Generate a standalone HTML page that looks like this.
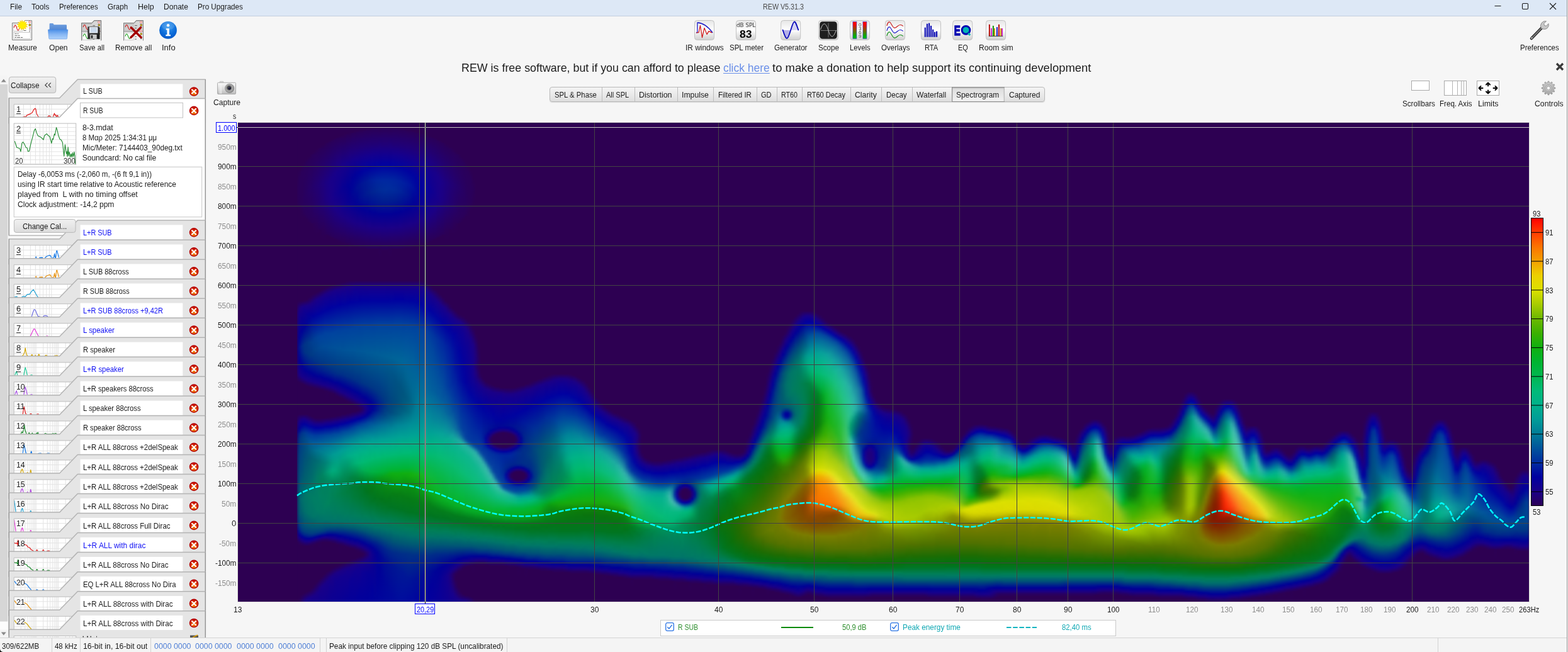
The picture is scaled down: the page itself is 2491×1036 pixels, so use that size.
<!DOCTYPE html>
<html lang="en"><head><meta charset="utf-8"><title>REW V5.31.3</title>
<style>
html,body{margin:0;padding:0;}
body{width:2491px;height:1036px;overflow:hidden;background:#f6f6f6;font-family:"Liberation Sans",sans-serif;position:relative;}
.t{position:absolute;white-space:pre;margin:0;padding:0;}
.b{position:absolute;box-sizing:border-box;display:block;}
.spi{position:absolute;left:0;top:0;width:2051px;height:761px;filter:url(#hb);}
.spi i{position:absolute;top:0;height:761px;display:block;}
</style></head><body>
<div class="b" style="left:2489.00px;top:0.00px;width:2.00px;height:1036.00px;background:#f0f0f0;border-left:1px solid #9a9a9a;"></div>
<div class="b" style="left:378.00px;top:195.00px;width:2051.00px;height:761.00px;background:#2d0052;"></div>
<svg class="b" width="0" height="0" style="left:0;top:0"><defs><filter id="hb" x="0" y="0" width="1" height="1" color-interpolation-filters="sRGB"><feGaussianBlur stdDeviation="1.800 0" edgeMode="duplicate"/></filter></defs></svg>
<div class="b" style="left:378px;top:195px;width:94px;height:761px;background:#2d0052;z-index:1;"></div>
<div class="b sp" style="left:378px;top:195px;width:2051px;height:761px;overflow:hidden;"><div class="spi"><i style="left:92px;width:4px;background:linear-gradient(#2d0052 1px,#2d0052 87px,#2c0056 103px,#2c0055 121px,#2d0052 135px,#2d0052 285px,#24006c 303px,#170074 363px,#24006b 397px,#2d0052 411px,#2d0052 465px,#23006d 479px,#170074 491px,#16116f 503px,#161d6a 527px,#162467 565px,#162c63 607px,#161f69 633px,#160e70 643px,#180073 649px,#24006b 657px,#2d0052 667px,#2d0052 761px)"></i><i style="left:96px;width:4px;background:linear-gradient(#2d0052 1px,#2d0052 75px,#2a005b 89px,#2a005a 127px,#2d0052 139px,#2d0052 283px,#28005f 287px,#1c0083 295px,#13008c 305px,#010395 341px,#001690 357px,#030094 379px,#1a0086 401px,#2d0052 413px,#2d0052 463px,#200078 471px,#17008a 475px,#030295 485px,#000d94 489px,#002a8b 495px,#003785 503px,#00477c 543px,#004e78 565px,#00616e 597px,#005973 621px,#003d81 641px,#00208d 649px,#050193 655px,#16008a 659px,#29005e 667px,#2d0052 671px,#2d0052 753px,#2b0059 761px)"></i><i style="left:100px;width:4px;background:linear-gradient(#2d0052 1px,#2d0052 67px,#2a005b 79px,#2a005b 129px,#2c0055 141px,#2d0052 157px,#2d0052 283px,#1a0087 293px,#0a0091 311px,#000295 331px,#002a8a 355px,#00248c 365px,#010195 385px,#16008a 403px,#1a0086 405px,#2d0052 415px,#2d0052 463px,#1a0086 471px,#040098 479px,#000999 483px,#00348d 493px,#004185 501px,#005078 551px,#00646c 585px,#006e6b 599px,#00656c 617px,#00487c 643px,#003883 649px,#001690 655px,#000794 657px,#050093 659px,#180088 663px,#280060 669px,#2d0052 673px,#2d0052 749px,#24006d 759px,#23006f 761px)"></i><i style="left:104px;width:4px;background:linear-gradient(#2d0052 1px,#2d0052 61px,#2a005b 73px,#28005f 121px,#2a005a 143px,#2d0052 151px,#2d0052 281px,#2c0056 283px,#1b0084 291px,#11008f 297px,#000395 325px,#003486 353px,#003187 365px,#020095 393px,#1a0087 407px,#2d0052 417px,#2d0052 463px,#1a0088 471px,#01009d 479px,#003a93 493px,#004989 503px,#005178 531px,#00646c 577px,#007568 595px,#006f6b 617px,#005675 639px,#00417f 649px,#00268b 655px,#000894 659px,#050093 661px,#190088 665px,#250069 669px,#2d0052 673px,#2d0052 747px,#1d0080 759px,#1c0083 761px)"></i><i style="left:108px;width:4px;background:linear-gradient(#2d0052 1px,#2d0052 57px,#2a005a 63px,#270063 111px,#2a005a 149px,#2d0052 155px,#2d0052 281px,#1a0088 291px,#070096 305px,#000596 319px,#001c90 335px,#003688 349px,#003785 365px,#00218d 379px,#010195 395px,#1a0087 409px,#2d0052 419px,#2d0052 463px,#220070 469px,#18008a 473px,#00039f 481px,#00399a 493px,#004b94 501px,#005581 517px,#005874 537px,#00676c 573px,#007866 591px,#007369 619px,#005774 641px,#003f80 651px,#001f8d 657px,#010095 661px,#16008a 665px,#2d0052 673px,#2d0052 745px,#1a0087 757px,#180089 761px)"></i><i style="left:112px;width:4px;background:linear-gradient(#2d0052 1px,#2d0052 53px,#2a005b 59px,#260067 107px,#2a005a 153px,#2d0052 159px,#2d0052 277px,#260067 283px,#1b0085 289px,#070097 303px,#000599 313px,#002491 335px,#003b8b 349px,#003885 369px,#00218d 383px,#000195 397px,#1b0086 411px,#280062 417px,#2d0052 421px,#2d0052 465px,#220071 471px,#18018b 475px,#0104a0 483px,#003c9d 495px,#005397 505px,#005e88 517px,#005c73 533px,#006a6c 569px,#007b65 591px,#007668 621px,#005a72 641px,#003b82 653px,#00238c 657px,#020095 661px,#190088 665px,#260066 669px,#2d0052 673px,#2d0052 743px,#1a0088 755px,#16008b 761px)"></i><i style="left:116px;width:4px;background:linear-gradient(#2d0052 1px,#2d0052 49px,#2a0059 51px,#24006a 103px,#29005d 149px,#2a0059 159px,#2d0052 161px,#2d0052 273px,#270064 279px,#1a0087 287px,#01009d 307px,#003093 337px,#003f90 349px,#003b86 369px,#00268c 383px,#000195 399px,#17008a 411px,#210074 415px,#2d0052 421px,#2d0052 467px,#220072 473px,#18018b 477px,#03019e 483px,#0110a0 487px,#01409e 497px,#005c98 509px,#006687 521px,#006273 533px,#006a6c 559px,#007d64 595px,#007568 625px,#005873 643px,#003c82 653px,#00208d 657px,#000c93 659px,#060093 661px,#13008c 663px,#24006c 667px,#2c0056 671px,#2d0052 683px,#2d0052 739px,#23006d 747px,#1a0087 753px,#15008b 761px)"></i><i style="left:120px;width:4px;background:linear-gradient(#2d0052 1px,#2d0052 45px,#2a005b 51px,#23006e 101px,#270064 141px,#2c0056 163px,#2d0052 173px,#2d0052 271px,#280060 275px,#1b0085 283px,#00029f 307px,#003f96 343px,#00428c 361px,#003287 379px,#000a93 397px,#010095 401px,#1a0088 413px,#270063 419px,#2d0052 423px,#2d0052 469px,#210074 475px,#15008d 479px,#0001a0 485px,#003d9e 497px,#005d9a 509px,#006e8d 521px,#006672 535px,#007469 563px,#007f63 599px,#007767 625px,#005d70 641px,#00417f 651px,#002a8a 655px,#010295 659px,#1a0086 663px,#270063 667px,#2d0052 671px,#2d0052 733px,#28005f 739px,#1a0087 751px,#14008c 761px)"></i><i style="left:124px;width:4px;background:linear-gradient(#2d0052 1px,#2d0052 41px,#2a005c 49px,#220072 99px,#25006a 135px,#2c0056 167px,#2d0052 179px,#2d0052 269px,#280061 273px,#1a0088 281px,#0002a0 305px,#00419a 341px,#004590 359px,#003586 379px,#00198f 393px,#010095 403px,#17008a 413px,#210075 417px,#2d0052 423px,#2d0052 469px,#270062 473px,#16008c 479px,#0000a0 485px,#003d9e 497px,#005f9b 509px,#007491 521px,#006c72 537px,#007b64 563px,#007e64 583px,#007e64 615px,#006e6c 633px,#005973 643px,#003e81 651px,#00218d 655px,#000b93 657px,#080092 659px,#16008a 661px,#250068 665px,#2d0052 669px,#2d0052 729px,#1a0086 747px,#13008d 761px)"></i><i style="left:128px;width:4px;background:linear-gradient(#2d0052 1px,#2d0052 39px,#2a0059 41px,#200076 97px,#220070 129px,#2a0059 169px,#2d0052 171px,#2d0052 267px,#190088 279px,#0002a0 303px,#00419d 339px,#004894 357px,#003686 381px,#00188f 395px,#000295 403px,#190088 415px,#270063 421px,#2d0052 425px,#2d0052 469px,#280061 473px,#16008c 479px,#0001a0 485px,#00409e 497px,#00679a 511px,#007a93 521px,#007274 537px,#007e61 561px,#007e5d 569px,#008162 593px,#007c64 619px,#00706b 633px,#005873 643px,#00447e 649px,#002b8a 653px,#020095 657px,#1c0081 661px,#23006d 663px,#2c0056 667px,#2d0052 679px,#2d0052 725px,#1c0082 739px,#16008a 747px,#12008d 761px)"></i><i style="left:132px;width:4px;background:linear-gradient(#2d0052 1px,#2d0052 35px,#29005c 43px,#1f007b 97px,#210075 127px,#2c0056 173px,#2d0052 185px,#2d0052 265px,#180089 277px,#0003a0 301px,#00439d 339px,#004a95 357px,#003886 381px,#001d8e 395px,#000095 405px,#16008a 415px,#1c0083 417px,#2d0052 425px,#2d0052 469px,#220071 475px,#15008d 479px,#0003a0 485px,#00439e 497px,#007498 515px,#007f92 523px,#007975 539px,#008362 559px,#00815b 567px,#00815f 595px,#007d63 619px,#00716b 633px,#005774 643px,#004080 649px,#00238c 653px,#000c93 655px,#080092 657px,#17008a 659px,#260066 663px,#2d0052 667px,#2d0052 721px,#190088 737px,#11008e 761px)"></i><i style="left:136px;width:4px;background:linear-gradient(#2d0052 1px,#2d0052 33px,#29005c 41px,#1d007f 95px,#1e007c 123px,#2c0056 175px,#2d0052 185px,#2d0052 263px,#1c0084 273px,#110091 281px,#0003a0 299px,#00419e 335px,#004b98 355px,#003885 383px,#00218d 395px,#010095 407px,#190088 417px,#270063 423px,#2d0052 427px,#2d0052 469px,#200077 475px,#1a0087 477px,#03009d 483px,#0012a0 487px,#00469d 497px,#007d97 517px,#00858d 527px,#007f75 541px,#008c69 557px,#00845d 567px,#00805e 587px,#008160 611px,#007569 631px,#005575 643px,#003b82 649px,#001c8e 653px,#000694 655px,#190088 659px,#270063 663px,#2d0052 667px,#2d0052 717px,#190088 733px,#10008f 761px)"></i><i style="left:140px;width:4px;background:linear-gradient(#2d0052 1px,#2d0052 31px,#2a0059 33px,#1b0084 95px,#1c0082 121px,#2a0059 177px,#2d0052 179px,#2d0052 261px,#1c0084 271px,#110091 279px,#0002a0 297px,#00429e 335px,#004c97 357px,#003885 385px,#00218d 397px,#000295 407px,#16008a 417px,#1c0084 419px,#28005f 425px,#2c0055 427px,#2d0052 443px,#2d0052 467px,#2c0055 469px,#1e007c 475px,#17008a 477px,#01009f 483px,#00499d 497px,#008098 517px,#008c90 527px,#008878 541px,#009871 555px,#008c61 565px,#00805d 577px,#00835d 605px,#007568 631px,#005b72 641px,#004080 647px,#001391 653px,#000095 655px,#190088 659px,#260065 663px,#2d0052 667px,#2d0052 713px,#190088 729px,#0e0090 761px)"></i><i style="left:144px;width:4px;background:linear-gradient(#2d0052 1px,#2d0052 29px,#2a0059 31px,#190088 93px,#1b0085 125px,#2a0059 179px,#2d0052 181px,#2d0052 259px,#1c0083 269px,#110090 277px,#0001a0 295px,#00439e 335px,#004e97 357px,#003885 387px,#00208d 399px,#000195 409px,#180089 419px,#2d0052 429px,#2d0052 467px,#270062 471px,#16008c 477px,#0001a0 483px,#004b9d 497px,#008398 517px,#00938f 529px,#00927c 541px,#00a276 555px,#009566 563px,#00835d 573px,#00835a 601px,#007668 631px,#00676c 637px,#005376 643px,#002f88 649px,#010095 655px,#17008a 659px,#29005e 665px,#2d0052 667px,#2d0052 711px,#1b0084 723px,#13008d 735px,#0d0091 761px)"></i><i style="left:148px;width:4px;background:linear-gradient(#2d0052 1px,#2d0052 27px,#2a005a 29px,#180089 87px,#180089 121px,#1e007c 141px,#2a005a 181px,#2d0052 183px,#2d0052 257px,#180089 269px,#0001a0 293px,#00449e 335px,#004f98 357px,#003a85 387px,#002a8a 397px,#010095 411px,#1a0087 421px,#270062 427px,#2d0052 431px,#2d0052 467px,#210073 473px,#1c0084 475px,#04009c 481px,#0004a0 483px,#00469d 495px,#007e98 513px,#009894 527px,#009b7f 541px,#00a97c 553px,#00a370 559px,#00855c 571px,#008156 591px,#007e5e 615px,#007469 633px,#005c71 641px,#003c81 647px,#000195 655px,#14008c 659px,#1d0081 661px,#270062 665px,#2d0052 669px,#2d0052 707px,#260066 713px,#190088 721px,#0d0091 751px,#0c0092 761px)"></i><i style="left:152px;width:4px;background:linear-gradient(#2d0052 1px,#2d0052 25px,#2a005a 27px,#180089 81px,#13008c 115px,#1b0085 137px,#2a005a 183px,#2d0052 185px,#2d0052 257px,#190089 267px,#0003a0 293px,#00439e 333px,#005099 357px,#003a85 389px,#002a8a 399px,#020095 413px,#1b0085 423px,#2b0057 431px,#2d0052 435px,#2d0052 465px,#2c0055 467px,#1f007b 473px,#180089 475px,#02009e 481px,#004a9d 495px,#008198 513px,#009c93 527px,#00a081 541px,#00a97a 553px,#009c6a 561px,#00855a 571px,#008253 593px,#007965 629px,#00706b 635px,#005c71 641px,#003d81 647px,#000395 655px,#1a0087 661px,#250067 665px,#2d0052 669px,#2d0052 705px,#28005f 709px,#1b0085 717px,#12008e 727px,#0b0093 761px)"></i><i style="left:156px;width:4px;background:linear-gradient(#2d0052 1px,#2d0052 23px,#2a0059 25px,#1e007e 63px,#16008b 79px,#10008e 113px,#1b0085 141px,#2a005b 183px,#2a0059 185px,#2d0052 187px,#2d0052 255px,#23006e 261px,#1b0085 265px,#0e0093 275px,#0002a0 291px,#00429e 331px,#005198 359px,#003c85 389px,#002e88 399px,#000195 413px,#1b0085 425px,#2d0052 435px,#2d0052 465px,#220070 471px,#15008c 475px,#0001a0 481px,#004c9d 495px,#008198 511px,#009d94 525px,#00a47d 545px,#00a372 555px,#008557 571px,#00814f 591px,#007e5c 615px,#007469 633px,#005c71 641px,#003087 649px,#000794 655px,#040094 657px,#15008b 661px,#2a005c 669px,#2d0052 671px,#2d0052 703px,#29005f 707px,#1b0086 715px,#100090 729px,#0a0094 761px)"></i><i style="left:160px;width:4px;background:linear-gradient(#2d0052 1px,#2d0052 21px,#2a005b 25px,#1d007f 61px,#16008b 75px,#0c0090 109px,#1b0085 145px,#2a005c 183px,#2a0059 187px,#2d0052 189px,#2d0052 255px,#1a0088 265px,#0000a0 289px,#00429e 331px,#005298 359px,#003d85 389px,#003087 399px,#000195 415px,#1a0087 427px,#2d0052 437px,#2d0052 465px,#200078 471px,#1a0087 473px,#03009e 479px,#001ea0 485px,#00509c 495px,#008498 511px,#009e95 523px,#00a17f 539px,#009c6b 555px,#008250 573px,#00804c 591px,#007e5b 615px,#007568 633px,#005d70 641px,#003286 649px,#000195 657px,#180089 663px,#280060 669px,#2c0055 671px,#2d0052 687px,#2d0052 701px,#29005e 705px,#1b0085 713px,#12008f 723px,#090094 761px)"></i><i style="left:164px;width:4px;background:linear-gradient(#2d0052 1px,#2d0052 19px,#29005d 27px,#17008a 69px,#090092 103px,#13008c 135px,#1c0083 149px,#29005d 183px,#2d0052 193px,#2d0052 253px,#23006d 259px,#1c0084 263px,#110091 271px,#0002a0 289px,#00439e 331px,#005297 361px,#003c85 391px,#002d89 401px,#000195 417px,#1a0086 429px,#270063 435px,#2d0052 439px,#2d0052 463px,#230070 469px,#16008c 473px,#0002a0 479px,#00469d 491px,#008398 509px,#009f95 521px,#00a484 533px,#009461 557px,#00814b 573px,#007f47 589px,#007e5a 615px,#007667 633px,#005e6f 641px,#003386 649px,#000495 657px,#15008b 663px,#1d0081 665px,#270064 669px,#2d0052 673px,#2d0052 699px,#29005e 703px,#1b0085 711px,#12008f 721px,#080095 761px)"></i><i style="left:168px;width:4px;background:linear-gradient(#2d0052 1px,#2d0052 17px,#29005e 27px,#16008b 67px,#060093 101px,#0f008e 133px,#1b0084 151px,#29005e 183px,#2d0052 195px,#2d0052 253px,#1a0088 263px,#0003a0 289px,#00429e 329px,#005398 361px,#003f86 389px,#003187 401px,#000195 419px,#1b0085 431px,#2d0052 441px,#2d0052 463px,#200077 469px,#1a0087 471px,#03009d 477px,#0013a0 481px,#004b9d 491px,#008398 507px,#00a095 519px,#00a786 531px,#008d58 559px,#007f45 575px,#007e45 591px,#007c60 625px,#007469 635px,#005774 643px,#001e8e 653px,#020095 659px,#190088 665px,#280061 671px,#2c0056 673px,#2d0052 679px,#2d0052 699px,#1b0085 709px,#120090 719px,#070096 761px)"></i><i style="left:172px;width:4px;background:linear-gradient(#2d0052 1px,#2d0052 17px,#2a0059 19px,#1f0079 49px,#15008c 65px,#030095 99px,#0a0091 129px,#1b0085 153px,#29005e 185px,#2a0059 191px,#2d0052 193px,#2d0052 251px,#2c0056 253px,#1c0083 261px,#13008f 267px,#0001a0 287px,#00429e 329px,#005498 361px,#004086 389px,#003187 403px,#010095 421px,#1a0087 433px,#2d0052 443px,#2d0052 461px,#270062 465px,#16008b 471px,#0002a0 477px,#004f9c 491px,#008798 507px,#00a393 519px,#00ab88 529px,#00905a 555px,#007f43 571px,#007d3f 587px,#007d5c 621px,#007469 635px,#005973 643px,#00188f 655px,#000395 659px,#1b0085 667px,#29005e 673px,#2d0052 675px,#2d0052 697px,#1c0083 707px,#14008e 713px,#060097 759px,#060097 761px)"></i><i style="left:176px;width:4px;background:linear-gradient(#2d0052 1px,#2d0052 15px,#29005d 23px,#1c0082 53px,#0d0092 73px,#000196 103px,#090092 131px,#1b0085 155px,#28005f 185px,#2c0056 193px,#2d0052 205px,#2d0052 251px,#1b0086 261px,#0000a0 285px,#00439e 329px,#005598 361px,#004086 391px,#003087 405px,#010095 423px,#1a0087 435px,#2d0052 445px,#2d0052 461px,#210074 467px,#1b0085 469px,#02009e 475px,#004c9d 489px,#008698 505px,#00a394 517px,#00ae88 529px,#009d67 547px,#008245 565px,#007b3a 581px,#007e47 601px,#007a64 631px,#00706b 637px,#005b71 643px,#001c8e 655px,#010095 661px,#16008a 667px,#270063 673px,#2d0052 677px,#2d0052 695px,#2b0056 697px,#190089 707px,#0b0095 729px,#050098 761px)"></i><i style="left:180px;width:4px;background:linear-gradient(#2d0052 1px,#2d0052 15px,#2a005a 17px,#1f0079 45px,#16008b 59px,#010098 89px,#000595 111px,#080092 133px,#1b0085 157px,#280060 185px,#2a005a 193px,#2d0052 195px,#2d0052 251px,#190089 261px,#0001a0 285px,#00429e 327px,#005598 361px,#004186 391px,#002f88 407px,#010195 425px,#190087 437px,#2d0052 447px,#2d0052 459px,#23006f 465px,#16008c 469px,#05009b 473px,#0005a0 475px,#00419e 485px,#008498 503px,#00a394 515px,#00b087 529px,#00a86f 543px,#008443 563px,#007a35 579px,#007c3f 597px,#007c5e 625px,#007568 635px,#005d70 643px,#001690 657px,#000395 661px,#1a0086 669px,#29005e 675px,#2d0052 677px,#2d0052 693px,#29005f 697px,#1a0088 705px,#0c0094 723px,#040099 761px)"></i><i style="left:184px;width:4px;background:linear-gradient(#2d0052 1px,#2d0052 13px,#2a005a 17px,#200078 43px,#16008b 57px,#010099 83px,#000a94 107px,#040094 131px,#1b0085 159px,#28005f 187px,#2b0059 195px,#2d0052 197px,#2d0052 251px,#1c0083 259px,#12008f 265px,#0002a0 285px,#00419e 325px,#005699 361px,#004387 391px,#003386 407px,#000195 427px,#190088 439px,#29005e 447px,#2d0052 451px,#2d0052 459px,#200078 465px,#190088 467px,#0002a0 473px,#00409e 483px,#007c98 499px,#00a294 513px,#00b288 527px,#00b074 541px,#00853f 563px,#007a32 577px,#007b39 595px,#007d5b 623px,#007767 635px,#005f6f 643px,#001b8f 657px,#010095 663px,#16008a 669px,#270063 675px,#2d0052 679px,#2d0052 693px,#1b0086 703px,#0f0092 715px,#040099 761px)"></i><i style="left:188px;width:4px;background:linear-gradient(#2d0052 1px,#2d0052 13px,#2a005a 15px,#200077 41px,#15008d 57px,#00019b 81px,#000f93 103px,#000695 123px,#040094 135px,#1b0084 161px,#280060 187px,#2a005a 195px,#2d0052 197px,#2d0052 251px,#1b0084 259px,#12008f 265px,#0003a0 285px,#00429e 325px,#005797 363px,#004387 393px,#002f88 411px,#000195 429px,#180089 441px,#2b0057 451px,#2d0052 455px,#2d0052 457px,#220071 463px,#14008d 467px,#02009e 471px,#00499d 483px,#008798 501px,#00a493 513px,#00b386 527px,#00b574 541px,#00994e 555px,#008036 567px,#00782e 581px,#007b3a 599px,#007d5b 625px,#007468 637px,#005b71 645px,#001690 659px,#000395 663px,#1a0087 671px,#280061 677px,#2c0056 679px,#2d0052 685px,#2d0052 691px,#1b0084 701px,#110090 709px,#03009a 755px,#03009a 761px)"></i><i style="left:192px;width:4px;background:linear-gradient(#2d0052 1px,#2d0052 11px,#2a005a 15px,#1f0079 41px,#15008c 55px,#00019d 79px,#001293 99px,#000e93 119px,#020095 135px,#1b0086 161px,#280061 187px,#2b0059 197px,#2d0052 199px,#2d0052 251px,#1b0084 259px,#12008f 265px,#0000a0 283px,#00409e 323px,#005798 363px,#004487 393px,#003087 413px,#000295 431px,#16008a 443px,#1f0079 447px,#29005d 453px,#2b0057 455px,#270062 459px,#18008a 465px,#06009a 469px,#00059f 471px,#003b9e 479px,#005e9b 487px,#009798 505px,#00ae8d 519px,#00b772 541px,#00a452 553px,#008232 567px,#00782a 579px,#007934 597px,#007d5a 625px,#007668 637px,#005674 647px,#001391 661px,#010195 665px,#1b0085 673px,#28005f 679px,#2d0052 683px,#2d0052 689px,#24006c 695px,#1c0083 699px,#13008f 705px,#04009a 745px,#02009b 761px)"></i><i style="left:196px;width:4px;background:linear-gradient(#2d0052 1px,#2d0052 11px,#2a005b 15px,#1f007a 41px,#14008e 55px,#00029e 77px,#001694 97px,#001392 117px,#020095 137px,#1b0085 163px,#280060 189px,#2a0059 197px,#2d0052 199px,#2d0052 251px,#1b0084 259px,#12008f 265px,#0001a0 283px,#00419e 323px,#005898 363px,#004688 393px,#003586 413px,#020095 435px,#1a0087 447px,#24006a 453px,#250069 457px,#1e007d 461px,#100090 465px,#01029e 469px,#00429e 479px,#079 493px,#00a294 509px,#00b287 523px,#00b974 539px,#00ae57 551px,#008430 567px,#007826 577px,#00782c 593px,#007d46 613px,#007b62 633px,#006e6c 641px,#005a72 647px,#001a8f 661px,#010095 667px,#15008b 673px,#1c0083 675px,#28005f 681px,#2d0052 685px,#2b0057 689px,#190089 699px,#0b0095 715px,#01009b 761px)"></i><i style="left:200px;width:4px;background:linear-gradient(#2d0052 1px,#2d0052 11px,#2a005a 13px,#210076 37px,#15008d 53px,#00039f 75px,#001895 95px,#001892 115px,#020095 139px,#1c0083 165px,#280061 189px,#2a005a 197px,#2d0052 199px,#2d0052 251px,#1b0084 259px,#100091 267px,#0001a0 283px,#00429e 323px,#005998 363px,#004989 391px,#003586 415px,#010095 437px,#1b0085 451px,#1e007c 455px,#15008b 461px,#01029b 467px,#00499d 479px,#008698 497px,#00a394 509px,#00b386 523px,#00b970 539px,#00ae4f 553px,#007f27 571px,#007520 583px,#007a38 607px,#007e57 625px,#007568 639px,#005674 649px,#000f92 665px,#020095 669px,#1b0084 677px,#270063 683px,#280060 687px,#200078 693px,#180089 697px,#0a0095 715px,#01009c 761px)"></i><i style="left:204px;width:4px;background:linear-gradient(#2d0052 1px,#2d0052 9px,#2a005a 13px,#200077 37px,#16008c 51px,#0002a0 73px,#001b97 93px,#001c91 113px,#000595 135px,#050094 143px,#1b0085 165px,#280062 189px,#2b0059 199px,#2d0052 201px,#2d0052 251px,#1b0084 259px,#100091 267px,#0001a0 283px,#00429e 323px,#005a97 365px,#004888 395px,#003586 417px,#000195 439px,#13008c 455px,#030096 463px,#000499 465px,#00489c 477px,#008998 497px,#00a593 509px,#00b484 523px,#00b971 537px,#00b14d 553px,#009130 565px,#017a1e 575px,#00751e 587px,#007a38 609px,#007e58 627px,#007667 639px,#005476 651px,#001690 665px,#020095 671px,#190087 679px,#210075 683px,#220072 687px,#17008a 695px,#070096 717px,#00009c 761px)"></i><i style="left:208px;width:4px;background:linear-gradient(#2d0052 1px,#2d0052 9px,#2a005b 13px,#200078 37px,#15008d 51px,#0001a0 71px,#001d9a 91px,#002091 111px,#000b93 133px,#010095 141px,#1b0087 165px,#270062 189px,#2a0059 199px,#2d0052 201px,#2d0052 251px,#1b0084 259px,#100092 267px,#0002a0 283px,#00429e 323px,#005a98 365px,#004b89 393px,#003685 419px,#010195 443px,#080092 455px,#000396 461px,#002797 469px,#004e9b 477px,#009098 499px,#00ad8e 513px,#00b972 535px,#00af45 555px,#027e1d 573px,#03761a 585px,#00772b 603px,#007d59 629px,#007469 641px,#005973 651px,#001590 667px,#020095 673px,#180089 683px,#16008a 691px,#060097 717px,#00019c 761px)"></i><i style="left:212px;width:4px;background:linear-gradient(#2d0052 1px,#2d0052 9px,#2a005a 11px,#200076 35px,#16008c 49px,#0003a0 71px,#00209c 91px,#002392 111px,#000d93 133px,#020095 143px,#1b0084 167px,#280061 191px,#2a005a 199px,#2d0052 201px,#2d0052 251px,#1b0084 259px,#100092 267px,#0002a0 283px,#00409e 321px,#005b98 365px,#004e8a 391px,#003685 421px,#000295 447px,#000595 457px,#002893 467px,#00599a 479px,#009c98 503px,#00b189 517px,#00ba74 533px,#00b143 555px,#03841d 571px,#057817 581px,#007625 601px,#007d4a 621px,#007965 639px,#00676c 647px,#00477c 657px,#001590 669px,#010195 675px,#0f008e 687px,#00009c 743px,#00029c 761px)"></i><i style="left:216px;width:4px;background:linear-gradient(#2d0052 1px,#2d0052 9px,#2a005a 11px,#200076 35px,#15008c 49px,#0001a0 69px,#00239e 91px,#002693 109px,#001192 131px,#010095 143px,#1b0085 167px,#280061 191px,#2a005a 199px,#2d0052 201px,#2d0052 251px,#1b0084 259px,#100092 267px,#0002a0 283px,#00419e 321px,#005c97 367px,#004f8b 391px,#003785 423px,#000a93 449px,#001192 457px,#003b92 469px,#006a9a 483px,#00a095 505px,#00b386 519px,#00b971 533px,#00b140 555px,#029725 565px,#058018 575px,#01751e 597px,#007b3e 617px,#007e56 629px,#007568 643px,#005a72 653px,#001c8e 669px,#010195 679px,#080092 693px,#00039c 761px)"></i><i style="left:220px;width:4px;background:linear-gradient(#2d0052 1px,#2d0052 9px,#2a005a 11px,#200077 35px,#15008d 49px,#0003a0 69px,#00259f 91px,#002996 107px,#001691 129px,#030094 145px,#1b0086 167px,#280061 191px,#2a005a 199px,#2d0052 201px,#2d0052 251px,#1b0084 259px,#100092 267px,#0002a0 283px,#00429e 321px,#005d98 367px,#00508b 391px,#003685 427px,#001690 449px,#001d8f 457px,#004290 469px,#006899 481px,#00a195 505px,#00b386 519px,#00ba75 531px,#00b13d 555px,#039e25 563px,#068818 571px,#047819 591px,#007628 607px,#007e57 631px,#007667 643px,#005674 655px,#001d8e 671px,#000295 683px,#00009a 725px,#00049c 761px)"></i><i style="left:224px;width:4px;background:linear-gradient(#2d0052 1px,#2c0055 9px,#1d007f 39px,#0c0095 57px,#0000a0 67px,#0026a0 91px,#002b97 107px,#001990 127px,#020095 145px,#1b0086 167px,#280062 191px,#2c0055 201px,#2d0052 217px,#2d0052 251px,#1b0084 259px,#100092 267px,#0002a0 283px,#00429e 321px,#005d97 369px,#00518b 393px,#003685 431px,#00218d 449px,#002c8b 459px,#00478e 469px,#006c99 481px,#00a096 503px,#00b288 517px,#00b973 531px,#00b239 555px,#07981c 565px,#078816 573px,#02751c 599px,#007937 617px,#007e58 633px,#076 643px,#005475 657px,#001f8d 673px,#000794 687px,#000197 709px,#00059c 761px)"></i><i style="left:228px;width:4px;background:linear-gradient(#2d0052 1px,#2d0052 7px,#2a005a 11px,#200078 35px,#14008d 49px,#0001a0 67px,#0027a0 91px,#002c99 107px,#001d90 125px,#020095 145px,#1a0087 167px,#270062 191px,#2b0059 201px,#2d0052 203px,#2d0052 251px,#1b0084 259px,#100092 267px,#0002a0 283px,#00429e 321px,#005e98 369px,#00528b 393px,#003884 435px,#002b89 449px,#003587 459px,#004c8c 469px,#007098 481px,#00a095 503px,#00b386 517px,#00b970 531px,#00b235 555px,#089e1b 563px,#088c16 571px,#02751b 599px,#00772c 613px,#007e57 633px,#007668 645px,#005376 659px,#00228d 675px,#000b93 691px,#000498 721px,#00069c 761px)"></i><i style="left:232px;width:4px;background:linear-gradient(#2d0052 1px,#2d0052 7px,#2a005a 11px,#200078 35px,#14008d 49px,#0001a0 67px,#0027a0 91px,#002d9a 107px,#001f8f 123px,#020095 145px,#1c0083 169px,#280060 193px,#2b0059 201px,#2d0052 203px,#2d0052 251px,#1b0084 259px,#100092 267px,#0002a0 283px,#00429e 321px,#005f97 371px,#00528a 395px,#003b82 437px,#003585 451px,#004786 465px,#007398 481px,#00a195 503px,#00b386 517px,#00ba73 529px,#00b338 553px,#09a51b 561px,#098f15 571px,#067f16 587px,#01751d 603px,#007935 619px,#007e56 633px,#076 645px,#005277 661px,#00258c 677px,#000e93 695px,#000799 731px,#00079c 761px)"></i><i style="left:236px;width:4px;background:linear-gradient(#2d0052 1px,#2d0052 7px,#2a005a 11px,#200078 35px,#14008d 49px,#0001a0 67px,#0027a0 91px,#002d9c 105px,#001f90 123px,#020095 145px,#1a0087 167px,#270062 191px,#2b0059 201px,#2d0052 203px,#2d0052 251px,#1b0084 259px,#0f0092 267px,#0002a0 283px,#00429e 321px,#006098 371px,#005389 395px,#003e81 441px,#004182 457px,#00568a 469px,#007897 481px,#00a295 503px,#00b385 517px,#00b972 529px,#00b333 553px,#0aaa19 559px,#099115 571px,#078215 585px,#02761b 601px,#007628 613px,#007e57 635px,#007668 647px,#005177 663px,#00288b 679px,#001192 697px,#000899 733px,#00089c 761px)"></i><i style="left:240px;width:4px;background:linear-gradient(#2d0052 1px,#2c0055 9px,#1d007f 39px,#0c0095 57px,#0000a0 67px,#0026a0 91px,#002c9c 105px,#001e90 123px,#020095 145px,#1b0086 167px,#280062 191px,#2c0055 201px,#2d0052 217px,#2d0052 251px,#1b0084 259px,#0f0092 267px,#0003a0 283px,#00429e 321px,#006197 373px,#005488 397px,#004280 447px,#004a81 461px,#00658f 473px,#008798 487px,#00a394 503px,#00b582 519px,#00b971 529px,#00b437 551px,#0bae19 557px,#0da713 561px,#0a9414 571px,#047818 595px,#007523 611px,#007d4a 629px,#007964 645px,#004b7a 667px,#00298a 681px,#001293 703px,#00099b 747px,#00099c 761px)"></i><i style="left:244px;width:4px;background:linear-gradient(#2d0052 1px,#2d0052 9px,#2a005a 11px,#200077 35px,#15008d 49px,#0003a0 69px,#0025a0 91px,#002b9b 107px,#001d90 123px,#030094 145px,#1b0086 167px,#280061 191px,#2a005a 199px,#2d0052 201px,#2d0052 251px,#1b0084 259px,#0f0092 267px,#0003a0 283px,#00429e 321px,#006298 373px,#005387 401px,#00467e 447px,#004f81 461px,#006a8f 473px,#008a98 487px,#00a195 501px,#00b387 515px,#00ba75 527px,#00b435 551px,#0daf16 557px,#0ea912 561px,#067e15 589px,#007522 611px,#007c42 627px,#007e58 637px,#007568 649px,#005575 665px,#002a8a 683px,#001493 705px,#000a9b 751px,#000a9c 761px)"></i><i style="left:248px;width:4px;background:linear-gradient(#2d0052 1px,#2d0052 9px,#2a005a 11px,#200076 35px,#16008c 49px,#0002a0 69px,#0023a0 91px,#00299b 107px,#001c90 123px,#010095 143px,#1b0085 167px,#280061 191px,#2a005a 199px,#2d0052 201px,#2d0052 251px,#1b0084 259px,#0f0092 267px,#0000a0 281px,#00419e 319px,#006398 375px,#005284 407px,#004a7d 447px,#005782 463px,#008297 481px,#00a294 501px,#00b483 517px,#00ba73 527px,#00b434 551px,#0daf15 557px,#0faa11 561px,#067c16 591px,#007523 613px,#007c45 629px,#007d5c 641px,#00706b 653px,#005873 665px,#002c89 683px,#001594 707px,#000b9c 755px,#000b9c 761px)"></i><i style="left:252px;width:4px;background:linear-gradient(#2d0052 1px,#2d0052 9px,#2a005a 11px,#200076 35px,#16008c 49px,#0004a0 71px,#0023a0 93px,#002699 109px,#001791 125px,#020095 143px,#1b0084 167px,#280061 191px,#2a005a 199px,#2d0052 201px,#2d0052 251px,#1b0084 259px,#0f0092 267px,#0000a0 281px,#00419e 319px,#006498 377px,#005282 415px,#004e7d 447px,#005c83 463px,#008597 481px,#00a195 499px,#00b582 517px,#00b972 527px,#00b433 551px,#0daf15 557px,#0fab11 561px,#067d15 591px,#007521 613px,#007c42 629px,#007e58 639px,#007568 651px,#005177 669px,#002e88 683px,#001794 709px,#000c9d 759px,#000c9d 761px)"></i><i style="left:256px;width:4px;background:linear-gradient(#2d0052 1px,#2d0052 9px,#2a005b 13px,#200078 37px,#15008d 51px,#0002a0 71px,#0020a0 93px,#00239a 109px,#001592 125px,#010095 141px,#1b0087 165px,#270062 189px,#2a0059 199px,#2d0052 201px,#2d0052 251px,#1b0084 259px,#0f0092 267px,#0000a0 281px,#00419e 319px,#006598 379px,#005381 419px,#00537d 449px,#006184 463px,#008797 481px,#00a295 499px,#00b484 515px,#00b970 527px,#00b438 549px,#05b326 553px,#0eaf13 557px,#0ea812 563px,#077f14 589px,#007523 615px,#007c45 631px,#007d5c 643px,#00706b 655px,#005873 667px,#002d89 685px,#001795 713px,#000c9e 761px)"></i><i style="left:260px;width:4px;background:linear-gradient(#2d0052 1px,#2d0052 9px,#2a005a 13px,#200077 37px,#16008c 51px,#0003a0 73px,#001ea0 95px,#001f98 111px,#000e93 129px,#030095 141px,#1b0085 165px,#280062 189px,#2b0059 199px,#2d0052 201px,#2d0052 251px,#1b0084 259px,#0f0092 267px,#0000a0 281px,#00409e 319px,#00659a 379px,#00547f 429px,#00597f 453px,#006d8a 467px,#008997 481px,#00a294 499px,#00b483 515px,#00ba74 525px,#00b436 549px,#0faf11 557px,#0c9c13 569px,#067c16 593px,#007521 615px,#007c42 631px,#007e58 641px,#007469 653px,#005575 669px,#002f88 685px,#001796 715px,#000c9e 761px)"></i><i style="left:264px;width:4px;background:linear-gradient(#2d0052 1px,#2d0052 11px,#2a005a 13px,#210076 37px,#15008d 53px,#0003a0 75px,#001ca0 97px,#001996 115px,#020095 139px,#1c0083 165px,#280061 189px,#2a005a 197px,#2d0052 199px,#2d0052 251px,#1b0084 259px,#0f0092 267px,#0003a0 283px,#00429e 321px,#01649b 379px,#006290 403px,#00577f 435px,#006282 457px,#008b98 481px,#00a294 499px,#00b483 515px,#00ba74 525px,#00b435 549px,#10af11 557px,#0c9b12 569px,#067c16 595px,#007522 617px,#007c44 633px,#007d5d 645px,#006e6c 657px,#005774 669px,#002f88 685px,#001796 719px,#000b9e 761px)"></i><i style="left:268px;width:4px;background:linear-gradient(#2d0052 1px,#2d0052 11px,#2a005b 15px,#1f007b 41px,#14008e 55px,#0003a0 77px,#0018a0 97px,#001596 115px,#020095 137px,#1b0085 163px,#280060 189px,#2a0059 197px,#2d0052 199px,#2d0052 251px,#1b0084 259px,#0f0092 267px,#0003a0 283px,#00429e 321px,#01629b 377px,#006594 405px,#005c82 439px,#006985 459px,#008b97 479px,#00a394 499px,#00b680 517px,#00ba73 525px,#00b436 549px,#10af11 557px,#0fa810 563px,#0b9212 575px,#057b16 597px,#007523 619px,#007d48 635px,#007d5c 645px,#00706b 657px,#005873 669px,#003187 685px,#001597 725px,#00099e 761px)"></i><i style="left:272px;width:4px;background:linear-gradient(#2d0052 1px,#2d0052 11px,#2a005a 15px,#1f0079 41px,#16008c 55px,#0002a0 79px,#0014a0 99px,#000e96 119px,#020095 135px,#1b0086 161px,#280061 187px,#2b0059 197px,#2d0052 199px,#2d0052 251px,#1b0084 259px,#100092 267px,#0002a0 283px,#00439e 323px,#01609b 377px,#006794 413px,#006386 443px,#00728a 461px,#009098 481px,#00a792 501px,#00ba78 523px,#02b537 549px,#11b012 557px,#13ac0f 561px,#0b9212 575px,#057b17 599px,#007521 619px,#007c46 635px,#007d5a 645px,#00726a 657px,#005575 671px,#003286 685px,#001497 725px,#00089e 761px)"></i><i style="left:276px;width:4px;background:linear-gradient(#2d0052 1px,#2d0052 13px,#2a005a 15px,#200077 41px,#15008d 57px,#0003a0 83px,#00109f 103px,#000496 125px,#0b0090 143px,#1b0084 161px,#280060 187px,#2a005a 195px,#2d0052 197px,#2d0052 251px,#1b0084 259px,#100092 267px,#0002a0 283px,#00429e 323px,#015e9c 375px,#006a95 421px,#006d8b 449px,#008b97 475px,#00a394 497px,#00b582 515px,#00b972 525px,#05b531 551px,#12b116 557px,#15ae11 561px,#0b9412 575px,#057b17 601px,#007521 619px,#007c44 635px,#007d59 645px,#007369 657px,#005774 671px,#003087 687px,#001197 727px,#00079e 761px)"></i><i style="left:280px;width:4px;background:linear-gradient(#2d0052 1px,#2d0052 13px,#2a005a 17px,#200078 43px,#17008b 57px,#0003a0 87px,#000b9d 107px,#040095 131px,#1b0085 159px,#28005f 187px,#2b0059 195px,#2d0052 197px,#2d0052 251px,#1c0084 259px,#120090 265px,#0004a0 285px,#00439e 325px,#015e9c 381px,#007193 439px,#008496 467px,#00a195 495px,#00b582 515px,#00b972 525px,#04b644 545px,#06b636 551px,#15b115 559px,#0b9513 577px,#057c17 601px,#007623 621px,#007e4c 639px,#076 655px,#005376 673px,#003088 687px,#001097 725px,#00059e 761px)"></i><i style="left:284px;width:4px;background:linear-gradient(#2d0052 1px,#2d0052 15px,#2a005a 17px,#200079 45px,#15008d 61px,#0003a0 93px,#00049b 113px,#0b0091 137px,#1b0085 157px,#280060 185px,#2a005a 193px,#2d0052 195px,#2d0052 251px,#1c0083 259px,#13008f 265px,#0001a0 285px,#01449e 327px,#01629b 399px,#008497 463px,#00a195 495px,#00b581 515px,#01b96d 527px,#05b747 545px,#09b633 553px,#16b219 559px,#0b9915 579px,#057d17 601px,#007522 621px,#007c44 637px,#007d5a 647px,#00726a 659px,#005475 673px,#002f88 687px,#000f97 723px,#00039f 761px)"></i><i style="left:288px;width:4px;background:linear-gradient(#2d0052 1px,#2d0052 15px,#29005d 23px,#1c0082 53px,#06009b 85px,#00019e 107px,#0d008f 137px,#1b0085 155px,#28005f 185px,#2c0056 193px,#2d0052 205px,#2d0052 251px,#1a0088 261px,#0004a0 289px,#01449e 329px,#017399 437px,#009a98 485px,#00b189 509px,#01ba73 525px,#05b749 545px,#09b739 553px,#17b41f 559px,#11ad19 567px,#099116 589px,#057d18 603px,#007623 623px,#007d47 639px,#007d5b 649px,#007369 659px,#005475 673px,#002f88 687px,#000f96 721px,#00029f 761px)"></i><i style="left:292px;width:4px;background:linear-gradient(#2d0052 1px,#2d0052 17px,#2a0059 19px,#1f0079 49px,#16008c 65px,#03009d 101px,#0b0091 131px,#1b0085 153px,#29005e 185px,#2a0059 191px,#2d0052 193px,#2d0052 251px,#2b0056 253px,#190189 263px,#0003a0 291px,#01429e 329px,#026f9a 433px,#00a195 493px,#00b582 515px,#02ba70 527px,#07b748 547px,#0db737 555px,#19b422 561px,#0ba71a 579px,#088e16 593px,#047c19 607px,#007521 623px,#007c45 639px,#007d5a 649px,#007369 659px,#005475 673px,#002f88 687px,#000e96 719px,#00009f 761px)"></i><i style="left:296px;width:4px;background:linear-gradient(#2d0052 1px,#2d0052 17px,#29005e 27px,#17008c 67px,#07009a 101px,#0e008f 131px,#1b0084 151px,#29005e 183px,#2d0052 195px,#2d0052 253px,#1b0187 265px,#0102a0 293px,#01409e 331px,#026b9b 431px,#00a195 493px,#00b484 513px,#02ba70 527px,#07b74a 547px,#10b839 557px,#17b62a 563px,#0bab1c 581px,#088f17 595px,#047c1a 609px,#007624 625px,#007d4a 641px,#007a64 655px,#004f78 675px,#002e88 687px,#000c96 717px,#01009d 753px,#01009e 761px)"></i><i style="left:300px;width:4px;background:linear-gradient(#2d0052 1px,#2d0052 19px,#29005d 27px,#16008c 71px,#090097 105px,#14008b 137px,#1d0081 151px,#2a005c 185px,#2d0052 193px,#2d0052 255px,#1b0187 269px,#0103a0 297px,#013b9f 331px,#01489e 353px,#02659b 425px,#029599 481px,#00b18a 507px,#02ba71 527px,#07b84d 547px,#11b838 561px,#11b426 571px,#0aa81c 587px,#058219 605px,#007520 623px,#007b3d 637px,#007e56 647px,#007469 659px,#005475 673px,#002e88 687px,#000b95 715px,#01009c 745px,#03009d 761px)"></i><i style="left:304px;width:4px;background:linear-gradient(#2d0052 1px,#2d0052 21px,#2a005b 25px,#1d0080 61px,#14008e 79px,#0d0093 109px,#1b0085 145px,#2a005c 183px,#2a0059 187px,#2d0052 189px,#2d0052 257px,#2b0058 261px,#1a0189 273px,#0102a0 299px,#01379f 333px,#01459e 351px,#02619c 425px,#039099 477px,#00a493 495px,#00b483 513px,#02ba72 527px,#08b84d 549px,#0eb83b 563px,#0fb425 575px,#0aaa1d 589px,#058219 607px,#00751f 623px,#007a3a 637px,#007e55 647px,#076 657px,#004d79 675px,#002d89 687px,#000a95 713px,#01009b 735px,#04009c 761px)"></i><i style="left:308px;width:4px;background:linear-gradient(#2d0052 1px,#2d0052 23px,#2a0059 25px,#1e007e 63px,#16008c 81px,#100090 111px,#1b0085 141px,#2a005b 183px,#2a0059 185px,#2d0052 187px,#2d0052 263px,#1c0184 275px,#0d0195 289px,#0103a0 303px,#01359f 337px,#01469e 361px,#025e9c 425px,#048799 471px,#01a295 493px,#01b485 511px,#03ba73 527px,#08b84d 551px,#0eb737 567px,#0db324 581px,#09a81d 593px,#047f1a 611px,#007520 625px,#007b3f 639px,#007e55 647px,#076 657px,#005177 673px,#002b89 687px,#000696 713px,#02009a 731px,#05009b 761px)"></i><i style="left:312px;width:4px;background:linear-gradient(#2d0052 1px,#2d0052 25px,#2a005a 27px,#18008a 81px,#14008d 115px,#1c0083 139px,#2a005a 183px,#2d0052 185px,#2d0052 265px,#210174 275px,#19018a 281px,#0104a0 307px,#01359f 343px,#01469e 375px,#025d9c 429px,#04879a 473px,#03a296 493px,#02b486 511px,#04ba72 529px,#08b84a 555px,#0eb735 571px,#0cb223 587px,#09a51d 597px,#047e1b 613px,#007521 627px,#007c44 641px,#007e58 649px,#007369 659px,#005774 671px,#002d88 685px,#000297 713px,#07009a 761px)"></i><i style="left:316px;width:4px;background:linear-gradient(#2d0052 1px,#2d0052 27px,#2a005a 29px,#19008a 87px,#180089 123px,#23006e 155px,#2a005a 181px,#2d0052 183px,#2d0052 269px,#210174 279px,#19018a 285px,#0104a0 311px,#0130a0 345px,#01459e 383px,#035a9d 431px,#05839a 471px,#04a297 493px,#03b488 511px,#05bb75 529px,#08b84b 557px,#0db428 585px,#09aa20 597px,#037d1b 615px,#007521 627px,#007c43 641px,#007d5b 651px,#006f6c 661px,#005c71 669px,#002c89 685px,#000296 709px,#080098 749px,#080098 761px)"></i><i style="left:320px;width:4px;background:linear-gradient(#2d0052 1px,#2d0052 29px,#2a0059 31px,#1a0089 93px,#1b0085 125px,#2a0059 179px,#2d0052 181px,#2d0052 273px,#220174 283px,#1a0188 289px,#0103a0 315px,#012ba0 347px,#01429e 391px,#035c9d 439px,#06889a 477px,#06a497 495px,#04b587 513px,#06bb74 531px,#09b84b 559px,#0bb327 591px,#08a720 601px,#037c1b 617px,#007523 629px,#007b41 641px,#007d5b 651px,#007369 659px,#005674 671px,#00268b 687px,#000096 707px,#0a0096 733px,#0a0097 761px)"></i><i style="left:324px;width:4px;background:linear-gradient(#2d0052 1px,#2d0052 31px,#2a0059 33px,#1c0084 95px,#1c0082 121px,#2a0059 177px,#2d0052 179px,#2d0052 277px,#230070 287px,#1a0189 293px,#0102a0 319px,#0129a0 351px,#03549d 435px,#06799b 469px,#07a398 495px,#04b38a 511px,#06bb74 533px,#09b84c 561px,#09b125 597px,#07a21f 605px,#037e1b 617px,#00751f 627px,#007a3a 639px,#007e57 649px,#007469 659px,#005774 671px,#00258c 687px,#010095 705px,#0d0092 723px,#0c0095 761px)"></i><i style="left:328px;width:4px;background:linear-gradient(#2d0052 1px,#2d0052 33px,#29005c 41px,#1d007f 95px,#1e007c 123px,#2c0056 175px,#2d0052 185px,#2d0052 283px,#1c0185 295px,#090199 313px,#0104a0 325px,#0126a0 357px,#02439f 419px,#05669c 459px,#09999c 491px,#06af90 505px,#07bb74 535px,#09b84e 563px,#09b125 599px,#07a11f 607px,#037d1c 619px,#007521 629px,#007b3f 641px,#007e57 649px,#007469 659px,#005774 671px,#00248c 687px,#010095 703px,#11008f 721px,#0e0094 761px)"></i><i style="left:332px;width:4px;background:linear-gradient(#2d0052 1px,#2d0052 35px,#29005c 43px,#1f007b 97px,#210075 127px,#2c0056 173px,#2d0052 185px,#2d0052 285px,#18018b 303px,#0103a0 329px,#011ea0 355px,#013b9f 419px,#05649d 463px,#0b959c 491px,#08ad93 503px,#07bb74 537px,#0ab84b 569px,#09b126 601px,#06a01f 609px,#03801c 619px,#007520 629px,#007b3d 641px,#007e56 649px,#007568 659px,#005276 673px,#001d8e 689px,#010095 701px,#17008a 719px,#100092 761px)"></i><i style="left:336px;width:4px;background:linear-gradient(#2d0052 1px,#2d0052 39px,#2a0059 41px,#200076 97px,#220070 129px,#2a0059 169px,#2d0052 171px,#2d0052 289px,#2b0058 293px,#1b0187 305px,#02019f 329px,#0119a0 359px,#0133a0 419px,#055d9d 463px,#0c869d 487px,#0ea69b 499px,#06b38d 513px,#07bb74 539px,#0ab849 575px,#08b127 603px,#069f1f 611px,#037e1c 621px,#007522 631px,#007b41 643px,#007e58 651px,#00726a 661px,#005973 671px,#00208d 687px,#010095 699px,#190088 713px,#1f007a 719px,#15018d 747px,#120090 761px)"></i><i style="left:340px;width:4px;background:linear-gradient(#2d0052 1px,#2d0052 41px,#2a005c 49px,#220072 99px,#25006a 135px,#2c0056 167px,#2d0052 179px,#2d0052 295px,#210177 305px,#18018b 311px,#0102a0 337px,#0115a0 365px,#0128a0 413px,#034d9e 457px,#0b749e 483px,#129e9f 497px,#0fae96 505px,#06b687 521px,#08bb72 543px,#08b229 603px,#06a421 611px,#027c1c 623px,#007623 633px,#007c45 645px,#007d5b 653px,#007369 661px,#005376 673px,#001890 689px,#010095 697px,#180089 709px,#250068 717px,#270064 723px,#220174 735px,#18018b 749px,#14008e 761px)"></i><i style="left:344px;width:4px;background:linear-gradient(#2d0052 1px,#2d0052 45px,#2a005b 51px,#23006e 101px,#270064 141px,#2c0056 163px,#2d0052 173px,#2d0052 299px,#24006e 307px,#1a0188 313px,#04019d 335px,#0114a0 391px,#0131a0 435px,#05519e 469px,#0c709f 487px,#16aa9e 503px,#08b48d 517px,#09bb72 547px,#08b532 597px,#07ad24 609px,#027a1c 625px,#007626 635px,#007d4b 647px,#076 659px,#005376 673px,#001490 689px,#010195 695px,#1b0085 707px,#29005f 715px,#2b0057 717px,#2d0052 725px,#260065 739px,#19018a 755px,#15008d 761px)"></i><i style="left:348px;width:4px;background:linear-gradient(#2d0052 1px,#2d0052 49px,#2a0059 51px,#24006a 103px,#29005d 149px,#2a0059 159px,#2d0052 161px,#2d0052 303px,#250068 309px,#1b0187 315px,#0c0196 329px,#0104a0 359px,#0115a0 409px,#054e9f 477px,#095e9f 487px,#178fa1 499px,#1caba0 505px,#0db492 515px,#08b982 533px,#0abb6c 555px,#07b635 597px,#07af26 609px,#05971f 617px,#027c1c 625px,#007521 633px,#007c43 645px,#007e56 651px,#007866 659px,#005376 673px,#001191 689px,#000195 693px,#180089 703px,#2b0057 713px,#2d0052 717px,#2d0052 737px,#25006a 749px,#1b0187 757px,#17018b 761px)"></i><i style="left:352px;width:4px;background:linear-gradient(#2d0052 1px,#2d0052 53px,#2a005b 59px,#260067 107px,#2a005a 153px,#2d0052 159px,#2d0052 305px,#29005e 309px,#1c0185 317px,#0f0193 329px,#0102a0 371px,#010ba0 407px,#013a9f 467px,#04479f 485px,#0c63a0 495px,#1786a2 501px,#20aca3 507px,#17b498 513px,#0ab58c 523px,#0abc74 553px,#07b638 597px,#07ae25 611px,#05931e 619px,#027a1d 627px,#007625 635px,#007d49 647px,#007866 659px,#005476 673px,#000e92 689px,#030094 693px,#1a0086 701px,#29005e 709px,#2d0052 713px,#2d0052 745px,#25006b 753px,#1b0187 759px,#190089 761px)"></i><i style="left:356px;width:4px;background:linear-gradient(#2d0052 1px,#2d0052 57px,#2a005a 63px,#270063 111px,#2a005a 149px,#2d0052 155px,#2d0052 307px,#270064 313px,#1b0186 321px,#100193 335px,#04019d 381px,#0106a0 411px,#0132a0 465px,#03409f 489px,#0850a0 497px,#0d62a1 501px,#1885a2 505px,#22a8a5 509px,#20b49e 513px,#0bb58d 525px,#0abc74 557px,#07b634 601px,#07ac25 613px,#027c1d 627px,#007623 635px,#007b3f 645px,#007e58 653px,#007668 661px,#005575 673px,#000b93 689px,#000195 691px,#1a0087 699px,#2b0057 707px,#2d0052 711px,#2d0052 749px,#1c0082 759px,#1b0088 761px)"></i><i style="left:360px;width:4px;background:linear-gradient(#2d0052 1px,#2d0052 61px,#2a005b 73px,#28005f 121px,#2a005a 143px,#2d0052 151px,#2d0052 311px,#1a0189 327px,#0b0197 361px,#02019f 413px,#012ea0 467px,#0441a0 499px,#084da0 503px,#0c5ca1 505px,#209fa5 511px,#23ada5 513px,#1ab699 519px,#0cb68d 529px,#0abc77 559px,#07b129 611px,#06a422 617px,#027e1d 627px,#007622 635px,#007c45 647px,#007d5b 655px,#00726a 663px,#005575 673px,#001d8e 685px,#010095 691px,#17008a 697px,#270063 703px,#2d0052 707px,#2d0052 751px,#1e007f 759px,#1c0085 761px)"></i><i style="left:364px;width:4px;background:linear-gradient(#2d0052 1px,#2d0052 67px,#2a005b 79px,#2a005b 129px,#2c0055 141px,#2d0052 157px,#2d0052 315px,#1d0184 331px,#120190 349px,#07019a 411px,#0105a0 427px,#0128a0 467px,#033da0 503px,#084ea0 507px,#0d61a1 509px,#1d95a4 513px,#23a8a5 515px,#22b49f 519px,#0db68e 531px,#0abc76 563px,#07b22b 611px,#06a724 617px,#027b1d 629px,#007625 637px,#007d49 649px,#007b63 659px,#005575 673px,#00268b 683px,#000694 689px,#0a0090 693px,#1a0087 697px,#29005e 703px,#2d0052 705px,#2d0052 751px,#1e007e 761px)"></i><i style="left:368px;width:4px;background:linear-gradient(#2d0052 1px,#2d0052 75px,#2a005b 89px,#2a005a 127px,#2d0052 139px,#2d0052 319px,#28005f 325px,#1b0187 343px,#130190 369px,#0d0195 409px,#0103a0 431px,#0026a0 471px,#023aa0 505px,#0647a0 509px,#0a58a0 511px,#209fa5 517px,#25ada5 519px,#22b69e 523px,#0fb68f 535px,#0bbc76 567px,#07b22a 613px,#05a423 619px,#027d1d 629px,#007623 637px,#007b40 647px,#007d59 655px,#007369 663px,#005575 673px,#00268b 683px,#000495 689px,#15008b 695px,#270064 701px,#2d0052 705px,#2d0052 753px,#24006d 759px,#220072 761px)"></i><i style="left:372px;width:4px;background:linear-gradient(#2d0052 1px,#2d0052 87px,#2a0059 107px,#2d0052 133px,#2d0052 325px,#1c0185 353px,#18018a 379px,#17018d 399px,#0104a0 437px,#0023a0 475px,#0238a0 507px,#0442a0 511px,#084ea0 513px,#0d61a1 515px,#1e96a4 519px,#26a9a6 521px,#28b6a2 525px,#0fb78e 541px,#0bbd79 569px,#06b22b 613px,#05a724 619px,#027f1d 629px,#007622 637px,#007b3f 647px,#007d59 655px,#007469 663px,#005774 673px,#003286 681px,#000395 689px,#170089 695px,#280060 701px,#2c0055 703px,#2d0052 719px,#2d0052 755px,#280061 761px)"></i><i style="left:376px;width:4px;background:linear-gradient(#2d0052 1px,#2d0052 335px,#220072 357px,#200178 369px,#1f007c 375px,#220073 387px,#1e017e 399px,#110191 417px,#0104a0 443px,#0024a0 483px,#023aa0 511px,#0648a0 515px,#0b58a1 517px,#249ea7 523px,#2aaba8 525px,#2cb6a4 529px,#11b790 545px,#0cbd78 573px,#06b12a 615px,#05a322 621px,#027c1d 631px,#007626 639px,#007e58 655px,#007568 663px,#005973 673px,#003585 681px,#000295 689px,#1b0086 695px,#260066 699px,#2d0052 703px,#2d0052 761px)"></i><i style="left:380px;width:4px;background:linear-gradient(#2d0052 1px,#2d0052 345px,#28005f 367px,#270064 377px,#29005d 389px,#24006e 403px,#18018b 415px,#0002a0 445px,#0021a0 485px,#033ca0 515px,#084ca0 519px,#1b82a4 525px,#29a4a9 529px,#2fb5a7 533px,#14b891 549px,#0cbd7b 575px,#06b22b 615px,#05a523 621px,#027d1d 631px,#007625 639px,#007d4b 651px,#007a63 661px,#005476 675px,#002d88 683px,#000295 689px,#12008c 693px,#1c0082 695px,#270062 699px,#2d0052 703px,#2d0052 761px)"></i><i style="left:384px;width:4px;background:linear-gradient(#2d0052 1px,#2d0052 397px,#2b0058 403px,#210177 413px,#18018b 419px,#0002a0 449px,#012da0 505px,#0541a0 521px,#0b52a1 525px,#1775a3 529px,#279da8 533px,#30b2a9 537px,#26ba9e 545px,#12b98e 559px,#0cbd7a 579px,#05b32b 615px,#05a724 621px,#027f1d 631px,#007620 637px,#007a39 647px,#007e55 655px,#076 663px,#004d79 677px,#002e88 683px,#000295 689px,#13008c 693px,#1c0082 695px,#280062 699px,#2d0052 703px,#2d0052 761px)"></i><i style="left:388px;width:4px;background:linear-gradient(#2d0052 1px,#2d0052 407px,#210177 417px,#18018b 423px,#0002a0 453px,#001b9b 487px,#011c9c 501px,#0225a0 509px,#0239a0 521px,#0643a0 527px,#0d58a1 531px,#299ea8 539px,#32b3aa 543px,#27bb9f 551px,#11ba8b 567px,#0cbc78 583px,#06b32c 615px,#05a925 621px,#027b1d 633px,#007626 641px,#007d59 657px,#007866 663px,#004e79 677px,#002e88 683px,#000395 689px,#12008c 693px,#1c0082 695px,#270062 699px,#2d0052 703px,#2d0052 761px)"></i><i style="left:392px;width:4px;background:linear-gradient(#2d0052 1px,#2d0052 411px,#250068 417px,#1b0186 423px,#090098 441px,#0004a0 459px,#00159b 483px,#001796 491px,#030499 501px,#030a9f 509px,#0231a0 519px,#0645a0 533px,#0d59a2 537px,#2a9fa9 545px,#33b4aa 549px,#2ebba3 555px,#13ba8c 571px,#0bbc75 587px,#06b42d 615px,#05ab25 621px,#027d1d 633px,#007626 641px,#007e59 657px,#007866 663px,#004e79 677px,#002e88 683px,#000495 689px,#1a0087 695px,#260067 699px,#2d0052 703px,#2d0052 761px)"></i><i style="left:396px;width:4px;background:linear-gradient(#2d0052 1px,#2d0052 413px,#29005f 417px,#1b0187 425px,#06009b 449px,#0006a0 465px,#001299 483px,#001095 489px,#060094 495px,#180087 501px,#1b0284 505px,#0f0395 511px,#07039d 513px,#020ba1 515px,#0225a1 519px,#0132a0 523px,#0440a0 537px,#094ea1 541px,#1369a3 545px,#2a9da9 551px,#34b5aa 557px,#28bc9d 565px,#10bb87 579px,#0cbc71 591px,#06b42f 615px,#05a724 623px,#027e1d 633px,#007621 639px,#007b3d 649px,#007e58 657px,#007469 665px,#005774 675px,#003087 683px,#000993 689px,#030094 691px,#16008a 695px,#2d0052 703px,#2d0052 761px)"></i><i style="left:400px;width:4px;background:linear-gradient(#2d0052 1px,#2d0052 415px,#280060 419px,#1a0088 427px,#03009e 457px,#000c9d 477px,#000f95 485px,#000496 489px,#0e008f 493px,#1f0079 497px,#270063 501px,#29005c 503px,#29005c 505px,#25016c 509px,#1a0289 513px,#05049e 517px,#0221a1 521px,#0130a0 525px,#0540a0 543px,#0d58a2 549px,#1d81a5 555px,#2da4aa 559px,#35b6aa 563px,#28bd9d 571px,#10bd83 585px,#0cbb6d 595px,#06b32d 617px,#05a925 623px,#02801d 633px,#007620 639px,#007a3b 649px,#007e57 657px,#007568 665px,#005973 675px,#003585 683px,#000095 691px,#13008c 695px,#1d0081 697px,#280061 701px,#2d0052 705px,#2d0052 761px)"></i><i style="left:404px;width:4px;background:linear-gradient(#2d0052 1px,#2d0052 417px,#24006c 423px,#190089 429px,#0100a0 463px,#000b99 479px,#000a95 485px,#000296 487px,#12008c 491px,#1d0080 493px,#2a005a 497px,#2d0052 499px,#2d0052 509px,#2a005a 511px,#1e0182 515px,#04029e 519px,#0121a0 523px,#012fa0 527px,#0643a0 551px,#0b51a1 555px,#2a9da9 565px,#35b4ab 569px,#2dbe9f 575px,#13bd85 587px,#0dbc74 595px,#05b42e 617px,#05aa25 623px,#027c1d 635px,#007626 643px,#007e55 657px,#007767 665px,#005476 677px,#002d89 685px,#000295 691px,#13008c 695px,#1c0081 697px,#280061 701px,#2d0052 705px,#2d0052 761px)"></i><i style="left:408px;width:4px;background:linear-gradient(#2d0052 1px,#2d0052 419px,#1b0086 429px,#0d0094 443px,#00039f 471px,#000995 483px,#050093 487px,#10008d 489px,#1c0081 491px,#2b0057 495px,#2d0052 499px,#2d0052 511px,#2b0058 513px,#1d0183 517px,#0203a0 521px,#0124a0 525px,#012ea0 529px,#043fa0 555px,#0a4fa1 561px,#1366a3 565px,#2da2aa 571px,#36b8aa 575px,#2abf9a 581px,#12be84 591px,#0bbb6d 599px,#04b42e 617px,#05ab25 623px,#027d1d 635px,#007626 643px,#007d59 659px,#007369 667px,#005575 677px,#003a82 683px,#000395 691px,#13008c 695px,#1c0082 697px,#280061 701px,#2d0052 705px,#2d0052 761px)"></i><i style="left:412px;width:4px;background:linear-gradient(#2d0052 1px,#2d0052 419px,#24006c 425px,#1c0083 429px,#14008e 435px,#00029f 471px,#000896 481px,#020095 485px,#180089 489px,#29005e 493px,#2d0052 495px,#2d0052 513px,#29005e 515px,#17018c 519px,#08019a 521px,#010ca0 523px,#011da0 525px,#002ba0 529px,#0541a0 563px,#0a4ea1 567px,#166ca3 571px,#2ea5aa 577px,#33baa7 581px,#21bf91 587px,#0fbe81 595px,#03b534 615px,#05ac25 623px,#027e1d 635px,#007621 641px,#007b3e 651px,#007e58 659px,#007469 667px,#005774 677px,#003087 685px,#000495 691px,#12008c 695px,#1c0082 697px,#280062 701px,#2d0052 705px,#2d0052 761px)"></i><i style="left:416px;width:4px;background:linear-gradient(#2d0052 1px,#2d0052 421px,#1c0082 429px,#16008c 433px,#00029e 471px,#000796 481px,#040094 485px,#1c0082 489px,#2c0055 493px,#2d0052 507px,#2c0056 515px,#25006a 517px,#1c0085 519px,#0005a0 523px,#0018a0 525px,#0028a0 529px,#01359c 557px,#0642a0 569px,#0b50a1 573px,#156da3 577px,#2cada8 583px,#2db9a3 585px,#1abe8c 591px,#0cbc77 599px,#03b534 615px,#05ad25 623px,#048e1e 631px,#027a1d 637px,#007729 645px,#007e57 659px,#007568 667px,#005973 677px,#003485 685px,#000894 691px,#060093 693px,#1c0083 697px,#270062 701px,#2d0052 705px,#2d0052 761px)"></i><i style="left:420px;width:4px;background:linear-gradient(#2d0052 1px,#2d0052 421px,#1b0087 431px,#02009e 465px,#000896 481px,#050094 485px,#10008d 487px,#1d007f 489px,#2d0052 493px,#2d0052 515px,#1c0081 519px,#0002a0 523px,#0015a0 525px,#0026a0 529px,#002d95 551px,#022c9d 561px,#0848a1 577px,#0b54a1 579px,#1169a2 581px,#23a4a6 585px,#27b5a2 587px,#1dbd91 591px,#0dbd7c 599px,#04b63d 613px,#05b129 621px,#05a222 627px,#03801d 635px,#00761f 641px,#007a39 651px,#007e55 659px,#076 667px,#005475 679px,#003883 685px,#000a93 691px,#050093 693px,#1b0086 697px,#270064 701px,#2d0052 705px,#2d0052 761px)"></i><i style="left:424px;width:4px;background:linear-gradient(#2d0052 1px,#2d0052 421px,#23006e 427px,#1c0084 431px,#14008e 437px,#00029f 469px,#000a95 481px,#030094 485px,#1c0083 489px,#2c0056 493px,#2d0052 505px,#2c0056 515px,#25006a 517px,#1b0084 519px,#0003a0 523px,#0016a0 525px,#0025a0 529px,#002991 547px,#001e93 553px,#010a9a 559px,#0312a0 565px,#0336a0 573px,#0544a0 579px,#0850a0 581px,#0e67a0 583px,#1ea4a4 587px,#21b49f 589px,#19bc8f 593px,#0bbc79 601px,#03b63f 613px,#04b129 621px,#05a322 627px,#027b1d 637px,#007626 645px,#007d59 661px,#007469 669px,#005774 679px,#003a83 685px,#020094 693px,#170089 697px,#29005e 703px,#2d0052 705px,#2d0052 761px)"></i><i style="left:428px;width:4px;background:linear-gradient(#2d0052 1px,#2d0052 421px,#24006c 427px,#1c0083 431px,#14008e 437px,#00029f 467px,#000c94 481px,#010096 485px,#180089 489px,#29005e 493px,#2d0052 495px,#2d0052 513px,#29005e 515px,#17008b 519px,#080099 521px,#000aa0 523px,#00199f 525px,#00269f 529px,#002690 545px,#001c90 549px,#020595 553px,#13008d 557px,#1a0183 561px,#15038f 565px,#05099f 569px,#0228a1 573px,#0239a0 577px,#0545a0 581px,#08539f 583px,#0d6c9f 585px,#1aa5a2 589px,#1cb49c 591px,#15ba8e 595px,#0bbd7d 601px,#02b53f 613px,#02b32b 619px,#05a924 625px,#027b1c 637px,#007626 645px,#007e57 661px,#007667 669px,#005873 679px,#003b82 685px,#000195 693px,#14008b 697px,#1d0080 699px,#280061 703px,#2c0055 705px,#2d0052 721px,#2d0052 761px)"></i><i style="left:432px;width:4px;background:linear-gradient(#2d0052 1px,#2d0052 421px,#24006c 427px,#1c0083 431px,#14008e 437px,#00039f 467px,#000f94 481px,#000695 485px,#040094 487px,#1c0081 491px,#2b0057 495px,#2d0052 499px,#2d0052 511px,#2b0058 513px,#1c0083 517px,#01029d 521px,#001f9e 525px,#00289c 529px,#00258f 543px,#001990 547px,#000b94 549px,#060093 551px,#15008b 553px,#250068 557px,#2a005c 559px,#2a005c 563px,#20017b 567px,#07029c 571px,#0227a1 575px,#023aa0 579px,#04499f 583px,#07599f 585px,#16a79f 591px,#17b399 593px,#0bbc7f 601px,#01b53c 613px,#03b22a 619px,#05a923 625px,#027c1c 637px,#007625 645px,#007d4b 657px,#007b63 667px,#005873 679px,#003087 687px,#000495 693px,#12008c 697px,#1c0082 699px,#280062 703px,#2d0052 707px,#2d0052 761px)"></i><i style="left:436px;width:4px;background:linear-gradient(#2d0052 1px,#2d0052 421px,#1b0085 431px,#0d0094 445px,#0003a0 465px,#001193 483px,#000595 487px,#060093 489px,#11008d 491px,#1d0080 493px,#2a005a 497px,#2d0052 499px,#2d0052 509px,#2a005a 511px,#1c0081 515px,#030099 519px,#001d9a 523px,#002899 527px,#00248e 543px,#001d8f 545px,#040094 549px,#14008b 551px,#28005f 555px,#2d0052 557px,#2d0052 565px,#28005f 567px,#15018e 571px,#04029e 573px,#012ca0 577px,#044e9e 585px,#06619e 587px,#0f979e 591px,#12aa9b 593px,#11b494 595px,#07bc78 603px,#00b53b 613px,#04b228 619px,#06a922 625px,#037c1c 637px,#007624 645px,#007d48 657px,#007b62 667px,#005972 679px,#003485 687px,#000894 693px,#060093 695px,#1b0084 699px,#270063 703px,#2d0052 707px,#2d0052 761px)"></i><i style="left:440px;width:4px;background:linear-gradient(#2d0052 1px,#2d0052 419px,#2c0056 421px,#190089 431px,#0002a0 463px,#001592 483px,#001092 487px,#040094 491px,#180087 495px,#24006c 499px,#29005c 503px,#29005c 505px,#24006c 509px,#180087 513px,#030296 517px,#001d95 521px,#002994 525px,#00278d 541px,#001a8f 545px,#000794 547px,#0b0090 549px,#1c0082 551px,#260066 553px,#2d0052 555px,#2d0052 567px,#260067 569px,#1c0183 571px,#0b0197 573px,#010da0 575px,#0025a0 577px,#00339f 579px,#02499e 585px,#03589d 587px,#0a9f9c 593px,#0ab48e 597px,#05bb7a 603px,#00b53b 613px,#04b228 619px,#06a921 625px,#037c1c 637px,#007522 645px,#007b3f 655px,#007d59 663px,#007866 669px,#004d79 683px,#002b89 689px,#000b93 693px,#040094 695px,#190088 699px,#260067 703px,#2d0052 707px,#2d0052 761px)"></i><i style="left:444px;width:4px;background:linear-gradient(#2d0052 1px,#2d0052 419px,#1b0085 429px,#0d0094 443px,#0002a0 461px,#001398 477px,#001890 487px,#000e92 491px,#050093 495px,#170086 501px,#190083 505px,#0c0090 511px,#040194 513px,#000895 515px,#002090 519px,#002b8f 525px,#00298b 541px,#00248c 543px,#00198f 545px,#000594 547px,#0d008f 549px,#1e007d 551px,#270063 553px,#2d0052 555px,#2d0052 567px,#270063 569px,#1e007e 571px,#0d0094 573px,#000aa0 575px,#0023a0 577px,#00329f 579px,#004a9d 585px,#016b9a 589px,#039699 593px,#03b08e 597px,#01ba79 603px,#00b53b 613px,#04b227 619px,#06a921 625px,#037c1b 637px,#007521 645px,#007b3f 655px,#007e58 663px,#007469 671px,#005774 681px,#003a82 687px,#010095 695px,#15008b 699px,#280060 705px,#2c0055 707px,#2d0052 723px,#2d0052 761px)"></i><i style="left:448px;width:4px;background:linear-gradient(#2d0052 1px,#2d0052 417px,#24006c 423px,#190089 429px,#0002a0 459px,#001699 477px,#001d8f 489px,#001391 495px,#030493 501px,#010893 509px,#00258c 517px,#002d8b 525px,#002b8a 541px,#001d8e 545px,#000a93 547px,#0a0091 549px,#1b0084 551px,#250068 553px,#2d0052 555px,#2d0052 567px,#250068 569px,#1b0085 571px,#090096 573px,#000e9f 575px,#00269f 577px,#00339f 579px,#004c9d 585px,#006e99 589px,#009698 593px,#00b08c 597px,#00ba78 603px,#00b53b 613px,#04b227 619px,#06a820 625px,#037c1b 637px,#007521 645px,#007c45 657px,#007d5c 665px,#00716a 673px,#005873 681px,#003b82 687px,#000295 695px,#1c0083 701px,#270064 705px,#2d0052 709px,#2d0052 761px)"></i><i style="left:452px;width:4px;background:linear-gradient(#2d0052 1px,#2d0052 417px,#1a0087 427px,#0001a0 457px,#00199a 477px,#00228d 495px,#001d8e 505px,#002f88 519px,#002d89 541px,#00248c 545px,#020194 549px,#12008c 551px,#270062 555px,#2d0052 557px,#2d0052 565px,#270062 567px,#12008e 571px,#02029c 573px,#002c9d 577px,#004f9c 585px,#008798 591px,#009b98 593px,#00b189 597px,#00ba74 603px,#00b53a 613px,#05b126 619px,#07a720 625px,#037c1b 637px,#007521 645px,#007c43 657px,#007e56 663px,#007767 671px,#005873 681px,#003087 689px,#000794 695px,#050093 697px,#180089 701px,#29005e 707px,#2d0052 709px,#2d0052 761px)"></i><i style="left:456px;width:4px;background:linear-gradient(#2d0052 1px,#2d0052 415px,#1b0085 425px,#0e0093 437px,#0001a0 455px,#001e99 479px,#002a8a 501px,#003387 527px,#002e88 543px,#00228d 547px,#030294 551px,#11008d 553px,#23006d 557px,#29005d 561px,#23006d 565px,#11008e 569px,#030297 571px,#002797 575px,#003998 579px,#004899 583px,#006698 587px,#009e96 593px,#00b288 597px,#00b96f 603px,#00b435 613px,#05b125 619px,#07a51f 625px,#037b1a 637px,#007520 645px,#007b41 657px,#007d59 665px,#076 671px,#005277 683px,#00298a 691px,#010095 697px,#14008b 701px,#280061 707px,#2c0055 709px,#2d0052 725px,#2d0052 761px)"></i><i style="left:460px;width:4px;background:linear-gradient(#2d0052 1px,#2d0052 413px,#2c0056 415px,#190089 425px,#0002a0 453px,#002398 481px,#003287 507px,#003884 527px,#002b89 547px,#00188f 551px,#000993 553px,#060192 555px,#14008a 559px,#14008a 563px,#060193 567px,#000995 569px,#002790 573px,#004f92 583px,#00a192 593px,#00b286 597px,#00ba78 601px,#00b53b 611px,#05b226 617px,#07a31d 625px,#047b1a 637px,#007522 647px,#007b3f 657px,#007d59 665px,#076 671px,#004c7a 685px,#002d89 691px,#000295 697px,#13008c 701px,#1c0081 703px,#280061 707px,#2d0052 711px,#2d0052 761px)"></i><i style="left:464px;width:4px;background:linear-gradient(#2d0052 1px,#2d0052 411px,#29005e 415px,#1b0087 423px,#01009f 449px,#002897 483px,#003b83 513px,#003d81 529px,#002b89 551px,#001092 559px,#001092 563px,#004f86 581px,#00978d 591px,#00ad87 595px,#00b973 601px,#00b438 611px,#06b124 617px,#08a11c 625px,#057e18 635px,#02751c 643px,#00772b 651px,#007d59 665px,#076 671px,#004d79 685px,#002e88 691px,#000295 697px,#13008c 701px,#1c0082 703px,#270062 707px,#2d0052 711px,#2d0052 761px)"></i><i style="left:468px;width:4px;background:linear-gradient(#2d0052 1px,#2d0052 409px,#29005e 413px,#1b0086 421px,#04009c 443px,#0007a0 453px,#002d96 485px,#00457d 519px,#003f80 537px,#002e88 563px,#004380 575px,#006579 583px,#00a381 593px,#00b776 599px,#00b433 611px,#07b022 617px,#089f1b 625px,#057d18 635px,#02741c 643px,#00772b 651px,#007d59 665px,#007369 673px,#005575 683px,#003a82 689px,#000395 697px,#1b0084 703px,#270064 707px,#2d0052 711px,#2d0052 761px)"></i><i style="left:472px;width:4px;background:linear-gradient(#2d0052 1px,#2d0052 409px,#1b0085 419px,#0d0094 431px,#0002a0 447px,#003095 485px,#004b7b 519px,#00457d 539px,#003d81 559px,#00487c 571px,#006570 581px,#00a875 595px,#00b46c 599px,#01b32e 611px,#08ad1f 617px,#089b19 625px,#057c18 635px,#01741e 645px,#007937 655px,#007e54 663px,#007866 671px,#004e79 685px,#00218d 693px,#000594 697px,#0f008e 701px,#190089 703px,#250069 707px,#2d0052 711px,#2d0052 761px)"></i><i style="left:476px;width:4px;background:linear-gradient(#2d0052 1px,#2d0052 407px,#1c0084 417px,#110090 425px,#0002a0 445px,#002e96 481px,#005277 521px,#004c7a 557px,#005a72 571px,#008369 587px,#00a56b 595px,#00b258 601px,#04b028 611px,#09a61b 619px,#057b17 635px,#01741e 645px,#007937 655px,#007e54 663px,#007866 671px,#004f78 685px,#00248c 693px,#020095 699px,#15008b 703px,#2d0052 711px,#2d0052 761px)"></i><i style="left:480px;width:4px;background:linear-gradient(#2d0052 1px,#2d0052 405px,#2b0056 407px,#190089 417px,#0002a0 443px,#002e96 477px,#005675 519px,#005a72 557px,#006a6c 571px,#008961 589px,#00a060 595px,#00af4d 601px,#03ae28 609px,#09a51b 615px,#078716 629px,#037519 639px,#007625 649px,#007e58 665px,#007568 673px,#005973 683px,#003585 691px,#000196 699px,#13008c 703px,#1c0081 705px,#280061 709px,#2d0052 713px,#2d0052 761px)"></i><i style="left:484px;width:4px;background:linear-gradient(#2d0052 1px,#2d0052 403px,#29005f 407px,#1a0088 415px,#0002a0 441px,#002d97 473px,#005976 515px,#005f6f 545px,#006b6c 563px,#00855b 587px,#009e56 595px,#00ad45 601px,#03aa27 607px,#099f19 613px,#078315 629px,#037519 639px,#007625 649px,#007e57 665px,#007767 673px,#005476 685px,#002d89 693px,#000295 699px,#13008c 703px,#1c0082 705px,#270062 709px,#2d0052 713px,#2d0052 761px)"></i><i style="left:488px;width:4px;background:linear-gradient(#2d0052 1px,#2d0052 403px,#1b0085 413px,#080098 429px,#0002a0 439px,#002d9a 469px,#005d77 513px,#00626d 535px,#007568 563px,#008558 585px,#00a548 597px,#00ab30 603px,#07a31d 607px,#099315 615px,#067d15 631px,#02741b 643px,#007830 653px,#007e56 665px,#076 673px,#005575 685px,#003a83 691px,#000395 699px,#1b0084 705px,#270064 709px,#2d0052 713px,#2d0052 761px)"></i><i style="left:492px;width:4px;background:linear-gradient(#2d0052 1px,#2d0052 401px,#24006c 407px,#190089 413px,#0002a0 437px,#00309a 469px,#006277 513px,#00666c 531px,#007a64 563px,#008656 583px,#009d4a 593px,#00ab3b 599px,#09a41b 605px,#0b9913 609px,#098b13 617px,#037419 639px,#007625 649px,#007d4b 661px,#076 673px,#005575 685px,#003a82 691px,#000594 699px,#0f008e 703px,#190089 705px,#250069 709px,#2d0052 713px,#2d0052 761px)"></i><i style="left:496px;width:4px;background:linear-gradient(#2d0052 1px,#2d0052 399px,#29005f 403px,#1a0088 411px,#0001a0 435px,#00349b 469px,#00677a 511px,#006c6d 529px,#00805a 573px,#008f4f 585px,#00ac3c 597px,#08a91d 603px,#0d9d10 607px,#0a8a12 615px,#037419 639px,#007625 649px,#007d4b 661px,#076 673px,#005575 685px,#002f88 693px,#000894 699px,#030094 701px,#15008b 705px,#2d0052 713px,#2d0052 761px)"></i><i style="left:500px;width:4px;background:linear-gradient(#2d0052 1px,#2d0052 399px,#1b0085 409px,#080098 425px,#0003a0 435px,#003b9b 471px,#006d7c 511px,#007b64 549px,#008656 575px,#00964d 585px,#00ae3c 595px,#01b02c 599px,#0ea510 605px,#0a8a11 615px,#047517 637px,#007625 649px,#007d4a 661px,#076 673px,#004e79 687px,#00238c 695px,#020095 701px,#14008b 705px,#280061 711px,#2d0052 715px,#2d0052 761px)"></i><i style="left:504px;width:4px;background:linear-gradient(#2d0052 1px,#2d0052 399px,#190089 409px,#0002a0 433px,#00439c 473px,#006c84 503px,#007974 525px,#008358 567px,#009050 579px,#00b03e 593px,#05b126 599px,#0eab13 603px,#109a0d 609px,#0a8310 619px,#047417 637px,#007624 649px,#007d49 661px,#007b62 671px,#005575 685px,#003087 693px,#020095 701px,#14008b 705px,#1d0080 707px,#280061 711px,#2d0052 715px,#2d0052 761px)"></i><i style="left:508px;width:4px;background:linear-gradient(#2d0052 1px,#2d0052 399px,#1c0084 407px,#12008f 413px,#0000a0 431px,#00509b 477px,#007489 503px,#00827a 523px,#00825d 555px,#008e50 575px,#00b13f 591px,#03b22a 597px,#0fab11 603px,#14a20d 607px,#0a810f 619px,#047417 637px,#007523 649px,#007b40 659px,#007d59 667px,#007369 675px,#005575 685px,#003087 693px,#020095 701px,#14008b 705px,#1d0080 707px,#280061 711px,#2d0052 715px,#2d0052 761px)"></i><i style="left:512px;width:4px;background:linear-gradient(#2d0052 1px,#2d0052 399px,#1b0084 407px,#100092 415px,#0001a0 431px,#004c9d 473px,#007990 499px,#008c83 521px,#008865 545px,#008a54 567px,#00974c 577px,#00b13f 589px,#05b227 597px,#10ac0f 603px,#15a30d 607px,#0a800f 619px,#057516 635px,#007521 649px,#007b3f 659px,#007d59 667px,#007369 675px,#005575 685px,#003087 693px,#010095 701px,#14008b 705px,#1d0080 707px,#270062 711px,#2d0052 715px,#2d0052 761px)"></i><i style="left:516px;width:4px;background:linear-gradient(#2d0052 1px,#2d0052 399px,#1c0084 407px,#12008f 413px,#0001a0 431px,#00479d 469px,#008095 499px,#00958b 519px,#009775 537px,#008d5a 559px,#00964d 573px,#00b23b 589px,#03b329 595px,#12ac0f 603px,#15a30c 607px,#0a7f0e 619px,#057515 635px,#007521 649px,#007b3f 659px,#007d59 667px,#007369 675px,#005674 685px,#003286 693px,#000195 701px,#1c0083 707px,#270064 711px,#2d0052 715px,#2d0052 761px)"></i><i style="left:520px;width:4px;background:linear-gradient(#2d0052 1px,#2d0052 399px,#1d0081 407px,#16008c 411px,#0000a0 431px,#003e9e 465px,#008397 497px,#009d91 517px,#00a47e 535px,#009455 563px,#00a14a 575px,#00b23b 587px,#06b224 595px,#14ac0e 603px,#16a20c 607px,#0b810d 617px,#077612 629px,#007521 649px,#007b3f 659px,#007d59 667px,#007369 675px,#005077 687px,#002c89 695px,#000495 701px,#190089 707px,#250069 711px,#2d0052 715px,#2d0052 761px)"></i><i style="left:524px;width:4px;background:linear-gradient(#2d0052 1px,#2d0052 399px,#1b0086 409px,#01009f 431px,#00399f 463px,#008298 495px,#00a094 515px,#00ac85 533px,#00a063 555px,#009f51 567px,#00b337 587px,#10ae10 601px,#18a70c 605px,#0b800d 617px,#077512 629px,#007521 649px,#007b3f 659px,#007d59 667px,#007369 675px,#005276 687px,#002e88 695px,#000894 701px,#030094 703px,#15008b 707px,#2d0052 715px,#2d0052 761px)"></i><i style="left:528px;width:4px;background:linear-gradient(#2d0052 1px,#2d0052 399px,#2c0056 401px,#190089 411px,#0003a0 435px,#00389f 463px,#007e98 493px,#00a394 515px,#00b186 533px,#00ae6d 551px,#00a754 565px,#00b438 585px,#0eaf14 599px,#18a70c 605px,#0b7e0c 617px,#077512 629px,#007521 649px,#007b3f 659px,#007d59 667px,#007469 675px,#005476 687px,#002f87 695px,#020095 703px,#14008b 707px,#280061 713px,#2d0052 717px,#2d0052 761px)"></i><i style="left:532px;width:4px;background:linear-gradient(#2d0052 1px,#2d0052 401px,#1c0184 411px,#110191 419px,#0003a0 437px,#00369f 463px,#027e99 493px,#00a195 513px,#00b287 531px,#00b672 549px,#00b04e 569px,#00b430 587px,#13ae0f 601px,#18a10b 607px,#0b7d0c 617px,#077512 629px,#007521 649px,#007d46 661px,#007d5c 669px,#00716b 677px,#005575 687px,#003087 695px,#020095 703px,#14008b 707px,#1d0080 709px,#280061 713px,#2d0052 717px,#2d0052 761px)"></i><i style="left:536px;width:4px;background:linear-gradient(#2d0052 1px,#2d0052 403px,#1c0184 413px,#110191 421px,#0102a0 439px,#01389f 465px,#038599 497px,#00a295 513px,#00b386 531px,#00b871 549px,#02b42d 587px,#14ae0e 601px,#18a00b 607px,#0b7c0b 617px,#077412 629px,#007521 649px,#007c45 661px,#007d5b 669px,#00726a 677px,#005575 687px,#003087 695px,#020095 703px,#14008b 707px,#1d0080 709px,#280061 713px,#2d0052 717px,#2d0052 761px)"></i><i style="left:540px;width:4px;background:linear-gradient(#2d0052 1px,#2d0052 405px,#1a0189 417px,#0101a0 441px,#0133a0 465px,#04839a 497px,#01a395 513px,#00b385 531px,#00b96f 549px,#00b53e 577px,#05b325 589px,#14ad0e 601px,#18a00b 607px,#0b7b0b 617px,#077412 629px,#007522 649px,#007c45 661px,#007d5a 669px,#00736a 677px,#005575 687px,#003087 695px,#020095 703px,#14008b 707px,#1d0080 709px,#280061 713px,#2d0052 717px,#2d0052 761px)"></i><i style="left:544px;width:4px;background:linear-gradient(#2d0052 1px,#2d0052 407px,#19018a 421px,#0102a0 445px,#0132a0 467px,#05899a 501px,#03a396 513px,#00b385 531px,#00b972 547px,#00b53b 577px,#06b223 589px,#15ad0e 601px,#199f0b 607px,#0b7b0b 617px,#077412 629px,#007520 647px,#007b3f 659px,#007e57 667px,#076 675px,#005575 687px,#003087 695px,#020095 703px,#14008b 707px,#1d0080 709px,#280061 713px,#2d0052 717px,#2d0052 761px)"></i><i style="left:548px;width:4px;background:linear-gradient(#2d0052 1px,#2d0052 409px,#220174 419px,#1a0188 425px,#0102a0 449px,#02419f 475px,#05a298 513px,#02b388 529px,#00b972 547px,#00b53d 575px,#05b326 587px,#16ad0e 601px,#199f0b 607px,#0d7f0b 615px,#09740e 623px,#007520 647px,#007d47 661px,#007c5f 671px,#006d6c 679px,#005575 687px,#003087 695px,#020095 703px,#14008b 707px,#1d0080 709px,#280061 713px,#2d0052 717px,#2d0052 761px)"></i><i style="left:552px;width:4px;background:linear-gradient(#2d0052 1px,#2d0052 413px,#210177 425px,#19018a 431px,#0103a0 453px,#03459f 479px,#07a597 515px,#03b487 531px,#02ba74 547px,#00b540 573px,#04b329 585px,#16ad0d 601px,#199e0b 607px,#0e7f0b 615px,#09740e 623px,#007520 647px,#007d46 661px,#007d5b 669px,#007369 677px,#005674 687px,#003087 695px,#020095 703px,#14008b 707px,#1d0081 709px,#270062 713px,#2d0052 717px,#2d0052 761px)"></i><i style="left:556px;width:4px;background:linear-gradient(#2d0052 1px,#2d0052 419px,#19018b 437px,#0103a0 457px,#055d9e 491px,#08a399 515px,#05b38b 529px,#03ba76 547px,#02b32b 583px,#16ad0d 601px,#199e0a 607px,#0e7e0b 615px,#09740e 623px,#007520 647px,#007b3e 659px,#007e56 667px,#007568 677px,#005873 687px,#003087 695px,#010095 703px,#1b0085 709px,#260066 713px,#2d0052 717px,#2d0052 761px)"></i><i style="left:560px;width:4px;background:linear-gradient(#2d0052 1px,#2d0052 423px,#2b0058 427px,#19018a 443px,#0103a0 461px,#044e9e 489px,#0aa19b 515px,#06b38d 529px,#04ba74 549px,#01b42e 581px,#13af0f 599px,#1aa50b 605px,#0e7e0b 615px,#09740e 623px,#007522 649px,#007c42 661px,#007e58 669px,#007667 677px,#005873 687px,#003187 695px,#000195 703px,#180089 709px,#2d0052 717px,#2d0052 761px)"></i><i style="left:564px;width:4px;background:linear-gradient(#2d0052 1px,#2d0052 429px,#270063 437px,#17018d 449px,#02019f 463px,#03449f 489px,#0ba39b 517px,#07b38c 531px,#05bb77 549px,#03b32a 583px,#13af0f 599px,#1ba50b 605px,#0e7e0b 615px,#09740e 623px,#007521 649px,#007b41 661px,#007d5b 671px,#00726a 679px,#005873 687px,#00268b 697px,#000395 703px,#16008a 709px,#2c0055 717px,#2d0052 731px,#2d0052 761px)"></i><i style="left:568px;width:4px;background:linear-gradient(#2d0052 1px,#2d0052 437px,#18018b 453px,#0103a0 467px,#03459f 493px,#0c9f9d 517px,#09b291 529px,#06bb76 551px,#04b42b 583px,#13af0f 599px,#1ba50b 605px,#0e7f0b 615px,#09750e 623px,#007521 649px,#007d47 663px,#007a63 675px,#006c6c 681px,#005077 689px,#001092 701px,#000495 703px,#15008b 709px,#270062 715px,#2d0052 719px,#2d0052 761px)"></i><i style="left:572px;width:4px;background:linear-gradient(#2d0052 1px,#2d0052 441px,#25006a 449px,#1b0187 455px,#02019f 469px,#02409f 495px,#0c939d 515px,#0ea999 523px,#08b688 539px,#07bb75 553px,#05b42c 583px,#14af10 599px,#1ba60b 605px,#0c7b0b 617px,#077411 629px,#007521 649px,#007d47 663px,#007c5f 673px,#006d6c 681px,#005177 689px,#001191 701px,#030094 705px,#1b0084 711px,#260066 715px,#2d0052 719px,#2d0052 761px)"></i><i style="left:576px;width:4px;background:linear-gradient(#2d0052 1px,#2d0052 445px,#24006d 453px,#19018a 459px,#0202a0 473px,#023e9f 497px,#0d8c9d 515px,#10a59c 523px,#0cb490 535px,#09bc79 553px,#07b52e 583px,#18ae0f 601px,#1aa10b 607px,#0c7c0b 617px,#087410 627px,#007520 649px,#007d46 663px,#007d5a 671px,#007469 679px,#005376 689px,#001590 701px,#010095 705px,#180089 711px,#2d0052 719px,#2d0052 761px)"></i><i style="left:580px;width:4px;background:linear-gradient(#2d0052 1px,#2d0052 449px,#260067 455px,#1b0187 461px,#03019f 475px,#0131a0 495px,#05589e 505px,#0f929e 519px,#12a99b 527px,#0cb78c 541px,#0abc7a 555px,#0ab52e 585px,#18af10 601px,#1aa30b 607px,#0d7d0b 617px,#087410 627px,#007520 649px,#007c44 663px,#007d59 671px,#007667 679px,#005674 689px,#000e92 703px,#000395 705px,#16008a 711px,#2c0055 719px,#2d0052 733px,#2d0052 761px)"></i><i style="left:584px;width:4px;background:linear-gradient(#2d0052 1px,#2d0052 453px,#18018b 465px,#0101a0 479px,#023d9f 501px,#10919f 521px,#14a99d 529px,#0fb78e 543px,#0bbd7b 557px,#0cb52e 587px,#1aae10 603px,#199e0b 609px,#0d7f0b 617px,#09750e 625px,#007522 651px,#007c42 663px,#007d5b 673px,#00726a 681px,#005873 689px,#00268b 699px,#000495 705px,#15008b 711px,#270062 717px,#2d0052 721px,#2d0052 761px)"></i><i style="left:588px;width:4px;background:linear-gradient(#2d0052 1px,#2d0052 455px,#280061 459px,#1a0189 467px,#0101a0 481px,#03419f 505px,#128f9f 523px,#17ac9d 533px,#10b88d 547px,#0dbd7c 559px,#0eb62e 589px,#1bac0f 605px,#13910b 613px,#0c7c0b 619px,#087410 629px,#007521 651px,#007d47 665px,#007c5f 675px,#006e6c 683px,#005a72 689px,#00278b 699px,#000594 705px,#0b0090 709px,#1c0084 713px,#260066 717px,#2d0052 721px,#2d0052 761px)"></i><i style="left:592px;width:4px;background:linear-gradient(#2d0052 1px,#2d0052 457px,#29005e 461px,#1b0188 469px,#0101a0 483px,#023e9f 507px,#1492a0 527px,#1aad9e 537px,#10bb87 555px,#0fbc6f 567px,#11b62f 591px,#1aae11 605px,#189d0c 611px,#0c7f0b 619px,#09750f 627px,#007520 651px,#007d46 665px,#007d5a 673px,#007668 681px,#005d70 689px,#001c8e 701px,#020095 707px,#190089 713px,#2d0052 721px,#2d0052 761px)"></i><i style="left:596px;width:4px;background:linear-gradient(#2d0052 1px,#2d0052 461px,#1a0189 471px,#0101a0 485px,#03409f 511px,#1793a1 531px,#1caba1 539px,#14b98f 553px,#12be78 567px,#14b528 597px,#1bac11 607px,#0b7c0c 621px,#077412 633px,#007520 651px,#007e4b 667px,#007866 681px,#005e6f 689px,#001e8e 701px,#010095 707px,#17008a 713px,#280061 719px,#2d0052 723px,#2d0052 761px)"></i><i style="left:600px;width:4px;background:linear-gradient(#2d0052 1px,#2d0052 461px,#29005f 465px,#19018a 473px,#0101a0 487px,#03409f 515px,#1994a2 535px,#21b1a1 545px,#18bb90 557px,#14bf7c 569px,#15b529 599px,#1bae13 607px,#179d0c 613px,#0b7f0c 621px,#087511 631px,#007520 651px,#007d49 667px,#007965 681px,#00676c 687px,#004c7a 693px,#001490 703px,#000096 707px,#15008a 713px,#270064 719px,#2d0052 723px,#2d0052 761px)"></i><i style="left:604px;width:4px;background:linear-gradient(#2d0052 1px,#2d0052 463px,#280060 467px,#19018a 475px,#0104a0 491px,#0238a0 517px,#24a9a6 545px,#24b99e 553px,#18c082 571px,#13b93d 595px,#1bb017 607px,#18a10e 613px,#0b820d 621px,#087710 629px,#007520 651px,#007d48 667px,#007964 681px,#00686c 687px,#004d79 693px,#001590 703px,#000195 707px,#1b0086 715px,#29005e 721px,#2d0052 723px,#2d0052 761px)"></i><i style="left:608px;width:4px;background:linear-gradient(#2d0052 1px,#2d0052 465px,#280060 469px,#19018a 477px,#0102a0 493px,#0235a0 521px,#0b5aa1 531px,#2cafa8 551px,#28bb9e 559px,#1ac184 575px,#17b939 599px,#1eb019 609px,#1ba612 613px,#0d8e0e 619px,#097b10 627px,#007520 651px,#007d48 667px,#007d5d 677px,#00726a 685px,#005972 691px,#00208d 701px,#000495 707px,#180089 715px,#2d0052 723px,#2d0052 761px)"></i><i style="left:612px;width:4px;background:linear-gradient(#2d0052 1px,#2d0052 467px,#280060 471px,#19018a 479px,#0104a0 497px,#022aa1 523px,#0541a0 531px,#1c82a4 547px,#2fb1a9 557px,#28bd9d 565px,#1bc180 581px,#19ba3e 601px,#21b01d 611px,#0d9511 619px,#088012 627px,#02741b 647px,#007936 661px,#007e55 673px,#007866 683px,#006d6c 687px,#005c71 691px,#00218d 701px,#020095 709px,#17008a 715px,#270062 721px,#2d0052 725px,#2d0052 761px)"></i><i style="left:616px;width:4px;background:linear-gradient(#2d0052 1px,#2d0052 469px,#24006c 475px,#1c0184 479px,#110191 485px,#0203a0 503px,#021ea1 525px,#094aa1 543px,#1162a2 549px,#2aa3a9 559px,#2eb7a6 565px,#1cc185 583px,#1ebb3e 605px,#22b223 613px,#0d9816 621px,#068217 631px,#01751c 647px,#007a3b 663px,#007e55 673px,#007668 685px,#005e70 691px,#00238c 701px,#010095 709px,#15008b 715px,#1c0082 717px,#260066 721px,#2d0052 725px,#2d0052 761px)"></i><i style="left:620px;width:4px;background:linear-gradient(#2d0052 1px,#2d0052 471px,#1a0189 483px,#07019b 501px,#0207a1 521px,#0437a1 547px,#0c53a1 553px,#259ba7 563px,#2cb3a6 569px,#1cc189 585px,#1dbe58 601px,#23b835 613px,#17ab26 619px,#0a991e 625px,#037a1c 641px,#007627 653px,#007e57 675px,#076 685px,#00616e 691px,#00278b 701px,#000295 709px,#190088 717px,#2d0052 725px,#2d0052 761px)"></i><i style="left:624px;width:4px;background:linear-gradient(#2d0052 1px,#2d0052 473px,#250069 479px,#1a0189 487px,#0d0195 501px,#05029e 525px,#0211a1 537px,#022ea1 551px,#053fa0 555px,#1d8ba4 565px,#25a9a6 571px,#22b99c 579px,#1ac07a 593px,#1ebe5b 605px,#1eb83f 617px,#09a32a 627px,#007b21 643px,#007830 657px,#007e57 675px,#007865 685px,#006d6c 689px,#005a72 693px,#00208d 703px,#000495 709px,#10008e 715px,#170089 717px,#2c0055 725px,#2d0052 741px,#2d0052 761px)"></i><i style="left:628px;width:4px;background:linear-gradient(#2d0052 1px,#2d0052 475px,#23006f 485px,#19018b 493px,#16018d 505px,#120292 523px,#0205a0 539px,#0226a1 553px,#0541a0 559px,#1988a2 569px,#21ada3 577px,#1cbb94 585px,#18c07d 595px,#1bbe63 605px,#1abb4b 619px,#09aa37 629px,#008328 641px,#007929 649px,#007b3f 663px,#007e57 675px,#007865 685px,#006e6c 689px,#005c71 693px,#00218d 703px,#020094 711px,#17008a 717px,#280061 723px,#2d0052 727px,#2d0052 761px)"></i><i style="left:632px;width:4px;background:linear-gradient(#2d0052 1px,#2d0052 481px,#1f017c 495px,#1e017f 501px,#210175 513px,#20017c 521px,#100294 535px,#0204a0 545px,#0230a0 559px,#0852a0 565px,#158aa1 573px,#1ba8a2 579px,#18b994 587px,#16bf79 599px,#19bd5a 615px,#10b649 627px,#049f37 635px,#00832e 643px,#007932 653px,#007d5a 677px,#007865 685px,#006e6c 689px,#005c71 693px,#00218d 703px,#020095 711px,#17008a 717px,#280061 723px,#2d0052 727px,#2d0052 761px)"></i><i style="left:636px;width:4px;background:linear-gradient(#2d0052 1px,#2d0052 485px,#260065 497px,#29005d 515px,#24016c 527px,#17028d 537px,#0104a0 549px,#0235a0 563px,#0b699f 571px,#1390a0 577px,#17ab9e 583px,#14b98f 591px,#14be76 603px,#15bc5c 617px,#0eb64d 629px,#039d3c 637px,#008233 645px,#007a38 655px,#007d5b 677px,#007469 687px,#005c71 693px,#00218d 703px,#020095 711px,#17008a 717px,#280061 723px,#2d0052 727px,#2d0052 761px)"></i><i style="left:640px;width:4px;background:linear-gradient(#2d0052 1px,#2d0052 523px,#29005e 529px,#220172 535px,#16018d 541px,#0202a0 551px,#0134a0 565px,#09689e 573px,#119a9f 581px,#12b098 587px,#10be81 601px,#12bb60 619px,#0cb450 631px,#008a3a 643px,#007d39 651px,#007c60 681px,#006f6c 689px,#005d70 693px,#00218d 703px,#020095 711px,#17008a 717px,#280061 723px,#2d0052 727px,#2d0052 761px)"></i><i style="left:644px;width:4px;background:linear-gradient(#2d0052 1px,#2d0052 531px,#25006b 537px,#18018b 543px,#0101a0 553px,#01379f 567px,#0d919d 581px,#0fab99 587px,#0db78b 595px,#0ebd75 609px,#0bb655 631px,#029d45 639px,#00833d 647px,#007d46 659px,#007b63 683px,#00716b 689px,#005475 695px,#00238c 703px,#010095 711px,#17008a 717px,#280061 723px,#2d0052 727px,#2d0052 761px)"></i><i style="left:648px;width:4px;background:linear-gradient(#2d0052 1px,#2d0052 533px,#28005f 537px,#17018b 545px,#0104a0 555px,#013c9f 569px,#0a8a9c 581px,#0ba699 587px,#0ab58c 595px,#0cbc76 611px,#0ab65b 631px,#04a74e 637px,#008542 647px,#007e49 659px,#007a64 685px,#006b6c 691px,#005773 695px,#00268b 703px,#010095 711px,#16008a 717px,#280061 723px,#2d0052 727px,#2d0052 761px)"></i><i style="left:652px;width:4px;background:linear-gradient(#2d0052 1px,#2d0052 535px,#24006d 541px,#1a0189 545px,#0101a0 555px,#02409f 571px,#08999b 585px,#08ae92 591px,#0abc79 611px,#09b75f 631px,#04aa54 637px,#008746 647px,#007f4a 657px,#076 687px,#006d6c 691px,#005a72 695px,#001e8e 705px,#000096 711px,#16008a 717px,#280061 723px,#2d0052 727px,#2d0052 761px)"></i><i style="left:656px;width:4px;background:linear-gradient(#2d0052 1px,#2d0052 537px,#16008c 547px,#0004a0 557px,#01399f 571px,#056e9b 579px,#06a099 587px,#05b38d 595px,#09bc74 617px,#07b561 633px,#008e4b 645px,#00814a 653px,#076 687px,#006e6c 691px,#005c71 695px,#001e8e 705px,#000096 711px,#15008a 717px,#270064 723px,#2d0052 727px,#2d0052 761px)"></i><i style="left:660px;width:4px;background:linear-gradient(#2d0052 1px,#2d0052 537px,#23006f 543px,#18008a 547px,#0001a0 557px,#013e9f 573px,#04939a 585px,#04a695 589px,#04b38a 597px,#08bc75 619px,#06b665 633px,#019e54 641px,#00874c 649px,#007e59 671px,#076 687px,#006e6c 691px,#005c71 695px,#001f8e 705px,#000195 711px,#1b0086 719px,#29005e 725px,#2d0052 727px,#2d0052 761px)"></i><i style="left:664px;width:4px;background:linear-gradient(#2d0052 1px,#2d0052 537px,#23006d 543px,#190089 547px,#0100a0 557px,#00399f 573px,#02649b 579px,#029299 585px,#03a594 589px,#04b28b 597px,#07bb74 623px,#05b365 635px,#008c51 647px,#008252 657px,#076 687px,#006e6c 691px,#005c71 695px,#00208d 705px,#000495 711px,#180089 719px,#2d0052 727px,#2d0052 761px)"></i><i style="left:668px;width:4px;background:linear-gradient(#2d0052 1px,#2d0052 537px,#23006f 543px,#190089 547px,#01009f 557px,#00389f 573px,#01629b 579px,#019198 585px,#02a594 589px,#04b28c 597px,#07bb75 625px,#04b468 635px,#008d54 647px,#008354 657px,#007767 687px,#006e6c 691px,#005c71 695px,#00218d 705px,#000594 711px,#090091 715px,#17008a 719px,#280061 725px,#2d0052 729px,#2d0052 761px)"></i><i style="left:672px;width:4px;background:linear-gradient(#2d0052 1px,#2d0052 537px,#17008b 547px,#01009f 557px,#00379f 573px,#00629b 579px,#019199 585px,#03a595 589px,#06b28e 597px,#06bb75 627px,#04b46b 635px,#008f57 647px,#008256 659px,#007767 687px,#006d6c 691px,#005c71 695px,#00218d 705px,#020095 713px,#17008a 719px,#280061 725px,#2d0052 729px,#2d0052 761px)"></i><i style="left:676px;width:4px;background:linear-gradient(#2d0052 1px,#2d0052 535px,#2c0055 537px,#1a0087 545px,#0000a0 557px,#00389f 573px,#00649b 579px,#05949a 585px,#0ba898 589px,#0eb592 597px,#05bb7b 623px,#04b56e 635px,#009059 647px,#008258 659px,#007767 687px,#006e6c 691px,#005c71 695px,#00228d 705px,#020095 713px,#17008a 719px,#280061 725px,#2d0052 729px,#2d0052 761px)"></i><i style="left:680px;width:4px;background:linear-gradient(#2d0052 1px,#2d0052 535px,#23006f 541px,#190089 545px,#0002a0 557px,#003a9f 573px,#01569c 577px,#0b8d9c 583px,#16a79f 587px,#20b69d 593px,#16b991 603px,#05b980 617px,#04b873 633px,#01a464 641px,#008c5a 649px,#00815a 663px,#076 687px,#006f6c 691px,#005476 697px,#00258c 705px,#010095 713px,#16008a 719px,#270062 725px,#2d0052 729px,#2d0052 761px)"></i><i style="left:684px;width:4px;background:linear-gradient(#2d0052 1px,#2d0052 535px,#17008b 545px,#01009f 555px,#00349f 571px,#024c9d 575px,#0f819d 581px,#28a8a7 587px,#38b6ac 593px,#35bda6 599px,#0cb986 613px,#03ba7b 625px,#02b572 635px,#008d5c 649px,#00815b 663px,#007668 689px,#00616e 695px,#001e8e 707px,#000096 713px,#15008b 719px,#1c0083 721px,#260066 725px,#2d0052 729px,#2d0052 761px)"></i><i style="left:688px;width:4px;background:linear-gradient(#2d0052 1px,#2d0052 533px,#23006e 539px,#1a0088 543px,#0000a0 555px,#00379e 571px,#0d6c9b 579px,#197e9e 583px,#278ea8 593px,#3cb4ae 601px,#3bbaab 603px,#19bc8f 611px,#06b980 619px,#01b675 633px,#009761 645px,#00855a 655px,#007667 689px,#006d6c 693px,#005b71 697px,#001f8d 707px,#000295 713px,#190088 721px,#2d0052 729px,#2d0052 761px)"></i><i style="left:692px;width:4px;background:linear-gradient(#2d0052 1px,#2d0052 533px,#17008a 543px,#0001a0 555px,#01379c 571px,#054f95 577px,#054b95 581px,#05359b 587px,#07339f 591px,#0b46a1 595px,#186da4 599px,#2e9caa 603px,#35adad 605px,#34b7a9 607px,#18bb8f 613px,#06b981 619px,#00b575 631px,#008d5c 649px,#00805c 667px,#007767 689px,#006d6c 693px,#005c71 697px,#00208d 707px,#000595 713px,#090091 717px,#170089 721px,#2c0055 729px,#2d0052 745px,#2d0052 761px)"></i><i style="left:696px;width:4px;background:linear-gradient(#2d0052 1px,#2d0052 531px,#2c0055 533px,#1b0086 541px,#0003a0 555px,#002e9b 569px,#013894 573px,#003291 577px,#030a96 583px,#0e0092 587px,#140391 591px,#0c0799 595px,#070f9e 597px,#0420a1 599px,#083da2 601px,#2082a6 605px,#289da8 607px,#2aafa7 609px,#1bba94 613px,#06b980 619px,#00b677 627px,#00955d 643px,#008459 657px,#007767 689px,#006d6c 693px,#005c71 697px,#00218d 707px,#020094 715px,#17008a 721px,#280061 727px,#2d0052 731px,#2d0052 761px)"></i><i style="left:700px;width:4px;background:linear-gradient(#2d0052 1px,#2d0052 531px,#23006f 537px,#190088 541px,#01009f 553px,#00289b 567px,#002e94 571px,#002c92 573px,#002492 575px,#040394 579px,#11008d 581px,#23006f 585px,#29005e 589px,#29005e 591px,#240170 595px,#140492 599px,#070a9e 601px,#0426a1 603px,#1575a2 607px,#1b95a3 609px,#1caba1 611px,#17b598 613px,#05b97f 619px,#00b070 629px,#009359 641px,#00815a 665px,#007767 689px,#006d6c 693px,#005c71 697px,#00218d 707px,#020095 715px,#17008a 721px,#280061 727px,#2d0052 731px,#2d0052 761px)"></i><i style="left:704px;width:4px;background:linear-gradient(#2d0052 1px,#2d0052 531px,#17008a 541px,#0000a0 553px,#00229b 565px,#002a95 569px,#002992 571px,#002291 573px,#040094 577px,#15008b 579px,#28005f 583px,#2d0052 585px,#2d0052 595px,#29005f 597px,#16028e 601px,#04059f 603px,#0229a0 605px,#0c7b9e 609px,#0e9a9e 611px,#0dac97 613px,#09b48c 615px,#01b87c 619px,#00b06f 627px,#009055 639px,#007d5f 677px,#007369 691px,#005c71 697px,#00228d 707px,#020095 715px,#17008a 721px,#270062 727px,#2d0052 731px,#2d0052 761px)"></i><i style="left:708px;width:4px;background:linear-gradient(#2d0052 1px,#2d0052 529px,#23006e 535px,#1a0087 539px,#0002a0 553px,#002399 565px,#002a92 569px,#002790 571px,#001d91 573px,#000994 575px,#0b0090 577px,#1c0082 579px,#260066 581px,#2d0052 583px,#2d0052 597px,#260066 599px,#1c0083 601px,#090098 603px,#001a9f 605px,#026b9a 609px,#028e98 611px,#01a593 613px,#00b189 615px,#00b77a 619px,#00b16f 625px,#008e52 637px,#008653 651px,#076 689px,#00706b 693px,#005476 699px,#00258c 707px,#010095 715px,#15008b 721px,#1c0082 723px,#260066 727px,#2d0052 731px,#2d0052 761px)"></i><i style="left:712px;width:4px;background:linear-gradient(#2d0052 1px,#2d0052 529px,#18008a 539px,#01009f 551px,#00209b 563px,#002b90 569px,#002a8e 571px,#00228f 573px,#000f92 575px,#070092 577px,#190087 579px,#24006c 581px,#2b0057 583px,#2d0052 587px,#2d0052 595px,#2b0057 597px,#24006c 599px,#180088 601px,#05009a 603px,#00209d 605px,#006e96 609px,#008f95 611px,#00a590 613px,#00b086 615px,#00b677 619px,#00a764 627px,#008a4d 637px,#008450 651px,#007865 689px,#006b6c 695px,#004c79 701px,#001e8e 709px,#000295 715px,#190088 723px,#2d0052 731px,#2d0052 761px)"></i><i style="left:716px;width:4px;background:linear-gradient(#2d0052 1px,#2d0052 527px,#2c0056 529px,#1b0087 537px,#0001a0 551px,#00239a 563px,#00318b 571px,#002d8b 573px,#00218e 575px,#000c93 577px,#090091 579px,#180085 581px,#270062 585px,#2b0059 587px,#2b0059 593px,#270062 595px,#180086 599px,#080095 601px,#001399 603px,#00798e 609px,#00958e 611px,#00a687 613px,#00b176 617px,#00ab66 623px,#00894b 635px,#008249 645px,#007964 689px,#006d6c 695px,#005b71 699px,#00208d 709px,#000595 715px,#090091 719px,#170089 723px,#2c0055 731px,#2d0052 747px,#2d0052 761px)"></i><i style="left:720px;width:4px;background:linear-gradient(#2d0052 1px,#2d0052 527px,#190089 537px,#01009f 549px,#00259b 563px,#003b86 573px,#003785 575px,#002c89 577px,#030992 581px,#0a0091 583px,#190081 587px,#1c007d 591px,#13008a 595px,#0a0091 597px,#020a94 599px,#00398c 603px,#006d81 607px,#00957d 611px,#00a56f 615px,#00a460 621px,#008546 635px,#008146 647px,#007b62 687px,#006e6c 695px,#005c71 699px,#00228d 709px,#020095 717px,#17008a 723px,#280061 729px,#2d0052 733px,#2d0052 761px)"></i><i style="left:724px;width:4px;background:linear-gradient(#2d0052 1px,#2d0052 525px,#24006c 531px,#1b0085 535px,#0000a0 549px,#00289c 563px,#004c7e 575px,#00437f 579px,#001690 587px,#001191 591px,#001f8d 595px,#006c74 605px,#00876e 609px,#00975e 615px,#009452 623px,#008040 637px,#00804c 659px,#007865 691px,#00706b 695px,#005476 701px,#00258c 709px,#010095 717px,#16008a 723px,#280061 729px,#2d0052 733px,#2d0052 761px)"></i><i style="left:728px;width:4px;background:linear-gradient(#2d0052 1px,#2d0052 525px,#18008a 535px,#0003a0 549px,#00309b 565px,#005782 573px,#006175 577px,#005874 583px,#004c7a 589px,#005476 595px,#008060 607px,#008a4e 617px,#007d3b 639px,#007d5b 681px,#007767 693px,#00616d 699px,#001d8e 711px,#000096 717px,#16008a 723px,#270062 729px,#2d0052 733px,#2d0052 761px)"></i><i style="left:732px;width:4px;background:linear-gradient(#2d0052 1px,#2d0052 523px,#2c0055 525px,#1b0086 533px,#0001a0 547px,#00349c 565px,#00568e 571px,#006d7d 575px,#007673 579px,#006f6a 591px,#007c5f 601px,#008148 613px,#007e3b 631px,#007b39 645px,#007d5b 683px,#007866 693px,#006e6c 697px,#005b71 701px,#001f8e 711px,#000196 717px,#14008b 723px,#1c0083 725px,#260066 729px,#2d0052 733px,#2d0052 761px)"></i><i style="left:736px;width:4px;background:linear-gradient(#2d0052 1px,#2d0052 523px,#23006f 529px,#190088 533px,#01009f 545px,#003a9d 565px,#006292 571px,#007b84 575px,#008477 579px,#007f64 587px,#007e3f 617px,#007a34 641px,#007e4a 669px,#007865 693px,#006f6c 697px,#005c71 701px,#00208d 711px,#000395 717px,#190089 725px,#2d0052 733px,#2d0052 761px)"></i><i style="left:740px;width:4px;background:linear-gradient(#2d0052 1px,#2d0052 523px,#17008b 533px,#0000a0 545px,#00379f 563px,#004e9c 567px,#007f91 573px,#009186 577px,#008e6f 583px,#008158 593px,#007c3a 617px,#007930 641px,#007d44 667px,#007b62 691px,#00706b 697px,#005476 703px,#00248c 711px,#010095 719px,#17008a 725px,#2c0055 733px,#2d0052 749px,#2d0052 761px)"></i><i style="left:744px;width:4px;background:linear-gradient(#2d0052 1px,#2d0052 521px,#23006e 527px,#1a0088 531px,#0003a0 545px,#003d9e 563px,#00589b 567px,#008b95 573px,#009793 575px,#009f84 579px,#009067 587px,#00804b 599px,#007a34 619px,#00782d 643px,#007c41 669px,#007c60 691px,#007369 697px,#005973 703px,#001d8e 713px,#000096 719px,#16008a 725px,#280061 731px,#2d0052 735px,#2d0052 761px)"></i><i style="left:748px;width:4px;background:linear-gradient(#2d0052 1px,#2d0052 519px,#29005f 523px,#17008b 531px,#0001a0 543px,#00399f 561px,#00539c 565px,#009697 573px,#00a58d 577px,#00a781 581px,#008550 595px,#007b35 611px,#007628 639px,#007a3c 669px,#007d5b 689px,#007568 697px,#005b71 703px,#001e8e 713px,#000096 719px,#16008a 725px,#280061 731px,#2d0052 735px,#2d0052 761px)"></i><i style="left:752px;width:4px;background:linear-gradient(#2d0052 1px,#2d0052 519px,#1e007d 527px,#190089 529px,#01009f 541px,#00369f 559px,#004e9d 563px,#009498 571px,#00a790 575px,#00ad86 579px,#009d69 587px,#008245 597px,#00792e 613px,#007522 639px,#007a38 671px,#007d5c 691px,#007668 697px,#005c71 703px,#001f8d 713px,#000195 719px,#15008b 725px,#270064 731px,#2d0052 735px,#2d0052 761px)"></i><i style="left:756px;width:4px;background:linear-gradient(#2d0052 1px,#2d0052 519px,#1b0084 527px,#06009a 537px,#0002a0 541px,#003d9e 559px,#00599b 563px,#008f98 569px,#009d97 571px,#00ae87 577px,#00a873 583px,#008748 593px,#007b34 603px,#047218 635px,#007935 673px,#007d5a 691px,#007767 697px,#005476 705px,#00238c 713px,#000495 719px,#12008c 725px,#1a0087 727px,#29005e 733px,#2d0052 735px,#2d0052 761px)"></i><i style="left:760px;width:4px;background:linear-gradient(#2d0052 1px,#2d0052 519px,#1a0088 527px,#01009f 539px,#00399f 557px,#00539c 561px,#009a98 569px,#00aa8e 573px,#00ae81 577px,#00a46b 583px,#008745 591px,#007b32 599px,#057214 627px,#08700e 635px,#007625 665px,#007a39 679px,#007d5b 693px,#007469 699px,#005973 705px,#001c8e 715px,#010095 721px,#170089 727px,#2d0052 735px,#2d0052 761px)"></i><i style="left:764px;width:4px;background:linear-gradient(#2d0052 1px,#2d0052 519px,#1a0087 527px,#0000a0 539px,#00359f 555px,#004e9d 559px,#009598 567px,#00a98f 571px,#00ae82 575px,#00a46a 581px,#008742 589px,#007a2d 597px,#077312 625px,#0c6f0a 635px,#02731b 659px,#00772b 675px,#007c42 685px,#007c5d 695px,#006f6c 701px,#005b71 705px,#001e8e 715px,#000096 721px,#16008a 727px,#280061 733px,#2d0052 737px,#2d0052 761px)"></i><i style="left:768px;width:4px;background:linear-gradient(#2d0052 1px,#2d0052 519px,#17008b 529px,#01009f 539px,#00319f 553px,#00499d 557px,#009098 565px,#00a790 569px,#00ae82 573px,#00a469 579px,#008740 587px,#007826 597px,#0c730a 629px,#0e7009 635px,#057215 657px,#007523 675px,#007a3a 685px,#007e56 693px,#007767 699px,#005177 707px,#001f8d 715px,#000195 721px,#16008a 727px,#280061 733px,#2d0052 737px,#2d0052 761px)"></i><i style="left:772px;width:4px;background:linear-gradient(#2d0052 1px,#2d0052 519px,#24006d 525px,#1b0087 529px,#02009f 539px,#002ba0 551px,#00429e 555px,#009c97 565px,#00ad8b 569px,#00ad73 575px,#00873c 585px,#007823 595px,#067514 615px,#117208 633px,#077010 653px,#01741c 675px,#007934 685px,#007d59 695px,#00726a 701px,#005475 707px,#00228d 715px,#000395 721px,#16008a 727px,#280061 733px,#2d0052 737px,#2d0052 761px)"></i><i style="left:776px;width:4px;background:linear-gradient(#2d0052 1px,#2d0052 521px,#230070 527px,#190089 531px,#0004a0 541px,#002fa0 551px,#004a9d 555px,#009998 563px,#00ad8d 567px,#00b174 573px,#009242 581px,#007d28 589px,#047517 601px,#107409 629px,#0f7008 639px,#057114 671px,#007522 681px,#007a3c 689px,#007d5c 697px,#007668 701px,#005973 707px,#001a8f 717px,#000495 721px,#15008b 727px,#280061 733px,#2d0052 737px,#2d0052 761px)"></i><i style="left:780px;width:4px;background:linear-gradient(#2d0052 1px,#2d0052 523px,#220073 529px,#17008b 533px,#0003a0 541px,#00369f 551px,#00579c 555px,#009398 561px,#00ab8e 565px,#00b376 571px,#00a04e 577px,#00892f 583px,#027b1e 591px,#0b730a 619px,#146f07 637px,#08700e 667px,#01741d 681px,#007934 689px,#007e58 697px,#00706b 703px,#005c71 707px,#001b8f 717px,#000595 721px,#0c008f 725px,#15008b 727px,#280061 733px,#2d0052 737px,#2d0052 761px)"></i><i style="left:784px;width:4px;background:linear-gradient(#2d0052 1px,#2d0052 523px,#2c0055 525px,#200078 531px,#1a0087 533px,#0003a0 541px,#00319f 549px,#00679a 555px,#009d95 561px,#00ae87 565px,#00af6b 571px,#009539 579px,#018423 585px,#08760f 603px,#186e05 639px,#0c6f09 665px,#01741c 683px,#007936 691px,#007d5d 699px,#00716a 703px,#005177 709px,#001c8e 717px,#000594 721px,#0c0090 725px,#15008b 727px,#270062 733px,#2d0052 737px,#2d0052 761px)"></i><i style="left:788px;width:4px;background:linear-gradient(#2d0052 1px,#2d0052 525px,#220071 531px,#14008d 535px,#04009c 539px,#0012a0 543px,#003c9d 549px,#008a94 557px,#00a28b 561px,#00aa7a 565px,#00a459 571px,#009538 577px,#02841f 585px,#107308 611px,#1d6d03 639px,#136e07 663px,#057215 681px,#007627 689px,#007c45 695px,#007d5a 699px,#007469 703px,#005476 709px,#00208d 717px,#020095 723px,#1b0085 729px,#260066 733px,#2d0052 737px,#2d0052 761px)"></i><i style="left:792px;width:4px;background:linear-gradient(#2d0052 1px,#2d0052 525px,#270062 529px,#14008d 535px,#02009d 539px,#00279e 545px,#005e95 551px,#00848e 555px,#00938b 557px,#009f7b 561px,#009e5d 567px,#00923b 573px,#028721 581px,#0f7709 605px,#236c01 637px,#1a6d04 661px,#067112 681px,#007522 689px,#007b3e 695px,#007c5f 701px,#006f6c 705px,#005973 709px,#00188f 719px,#000195 723px,#180089 729px,#2d0052 737px,#2d0052 761px)"></i><i style="left:796px;width:4px;background:linear-gradient(#2d0052 1px,#2d0052 525px,#260065 529px,#1b0085 533px,#00049d 539px,#004493 547px,#007a84 553px,#008881 555px,#009370 559px,#009153 565px,#00872d 573px,#04831b 581px,#127908 603px,#286c00 637px,#206c02 659px,#077010 681px,#007524 691px,#007c42 697px,#007d5b 701px,#00716a 705px,#004f78 711px,#001b8f 719px,#000495 723px,#16008a 729px,#2c0055 737px,#2d0052 753px,#2d0052 761px)"></i><i style="left:800px;width:4px;background:linear-gradient(#2d0052 1px,#2d0052 523px,#23006f 529px,#14008c 533px,#010399 537px,#00438b 545px,#007479 551px,#00866e 555px,#008954 561px,#008135 567px,#027f1f 575px,#127a09 599px,#2b6d00 631px,#2c6c00 651px,#106e08 675px,#037319 689px,#00772e 695px,#007e57 701px,#007369 705px,#005277 711px,#001d8e 719px,#000694 723px,#040094 725px,#15008b 729px,#280061 735px,#2d0052 739px,#2d0052 761px)"></i><i style="left:804px;width:4px;background:linear-gradient(#2d0052 1px,#2d0052 513px,#29005e 521px,#24006b 525px,#11008d 531px,#060094 533px,#000796 535px,#00577a 545px,#007b6b 551px,#008253 557px,#007b2e 565px,#047b19 575px,#147a08 597px,#2f6f00 627px,#336c00 647px,#206c02 667px,#07700f 685px,#007420 693px,#007833 697px,#007f53 701px,#007767 705px,#005674 711px,#001590 721px,#020094 725px,#14008b 729px,#1d0080 731px,#280062 735px,#2d0052 739px,#2d0052 761px)"></i><i style="left:808px;width:4px;background:linear-gradient(#2d0052 1px,#2d0052 499px,#25006a 515px,#170088 525px,#060093 529px,#010893 531px,#005378 541px,#00746a 547px,#007f54 553px,#00792d 561px,#02771b 569px,#127a09 591px,#327100 623px,#396d00 645px,#2a6c00 663px,#096f0d 685px,#02731c 693px,#00772d 697px,#007d59 703px,#00716a 707px,#005b72 711px,#001790 721px,#020095 725px,#13008c 729px,#1c0082 731px,#270064 735px,#2d0052 739px,#2d0052 761px)"></i><i style="left:812px;width:4px;background:linear-gradient(#2d0052 1px,#2d0052 489px,#2b0058 495px,#13008c 517px,#050392 523px,#001490 527px,#005575 537px,#007964 545px,#007e4c 551px,#007728 559px,#047518 567px,#117809 587px,#337300 619px,#3f6d00 643px,#356c00 659px,#156d06 679px,#077011 689px,#00741f 695px,#007934 699px,#007e56 703px,#007369 707px,#005077 713px,#00198f 721px,#000195 725px,#190088 731px,#29005e 737px,#2d0052 739px,#2d0052 761px)"></i><i style="left:816px;width:4px;background:linear-gradient(#2d0052 1px,#2d0052 479px,#220071 495px,#170088 503px,#040393 513px,#000b93 517px,#004d79 529px,#007667 539px,#007e54 545px,#00782f 553px,#047418 563px,#117608 583px,#327300 613px,#466f00 641px,#3f6d00 655px,#1c6c03 677px,#08700f 689px,#01741c 695px,#007830 699px,#007f53 703px,#007568 707px,#005476 713px,#001e8e 721px,#000594 725px,#0d008f 729px,#16008a 731px,#2c0055 739px,#2d0052 755px,#2d0052 761px)"></i><i style="left:820px;width:4px;background:linear-gradient(#2d0052 1px,#2d0052 467px,#280060 477px,#14008b 495px,#020593 505px,#001b8f 511px,#005575 523px,#007269 531px,#007e57 539px,#007627 551px,#057316 561px,#137407 581px,#347300 611px,#4e7100 643px,#476f00 655px,#1b6c04 679px,#096f0d 689px,#007522 697px,#007a3b 701px,#007d5a 705px,#00706b 709px,#005973 713px,#001690 723px,#020095 727px,#14008b 731px,#1d0081 733px,#270062 737px,#2d0052 741px,#2d0052 761px)"></i><i style="left:824px;width:4px;background:linear-gradient(#2d0052 1px,#2d0052 455px,#2b0058 461px,#1f0079 477px,#13008c 485px,#030394 495px,#001391 501px,#00427f 511px,#00696c 521px,#007a62 527px,#007d49 537px,#00772a 545px,#057214 557px,#127207 575px,#357200 607px,#557300 643px,#4e7100 655px,#1e6c02 679px,#08700f 691px,#00741f 697px,#007934 701px,#007e56 705px,#00736a 709px,#004f78 715px,#00188f 723px,#010095 727px,#1b0085 733px,#260066 737px,#2d0052 741px,#2d0052 761px)"></i><i style="left:828px;width:4px;background:linear-gradient(#2d0052 1px,#2d0052 445px,#220070 461px,#1a0084 469px,#030194 485px,#001590 493px,#003d81 503px,#006b6b 513px,#007963 519px,#007e4c 529px,#007521 543px,#0a710b 563px,#2f7100 597px,#597500 641px,#537300 655px,#216c01 679px,#096f0d 691px,#02731c 697px,#007830 701px,#007e54 705px,#007469 709px,#005277 715px,#001b8f 723px,#000395 727px,#17008a 733px,#2d0052 741px,#2d0052 761px)"></i><i style="left:832px;width:4px;background:linear-gradient(#2d0052 1px,#2d0052 431px,#29005d 441px,#16008a 461px,#030294 475px,#001092 483px,#00437e 497px,#007568 509px,#007e56 517px,#01741e 539px,#0f7008 563px,#327000 595px,#5e7700 639px,#5a7500 653px,#3f6d00 667px,#1c6c03 683px,#07700f 693px,#007523 699px,#007b3f 703px,#007f52 705px,#007767 709px,#005674 715px,#00218d 723px,#000894 727px,#030094 729px,#14008b 733px,#270062 739px,#2d0052 743px,#2d0052 761px)"></i><i style="left:836px;width:4px;background:linear-gradient(#2d0052 1px,#2d0052 413px,#2b0059 423px,#200076 441px,#12008d 451px,#020394 465px,#002f88 485px,#006e6b 501px,#007c60 507px,#007c40 517px,#007625 529px,#08710e 549px,#2d6f00 585px,#617800 637px,#5f7800 651px,#4a7000 665px,#1e6c03 683px,#08700f 693px,#007522 699px,#007a3b 703px,#007d59 707px,#00716a 711px,#005b71 715px,#001890 725px,#010095 729px,#1b0085 735px,#260066 739px,#2d0052 743px,#2d0052 761px)"></i><i style="left:840px;width:4px;background:linear-gradient(#2d0052 1px,#2d0052 395px,#220071 421px,#14008b 437px,#030393 449px,#001b8f 467px,#005675 489px,#007968 499px,#008255 507px,#007c2f 517px,#02751b 529px,#107008 553px,#336f00 585px,#507200 611px,#5b7500 621px,#667a00 647px,#4e7100 665px,#1b6d04 685px,#086f0e 693px,#00741f 699px,#007936 703px,#007e56 707px,#007469 711px,#005277 717px,#001b8f 725px,#000395 729px,#17008a 735px,#2c0056 743px,#2d0052 751px,#2d0052 761px)"></i><i style="left:844px;width:4px;background:linear-gradient(#2d0052 1px,#2d0052 383px,#270063 395px,#170087 415px,#030493 433px,#001790 447px,#00268b 457px,#003487 469px,#00706e 491px,#00875e 501px,#008a4b 507px,#008425 517px,#067614 531px,#117008 549px,#326e00 579px,#577400 611px,#607600 619px,#697b00 647px,#527200 665px,#1d6c03 685px,#077010 695px,#007625 701px,#007b41 705px,#007f53 707px,#007767 711px,#005674 717px,#00218d 725px,#020095 731px,#1b0084 737px,#260066 741px,#2d0052 745px,#2d0052 761px)"></i><i style="left:848px;width:4px;background:linear-gradient(#2d0052 1px,#2d0052 373px,#210075 391px,#11008d 403px,#020593 417px,#001590 427px,#002e88 443px,#004783 469px,#006f72 485px,#008f67 497px,#009859 503px,#019627 515px,#098212 529px,#137107 545px,#346e00 575px,#657700 619px,#6b7c00 647px,#507100 667px,#1b6c04 687px,#08700e 695px,#007522 701px,#007a3c 705px,#007d5a 709px,#00716b 713px,#005b72 717px,#00188f 727px,#000195 731px,#180089 737px,#2d0052 745px,#2d0052 761px)"></i><i style="left:852px;width:4px;background:linear-gradient(#2d0052 1px,#2d0052 363px,#23006f 377px,#14008b 389px,#040293 399px,#001490 409px,#003684 429px,#00427f 445px,#004c83 461px,#006383 473px,#009c6f 495px,#00a763 501px,#01a72a 515px,#0c9210 529px,#187606 543px,#2d6e00 563px,#687700 615px,#6e7b00 641px,#627700 657px,#4a6f00 671px,#1d6c03 687px,#096f0d 695px,#007521 701px,#007a3a 705px,#007d59 709px,#00726a 713px,#005078 719px,#001b8f 727px,#000495 731px,#15008b 737px,#270062 743px,#2d0052 747px,#2d0052 761px)"></i><i style="left:856px;width:4px;background:linear-gradient(#2d0052 1px,#2d0052 353px,#270062 363px,#16008a 377px,#020494 389px,#003d81 415px,#004d79 437px,#00507f 457px,#01638d 467px,#009387 483px,#00b073 497px,#03b02a 517px,#129d0d 531px,#237602 547px,#336f00 563px,#687700 607px,#757b00 627px,#687900 653px,#537200 669px,#1e6c02 687px,#096f0d 695px,#007521 701px,#007a3a 705px,#007e58 709px,#00726a 713px,#005177 719px,#001c8e 727px,#000694 731px,#0b0090 735px,#1b0084 739px,#260066 743px,#2d0052 747px,#2d0052 761px)"></i><i style="left:860px;width:4px;background:linear-gradient(#2d0052 1px,#2d0052 345px,#2b0059 351px,#180087 367px,#020394 379px,#001790 387px,#003a83 399px,#005376 417px,#005774 439px,#00527c 455px,#034d91 463px,#055a97 467px,#047f96 473px,#009c91 481px,#00b080 491px,#00b76e 499px,#05b228 519px,#15a80d 531px,#278402 543px,#2d7400 551px,#477000 575px,#777b00 613px,#7c7800 629px,#6e7a00 649px,#557200 669px,#1f6c02 687px,#067111 697px,#00772b 703px,#007e57 709px,#007469 713px,#005475 719px,#00208d 727px,#010095 733px,#17008a 739px,#270062 745px,#2d0052 749px,#2d0052 761px)"></i><i style="left:864px;width:4px;background:linear-gradient(#2d0052 1px,#2d0052 337px,#220070 351px,#15008b 359px,#030194 369px,#003784 389px,#005177 399px,#00606e 417px,#005d70 443px,#005378 453px,#004085 457px,#002793 461px,#012198 463px,#01239a 465px,#022d9b 467px,#03409c 469px,#057299 473px,#048698 475px,#009c96 479px,#00b285 489px,#00b96e 499px,#03b32a 519px,#12ae0f 529px,#269e06 537px,#307d00 547px,#3b7100 559px,#7b7a00 607px,#7e6e00 627px,#787c00 641px,#5a7400 667px,#206c02 687px,#077011 697px,#007629 703px,#007f54 709px,#007866 713px,#005973 719px,#001a8f 729px,#000595 733px,#0b0090 737px,#1a0086 741px,#29005e 747px,#2d0052 749px,#2d0052 761px)"></i><i style="left:868px;width:4px;background:linear-gradient(#2d0052 1px,#2d0052 331px,#2b0058 335px,#1c0082 347px,#050093 359px,#000e92 367px,#003983 381px,#005e70 397px,#006e6b 417px,#006a6c 433px,#005b72 451px,#005278 453px,#002f8b 457px,#000997 461px,#010299 463px,#01039b 465px,#000a9c 467px,#001d9c 469px,#017b95 475px,#008e96 477px,#009c96 479px,#00b189 487px,#00b974 497px,#00b43f 513px,#03b32b 519px,#15ac0e 529px,#2a9c04 537px,#357d00 547px,#417100 559px,#7b7a00 601px,#7f6800 615px,#7f6700 629px,#777c00 645px,#547200 671px,#1c6c03 689px,#08700f 697px,#007625 703px,#007d5a 711px,#00726a 715px,#005077 721px,#001e8e 729px,#010095 735px,#17008a 741px,#280062 747px,#2d0052 751px,#2d0052 761px)"></i><i style="left:872px;width:4px;background:linear-gradient(#2d0052 1px,#2d0052 323px,#24006c 335px,#16008a 343px,#010494 355px,#003e80 375px,#006b6c 397px,#007667 415px,#00726a 433px,#005f70 451px,#005675 453px,#003188 457px,#000a95 461px,#010397 463px,#010398 465px,#000a99 467px,#001d98 469px,#00788f 475px,#008c91 477px,#00a090 481px,#00b087 487px,#00b770 497px,#00b141 511px,#04af28 519px,#12a90e 527px,#2e9302 537px,#397a00 547px,#477200 559px,#7b7b00 595px,#7f6200 611px,#7f6100 629px,#797c00 647px,#517100 673px,#1f6c02 689px,#096f0d 697px,#007522 703px,#007a3a 707px,#007e57 711px,#007469 715px,#005475 721px,#00228d 729px,#000395 735px,#14008b 741px,#1c0083 743px,#260066 747px,#2d0052 751px,#2d0052 761px)"></i><i style="left:876px;width:4px;background:linear-gradient(#2d0052 1px,#2d0052 317px,#29005f 323px,#190085 335px,#010294 347px,#00447e 371px,#00616e 385px,#007667 399px,#007964 429px,#00646c 451px,#005674 455px,#002b8a 461px,#00238e 463px,#00248f 465px,#002c8e 467px,#005287 471px,#007b85 475px,#009388 479px,#00ab81 487px,#00b16e 495px,#00a844 507px,#03a626 517px,#10a00e 525px,#2d8c01 535px,#3d7500 547px,#5c7500 567px,#7b7a00 591px,#7f5f00 607px,#7f5c00 627px,#7f6c00 641px,#797c00 649px,#547200 673px,#216c02 689px,#077011 699px,#00772b 705px,#007e55 711px,#076 715px,#005973 721px,#001b8e 731px,#020095 737px,#180089 743px,#280061 749px,#2c0056 751px,#2d0052 759px,#2d0052 761px)"></i><i style="left:880px;width:4px;background:linear-gradient(#2d0052 1px,#2d0052 311px,#220072 323px,#17008a 329px,#020194 341px,#00457d 365px,#00686c 383px,#007866 395px,#007c5f 425px,#006f6c 447px,#00606f 457px,#005278 463px,#005877 467px,#007276 473px,#00997b 483px,#00a56d 491px,#00993c 505px,#049521 515px,#10910c 523px,#317f00 535px,#427200 547px,#657800 569px,#7b7b00 585px,#7f5e00 603px,#7f5500 623px,#7f6700 641px,#787c00 651px,#557200 673px,#216c01 689px,#077011 699px,#00772a 705px,#007f53 711px,#007965 715px,#004f78 723px,#001e8e 731px,#000095 737px,#15008b 743px,#1c0083 745px,#29005d 751px,#2d0052 753px,#2d0052 761px)"></i><i style="left:884px;width:4px;background:linear-gradient(#2d0052 1px,#2d0052 307px,#1b0084 321px,#010295 335px,#003a83 355px,#006d6d 379px,#007b64 395px,#007d5b 423px,#007667 443px,#006a6c 465px,#00836e 479px,#009562 489px,#00882f 505px,#098312 517px,#2c7a00 531px,#4b7300 547px,#697900 567px,#7a7b00 579px,#7f5900 601px,#7f5000 621px,#7f6300 641px,#7b7a00 651px,#567200 673px,#216c01 689px,#077011 699px,#007629 705px,#007f52 711px,#007964 715px,#005078 723px,#001f8d 731px,#000295 737px,#180089 745px,#2a005b 753px,#2d0052 755px,#2d0052 761px)"></i><i style="left:888px;width:4px;background:linear-gradient(#2d0052 1px,#2d0052 303px,#23006f 311px,#17008a 317px,#000395 331px,#004f7a 359px,#00796c 381px,#007e5b 405px,#007e58 427px,#00726a 459px,#007a66 475px,#008756 487px,#007c23 505px,#0d770a 517px,#337400 531px,#567500 547px,#7c7a00 575px,#7f5c00 593px,#804b00 615px,#805500 633px,#7f6800 645px,#7a7c00 653px,#507100 675px,#1c6c03 691px,#077010 699px,#007629 705px,#007f52 711px,#007964 715px,#005077 723px,#00208d 731px,#000595 737px,#080092 741px,#1c0084 747px,#2d0052 755px,#2d0052 761px)"></i><i style="left:892px;width:4px;background:linear-gradient(#2d0052 1px,#2d0052 299px,#260065 305px,#17008a 313px,#010296 325px,#00477f 351px,#007476 371px,#00836f 381px,#007f53 415px,#007d59 437px,#007865 461px,#007e5b 477px,#007b35 493px,#057415 507px,#117208 515px,#367100 529px,#5d7900 545px,#7d7b00 571px,#805d00 587px,#814700 611px,#805000 631px,#7f6400 645px,#7b7a00 653px,#527100 675px,#1d6c03 691px,#077010 699px,#007628 705px,#007f50 711px,#007a63 715px,#005276 723px,#00218d 731px,#000495 737px,#17008a 745px,#2a005c 753px,#2d0052 755px,#2d0052 761px)"></i><i style="left:896px;width:4px;background:linear-gradient(#2d0052 1px,#2d0052 299px,#190089 309px,#01029a 321px,#004983 347px,#007a7f 367px,#008c7d 375px,#009170 387px,#007f4e 415px,#007f52 433px,#007d5c 461px,#007e4e 477px,#00772a 493px,#09720d 507px,#2f7000 523px,#607d00 541px,#787f00 563px,#807900 569px,#825e00 581px,#854300 607px,#814d00 631px,#7f6100 645px,#797c00 655px,#4e7000 677px,#1e6c02 691px,#08700f 699px,#007524 705px,#007e57 713px,#007668 717px,#005674 723px,#00228d 731px,#000195 737px,#15008b 743px,#1c0083 745px,#2d0052 753px,#2d0052 761px)"></i><i style="left:900px;width:4px;background:linear-gradient(#2d0052 1px,#2d0052 299px,#1a0088 307px,#02009c 317px,#003693 335px,#006886 355px,#009589 371px,#00a180 381px,#009465 397px,#007f48 415px,#007d4a 433px,#007e51 457px,#007c45 471px,#047318 497px,#107208 507px,#367400 521px,#608100 535px,#768b00 547px,#7f8500 561px,#857500 569px,#866000 577px,#924700 603px,#864800 627px,#7f5700 641px,#7f6c00 649px,#7a7c00 655px,#617500 669px,#507100 677px,#206c02 691px,#096f0d 699px,#007521 705px,#007c46 711px,#007d5d 715px,#00706b 719px,#005b72 723px,#001590 733px,#000794 735px,#040094 737px,#1c0083 743px,#29005f 749px,#2d0052 753px,#2d0052 761px)"></i><i style="left:904px;width:4px;background:linear-gradient(#2d0052 1px,#2d0052 299px,#190089 307px,#00009f 317px,#004d95 339px,#007b8f 357px,#009c91 369px,#00ab86 381px,#00a46f 395px,#008144 415px,#007b40 431px,#007b40 455px,#007626 481px,#0b720b 501px,#397c00 517px,#668a00 531px,#879d00 545px,#919300 559px,#8f6800 573px,#975700 587px,#a85300 599px,#9d4b00 611px,#814900 633px,#7f6200 647px,#7b7a00 655px,#507100 677px,#1b6d04 693px,#077011 701px,#00772a 707px,#007f53 713px,#007964 717px,#004f78 725px,#001391 733px,#000594 735px,#0e008e 739px,#170089 741px,#270062 747px,#2d0052 751px,#2d0052 761px)"></i><i style="left:908px;width:4px;background:linear-gradient(#2d0052 1px,#2d0052 299px,#1b0086 307px,#01009f 317px,#059 339px,#009096 361px,#00ab8d 375px,#00b17a 391px,#00a765 401px,#008742 415px,#007b37 427px,#007831 455px,#057214 487px,#0f7509 499px,#328500 511px,#709900 527px,#a2b500 547px,#adb100 555px,#a57900 569px,#a46300 579px,#b25f00 589px,#c36000 597px,#c05900 603px,#894800 627px,#804c00 637px,#7f6500 649px,#797c00 657px,#507100 677px,#1b6c04 693px,#077011 701px,#007629 707px,#007f52 713px,#007964 717px,#005078 725px,#001590 733px,#000794 735px,#040094 737px,#14008b 741px,#1c0082 743px,#260066 747px,#2d0052 751px,#2d0052 761px)"></i><i style="left:912px;width:4px;background:linear-gradient(#2d0052 1px,#2d0052 299px,#23006f 305px,#1a0188 309px,#0101a0 319px,#00529c 337px,#009097 359px,#00ab8f 373px,#00b776 395px,#00a757 407px,#00893b 419px,#007a2f 431px,#01741d 467px,#0d750a 493px,#238404 503px,#5da100 517px,#81ae00 525px,#bbca00 549px,#c7cc00 553px,#ccb500 559px,#c69500 565px,#c07100 577px,#ca6a00 587px,#dd6c00 597px,#d86300 603px,#9c4d00 619px,#844700 631px,#7f5200 641px,#7f6400 649px,#797c00 657px,#507100 677px,#1b6c04 693px,#077011 701px,#007629 707px,#007f52 713px,#007964 717px,#005078 725px,#00188f 733px,#000195 737px,#17008a 743px,#270062 749px,#2d0052 753px,#2d0052 761px)"></i><i style="left:916px;width:4px;background:linear-gradient(#2d0052 1px,#2d0052 301px,#20017a 309px,#16018d 313px,#0102a0 321px,#014b9d 335px,#008898 355px,#00a394 367px,#00b287 381px,#00b872 397px,#00aa4f 411px,#00832e 427px,#007724 441px,#0a760d 485px,#1e8506 497px,#3f9e00 507px,#8bbc00 523px,#cad600 549px,#d9d700 553px,#e1c900 557px,#e1a800 563px,#dd8100 575px,#df7600 583px,#ef7300 597px,#e86a00 603px,#c25a00 611px,#9d4d00 619px,#844700 631px,#7f5100 641px,#7f6300 649px,#797c00 657px,#507100 677px,#1b6c04 693px,#077011 701px,#007629 707px,#007f52 713px,#007964 717px,#005078 725px,#001b8e 733px,#000594 737px,#0a0090 741px,#1a0086 745px,#29005e 751px,#2d0052 753px,#2d0052 761px)"></i><i style="left:920px;width:4px;background:linear-gradient(#2d0052 1px,#2d0052 303px,#280061 307px,#19018a 315px,#0104a0 323px,#024a9e 335px,#038799 355px,#04a396 367px,#03b389 381px,#02ba74 397px,#00af4d 413px,#008826 431px,#027b1d 445px,#0b7c0c 481px,#1e8b07 493px,#42a600 505px,#7abb00 517px,#93c400 523px,#d0db00 549px,#dbdf00 551px,#eacb00 557px,#edb400 561px,#ef8c00 573px,#f07e00 583px,#f77400 599px,#ea6a00 605px,#a64f00 617px,#8e4800 625px,#804a00 637px,#7f6300 649px,#7c7800 655px,#737a00 659px,#567200 675px,#216c01 691px,#077011 701px,#007629 707px,#007f52 713px,#007964 717px,#005177 725px,#001f8d 733px,#010095 739px,#17008a 745px,#2c0055 753px,#2d0052 761px)"></i><i style="left:924px;width:4px;background:linear-gradient(#2d0052 1px,#2d0052 305px,#270064 311px,#15018e 319px,#0205a0 325px,#03449f 335px,#04689c 345px,#069f9a 365px,#06b38b 381px,#05bb73 399px,#00af42 419px,#029523 433px,#05871b 447px,#0f890b 479px,#269b05 493px,#52b100 507px,#74ba00 515px,#90c400 521px,#c2d601 543px,#d2dc01 549px,#dce001 551px,#edcb01 557px,#f1ad01 563px,#f68900 575px,#f87401 601px,#e56700 607px,#a64f00 617px,#914800 623px,#814800 635px,#7f5e00 647px,#797c00 657px,#627600 669px,#4a6f00 679px,#1c6c03 693px,#077010 701px,#007629 707px,#007f52 713px,#007964 717px,#00477c 727px,#000e92 737px,#000395 739px,#15008b 745px,#270062 751px,#2d0052 755px,#2d0052 761px)"></i><i style="left:928px;width:4px;background:linear-gradient(#2d0052 1px,#2d0052 309px,#260066 315px,#120291 323px,#03039f 327px,#03459f 337px,#056a9c 347px,#09a19a 367px,#09b48e 381px,#08bc79 399px,#02af35 425px,#04a323 435px,#089819 453px,#12990c 475px,#2fa804 493px,#5db501 509px,#98c704 523px,#d1dc05 549px,#dbe006 551px,#ecd107 557px,#f2b207 563px,#f88d04 575px,#f97601 601px,#e96900 607px,#9d4c00 619px,#884600 627px,#7f4b00 637px,#7f6400 649px,#797c00 657px,#627600 669px,#4b7000 679px,#1d6c03 693px,#077010 701px,#007629 707px,#007f52 713px,#007a64 717px,#004b7a 727px,#001092 737px,#000594 739px,#0b0090 743px,#1c0084 747px,#260066 751px,#2d0052 755px,#2d0052 761px)"></i><i style="left:932px;width:4px;background:linear-gradient(#2d0052 1px,#2d0052 313px,#260068 319px,#17028d 325px,#05029e 329px,#04469f 339px,#066b9c 349px,#0ba39b 369px,#0cb590 383px,#0abc7a 401px,#09b231 431px,#0da717 459px,#17a70d 475px,#3daf02 497px,#6eba07 513px,#96c708 523px,#cedb09 549px,#dfe00b 553px,#eecd0e 559px,#f4aa0c 567px,#f88e08 577px,#fa7802 601px,#ec6c01 607px,#c55a00 613px,#9d4c00 619px,#8a4600 625px,#7f4c00 637px,#7f6400 649px,#797c00 657px,#637600 669px,#4e7000 679px,#1e6c03 693px,#077010 701px,#007629 707px,#007f52 713px,#007a64 717px,#004d79 727px,#001c8e 735px,#020095 741px,#190089 747px,#2d0052 755px,#2d0052 761px)"></i><i style="left:936px;width:4px;background:linear-gradient(#2d0052 1px,#2d0052 317px,#270062 321px,#18028c 327px,#06029d 331px,#020ca1 333px,#04459f 341px,#06659d 349px,#0ea09d 369px,#0fb592 385px,#0dbd7c 403px,#0fb83d 431px,#14b017 469px,#2fb10d 489px,#53b60a 505px,#81c00e 519px,#9fca0b 529px,#c4d80a 547px,#e1e011 555px,#ecd513 559px,#f3b213 567px,#f88e0a 581px,#f87803 603px,#ee6f02 607px,#c75b00 613px,#9c4c00 619px,#884600 625px,#7f4e00 637px,#7f6500 649px,#797c00 657px,#647600 669px,#4f7100 679px,#1e6c02 693px,#0a6f0a 699px,#00741f 705px,#007c43 711px,#007f51 713px,#007568 719px,#005a72 725px,#001e8e 735px,#010095 741px,#17008a 747px,#2c0055 755px,#2d0052 761px)"></i><i style="left:940px;width:4px;background:linear-gradient(#2d0052 1px,#2d0052 319px,#280061 323px,#1a028a 329px,#07029c 333px,#0209a1 335px,#04439f 343px,#07659e 351px,#0e959d 367px,#13ae99 381px,#11be7c 407px,#16bb51 427px,#14b62d 455px,#1bb319 477px,#45b40f 501px,#85c212 523px,#a6cc0c 535px,#c5d80d 549px,#e1e015 557px,#eed11a 563px,#f3b117 571px,#f8900c 585px,#f97b05 603px,#f07203 607px,#da6401 611px,#9c4c00 619px,#874600 625px,#7f5200 639px,#7f6600 649px,#7a7c00 657px,#647600 669px,#507100 679px,#1e6c02 693px,#0a6f0a 699px,#007629 707px,#007e58 715px,#006f6c 721px,#005c71 725px,#001e8e 735px,#000096 741px,#16008a 747px,#280061 753px,#2d0052 757px,#2d0052 761px)"></i><i style="left:944px;width:4px;background:linear-gradient(#2d0052 1px,#2d0052 321px,#29005f 325px,#210176 329px,#140290 333px,#0306a0 337px,#054c9f 347px,#09729d 357px,#13a39f 377px,#13b890 395px,#15bf7d 411px,#1abd59 431px,#17b833 459px,#21b51d 483px,#48b614 505px,#7ec016 525px,#a1cb10 535px,#bfd60e 549px,#dee119 559px,#efd11e 567px,#f4ac18 577px,#f98c0c 593px,#f67b06 605px,#e96f04 609px,#bb5700 615px,#9c4c00 619px,#8a4700 623px,#804b00 631px,#7f6600 649px,#7a7c00 657px,#507100 679px,#1e6c02 693px,#0a6f0a 699px,#007628 707px,#007e56 715px,#007865 719px,#005078 727px,#001e8e 735px,#000096 741px,#16008a 747px,#280061 753px,#2d0052 757px,#2d0052 761px)"></i><i style="left:948px;width:4px;background:linear-gradient(#2d0052 1px,#2d0052 325px,#230171 331px,#18028c 335px,#05029e 339px,#021fa1 343px,#064b9f 349px,#09699e 357px,#129b9f 377px,#17b796 395px,#1ac07e 417px,#1bbc4e 447px,#1eb729 479px,#2ab620 493px,#60bb1b 519px,#82c119 529px,#9fcb13 537px,#bdd510 551px,#d7e01b 561px,#e4e01f 565px,#efd120 571px,#f4b41c 579px,#f98e0e 597px,#f6810a 605px,#eb7507 609px,#d06202 613px,#9e4e00 619px,#8b4a00 623px,#804e00 631px,#7f6800 649px,#797c00 657px,#567200 677px,#256b00 691px,#0a6f0a 699px,#007628 707px,#007e55 715px,#007865 719px,#005078 727px,#001e8e 735px,#000096 741px,#16008a 747px,#280061 753px,#2d0052 757px,#2d0052 761px)"></i><i style="left:952px;width:4px;background:linear-gradient(#2d0052 1px,#2d0052 327px,#280060 331px,#210178 335px,#120292 339px,#07029c 341px,#020ba1 343px,#0339a0 349px,#08579f 355px,#108e9f 375px,#1aae9d 391px,#1bbe8c 413px,#1fbf5f 445px,#1fba39 475px,#2bb827 497px,#55ba1f 519px,#84c31d 533px,#a6cd15 543px,#c1d714 557px,#dfe21f 567px,#efd222 575px,#f5a918 589px,#f6890d 605px,#ed7d0a 609px,#d46a04 613px,#a25400 619px,#8d4f00 623px,#815200 631px,#7f6600 647px,#7b7a00 655px,#567200 677px,#256b00 691px,#0a6f0a 699px,#007627 707px,#007e55 715px,#007865 719px,#005078 727px,#001e8e 735px,#000096 741px,#16008a 747px,#280061 753px,#2d0052 757px,#2d0052 761px)"></i><i style="left:956px;width:4px;background:linear-gradient(#2d0052 1px,#2d0052 331px,#210175 337px,#1c0286 339px,#09029a 343px,#0307a0 345px,#0546a0 355px,#0b6a9f 365px,#19a8a1 391px,#1ebb95 411px,#21c27f 433px,#25bd44 479px,#35bb32 505px,#57bc29 523px,#85c423 537px,#a3cd1c 545px,#bdd515 559px,#d7e01e 569px,#e7de23 575px,#efd123 581px,#f4b21a 591px,#f69411 605px,#ee880e 609px,#d97706 613px,#aa5f00 619px,#935700 623px,#855500 629px,#7f6400 645px,#7a7c00 655px,#557200 677px,#256b00 691px,#0a6f0a 699px,#007627 707px,#007e55 715px,#007865 719px,#005078 727px,#001e8e 735px,#000096 741px,#16008a 747px,#280061 753px,#2d0052 757px,#2d0052 761px)"></i><i style="left:960px;width:4px;background:linear-gradient(#2d0052 1px,#2d0052 333px,#220174 339px,#15028f 343px,#05039e 347px,#033ca0 357px,#0a5e9f 365px,#19a1a2 393px,#21ba9b 413px,#23c384 441px,#2cc057 481px,#4dc141 519px,#6bc132 533px,#a1cd22 549px,#bcd516 563px,#e0e221 577px,#eed422 585px,#f4ab16 599px,#f39b12 607px,#ea900d 611px,#c57702 617px,#9d6200 623px,#895a00 629px,#7f6300 643px,#7a7c00 655px,#557200 677px,#256b00 691px,#0a6f0a 699px,#007627 707px,#007e55 715px,#007965 719px,#005078 727px,#001e8e 735px,#000096 741px,#16008a 747px,#280061 753px,#2d0052 757px,#2d0052 761px)"></i><i style="left:964px;width:4px;background:linear-gradient(#2d0052 1px,#2d0052 335px,#230171 341px,#18028c 345px,#04059f 351px,#0646a0 363px,#0c67a0 373px,#1794a1 393px,#24b4a1 413px,#26c38c 445px,#32c06a 483px,#49c75f 511px,#54c550 525px,#81c63c 543px,#abd021 557px,#bcd517 567px,#d7e01e 579px,#e5df21 585px,#efd01f 591px,#f2bb1b 597px,#f1a312 609px,#df9108 615px,#a16a00 625px,#8b6000 631px,#806300 641px,#797c00 655px,#557200 677px,#256b00 691px,#0a6e0a 699px,#007626 707px,#007e54 715px,#007965 719px,#005078 727px,#001e8e 735px,#000096 741px,#16008a 747px,#280061 753px,#2d0052 757px,#2d0052 761px)"></i><i style="left:968px;width:4px;background:linear-gradient(#2d0052 1px,#2d0052 337px,#280061 341px,#16028e 349px,#0406a0 355px,#0541a0 367px,#0d63a0 377px,#168ba1 395px,#26b1a3 419px,#28c195 445px,#2cc388 467px,#1eb372 485px,#2aba75 495px,#3cc57f 503px,#45c978 515px,#4ec656 531px,#6dc647 543px,#93ca3c 553px,#b2d21f 565px,#c2d718 575px,#dae11e 585px,#e5df20 589px,#f0c81e 597px,#f0ab11 611px,#e09b08 617px,#9a6c00 629px,#866300 635px,#7f6a00 645px,#7a7b00 653px,#557200 677px,#1f6c02 693px,#08700e 701px,#00772d 709px,#007f53 715px,#007964 719px,#005077 727px,#001f8e 735px,#000096 741px,#16008a 747px,#280061 753px,#2d0052 757px,#2d0052 761px)"></i><i style="left:972px;width:4px;background:linear-gradient(#2d0052 1px,#2d0052 339px,#270065 345px,#16028f 353px,#05059f 359px,#053fa0 373px,#0f67a1 385px,#23a9a6 421px,#2bbf9d 449px,#29be94 463px,#19b083 471px,#079d72 479px,#049770 487px,#0a9f7c 495px,#20af92 501px,#3bbfa3 507px,#44c6a6 515px,#45c99a 523px,#49c761 539px,#5cc54c 547px,#97cc40 559px,#acd12e 565px,#b9d41a 575px,#cddc1a 585px,#e2e21e 591px,#efd21f 599px,#f2bd19 607px,#edaf0f 615px,#da9c06 621px,#9a7000 631px,#856600 637px,#7f6d00 645px,#797c00 653px,#557200 677px,#206c02 693px,#096f0d 701px,#007520 707px,#007c44 713px,#007d5b 717px,#00716a 721px,#005177 727px,#00208d 735px,#000295 741px,#16008a 747px,#280061 753px,#2d0052 757px,#2d0052 761px)"></i><i style="left:976px;width:4px;background:linear-gradient(#2d0052 1px,#2d0052 343px,#24016e 351px,#150390 359px,#06059e 365px,#032aa1 375px,#0b51a1 385px,#1a8aa3 413px,#28ada7 437px,#2db9a2 455px,#1eaf95 463px,#049278 473px,#007f71 483px,#007778 493px,#09828d 501px,#289aa6 509px,#3ab0ae 523px,#45c5a8 533px,#45ca95 539px,#47c86c 547px,#57c651 553px,#79c745 559px,#9fcf41 565px,#b0d226 573px,#bcd518 581px,#dfe21e 595px,#efcf1e 605px,#edb60f 617px,#dba206 623px,#967200 633px,#836900 639px,#7c7700 649px,#737a00 655px,#557200 677px,#216c01 693px,#077011 703px,#007729 709px,#007f52 715px,#007964 719px,#00477c 729px,#000e92 739px,#000395 741px,#15008a 747px,#280061 753px,#2d0052 757px,#2d0052 761px)"></i><i style="left:980px;width:4px;background:linear-gradient(#2d0052 1px,#2d0052 347px,#2b0058 351px,#17038e 365px,#07069e 373px,#031aa1 379px,#0c54a1 397px,#1d8ea4 425px,#29aba7 451px,#22a8a1 457px,#048782 467px,#007072 477px,#005c76 489px,#005783 497px,#096196 505px,#1a74a3 515px,#41bcae 541px,#45c6a7 545px,#45c978 553px,#49c762 557px,#5bc64e 561px,#89c945 567px,#9fce3d 571px,#b5d31d 581px,#c3d817 589px,#e3e11f 601px,#efcd1a 611px,#edbb0f 619px,#e2ae08 623px,#ca9903 627px,#9b7700 633px,#886c00 637px,#7f6f00 643px,#787c00 651px,#557200 677px,#216c01 693px,#077011 703px,#007629 709px,#007f52 715px,#007a64 719px,#004b7a 729px,#001092 739px,#000495 741px,#15008b 747px,#280061 753px,#2d0052 757px,#2d0052 761px)"></i><i style="left:984px;width:4px;background:linear-gradient(#2d0052 1px,#2d0052 353px,#270064 361px,#150391 375px,#06099f 383px,#0741a1 403px,#1877a3 423px,#2194a5 447px,#1c96a1 455px,#047b87 463px,#006576 471px,#005576 481px,#003d88 495px,#074a9a 513px,#1364a0 523px,#34a6ad 543px,#42beae 549px,#45c8a5 553px,#45cb90 557px,#48c864 563px,#5cc54d 567px,#8bca42 573px,#a8d02c 579px,#b7d318 587px,#cfdd1a 599px,#e4e01d 607px,#eec814 617px,#e6b70b 623px,#d0a104 627px,#9f7b00 633px,#896f00 637px,#7f7200 643px,#7a7c00 649px,#547200 677px,#216c01 693px,#077011 703px,#007629 709px,#007f52 715px,#007a64 719px,#004c7a 729px,#001092 739px,#000495 741px,#15008b 747px,#280061 753px,#2d0052 757px,#2d0052 761px)"></i><i style="left:988px;width:4px;background:linear-gradient(#2d0052 1px,#2d0052 361px,#24016c 373px,#150391 385px,#06089f 393px,#0639a1 413px,#1260a3 425px,#1a80a3 449px,#16819f 455px,#026886 463px,#00537b 471px,#00328a 491px,#003493 511px,#063b9c 525px,#0b4ba1 533px,#1b72a5 541px,#3fb7b0 553px,#45c9a3 559px,#49c75f 569px,#65c549 573px,#86c73c 577px,#a6cf27 583px,#b6d316 591px,#d1dd19 605px,#e3e01a 611px,#edcd13 619px,#e7bd0d 623px,#d4a606 627px,#a17d00 633px,#8a7000 637px,#7c7800 645px,#717a00 653px,#547200 677px,#216c01 693px,#077011 703px,#007629 709px,#007f52 715px,#007a64 719px,#004c7a 729px,#001092 739px,#000495 741px,#15008b 747px,#280061 753px,#2d0052 757px,#2d0052 761px)"></i><i style="left:992px;width:4px;background:linear-gradient(#2d0052 1px,#2d0052 369px,#2b0059 375px,#21027a 387px,#140392 395px,#07089f 407px,#0417a1 415px,#0634a1 425px,#0843a2 433px,#0e56a2 441px,#1269a1 453px,#096397 459px,#005188 465px,#003b85 475px,#002b91 493px,#002a90 511px,#001a94 517px,#000c98 521px,#08099b 529px,#0513a0 537px,#0429a1 541px,#0c4ea2 545px,#278ea8 551px,#3eb7af 557px,#44c6a9 561px,#45cc98 565px,#45c96d 571px,#53c54f 575px,#73c439 579px,#9ccb27 585px,#b1d116 593px,#c6d914 605px,#dee117 613px,#eace11 621px,#e0b80b 625px,#c59b04 629px,#a27e00 633px,#8a7400 637px,#7c7900 643px,#657700 665px,#4f7100 679px,#1b6c04 695px,#077011 703px,#007629 709px,#007f52 715px,#007a64 719px,#004c7a 729px,#001b8f 737px,#000495 741px,#15008b 747px,#280061 753px,#2d0052 757px,#2d0052 761px)"></i><i style="left:996px;width:4px;background:linear-gradient(#2d0052 1px,#2d0052 379px,#2b0059 385px,#1e0282 401px,#0f0497 417px,#050ea0 431px,#0744a1 451px,#094e9e 457px,#014091 465px,#002d8f 477px,#002595 499px,#00228f 509px,#001292 513px,#050094 517px,#16008b 523px,#1b0388 533px,#150391 539px,#08079d 543px,#0313a1 545px,#0844a1 549px,#197ba3 553px,#27a1a8 557px,#34b8a8 561px,#39c897 567px,#3cc55f 575px,#41c24d 577px,#62c034 581px,#90c724 587px,#a7ce18 593px,#bed610 605px,#d2dd13 613px,#e0e013 617px,#e6cc0f 623px,#d5af0a 627px,#b38d01 631px,#937a00 635px,#7e7a00 641px,#6a7900 659px,#547200 677px,#216c01 693px,#077011 703px,#007629 709px,#007f52 715px,#007a64 719px,#004c7a 729px,#001a8f 737px,#000295 741px,#16008a 747px,#2d0052 755px,#2d0052 761px)"></i><i style="left:1000px;width:4px;background:linear-gradient(#2d0052 1px,#2d0052 389px,#25016a 409px,#20037f 423px,#19038b 431px,#08079e 441px,#031ba1 449px,#032fa0 457px,#01319b 463px,#002496 479px,#002197 499px,#001e91 507px,#000f93 511px,#010195 513px,#1a0087 519px,#1e007c 525px,#1e017e 537px,#15028f 543px,#0b0298 545px,#0209a0 547px,#0441a0 551px,#0f789f 555px,#1a9ca2 559px,#26ba9e 565px,#29c490 569px,#2dc156 577px,#3fbd36 581px,#65be26 585px,#90c61c 591px,#a6cd13 597px,#c0d60d 609px,#dfdf11 619px,#e3d010 623px,#dfc40f 625px,#c5a107 629px,#b29101 631px,#928200 635px,#807d00 639px,#717b00 649px,#577300 675px,#346c00 687px,#0f6e08 699px,#00741f 707px,#007c43 713px,#007f52 715px,#007a64 719px,#004c7a 729px,#000c93 739px,#000095 741px,#1a0088 747px,#29005e 753px,#2d0052 755px,#2d0052 761px)"></i><i style="left:1004px;width:4px;background:linear-gradient(#2d0052 1px,#2d0052 405px,#280061 427px,#230174 435px,#120393 445px,#06069f 451px,#021ca0 461px,#001c9a 499px,#001b92 507px,#000c93 511px,#010095 513px,#1a0087 519px,#1e007c 525px,#1e007e 537px,#14008d 543px,#0a0096 545px,#00079f 547px,#066b9c 555px,#0d8d9d 559px,#17af9b 565px,#1ac186 571px,#20bd49 579px,#35ba2b 583px,#5aba1e 587px,#93c715 595px,#accf0d 603px,#d0dc0e 617px,#dae00f 619px,#e0d311 623px,#dec811 625px,#d4b90f 627px,#b19a01 631px,#908800 635px,#797e00 641px,#587300 673px,#466e00 681px,#1b6d04 695px,#077011 703px,#007629 709px,#007f52 715px,#007a64 719px,#004c7a 729px,#000a93 739px,#020095 741px,#13008c 745px,#1c0082 747px,#270064 751px,#2d0052 755px,#2d0052 761px)"></i><i style="left:1008px;width:4px;background:linear-gradient(#2d0052 1px,#2d0052 429px,#2b0059 435px,#21027a 445px,#140391 451px,#0305a0 459px,#01139f 473px,#00189c 499px,#001793 509px,#020294 515px,#170089 523px,#1a0086 533px,#13008d 539px,#050098 543px,#00089c 545px,#01659a 555px,#089c9b 563px,#0bb78a 569px,#0dbc74 573px,#12ba45 579px,#22b727 583px,#56b816 589px,#8fc511 597px,#abce0b 605px,#d3dd0f 619px,#dcdf11 621px,#dbcd12 625px,#d3c110 627px,#b1a401 631px,#918f00 635px,#7d8200 639px,#707c00 649px,#577300 673px,#316c00 687px,#0e6e09 699px,#007420 707px,#007c43 713px,#007f52 715px,#007a64 719px,#004c7a 729px,#000a93 739px,#020095 741px,#14008b 745px,#1d0080 747px,#280062 751px,#2d0052 755px,#2d0052 761px)"></i><i style="left:1012px;width:4px;background:linear-gradient(#2d0052 1px,#2d0052 439px,#2b0059 443px,#1f017e 451px,#100293 457px,#0204a0 467px,#00149f 495px,#001893 511px,#040293 523px,#050293 535px,#000f96 541px,#004599 551px,#009898 563px,#01b486 569px,#02b96e 573px,#07b63e 579px,#16b422 583px,#46b511 589px,#8ec40e 599px,#abce09 607px,#d3dc10 621px,#d8dc12 623px,#d7d512 625px,#c2bf08 629px,#a1a300 633px,#878d00 637px,#778000 643px,#577300 673px,#366c00 685px,#196d04 695px,#067112 703px,#00772a 709px,#007f52 715px,#007a64 719px,#004c7a 729px,#000a93 739px,#020095 741px,#14008b 745px,#1d0080 747px,#280061 751px,#2d0052 755px,#2d0052 761px)"></i><i style="left:1016px;width:4px;background:linear-gradient(#2d0052 1px,#2d0052 445px,#230171 453px,#1a0188 457px,#06019c 467px,#010aa0 483px,#00189b 505px,#001990 519px,#001690 531px,#002990 543px,#003b94 549px,#006096 555px,#009a97 563px,#00af8c 567px,#00b97a 571px,#00b538 579px,#0eb21d 583px,#19b214 585px,#58b70c 593px,#8ec40b 601px,#acce08 609px,#cdd90f 623px,#c7d00d 627px,#a3ac01 633px,#858e00 639px,#748100 647px,#537200 675px,#1e6c02 693px,#096f0d 701px,#007420 707px,#007c43 713px,#007f52 715px,#007a64 719px,#004c7a 729px,#000a93 739px,#020095 741px,#14008b 745px,#1d0080 747px,#280061 751px,#2d0052 755px,#2d0052 761px)"></i><i style="left:1020px;width:4px;background:linear-gradient(#2d0052 1px,#2d0052 449px,#280062 453px,#1c0186 459px,#0a0198 467px,#0003a0 481px,#00199c 505px,#00218d 525px,#00318d 545px,#00478f 551px,#009e92 563px,#00b67f 569px,#00b974 571px,#00b434 579px,#12b010 585px,#4db407 593px,#99c807 605px,#bcd409 617px,#c5d50b 625px,#b3c105 631px,#8c9900 639px,#768500 647px,#4c7000 677px,#1e6c03 693px,#096f0d 701px,#007420 707px,#007c43 713px,#007f52 715px,#007a64 719px,#004c7a 729px,#000a93 739px,#020095 741px,#14008b 745px,#1d0080 747px,#280061 751px,#2d0052 755px,#2d0052 761px)"></i><i style="left:1024px;width:4px;background:linear-gradient(#2d0052 1px,#2d0052 451px,#24006d 457px,#1b0187 461px,#090199 471px,#0003a0 485px,#001d9b 509px,#00288b 529px,#003787 545px,#005084 551px,#008689 559px,#00a08a 563px,#00b280 567px,#00b878 569px,#01b42e 579px,#13b00f 585px,#46b203 593px,#8ac205 603px,#a4cb05 609px,#bed508 621px,#bfd207 627px,#afc003 633px,#849300 643px,#6e8000 653px,#507100 675px,#1d6c03 693px,#096f0d 701px,#007420 707px,#007c43 713px,#007f52 715px,#007a64 719px,#004c7a 729px,#000a93 739px,#020095 741px,#14008b 745px,#1d0080 747px,#280061 751px,#2d0052 755px,#2d0052 761px)"></i><i style="left:1028px;width:4px;background:linear-gradient(#2d0052 1px,#2d0052 453px,#19018a 463px,#07009a 475px,#0004a0 487px,#00219b 511px,#003585 535px,#004b7c 547px,#007078 555px,#00a27e 563px,#00b276 567px,#00b434 577px,#0eb115 583px,#38b002 591px,#7abd02 601px,#9bc803 607px,#b6d206 619px,#bcd306 627px,#b3c603 633px,#809100 645px,#6c8000 655px,#4f7100 675px,#1c6c03 693px,#086f0e 701px,#007520 707px,#007c43 713px,#007f52 715px,#007a64 719px,#004c7a 729px,#000a93 739px,#020095 741px,#14008b 745px,#1d0080 747px,#280061 751px,#2d0052 755px,#2d0052 761px)"></i><i style="left:1032px;width:4px;background:linear-gradient(#2d0052 1px,#2d0052 453px,#24006d 459px,#1b0088 463px,#090098 475px,#0004a0 487px,#00279c 513px,#004181 533px,#00686f 551px,#00aa6f 565px,#00b44e 571px,#03b32b 577px,#10b011 583px,#46b200 593px,#7abd00 601px,#9ac702 607px,#b3d005 619px,#b9d104 629px,#adc202 635px,#829500 645px,#6f8300 653px,#4e7100 675px,#1b6c03 693px,#08700e 701px,#007520 707px,#007c43 713px,#007f52 715px,#007a64 719px,#004c7a 729px,#000a93 739px,#020095 741px,#14008b 745px,#1d0080 747px,#280061 751px,#2d0052 755px,#2d0052 761px)"></i><i style="left:1036px;width:4px;background:linear-gradient(#2d0052 1px,#2d0052 455px,#1b0085 463px,#0e0093 471px,#0003a0 487px,#00259f 511px,#004490 523px,#006470 541px,#008269 555px,#00a369 563px,#00b14f 569px,#01b32e 575px,#15b00e 583px,#49b200 593px,#87c100 603px,#9dc902 609px,#b3d104 623px,#b5ce03 631px,#a6bc01 637px,#7c9100 647px,#657d00 659px,#4d7000 675px,#1b6c04 693px,#08700e 701px,#007520 707px,#007c43 713px,#007f52 715px,#007a64 719px,#004c7a 729px,#000a93 739px,#020095 741px,#14008b 745px,#1d0080 747px,#280061 751px,#2d0052 755px,#2d0052 761px)"></i><i style="left:1040px;width:4px;background:linear-gradient(#2d0052 1px,#2d0052 455px,#190089 465px,#0003a0 489px,#001fa0 509px,#00399d 517px,#00658c 527px,#007779 537px,#008767 553px,#00a166 561px,#00b051 567px,#00b332 573px,#10b010 581px,#41b100 591px,#87c100 603px,#9cc801 609px,#b1cf04 623px,#b3ce03 631px,#a6be01 637px,#7d9200 647px,#657e00 659px,#4b7000 675px,#1a6d04 693px,#08700e 701px,#007520 707px,#007c43 713px,#007f52 715px,#007a64 719px,#004c7a 729px,#000a93 739px,#020095 741px,#14008b 745px,#1d0080 747px,#280061 751px,#2d0052 755px,#2d0052 761px)"></i><i style="left:1044px;width:4px;background:linear-gradient(#2d0052 1px,#2d0052 455px,#24006d 461px,#1c0185 465px,#0e0194 475px,#0103a0 493px,#0119a0 509px,#01359f 517px,#027d91 529px,#009086 535px,#00926b 551px,#00a963 561px,#00b343 569px,#06b224 575px,#14b00f 581px,#45b100 591px,#8fc400 605px,#a8cc03 617px,#b1cd02 631px,#a5be01 637px,#7d9400 647px,#657f00 659px,#4a7000 675px,#196d04 693px,#08700f 701px,#007520 707px,#007c43 713px,#007f52 715px,#007a64 719px,#004c7a 729px,#000a93 739px,#020095 741px,#14008b 745px,#1d0080 747px,#280061 751px,#2d0052 755px,#2d0052 761px)"></i><i style="left:1048px;width:4px;background:linear-gradient(#2d0052 1px,#2d0052 457px,#1b0186 467px,#0c0196 481px,#0105a0 501px,#0219a1 513px,#022fa0 519px,#08599e 525px,#0f909b 531px,#0e9d98 533px,#03a486 539px,#00a472 551px,#00af65 559px,#00b440 569px,#07b223 575px,#17b00e 581px,#49b200 591px,#89c200 603px,#9cc801 611px,#aece02 627px,#a9c502 635px,#7d9500 647px,#627d00 661px,#497000 675px,#1d6c03 691px,#08700f 701px,#007521 707px,#007c43 713px,#007f52 715px,#007369 721px,#005873 727px,#001790 737px,#020095 741px,#14008b 745px,#1d0080 747px,#280061 751px,#2d0052 755px,#2d0052 761px)"></i><i style="left:1052px;width:4px;background:linear-gradient(#2d0052 1px,#2d0052 457px,#29005e 461px,#1a018a 471px,#05019d 501px,#0208a1 513px,#0320a1 521px,#0439a1 525px,#1065a1 529px,#1e97a3 533px,#20a6a2 535px,#19b197 539px,#03b07f 547px,#00b468 557px,#00b434 571px,#10b011 579px,#42b100 589px,#8cc300 603px,#a4cb01 617px,#adcc02 631px,#a2be01 637px,#7d9600 647px,#5e7a00 663px,#496f00 675px,#1c6c03 691px,#096f0c 699px,#007522 707px,#007c44 713px,#007f52 715px,#007468 721px,#005972 727px,#001790 737px,#020095 741px,#14008b 745px,#1d0080 747px,#280061 751px,#2d0052 755px,#2d0052 761px)"></i><i style="left:1056px;width:4px;background:linear-gradient(#2d0052 1px,#2d0052 461px,#1d0182 473px,#14018f 483px,#0c0297 507px,#06049e 519px,#030da1 523px,#0423a1 527px,#0534a1 529px,#0b4ca2 531px,#1f88a5 535px,#269fa7 537px,#28aea6 539px,#1eb799 543px,#05ba7b 553px,#00b539 569px,#0db116 577px,#1db00b 581px,#47b200 589px,#87c100 601px,#99c700 609px,#accc01 629px,#a5c301 635px,#7c9600 647px,#5b7800 665px,#486f00 675px,#1b6c03 691px,#086f0d 699px,#007625 707px,#007d59 717px,#006f6c 723px,#005b71 727px,#001790 737px,#020095 741px,#14008b 745px,#1d0080 747px,#280061 751px,#2d0052 755px,#2d0052 761px)"></i><i style="left:1060px;width:4px;background:linear-gradient(#2d0052 1px,#2d0052 463px,#1b0186 483px,#15018e 497px,#1a0288 515px,#09049d 527px,#050ba0 529px,#0418a1 531px,#042fa1 533px,#2193a5 539px,#26a8a7 541px,#26b3a2 543px,#15ba8e 549px,#06bb71 557px,#00b436 569px,#0fb013 577px,#42b100 587px,#84c000 599px,#97c600 607px,#aacc01 629px,#a4c201 635px,#7b9600 647px,#547400 669px,#256b00 687px,#08700e 699px,#007627 707px,#007e58 717px,#00706b 723px,#005c71 727px,#001790 737px,#020095 741px,#14008b 745px,#1d0080 747px,#280061 751px,#2d0052 755px,#2d0052 761px)"></i><i style="left:1064px;width:4px;background:linear-gradient(#2d0052 1px,#2d0052 469px,#1f017d 491px,#1e017d 497px,#25006a 513px,#230170 519px,#1b0287 527px,#05079f 533px,#031da1 535px,#063fa1 537px,#1a8ba3 541px,#1fa3a5 543px,#21b0a1 545px,#13ba8d 551px,#09bc78 557px,#00b436 569px,#10b010 577px,#47b200 587px,#8ac200 599px,#9cc800 611px,#a9cb01 629px,#a2c101 635px,#7b9600 647px,#537300 669px,#296c00 685px,#08700e 699px,#007627 707px,#007e58 717px,#00706b 723px,#005c71 727px,#001790 737px,#020095 741px,#14008b 745px,#1d0080 747px,#280061 751px,#2d0052 755px,#2d0052 761px)"></i><i style="left:1068px;width:4px;background:linear-gradient(#2d0052 1px,#2d0052 477px,#260065 495px,#2b0057 511px,#2b0057 517px,#24006b 525px,#17018c 531px,#0205a1 535px,#0545a0 539px,#138aa0 543px,#18a0a2 545px,#17b498 549px,#0abd7c 557px,#00b436 569px,#11b010 577px,#3db000 585px,#84c000 597px,#94c500 603px,#a8cb00 627px,#a4c400 633px,#799500 647px,#537300 669px,#296c00 685px,#08700f 699px,#007627 707px,#007e58 717px,#00706b 723px,#005c71 727px,#001790 737px,#020095 741px,#14008b 745px,#1d0080 747px,#280061 751px,#2d0052 755px,#2d0052 761px)"></i><i style="left:1072px;width:4px;background:linear-gradient(#2d0052 1px,#2d0052 515px,#250069 523px,#100091 531px,#0106a0 535px,#01389f 539px,#0a769d 543px,#12a39f 547px,#10b593 551px,#06bb73 559px,#02b32b 571px,#12b00f 577px,#41b100 585px,#86c100 597px,#96c600 605px,#a7cb00 627px,#a2c300 633px,#789500 647px,#4f7100 671px,#1e6c02 689px,#08700f 699px,#007627 707px,#007e58 717px,#00706b 723px,#005c71 727px,#001790 737px,#020095 741px,#14008b 745px,#1d0080 747px,#280061 751px,#2d0052 755px,#2d0052 761px)"></i><i style="left:1076px;width:4px;background:linear-gradient(#2d0052 1px,#2d0052 509px,#2b0058 513px,#190087 525px,#00029f 533px,#0020a0 537px,#024c9e 541px,#08829b 545px,#0b989c 547px,#0cb093 551px,#04bb74 559px,#02b32b 571px,#13b00f 577px,#43b100 585px,#81bf00 595px,#92c500 601px,#a6ca00 625px,#a0c000 633px,#779400 647px,#4e7100 671px,#1e6c02 689px,#08700f 699px,#007627 707px,#007e58 717px,#00706b 723px,#005c71 727px,#001790 737px,#020095 741px,#14008b 745px,#1d0080 747px,#280061 751px,#2d0052 755px,#2d0052 761px)"></i><i style="left:1080px;width:4px;background:linear-gradient(#2d0052 1px,#2d0052 505px,#17008a 521px,#00029f 531px,#0022a0 537px,#00459e 541px,#058e9a 547px,#06a099 549px,#05b38d 553px,#02ba74 559px,#02b32b 571px,#14b00e 577px,#45b100 585px,#83c000 595px,#93c500 601px,#a4c900 623px,#9dbc00 633px,#769200 647px,#4d7100 671px,#1e6c03 689px,#08700f 699px,#007627 707px,#007e58 717px,#00706b 723px,#005c71 727px,#001790 737px,#020095 741px,#14008b 745px,#1d0080 747px,#280061 751px,#2d0052 755px,#2d0052 761px)"></i><i style="left:1084px;width:4px;background:linear-gradient(#2d0052 1px,#2d0052 501px,#260065 507px,#190088 515px,#00039e 529px,#0029a0 537px,#00479d 541px,#019d99 549px,#01b18b 553px,#00b972 559px,#03b32a 571px,#16b00e 577px,#3bb000 583px,#86c100 595px,#94c500 601px,#a4c800 621px,#99b700 633px,#759100 647px,#4b7000 671px,#1d6c03 689px,#08700f 699px,#007627 707px,#007e58 717px,#00706b 723px,#005c71 727px,#001790 737px,#020095 741px,#14008b 745px,#1d0080 747px,#280061 751px,#2d0052 755px,#2d0052 761px)"></i><i style="left:1088px;width:4px;background:linear-gradient(#2d0052 1px,#2d0052 501px,#190088 511px,#01019d 525px,#001ca0 533px,#003d9e 539px,#009d98 549px,#00b18a 553px,#00b96f 559px,#00b432 569px,#0fb013 575px,#3eb000 583px,#80bf00 593px,#93c500 599px,#a3c900 617px,#99b600 631px,#6e8a00 651px,#4a7000 671px,#1c6c03 689px,#08700f 699px,#007627 707px,#007e58 717px,#00706b 723px,#005c71 727px,#001790 737px,#020095 741px,#14008b 745px,#1d0081 747px,#270062 751px,#2d0052 755px,#2d0052 761px)"></i><i style="left:1092px;width:4px;background:linear-gradient(#2d0052 1px,#2d0052 501px,#1b0085 509px,#070099 519px,#01009f 523px,#0029a0 535px,#00429e 539px,#009e97 549px,#00b18a 553px,#00b96e 559px,#01b42e 569px,#11b010 575px,#41b100 583px,#83c000 593px,#95c600 599px,#a5c800 617px,#93ae00 633px,#6a8600 653px,#4a7000 671px,#1c6c03 689px,#077010 699px,#007627 707px,#007e58 717px,#00706b 723px,#005c71 727px,#00188f 737px,#010095 741px,#1b0085 747px,#260066 751px,#2d0052 755px,#2d0052 761px)"></i><i style="left:1096px;width:4px;background:linear-gradient(#2d0052 1px,#2d0052 501px,#18008a 511px,#01009f 523px,#002aa0 535px,#00429e 539px,#009e97 549px,#00b18a 553px,#00b96e 559px,#02b42c 569px,#13b00f 575px,#43b100 583px,#84c000 593px,#96c600 599px,#a6ca00 615px,#9bb700 627px,#6a8400 653px,#4a7000 671px,#1c6c03 689px,#077010 699px,#007627 707px,#007e58 717px,#00706b 723px,#005c71 727px,#00198f 737px,#000195 741px,#180089 747px,#2d0052 755px,#2d0052 761px)"></i><i style="left:1100px;width:4px;background:linear-gradient(#2d0052 1px,#2d0052 501px,#280060 505px,#18018b 513px,#0102a0 525px,#0028a0 535px,#00429e 539px,#008e98 547px,#00a990 551px,#00b582 555px,#00b96e 559px,#02b42c 569px,#13b00f 575px,#43b100 583px,#84c000 593px,#96c600 599px,#a8ca00 615px,#9eba00 625px,#6c8600 651px,#4a7000 671px,#1c6c03 689px,#077010 699px,#007627 707px,#007e58 717px,#00706b 723px,#005c71 727px,#001b8f 737px,#000395 741px,#16008a 747px,#2c0055 755px,#2d0052 761px)"></i><i style="left:1104px;width:4px;background:linear-gradient(#2d0052 1px,#2d0052 503px,#280060 507px,#1a0188 515px,#0103a0 527px,#0028a0 535px,#00559c 541px,#008f98 547px,#00a990 551px,#00b97a 557px,#02b42c 569px,#13b00f 575px,#44b201 583px,#84c001 593px,#97c600 599px,#a9cb00 615px,#a2be00 623px,#728a00 647px,#4e7100 669px,#1c6c03 689px,#077010 699px,#007627 707px,#007e58 717px,#00706b 723px,#005c71 727px,#001b8f 737px,#000495 741px,#15008b 747px,#280061 753px,#2d0052 757px,#2d0052 761px)"></i><i style="left:1108px;width:4px;background:linear-gradient(#2d0052 1px,#2d0052 505px,#270064 511px,#19018a 519px,#03019e 527px,#0011a0 531px,#00389f 537px,#009398 547px,#00ab8f 551px,#00b979 557px,#02b42c 569px,#13b00f 575px,#43b202 583px,#8bc202 595px,#a0c900 605px,#a9c900 617px,#8da300 633px,#637d00 655px,#476f00 671px,#1b6c04 689px,#077010 699px,#007627 707px,#007e58 717px,#00706b 723px,#005c71 727px,#001b8e 737px,#000495 741px,#15008b 747px,#280061 753px,#2d0052 757px,#2d0052 761px)"></i><i style="left:1112px;width:4px;background:linear-gradient(#2d0052 1px,#2d0052 509px,#24006e 517px,#17018c 523px,#02019f 529px,#0029a0 535px,#008a98 545px,#009a98 547px,#00af8d 551px,#00ba76 557px,#02b32b 569px,#12b00f 575px,#41b102 583px,#88c203 595px,#9ac701 601px,#ac0 613px,#a5c000 621px,#889c00 635px,#637c00 655px,#4b7000 669px,#1a6d04 689px,#077010 699px,#007627 707px,#007e58 717px,#00706b 723px,#005c71 727px,#001b8e 737px,#000495 741px,#15008b 747px,#280061 753px,#2d0052 757px,#2d0052 761px)"></i><i style="left:1116px;width:4px;background:linear-gradient(#2d0052 1px,#2d0052 513px,#260066 519px,#18018b 525px,#07009a 529px,#0005a0 531px,#003b9f 537px,#007c98 543px,#009e97 547px,#00b18b 551px,#00b971 557px,#00b433 567px,#12b00f 575px,#3fb102 583px,#90c403 597px,#a8cc00 609px,#aac700 617px,#899c00 633px,#627a00 655px,#4b7000 669px,#1a6d04 689px,#077010 699px,#007627 707px,#007e58 717px,#00706b 723px,#005c71 727px,#001b8e 737px,#000495 741px,#15008b 747px,#280061 753px,#2d0052 757px,#2d0052 761px)"></i><i style="left:1120px;width:4px;background:linear-gradient(#2d0052 1px,#2d0052 517px,#270062 521px,#16008c 527px,#0001a0 531px,#007f98 543px,#009f96 547px,#00b189 551px,#00b96e 557px,#00b42f 567px,#14b00e 575px,#4bb303 585px,#8dc304 597px,#a6cb00 607px,#abc900 615px,#96ab00 625px,#849500 635px,#5f7800 657px,#4b7000 669px,#1a6d04 689px,#077010 699px,#007627 707px,#007e58 717px,#00706b 723px,#005c71 727px,#001b8e 737px,#000495 741px,#15008b 747px,#280061 753px,#2d0052 757px,#2d0052 761px)"></i><i style="left:1124px;width:4px;background:linear-gradient(#2d0052 1px,#2d0052 519px,#260065 523px,#180089 527px,#0005a0 531px,#00609b 539px,#009798 545px,#00ac8e 549px,#00b979 555px,#01b42e 567px,#0fb114 573px,#3fb104 583px,#92c504 599px,#ac0 609px,#acc700 615px,#899900 629px,#607700 657px,#4b7000 669px,#196d04 689px,#096f0d 697px,#007420 705px,#007c45 713px,#007c5f 719px,#00706b 723px,#005c71 727px,#001b8e 737px,#000495 741px,#15008b 747px,#280061 753px,#2d0052 757px,#2d0052 761px)"></i><i style="left:1128px;width:4px;background:linear-gradient(#2d0052 1px,#2d0052 519px,#270064 523px,#16008b 527px,#060099 529px,#00139f 531px,#00469c 535px,#008098 541px,#009e97 545px,#00b08c 549px,#00ba77 555px,#01b42e 567px,#17b112 575px,#49b307 585px,#8fc406 599px,#a8cc00 607px,#aeca00 613px,#a2b700 619px,#889700 627px,#637800 655px,#4b7000 669px,#196d04 689px,#096f0d 697px,#007420 705px,#007c45 713px,#007c5f 719px,#00706b 723px,#005c71 727px,#001b8e 737px,#000495 741px,#15008b 747px,#280061 753px,#2d0052 757px,#2d0052 761px)"></i><i style="left:1132px;width:4px;background:linear-gradient(#2d0052 1px,#2d0052 517px,#29005f 521px,#24006c 523px,#1c0083 525px,#0c0093 527px,#000c9c 529px,#002b9b 531px,#005898 535px,#008997 541px,#00a294 545px,#00b583 551px,#00ba74 555px,#01b539 565px,#13b21a 573px,#3eb30c 583px,#81c00a 597px,#9dc906 603px,#afcc00 611px,#a9be00 617px,#8a9700 625px,#7f8b00 631px,#718000 645px,#507100 667px,#1e6c02 687px,#096f0d 697px,#007420 705px,#007c45 713px,#007c5f 719px,#00706b 723px,#005c71 727px,#001b8e 737px,#000495 741px,#15008b 747px,#280061 753px,#2d0052 757px,#2d0052 761px)"></i><i style="left:1136px;width:4px;background:linear-gradient(#2d0052 1px,#2d0052 513px,#2b0059 517px,#210075 521px,#070094 525px,#001297 527px,#004690 531px,#007892 537px,#009e95 543px,#00b287 549px,#00b972 555px,#02b645 563px,#0db52c 569px,#22b419 577px,#55b710 589px,#86c20e 599px,#a3cb08 605px,#b3cb00 613px,#adbf00 617px,#8b9500 625px,#7f8800 631px,#6e7d00 647px,#507100 667px,#1e6c02 687px,#096f0d 697px,#007420 705px,#007c45 713px,#007c5f 719px,#00706b 723px,#005c71 727px,#001b8e 737px,#000495 741px,#15008b 747px,#280061 753px,#2d0052 757px,#2d0052 761px)"></i><i style="left:1140px;width:4px;background:linear-gradient(#2d0052 1px,#2d0052 509px,#250069 515px,#170086 519px,#090091 521px,#010c94 523px,#003a89 527px,#006786 533px,#009a93 541px,#00b18a 547px,#00ba79 553px,#06b748 563px,#14b62e 571px,#27b61f 579px,#60ba15 593px,#9dc90c 605px,#b3ce01 611px,#b8ca00 615px,#afba00 619px,#8a9000 627px,#7d8500 635px,#507100 667px,#1e6c02 687px,#096f0d 697px,#007420 705px,#007c45 713px,#007c5f 719px,#00706b 723px,#005c71 727px,#001b8e 737px,#000495 741px,#15008b 747px,#280061 753px,#2d0052 757px,#2d0052 761px)"></i><i style="left:1144px;width:4px;background:linear-gradient(#2d0052 1px,#2d0052 503px,#2b0059 507px,#23006e 511px,#12008c 515px,#070392 517px,#000f92 519px,#003785 523px,#005a7d 529px,#00968f 539px,#00af8b 545px,#00ba77 553px,#06b854 561px,#1db831 575px,#30b723 583px,#78be15 601px,#b3cf03 611px,#c1d000 615px,#bcc300 619px,#939600 627px,#808600 635px,#507100 667px,#1e6c02 687px,#096f0d 697px,#007420 705px,#007c45 713px,#007c5f 719px,#00706b 723px,#005c71 727px,#001b8e 737px,#000495 741px,#15008b 747px,#280061 753px,#2d0052 757px,#2d0052 761px)"></i><i style="left:1148px;width:4px;background:linear-gradient(#2d0052 1px,#2d0052 497px,#24006d 505px,#190083 509px,#0f008e 511px,#050592 513px,#00298a 517px,#00437f 521px,#006479 529px,#008587 535px,#00a58c 541px,#00b383 547px,#00b96d 555px,#0db950 565px,#25b930 581px,#3ab925 589px,#70bc12 603px,#8ec40a 607px,#b3d003 611px,#cad500 615px,#ccd300 617px,#bfc100 621px,#959600 629px,#7a8100 639px,#507100 667px,#1e6c02 687px,#096f0d 697px,#007420 705px,#007c45 713px,#007c5f 719px,#00706b 723px,#005c71 727px,#001b8e 737px,#000495 741px,#15008b 747px,#280061 753px,#2d0052 757px,#2d0052 761px)"></i><i style="left:1152px;width:4px;background:linear-gradient(#2d0052 1px,#2d0052 491px,#2b0059 495px,#170086 503px,#060491 507px,#010c92 509px,#003983 515px,#005777 523px,#006c79 529px,#009789 537px,#00ad87 543px,#00b874 553px,#0ab854 565px,#26b92f 587px,#3cb71f 595px,#5eb80d 603px,#6ab90a 605px,#7ebe06 607px,#b3d001 611px,#c7d700 613px,#d2da00 615px,#d5d800 617px,#bebe00 623px,#959600 631px,#777f00 641px,#517100 667px,#1e6c02 687px,#096f0d 697px,#007420 705px,#007c45 713px,#007c5f 719px,#00706b 723px,#005c71 727px,#001b8e 737px,#000495 741px,#15008b 747px,#280061 753px,#2d0052 757px,#2d0052 761px)"></i><i style="left:1156px;width:4px;background:linear-gradient(#2d0052 1px,#2d0052 487px,#250068 493px,#14008c 499px,#080092 501px,#010a93 503px,#002a8a 507px,#00457e 513px,#006475 525px,#008882 533px,#00a682 541px,#00b36b 555px,#08b54e 569px,#18b635 587px,#26b41c 595px,#50b405 603px,#5fb602 605px,#77bc01 607px,#b7d200 611px,#cdda00 613px,#d8dd00 615px,#d5d600 619px,#bcbc00 625px,#919200 633px,#787f00 641px,#517100 667px,#1e6c02 687px,#096f0d 697px,#007420 705px,#007c45 713px,#007c5f 719px,#00706b 723px,#005c71 727px,#001b8e 737px,#000495 741px,#15008b 747px,#280061 753px,#2d0052 757px,#2d0052 761px)"></i><i style="left:1160px;width:4px;background:linear-gradient(#2d0052 1px,#2d0052 483px,#260067 489px,#12008d 495px,#060094 497px,#000a95 499px,#002e8c 503px,#00497f 509px,#006675 523px,#00917d 535px,#009d76 541px,#00a957 561px,#03a93d 577px,#08ae2e 589px,#12af15 595px,#3bb000 601px,#64b700 605px,#a6cb00 609px,#c1d600 611px,#d3dc00 613px,#dbdf00 615px,#d3d300 621px,#b7b600 627px,#8b8d00 635px,#757d00 643px,#517100 667px,#1e6c02 687px,#096f0d 697px,#007420 705px,#007c45 713px,#007c5f 719px,#00706b 723px,#005c71 727px,#001b8e 737px,#000495 741px,#15008b 747px,#280061 753px,#2d0052 757px,#2d0052 761px)"></i><i style="left:1164px;width:4px;background:linear-gradient(#2d0052 1px,#2d0052 481px,#23006e 487px,#17008a 491px,#020399 495px,#00388f 501px,#005084 507px,#006b77 521px,#008d78 533px,#00946e 539px,#009552 555px,#009b2e 585px,#05a423 591px,#0ea911 595px,#41af00 601px,#73ba00 605px,#b7d200 609px,#cdda00 611px,#d9df00 613px,#d9d900 619px,#c5c400 625px,#8c8d00 635px,#767d00 643px,#517100 667px,#1e6c02 687px,#096f0d 697px,#00741f 705px,#007c45 713px,#007c5f 719px,#00706b 723px,#005c71 727px,#001b8e 737px,#000495 741px,#15008b 747px,#280061 753px,#2d0052 757px,#2d0052 761px)"></i><i style="left:1168px;width:4px;background:linear-gradient(#2d0052 1px,#2d0052 479px,#23006f 485px,#15008d 489px,#01039d 493px,#003997 499px,#00578e 505px,#007083 515px,#009376 533px,#008f5b 543px,#008647 551px,#018622 583px,#0c9a11 593px,#24a507 597px,#4aaf00 601px,#63b500 603px,#abcd00 607px,#c6d700 609px,#d6de00 611px,#ddde00 615px,#d6d500 621px,#bbba00 627px,#8d8d00 635px,#767d00 643px,#517100 667px,#1e6c02 687px,#096f0c 697px,#00741f 705px,#007c45 713px,#007c5f 719px,#00706b 723px,#005c71 727px,#001b8e 737px,#000595 741px,#0c0090 745px,#1c0081 749px,#270064 753px,#2d0052 757px,#2d0052 761px)"></i><i style="left:1172px;width:4px;background:linear-gradient(#2d0052 1px,#2d0052 479px,#1f007a 485px,#17008b 487px,#01019e 491px,#00449b 499px,#006994 507px,#00828b 517px,#009d7b 531px,#009a65 539px,#008643 547px,#007d37 555px,#02771c 575px,#0a780e 585px,#11850a 591px,#229506 595px,#41a600 599px,#56ae00 601px,#73b800 603px,#b9d200 607px,#cfdb00 609px,#dadf00 611px,#dad900 619px,#c6c500 625px,#969500 633px,#7f8300 639px,#687800 653px,#517100 667px,#1f6c02 687px,#096f0c 697px,#00741f 705px,#007c45 713px,#007c5f 719px,#00706b 723px,#005c71 727px,#001c8e 737px,#000694 741px,#0a0090 745px,#1a0087 749px,#29005e 755px,#2d0052 757px,#2d0052 761px)"></i><i style="left:1176px;width:4px;background:linear-gradient(#2d0052 1px,#2d0052 477px,#2c0055 479px,#23006f 483px,#13008f 487px,#070099 489px,#0007a0 491px,#003d9e 497px,#00609a 503px,#008595 513px,#009d8c 523px,#00aa79 533px,#00a463 539px,#008c3c 547px,#007f31 553px,#072 565px,#0f6f09 575px,#1b6e04 581px,#1c7605 589px,#248503 593px,#3b9a00 597px,#64af00 601px,#abcc00 605px,#c5d700 607px,#d6dd00 609px,#ddde00 613px,#d6d400 621px,#b9b800 627px,#949400 633px,#797f00 641px,#527100 667px,#1b6c04 689px,#077010 699px,#007626 707px,#007e57 717px,#007865 721px,#005078 729px,#001d8e 737px,#010095 743px,#170089 749px,#2d0052 757px,#2d0052 761px)"></i><i style="left:1180px;width:4px;background:linear-gradient(#2d0052 1px,#2d0052 477px,#2c0055 479px,#23006f 483px,#13008f 487px,#070099 489px,#0007a0 491px,#003d9e 497px,#00619b 503px,#008b97 513px,#00a391 521px,#00b27f 531px,#00b26c 537px,#00973a 547px,#00862c 553px,#007a22 561px,#0d720a 569px,#2f6d00 577px,#326d00 581px,#277401 589px,#2e8300 593px,#469a00 597px,#58a500 599px,#71b200 601px,#b5d000 605px,#cdda00 607px,#dadf00 609px,#dcdb00 617px,#cdcc00 623px,#939300 633px,#797e00 641px,#4f7100 669px,#1c6c03 689px,#08700f 699px,#007523 707px,#007b40 713px,#007c5e 719px,#00716b 723px,#005c71 727px,#001d8e 737px,#010095 743px,#16008a 749px,#280061 755px,#2d0052 759px,#2d0052 761px)"></i><i style="left:1184px;width:4px;background:linear-gradient(#2d0052 1px,#2d0052 479px,#1f007a 485px,#17008b 487px,#02019f 491px,#01479e 499px,#007599 507px,#009e97 517px,#00b286 527px,#00b872 535px,#00a943 545px,#00992d 551px,#028620 559px,#0d7d0c 565px,#337400 573px,#427100 577px,#3f6f00 581px,#307000 587px,#317b00 591px,#429000 595px,#64a800 599px,#c0d400 605px,#d3dc00 607px,#dcdf00 609px,#dcdb00 617px,#ccca00 623px,#919100 633px,#787e00 641px,#507100 669px,#1d6c03 689px,#08700e 699px,#007521 707px,#007b3e 713px,#007c5d 719px,#00716b 723px,#005c71 727px,#001b8e 737px,#020095 743px,#17008a 749px,#280061 755px,#2d0052 759px,#2d0052 761px)"></i><i style="left:1188px;width:4px;background:linear-gradient(#2d0052 1px,#2d0052 479px,#270063 483px,#13018f 489px,#08019a 491px,#0108a0 493px,#01439e 499px,#016c9a 505px,#00a195 517px,#00b288 525px,#00ba77 533px,#00aa34 549px,#0b9312 561px,#308800 569px,#4b7e00 575px,#4f7b00 577px,#477300 581px,#367200 587px,#397d00 591px,#4b9300 595px,#5b9f00 597px,#73ae00 599px,#b3cd00 603px,#cad800 605px,#d8de00 607px,#dd0 613px,#d8d600 619px,#c0be00 625px,#909000 633px,#777e00 641px,#507100 669px,#1e6c03 689px,#096f0d 699px,#007520 707px,#007b3e 713px,#007c5d 719px,#00716b 723px,#005c71 727px,#001790 737px,#000195 741px,#180089 749px,#280061 755px,#2d0052 759px,#2d0052 761px)"></i><i style="left:1192px;width:4px;background:linear-gradient(#2d0052 1px,#2d0052 481px,#260068 485px,#19018a 489px,#0102a0 493px,#01419e 499px,#036c9b 505px,#019c98 515px,#01b18b 523px,#03bb78 533px,#01af2c 551px,#0da512 559px,#379d00 567px,#569400 573px,#5d8a00 577px,#447500 583px,#3b7500 587px,#418000 591px,#559600 595px,#68a400 597px,#bcd100 603px,#d0da00 605px,#dbdf00 607px,#dcda00 617px,#cac800 623px,#908f00 633px,#777d00 641px,#507100 669px,#1e6c02 689px,#096f0d 699px,#007520 707px,#007b3e 713px,#007c5d 719px,#00716b 723px,#005c71 727px,#001491 737px,#000694 739px,#040094 741px,#1a0087 749px,#2c0055 757px,#2d0052 761px)"></i><i style="left:1196px;width:4px;background:linear-gradient(#2d0052 1px,#2d0052 481px,#270063 485px,#1b0187 489px,#03019e 493px,#034d9e 501px,#05829a 509px,#07a697 517px,#0ab58c 525px,#08bc79 535px,#02b22b 551px,#15ad0e 559px,#43ab00 567px,#65a500 573px,#6ca100 575px,#6a9900 577px,#4b7c00 583px,#427900 587px,#4a8500 591px,#659d00 595px,#95bb00 599px,#c5d500 603px,#d5dc00 605px,#ddde00 609px,#d8d600 619px,#bfbd00 625px,#8f8e00 633px,#777d00 641px,#507100 669px,#1e6c02 689px,#096f0d 699px,#007520 707px,#007b3e 713px,#007c5e 719px,#00706b 723px,#005b72 727px,#001291 737px,#000395 739px,#1a0087 747px,#28005f 755px,#2d0052 757px,#2d0052 761px)"></i><i style="left:1200px;width:4px;background:linear-gradient(#2d0052 1px,#2d0052 481px,#270062 485px,#1c0084 489px,#06019c 493px,#010ca0 495px,#06659d 505px,#0b969d 513px,#10ac99 519px,#0fb989 531px,#0bbc78 537px,#05b42e 551px,#17b00e 559px,#47b000 567px,#6eaf00 573px,#75ac00 575px,#74a500 577px,#538600 583px,#4b8100 587px,#598e00 591px,#7ba800 595px,#bdd000 601px,#d8de00 605px,#dedd00 613px,#d8d600 619px,#bfbc00 625px,#8e8c00 633px,#777d00 641px,#507100 669px,#1e6c02 689px,#096f0d 699px,#007520 707px,#007b3e 713px,#007c5e 719px,#00706b 723px,#005873 727px,#001e8e 735px,#000195 739px,#1a0088 745px,#2b0057 755px,#2d0052 759px,#2d0052 761px)"></i><i style="left:1204px;width:4px;background:linear-gradient(#2d0052 1px,#2d0052 483px,#15018d 491px,#0103a0 495px,#065c9e 505px,#0f909e 513px,#15a79e 519px,#13b694 529px,#0cbd7e 537px,#07b63d 549px,#15b216 559px,#39b002 565px,#74b600 573px,#7cb400 575px,#7cae00 577px,#5d9300 583px,#588e00 585px,#598f00 587px,#6d9c00 591px,#c9d600 601px,#dbdf00 605px,#dcd900 617px,#c9c600 623px,#8d8b00 633px,#767d00 641px,#557200 667px,#236c01 687px,#096f0d 699px,#007520 707px,#007b3e 713px,#007c5e 719px,#006f6c 723px,#005674 727px,#001b8f 735px,#000096 739px,#1c0083 745px,#260066 749px,#2d0052 755px,#2d0052 761px)"></i><i style="left:1208px;width:4px;background:linear-gradient(#2d0052 1px,#2d0052 483px,#260067 487px,#1a0188 491px,#05019c 495px,#010ba0 497px,#096c9e 509px,#108d9f 515px,#15a89e 525px,#10b78e 533px,#0abc77 539px,#08b749 547px,#0cb630 555px,#14b31d 559px,#2bb10c 563px,#4ab201 567px,#7bba00 573px,#83bb00 575px,#83b700 577px,#6aa200 583px,#69a000 585px,#78a700 589px,#d1da00 601px,#dcdf00 605px,#dbd900 617px,#c7c400 623px,#959200 631px,#7e8100 637px,#6c7900 649px,#507100 669px,#1f6c02 689px,#096f0c 699px,#007520 707px,#007b3e 713px,#007c5e 719px,#006f6c 723px,#005774 727px,#001c8e 735px,#000096 739px,#13008c 743px,#1c0081 745px,#270062 749px,#2d0052 753px,#2d0052 761px)"></i><i style="left:1212px;width:4px;background:linear-gradient(#2d0052 1px,#2d0052 483px,#270062 487px,#14018f 493px,#0103a0 497px,#075e9e 509px,#0d809e 515px,#12a69d 527px,#0db88a 535px,#0bbd7b 539px,#09b84b 547px,#0eb52e 557px,#18b216 561px,#49b201 567px,#7ebd00 573px,#87be00 575px,#81b800 579px,#78b100 583px,#84b400 587px,#ccd900 599px,#dbe000 603px,#dbd800 617px,#c6c200 623px,#939000 631px,#787e00 639px,#517100 669px,#1b6c04 691px,#077010 701px,#007628 709px,#007e55 717px,#007865 721px,#005972 727px,#001191 737px,#000295 739px,#13008c 743px,#1c0081 745px,#280061 749px,#2d0052 753px,#2d0052 761px)"></i><i style="left:1216px;width:4px;background:linear-gradient(#2d0052 1px,#2d0052 485px,#17018c 493px,#05019d 497px,#0109a0 499px,#06539f 509px,#0c7d9d 517px,#11a89b 529px,#0fb88d 535px,#0dbd7f 539px,#0bb94f 547px,#0bb83e 553px,#0cb633 557px,#15b218 561px,#37b106 565px,#6fb900 571px,#7fbe00 573px,#88c000 575px,#80bb00 581px,#8abe00 585px,#d0db00 599px,#dce000 603px,#dddb00 615px,#ceca00 621px,#918e00 631px,#777d00 639px,#527200 669px,#1b6c03 691px,#077010 701px,#007628 709px,#007e55 717px,#007865 721px,#004f78 729px,#001291 737px,#000395 739px,#13008c 743px,#1c0081 745px,#280061 749px,#2d0052 753px,#2d0052 761px)"></i><i style="left:1220px;width:4px;background:linear-gradient(#2d0052 1px,#2d0052 485px,#220072 491px,#15018e 495px,#03029f 499px,#0440a0 507px,#0a659f 513px,#12a59e 529px,#11ba8a 537px,#10be7a 541px,#0fba55 547px,#0eb944 553px,#0cb737 557px,#15b31a 561px,#38b105 565px,#75bb00 571px,#84c000 573px,#8cc200 575px,#88c100 581px,#94c400 585px,#d8df00 601px,#dedd00 611px,#dad700 617px,#c1bd00 623px,#8e8c00 631px,#777d00 639px,#547200 669px,#206c02 689px,#077010 701px,#007628 709px,#007e55 717px,#007865 721px,#004f78 729px,#001291 737px,#000395 739px,#13008c 743px,#1c0081 745px,#280061 749px,#2d0052 753px,#2d0052 761px)"></i><i style="left:1224px;width:4px;background:linear-gradient(#2d0052 1px,#2d0052 487px,#230070 493px,#17028d 497px,#04059f 501px,#0647a0 509px,#0e70a0 517px,#15a79e 531px,#14b990 537px,#14bf82 541px,#12bb57 549px,#0cb83e 557px,#13b31f 561px,#20b211 563px,#4db301 567px,#7abd00 571px,#8ac200 573px,#93c500 577px,#97c600 583px,#d9df00 601px,#dedc00 613px,#d3d000 619px,#b1ad00 625px,#8c8b00 631px,#767d00 639px,#547200 669px,#206c02 689px,#077010 701px,#007628 709px,#007e55 717px,#007865 721px,#004f78 729px,#001291 737px,#000395 739px,#13008c 743px,#1c0081 745px,#280061 749px,#2d0052 753px,#2d0052 761px)"></i><i style="left:1228px;width:4px;background:linear-gradient(#2d0052 1px,#2d0052 489px,#260068 495px,#150290 501px,#0b0399 503px,#0316a1 507px,#0b54a1 515px,#1386a0 525px,#18aa9f 533px,#17bb8f 539px,#15bf77 545px,#0ab843 557px,#09b634 559px,#1bb111 563px,#4cb301 567px,#7bbd00 571px,#8cc300 573px,#99c700 577px,#a5cb00 585px,#d9df00 601px,#dedc00 613px,#d2cf00 619px,#959200 629px,#797f00 637px,#547200 669px,#206c02 689px,#077010 701px,#007628 709px,#007e55 717px,#007865 721px,#004f78 729px,#001291 737px,#000395 739px,#13008c 743px,#1c0081 745px,#280061 749px,#2d0052 753px,#2d0052 761px)"></i><i style="left:1232px;width:4px;background:linear-gradient(#2d0052 1px,#2d0052 493px,#260067 499px,#140392 507px,#0b039a 509px,#060b9f 511px,#063fa1 517px,#1277a1 525px,#19ab9f 535px,#16bb8e 541px,#11be79 547px,#06b743 557px,#04b533 559px,#17b00f 563px,#4bb200 567px,#7bbd00 571px,#8dc300 573px,#9ec900 577px,#bbd300 591px,#dce000 603px,#dcd900 615px,#c7c400 621px,#949100 629px,#787e00 637px,#547200 669px,#206c02 689px,#077010 701px,#007628 709px,#007e55 717px,#007865 721px,#004f78 729px,#001291 737px,#000395 739px,#13008c 743px,#1c0081 745px,#280061 749px,#2d0052 753px,#2d0052 761px)"></i><i style="left:1236px;width:4px;background:linear-gradient(#2d0052 1px,#2d0052 497px,#2b0058 501px,#24016f 507px,#110394 513px,#08069c 515px,#0310a1 517px,#084ba1 523px,#117d9f 529px,#14aa9d 537px,#0fb88c 543px,#0bbd7e 547px,#00b42f 559px,#17b00d 563px,#4bb300 567px,#7cbd00 571px,#8ec300 573px,#a0c900 577px,#dce000 603px,#dbd900 615px,#c6c300 621px,#939100 629px,#787e00 637px,#547200 669px,#216c02 689px,#077010 701px,#007628 709px,#007e55 717px,#007865 721px,#004f78 729px,#001291 737px,#000395 739px,#13008c 743px,#1c0081 745px,#280061 749px,#2d0052 753px,#2d0052 761px)"></i><i style="left:1240px;width:4px;background:linear-gradient(#2d0052 1px,#2d0052 503px,#2b0058 507px,#220176 513px,#140291 517px,#08029c 519px,#0210a1 521px,#09669e 529px,#0b929c 535px,#0aa798 539px,#04b783 545px,#01b96f 549px,#03b32a 559px,#0bb119 561px,#1cb00c 563px,#4db300 567px,#7cbd00 571px,#8ec300 573px,#a7cc00 579px,#dbe000 601px,#dbd900 615px,#c6c300 621px,#939000 629px,#787e00 637px,#547200 669px,#216c01 689px,#07700f 701px,#007628 709px,#007e55 717px,#007865 721px,#004f78 729px,#001291 737px,#000395 739px,#13008c 743px,#1c0081 745px,#280061 749px,#2d0052 753px,#2d0052 761px)"></i><i style="left:1244px;width:4px;background:linear-gradient(#2d0052 1px,#2d0052 509px,#23006f 515px,#14018f 519px,#07019b 521px,#010fa0 523px,#02689b 531px,#019798 537px,#00b288 543px,#00ba79 547px,#00b434 557px,#0eb013 561px,#39b001 565px,#7ebe00 571px,#9ac700 575px,#c6d800 591px,#dce000 601px,#dbd900 615px,#c6c200 621px,#929000 629px,#787e00 637px,#547200 669px,#216c01 689px,#08700f 701px,#007628 709px,#007e55 717px,#007865 721px,#004f78 729px,#001291 737px,#000395 739px,#13008c 743px,#1c0081 745px,#280061 749px,#2d0052 753px,#2d0052 761px)"></i><i style="left:1248px;width:4px;background:linear-gradient(#2d0052 1px,#2d0052 509px,#220071 515px,#120090 519px,#05009b 521px,#0010a0 523px,#006d9a 531px,#009c97 537px,#00b385 543px,#00ba75 547px,#01b42d 557px,#13b00f 561px,#3eb000 565px,#7fbe00 571px,#9ac700 575px,#d1dc00 595px,#dce000 601px,#dbd900 615px,#c6c200 621px,#939000 629px,#787e00 637px,#557200 669px,#226c01 689px,#08700f 701px,#007628 709px,#007e55 717px,#007865 721px,#004f78 729px,#001291 737px,#000395 739px,#13008c 743px,#1c0081 745px,#280061 749px,#2d0052 753px,#2d0052 761px)"></i><i style="left:1252px;width:4px;background:linear-gradient(#2d0052 1px,#2d0052 505px,#250068 511px,#110090 517px,#06009a 519px,#000b9f 521px,#007d98 531px,#009b97 535px,#00b288 541px,#00b97a 545px,#00b437 555px,#0cb118 559px,#1ab00c 561px,#42b100 565px,#80bf00 571px,#9ac700 575px,#d6de00 597px,#dede00 605px,#dbd900 615px,#c6c300 621px,#939100 629px,#797f00 637px,#527200 671px,#1e6c03 691px,#08700f 701px,#007628 709px,#007e55 717px,#007865 721px,#004f78 729px,#001291 737px,#000395 739px,#13008c 743px,#1c0081 745px,#280061 749px,#2d0052 753px,#2d0052 761px)"></i><i style="left:1256px;width:4px;background:linear-gradient(#2d0052 1px,#2d0052 501px,#260065 507px,#16008b 513px,#02039b 517px,#00269d 521px,#008d98 531px,#00a692 535px,#00b681 541px,#00b971 545px,#00b431 555px,#0eb014 559px,#45b200 565px,#81bf00 571px,#9ac700 575px,#d6de00 597px,#dede00 605px,#dbd900 615px,#c7c300 621px,#949200 629px,#797f00 637px,#547200 671px,#1e6c02 691px,#08700f 701px,#007628 709px,#007e55 717px,#007865 721px,#004f78 729px,#001291 737px,#000395 739px,#13008c 743px,#1c0081 745px,#280061 749px,#2d0052 753px,#2d0052 761px)"></i><i style="left:1260px;width:4px;background:linear-gradient(#2d0052 1px,#2d0052 499px,#280061 503px,#190086 509px,#070097 513px,#00079c 515px,#008c97 529px,#00a692 533px,#00b681 539px,#00b866 545px,#03b32a 555px,#11b010 559px,#47b200 565px,#80bf00 571px,#99c701 575px,#dadf00 599px,#dedb00 613px,#d1ce00 619px,#959300 629px,#7f8200 635px,#6c7a00 651px,#4f7100 673px,#1e6c02 691px,#08700f 701px,#007628 709px,#007e55 717px,#007865 721px,#004f78 729px,#001291 737px,#000395 739px,#13008c 743px,#1c0081 745px,#280061 749px,#2d0052 753px,#2d0052 761px)"></i><i style="left:1264px;width:4px;background:linear-gradient(#2d0052 1px,#2d0052 497px,#2b0056 499px,#24006d 503px,#16008b 507px,#03019b 511px,#00219c 515px,#007d96 525px,#009b97 529px,#00b288 535px,#00ba74 541px,#01b42f 553px,#0db116 557px,#28b007 561px,#49b200 565px,#8bc301 573px,#a5cb02 579px,#dadf00 599px,#dcd900 615px,#c9c600 621px,#979400 629px,#808300 635px,#707b00 647px,#547200 671px,#1e6c02 691px,#08700f 701px,#007628 709px,#007e55 717px,#007865 721px,#004f78 729px,#001291 737px,#000395 739px,#13008c 743px,#1c0081 745px,#280061 749px,#2d0052 753px,#2d0052 761px)"></i><i style="left:1268px;width:4px;background:linear-gradient(#2d0052 1px,#2d0052 495px,#2c0056 497px,#24006d 501px,#16008c 505px,#02029e 509px,#007e96 523px,#00a393 529px,#00b484 535px,#00ba78 539px,#03b32a 553px,#0fb013 557px,#38b001 563px,#78bc01 571px,#94c502 575px,#b5d101 585px,#dadf00 599px,#dcda00 615px,#cbc700 621px,#989500 629px,#818300 635px,#717c00 645px,#547200 671px,#1e6c02 691px,#08700f 701px,#007628 709px,#007e55 717px,#007865 721px,#004f78 729px,#001291 737px,#000395 739px,#13008c 743px,#1c0081 745px,#280061 749px,#2d0052 753px,#2d0052 761px)"></i><i style="left:1272px;width:4px;background:linear-gradient(#2d0052 1px,#2d0052 495px,#1f0079 501px,#18008a 503px,#02009e 507px,#00379e 513px,#007e97 521px,#00a294 527px,#00b385 533px,#00b972 539px,#00b432 551px,#10b011 557px,#47b200 565px,#93c501 575px,#b0cf01 583px,#dadf01 599px,#ddda00 615px,#ccc800 621px,#8f8d00 631px,#787e00 639px,#547200 671px,#1e6c02 691px,#08700f 701px,#007628 709px,#007e55 717px,#007865 721px,#004f78 729px,#001291 737px,#000395 739px,#13008c 743px,#1c0081 745px,#280061 749px,#2d0052 753px,#2d0052 761px)"></i><i style="left:1276px;width:4px;background:linear-gradient(#2d0052 1px,#2d0052 493px,#2c0055 495px,#23006f 499px,#13008f 503px,#070099 505px,#0007a0 507px,#00679a 517px,#009f96 525px,#00b288 531px,#00ba77 537px,#01b42d 551px,#12b00f 557px,#3ab001 563px,#77bc01 571px,#93c502 575px,#b5d102 585px,#dce001 601px,#ddda00 615px,#cdc900 621px,#8f8e00 631px,#787e00 639px,#547200 671px,#1f6c02 691px,#08700e 701px,#007628 709px,#007e55 717px,#007865 721px,#004f78 729px,#001291 737px,#000395 739px,#13008c 743px,#1c0081 745px,#280061 749px,#2d0052 753px,#2d0052 761px)"></i><i style="left:1280px;width:4px;background:linear-gradient(#2d0052 1px,#2d0052 493px,#280061 497px,#120090 503px,#06009a 505px,#000aa0 507px,#006e99 517px,#009898 523px,#00b08c 529px,#00ba74 537px,#03b32a 551px,#16b00e 557px,#3db001 563px,#93c503 575px,#b4d103 585px,#dbe002 601px,#dddb00 615px,#cecb00 621px,#918f00 631px,#787e00 639px,#557200 671px,#206c02 691px,#08700e 701px,#007628 709px,#007e55 717px,#007865 721px,#004f78 729px,#001291 737px,#000395 739px,#13008c 743px,#1c0081 745px,#280061 749px,#2d0052 753px,#2d0052 761px)"></i><i style="left:1284px;width:4px;background:linear-gradient(#2d0052 1px,#2d0052 495px,#1d007f 501px,#090098 505px,#0007a0 507px,#015e9b 515px,#008e98 521px,#00a394 525px,#00b386 531px,#00ba73 537px,#04b42b 551px,#18b110 557px,#3fb104 563px,#8fc405 575px,#acce04 583px,#dbe002 601px,#dedb01 615px,#d0cc00 621px,#939100 631px,#797f00 639px,#527200 673px,#1b6c04 693px,#08700e 701px,#007628 709px,#007e55 717px,#007865 721px,#004f78 729px,#001291 737px,#000395 739px,#13008c 743px,#1c0081 745px,#280061 749px,#2d0052 753px,#2d0052 761px)"></i><i style="left:1288px;width:4px;background:linear-gradient(#2d0052 1px,#2d0052 495px,#260067 499px,#190189 503px,#01019f 507px,#035d9c 515px,#04809a 519px,#04a396 525px,#03b487 531px,#02ba75 537px,#08b52f 551px,#1ab215 557px,#4ab408 565px,#95c606 577px,#c5d804 593px,#dde003 603px,#dcd901 617px,#c9c500 623px,#959200 631px,#7f8200 637px,#6c7a00 653px,#4f7100 675px,#1b6c03 693px,#08700e 701px,#007628 709px,#007e55 717px,#007865 721px,#004f78 729px,#001291 737px,#000395 739px,#13008c 743px,#1c0081 745px,#280061 749px,#2d0052 753px,#2d0052 761px)"></i><i style="left:1292px;width:4px;background:linear-gradient(#2d0052 1px,#2d0052 495px,#2c0056 497px,#24006c 501px,#14018e 505px,#07019b 507px,#010fa0 509px,#04579d 515px,#078a9b 521px,#08ab95 527px,#07b884 533px,#07ba6e 539px,#0bb735 551px,#19b31b 557px,#46b40b 565px,#91c508 577px,#b3d105 587px,#dbe003 603px,#dcda01 617px,#cbc700 623px,#989500 631px,#808300 637px,#717c00 647px,#547200 673px,#216c01 691px,#08700e 701px,#007628 709px,#007e55 717px,#007865 721px,#004f78 729px,#001291 737px,#000395 739px,#13008c 743px,#1c0081 745px,#280061 749px,#2d0052 753px,#2d0052 761px)"></i><i style="left:1296px;width:4px;background:linear-gradient(#2d0052 1px,#2d0052 497px,#260065 501px,#1a0189 505px,#0105a0 509px,#07649d 517px,#0c969d 523px,#0eab98 527px,#0cbb83 535px,#0cbb6a 541px,#12b735 553px,#20b41c 559px,#4db50d 567px,#8dc40a 577px,#abce07 585px,#dce004 605px,#dddb01 617px,#ceca00 623px,#8f8e00 633px,#787e00 641px,#547200 673px,#216c01 691px,#08700e 701px,#007628 709px,#007e55 717px,#007865 721px,#004f78 729px,#001291 737px,#000395 739px,#13008c 743px,#1c0081 745px,#280061 749px,#2d0052 753px,#2d0052 761px)"></i><i style="left:1300px;width:4px;background:linear-gradient(#2d0052 1px,#2d0052 497px,#2c0055 499px,#23006e 503px,#120191 507px,#05019d 509px,#0113a0 511px,#0b719e 519px,#13a0a0 525px,#14b794 531px,#13bf7e 539px,#14ba40 553px,#1fb624 559px,#49b510 567px,#93c60b 579px,#b7d206 591px,#dce004 607px,#dbd901 619px,#d0cc01 623px,#918f00 633px,#787e00 641px,#547200 673px,#216c01 691px,#08700e 701px,#007628 709px,#007e55 717px,#007865 721px,#004f78 729px,#001291 737px,#000395 739px,#13008c 743px,#1c0081 745px,#280061 749px,#2d0052 753px,#2d0052 761px)"></i><i style="left:1304px;width:4px;background:linear-gradient(#2d0052 1px,#2d0052 499px,#260067 503px,#19018a 507px,#0205a0 511px,#064ca0 517px,#158ba0 523px,#1da7a3 527px,#1fbb98 533px,#1cc182 541px,#1abb42 555px,#26b725 561px,#50b714 569px,#93c60c 581px,#b8d206 593px,#dde004 609px,#dcda02 619px,#d1ce01 623px,#939100 633px,#787f00 641px,#547200 673px,#216c01 691px,#086f0e 701px,#007628 709px,#007e55 717px,#007865 721px,#005b72 727px,#001291 737px,#000295 739px,#13008c 743px,#1c0081 745px,#280061 749px,#2d0052 753px,#2d0052 761px)"></i><i style="left:1308px;width:4px;background:linear-gradient(#2d0052 1px,#2d0052 499px,#2c0056 501px,#24006c 505px,#17028d 509px,#0b0298 511px,#0208a1 513px,#0338a0 517px,#1880a2 523px,#2aaca8 529px,#2fbba3 533px,#28c48b 543px,#21bd48 557px,#2db92a 563px,#5cb916 573px,#9dc90a 585px,#d6de05 607px,#dedf04 615px,#d9d702 621px,#c9c601 625px,#959300 633px,#797f00 641px,#547200 673px,#226c01 691px,#096f0d 701px,#007628 709px,#007e55 717px,#007866 721px,#005873 727px,#001e8e 735px,#000195 739px,#13008c 743px,#1c0081 745px,#280061 749px,#2d0052 753px,#2d0052 761px)"></i><i style="left:1312px;width:4px;background:linear-gradient(#2d0052 1px,#2d0052 501px,#2b0056 503px,#24006d 507px,#17028d 511px,#0309a0 515px,#0436a1 519px,#1c7aa5 525px,#33a9ad 531px,#3fbcad 535px,#39c69c 543px,#32c687 549px,#2ac050 559px,#31bb32 565px,#5cba17 575px,#98c80a 585px,#bbd405 597px,#dce005 613px,#d9d804 621px,#cbc902 625px,#989600 633px,#7e8300 639px,#6b7a00 655px,#517100 675px,#1e6c03 693px,#096f0d 701px,#007628 709px,#007e55 717px,#007866 721px,#005674 727px,#001a8f 735px,#010095 739px,#14008c 743px,#1d0081 745px,#280061 749px,#2d0052 753px,#2d0052 761px)"></i><i style="left:1316px;width:4px;background:linear-gradient(#2d0052 1px,#2d0052 503px,#28005f 507px,#210178 511px,#110293 515px,#08049c 517px,#030ea1 519px,#0a47a2 525px,#2992a9 533px,#3fb7af 539px,#43c6a7 545px,#3cc995 551px,#30c14f 563px,#37bb30 569px,#5dba16 577px,#95c609 585px,#afcf05 593px,#dae006 615px,#d9da05 621px,#cdcc03 625px,#909100 635px,#7a8100 641px,#537200 675px,#1e6c02 693px,#096f0d 701px,#007628 709px,#007e55 717px,#007866 721px,#005575 727px,#00188f 735px,#020095 739px,#14008b 743px,#1d0080 745px,#280061 749px,#2d0052 753px,#2d0052 761px)"></i><i style="left:1320px;width:4px;background:linear-gradient(#2d0052 1px,#2d0052 507px,#16028f 519px,#09069b 523px,#0419a0 527px,#0b4ba1 533px,#2b96a9 541px,#3ab1ad 545px,#3fc0a9 549px,#38c796 555px,#2ebf4a 567px,#33bb32 571px,#52b818 577px,#84c10b 583px,#9cc806 587px,#c5d806 605px,#dade07 619px,#d5d706 623px,#b8b901 629px,#888d00 637px,#788100 643px,#537200 675px,#1e6c02 693px,#096f0d 701px,#007628 709px,#007e55 717px,#007866 721px,#005575 727px,#00188f 735px,#020095 739px,#14008b 743px,#1d0080 745px,#280061 749px,#2d0052 753px,#2d0052 761px)"></i><i style="left:1324px;width:4px;background:linear-gradient(#2d0052 1px,#2d0052 509px,#1f017b 521px,#120190 527px,#080399 531px,#02139e 535px,#0d5c9e 543px,#1c93a0 549px,#24ada1 553px,#25c08f 559px,#24bb3d 571px,#30b723 575px,#52b710 579px,#8ec406 585px,#a0ca04 589px,#cbda06 611px,#d4db07 621px,#c4c903 627px,#8b9200 637px,#778100 645px,#537200 675px,#1e6c02 693px,#096f0d 701px,#007628 709px,#007e55 717px,#007866 721px,#005575 727px,#001890 735px,#020095 739px,#14008b 743px,#1d0080 745px,#280061 749px,#2d0052 753px,#2d0052 761px)"></i><i style="left:1328px;width:4px;background:linear-gradient(#2d0052 1px,#2d0052 501px,#2b0059 507px,#1f007b 521px,#12008d 529px,#02009a 535px,#00179a 539px,#026890 549px,#069890 555px,#0ab180 561px,#0db66a 565px,#0fb637 573px,#15b426 575px,#23b215 577px,#3eb208 579px,#77bc03 583px,#8bc302 585px,#9ec901 589px,#c7d806 611px,#cfda06 621px,#c2cb03 627px,#8e9700 637px,#788400 645px,#4f7100 677px,#1e6c02 693px,#096f0d 701px,#007628 709px,#007e55 717px,#007866 721px,#005575 727px,#001890 735px,#020095 739px,#14008b 743px,#1d0080 745px,#280061 749px,#2d0052 753px,#2d0052 761px)"></i><i style="left:1332px;width:4px;background:linear-gradient(#2d0052 1px,#2d0052 493px,#23006e 505px,#160088 513px,#070393 523px,#001694 531px,#003b8c 539px,#007e80 551px,#009879 557px,#00a76a 563px,#00af34 573px,#06af23 575px,#15ae0e 577px,#39af01 579px,#5db500 581px,#7bbd00 583px,#8ec300 585px,#9ec900 589px,#c6d805 613px,#c9d605 623px,#b8c402 629px,#899500 639px,#778400 647px,#4f7100 677px,#1e6c02 693px,#096f0d 701px,#007628 709px,#007e55 717px,#007866 721px,#005575 727px,#001890 735px,#020095 739px,#14008b 743px,#1d0080 745px,#280061 749px,#2d0052 753px,#2d0052 761px)"></i><i style="left:1336px;width:4px;background:linear-gradient(#2d0052 1px,#2d0052 487px,#1f007a 499px,#0d008f 507px,#040692 511px,#003785 525px,#007170 543px,#008865 553px,#00934b 563px,#01a12e 571px,#0ea714 575px,#26aa07 577px,#48af00 579px,#82bf00 583px,#91c400 585px,#a6cb00 593px,#c6d805 617px,#c3d204 625px,#b0bd02 631px,#8c9900 639px,#788700 647px,#4f7100 677px,#1f6c02 693px,#077111 703px,#007628 709px,#007e55 717px,#007866 721px,#005575 727px,#001890 735px,#020095 739px,#14008b 743px,#1d0080 745px,#280061 749px,#2d0052 753px,#2d0052 761px)"></i><i style="left:1340px;width:4px;background:linear-gradient(#2d0052 1px,#2d0052 481px,#2b0058 485px,#170087 495px,#050193 501px,#000e92 505px,#004080 515px,#006d6b 531px,#007d61 541px,#00814a 553px,#008427 565px,#0a9213 571px,#15990b 573px,#41a700 577px,#74b800 581px,#88c000 583px,#99c700 587px,#bbd404 609px,#c3d504 623px,#b7c802 629px,#879700 641px,#738500 651px,#507100 677px,#206c02 693px,#077011 703px,#007628 709px,#007e55 717px,#007866 721px,#005575 727px,#001890 735px,#020095 739px,#14008b 743px,#1d0080 745px,#280061 749px,#2d0052 753px,#2d0052 761px)"></i><i style="left:1344px;width:4px;background:linear-gradient(#2d0052 1px,#2d0052 477px,#23006f 485px,#12008c 491px,#040393 495px,#001591 499px,#005179 511px,#007669 525px,#008054 539px,#02781d 561px,#0b800e 567px,#1f8d06 571px,#42a000 575px,#81bc00 581px,#95c500 585px,#b4d103 605px,#c0d403 623px,#b7c902 629px,#849500 643px,#6d8100 657px,#4d7000 679px,#1b6c04 695px,#077011 703px,#007628 709px,#007e55 717px,#007866 721px,#005575 727px,#001890 735px,#020095 739px,#14008b 743px,#1d0080 745px,#280061 749px,#2d0052 753px,#2d0052 761px)"></i><i style="left:1348px;width:4px;background:linear-gradient(#2d0052 1px,#2d0052 475px,#220070 481px,#170089 485px,#060094 489px,#010696 491px,#003788 499px,#006973 511px,#008069 521px,#008550 535px,#017a20 553px,#0c7d0d 563px,#248c04 569px,#409d00 573px,#79b800 579px,#91c300 583px,#b1d003 603px,#bed403 623px,#b6ca02 629px,#869800 643px,#708500 655px,#4e7100 679px,#1b6c04 695px,#077011 703px,#007628 709px,#007e55 717px,#007866 721px,#005575 727px,#001890 735px,#020095 739px,#14008b 743px,#1d0080 745px,#280061 749px,#2d0052 753px,#2d0052 761px)"></i><i style="left:1352px;width:4px;background:linear-gradient(#2d0052 1px,#2d0052 471px,#29005e 475px,#210075 479px,#12008e 483px,#01049a 487px,#003e8f 495px,#006c7e 505px,#008777 513px,#009461 527px,#008727 545px,#0a8410 557px,#188c08 563px,#339a01 569px,#6eb500 577px,#8ac100 581px,#9dc801 589px,#b8d204 613px,#b9cf03 627px,#a4b901 635px,#839700 645px,#677f00 663px,#4e7100 679px,#1b6c04 695px,#077011 703px,#007628 709px,#007e55 717px,#007866 721px,#005575 727px,#001890 735px,#020095 739px,#14008b 743px,#1d0080 745px,#280061 749px,#2d0052 753px,#2d0052 761px)"></i><i style="left:1356px;width:4px;background:linear-gradient(#2d0052 1px,#2d0052 471px,#200076 477px,#1a0086 479px,#00049e 485px,#004596 493px,#00718c 501px,#009386 509px,#00a179 517px,#01a665 527px,#029a25 543px,#0e950e 555px,#2da004 565px,#58b000 573px,#8cc201 581px,#9fc902 591px,#b6d204 615px,#b5cd03 629px,#99af01 639px,#7d9300 649px,#4e7100 679px,#1b6c04 695px,#077011 703px,#007628 709px,#007e55 717px,#007866 721px,#005575 727px,#001790 735px,#020095 739px,#14008b 743px,#280061 749px,#2d0052 753px,#2d0052 761px)"></i><i style="left:1360px;width:4px;background:linear-gradient(#2d0052 1px,#2d0052 471px,#16008c 479px,#04009d 483px,#000ba0 485px,#045a9a 495px,#109e9a 507px,#17b093 513px,#18ba7e 527px,#14b557 535px,#11ad2f 543px,#17a713 555px,#36ac06 565px,#6ab806 575px,#8cc306 581px,#9ec904 591px,#b2d004 615px,#b3ce03 629px,#a3bb01 637px,#7f9600 649px,#537200 677px,#216c01 693px,#077011 703px,#007628 709px,#007e55 717px,#007866 721px,#005575 727px,#001690 735px,#030094 739px,#15008b 743px,#2d0052 751px,#2d0052 761px)"></i><i style="left:1364px;width:4px;background:linear-gradient(#2d0052 1px,#2d0052 471px,#210076 477px,#1b0186 479px,#03039f 485px,#0440a0 493px,#279ea7 507px,#38b7aa 513px,#3cc59f 525px,#3ac892 531px,#30c054 543px,#2bb627 557px,#44b514 567px,#7fbf0e 579px,#95c60a 585px,#aecf04 613px,#b0cd03 631px,#a0ba01 639px,#7e9600 651px,#4e7100 679px,#1c6c03 695px,#077010 703px,#007628 709px,#007e55 717px,#007866 721px,#005575 727px,#001491 735px,#000594 737px,#0f008e 741px,#190089 743px,#250069 747px,#2d0052 751px,#2d0052 761px)"></i><i style="left:1368px;width:4px;background:linear-gradient(#2d0052 1px,#2d0052 471px,#29005d 475px,#1e017f 481px,#09029b 487px,#0312a1 491px,#0945a1 499px,#2387a7 509px,#3ab0ae 519px,#45c4aa 529px,#45cb97 537px,#44c86c 547px,#3dc046 557px,#3cbc31 563px,#5aba1c 573px,#8cc412 583px,#99c80b 589px,#aacd04 613px,#adcb03 633px,#9db901 641px,#7c9600 653px,#4f7100 679px,#1d6c03 695px,#077010 703px,#007628 709px,#007e55 717px,#007866 721px,#005575 727px,#001391 735px,#000395 737px,#1b0084 743px,#270064 747px,#2d0052 751px,#2d0052 761px)"></i><i style="left:1372px;width:4px;background:linear-gradient(#2d0052 1px,#2d0052 475px,#260067 481px,#17038e 489px,#0a069c 495px,#0419a2 501px,#0f55a3 515px,#1e79a6 521px,#2e9aab 529px,#41bead 537px,#45ca9f 543px,#47c556 561px,#45bf3c 567px,#5cbc27 575px,#8ec619 585px,#9ac910 591px,#a4cb05 609px,#aaca02 635px,#9ab701 643px,#7a9500 655px,#547400 677px,#396c00 687px,#176d05 697px,#077010 703px,#007627 709px,#007e55 717px,#007866 721px,#005575 727px,#001291 735px,#000395 737px,#13008c 741px,#1c0082 743px,#270062 747px,#2d0052 751px,#2d0052 761px)"></i><i style="left:1376px;width:4px;background:linear-gradient(#2d0052 1px,#2d0052 479px,#170490 501px,#0c079a 513px,#0420a1 523px,#0732a1 527px,#135fa3 533px,#30a0ab 541px,#41bead 547px,#45ca9d 553px,#47c867 563px,#47c145 571px,#64bf2e 579px,#8fc722 587px,#9bca18 593px,#a0ca06 609px,#aacb02 635px,#9cbc01 643px,#789400 657px,#527200 679px,#256b00 693px,#0a6f0a 701px,#007627 709px,#007e55 717px,#007866 721px,#005575 727px,#001291 735px,#000395 737px,#13008c 741px,#1c0081 743px,#280061 747px,#2d0052 751px,#2d0052 761px)"></i><i style="left:1380px;width:4px;background:linear-gradient(#2d0052 1px,#2d0052 485px,#25016c 505px,#230274 513px,#150492 525px,#09079c 529px,#0419a1 533px,#0a45a1 539px,#2589a7 547px,#41bdad 555px,#45caa0 559px,#42c767 569px,#46c24a 575px,#54c13e 579px,#89c62d 589px,#9aca21 595px,#9ec908 611px,#a8ca02 637px,#99b900 645px,#799600 657px,#557400 677px,#406d00 685px,#1e6c02 695px,#0a6f0a 701px,#007627 709px,#007e55 717px,#007866 721px,#005575 727px,#001291 735px,#000395 737px,#13008c 741px,#1c0081 743px,#280061 747px,#2d0052 751px,#2d0052 761px)"></i><i style="left:1384px;width:4px;background:linear-gradient(#2d0052 1px,#2d0052 501px,#2b0056 509px,#210178 525px,#110191 531px,#03049e 535px,#06459e 545px,#2498a5 555px,#35b6aa 559px,#3ac897 565px,#39c567 573px,#43c350 579px,#70c33a 589px,#93c92c 597px,#9dca1a 605px,#9dc907 619px,#a7ca02 639px,#96b600 647px,#769400 659px,#527300 679px,#256b00 693px,#0a6f0a 701px,#007627 709px,#007e55 717px,#007866 721px,#005575 727px,#001291 735px,#000395 737px,#13008c 741px,#1c0081 743px,#280061 747px,#2d0052 751px,#2d0052 761px)"></i><i style="left:1388px;width:4px;background:linear-gradient(#2d0052 1px,#2d0052 503px,#24006d 515px,#15008c 529px,#02019a 535px,#036095 551px,#11999b 559px,#1db19b 563px,#24c090 567px,#2fc36c 575px,#48c44e 587px,#84c635 599px,#97ca26 605px,#9bc90d 617px,#a6c902 641px,#93b300 649px,#779500 659px,#557500 677px,#406d00 685px,#1e6c02 695px,#0a6f0a 701px,#007627 709px,#007e55 717px,#007866 721px,#005575 727px,#001291 735px,#000395 737px,#13008c 741px,#1c0081 743px,#280062 747px,#2d0052 751px,#2d0052 761px)"></i><i style="left:1392px;width:4px;background:linear-gradient(#2d0052 1px,#2d0052 499px,#24006d 507px,#1a0084 513px,#070094 523px,#000b96 531px,#006887 551px,#04a38b 563px,#11ba81 569px,#25c066 579px,#38c357 589px,#54c242 597px,#88c52b 607px,#96c91c 613px,#9cc909 627px,#a5c802 643px,#90b000 651px,#739100 661px,#557500 677px,#406d00 685px,#1e6c02 695px,#0a6f0a 701px,#007627 709px,#007e55 717px,#007866 721px,#005575 727px,#001391 735px,#000395 737px,#12008c 741px,#1c0082 743px,#270062 747px,#2d0052 751px,#2d0052 761px)"></i><i style="left:1396px;width:4px;background:linear-gradient(#2d0052 1px,#2d0052 497px,#280060 501px,#1b0084 507px,#090093 513px,#010595 517px,#003089 529px,#006b76 549px,#009c7b 563px,#06b36d 573px,#1bbb5b 585px,#32c04d 597px,#49bf38 603px,#7ac125 611px,#8fc61a 617px,#a1ca06 637px,#a4c702 645px,#8cac00 653px,#6f8d00 663px,#557500 677px,#406d00 685px,#1e6c02 695px,#0a6f0a 701px,#007627 709px,#007e55 717px,#007866 721px,#005575 727px,#001490 735px,#000594 737px,#10008d 741px,#1a0087 743px,#260067 747px,#2d0052 751px,#2d0052 761px)"></i><i style="left:1400px;width:4px;background:linear-gradient(#2d0052 1px,#2d0052 497px,#200077 503px,#1a0087 505px,#020199 511px,#00338a 521px,#004e7b 529px,#006b6d 543px,#009a68 567px,#00a65d 575px,#08af4c 587px,#1aba46 599px,#2cba32 605px,#58bb20 611px,#79bf1b 617px,#8cc516 623px,#a5c803 645px,#98b900 651px,#708e00 663px,#557400 677px,#406d00 685px,#1e6c02 695px,#0a6f0a 701px,#007627 709px,#007e55 717px,#007865 721px,#005774 727px,#00198f 735px,#030094 739px,#16008a 743px,#2d0052 751px,#2d0052 761px)"></i><i style="left:1404px;width:4px;background:linear-gradient(#2d0052 1px,#2d0052 497px,#16008c 505px,#03009b 509px,#00179b 513px,#004988 521px,#005e78 527px,#007867 543px,#008958 565px,#01a837 595px,#09b130 601px,#1fb41f 607px,#58b918 615px,#72bd17 621px,#a2ca05 643px,#a1c301 649px,#708e00 663px,#557400 677px,#406d00 685px,#1e6c02 695px,#0a6f0a 701px,#007627 709px,#007e55 717px,#007964 721px,#005c71 727px,#001092 737px,#000195 739px,#13008c 743px,#1d0081 745px,#280061 749px,#2d0052 753px,#2d0052 761px)"></i><i style="left:1408px;width:4px;background:linear-gradient(#2d0052 1px,#2d0052 497px,#1f007a 503px,#17008a 505px,#03009d 509px,#001e9d 513px,#004f92 519px,#006c81 525px,#007c6d 535px,#007e58 551px,#008731 583px,#019726 595px,#0eac14 605px,#24b111 609px,#59b812 619px,#85c10c 635px,#a0c905 643px,#a4c802 647px,#95b700 653px,#718f00 663px,#577600 675px,#466f00 683px,#1e6c03 695px,#0a6f0a 701px,#007626 709px,#007d59 719px,#007668 723px,#005376 729px,#001291 737px,#000395 739px,#12008c 743px,#1c0082 745px,#270062 749px,#2d0052 753px,#2d0052 761px)"></i><i style="left:1412px;width:4px;background:linear-gradient(#2d0052 1px,#2d0052 497px,#1f0079 503px,#18008a 505px,#02009e 509px,#00379d 515px,#006a93 521px,#007e8b 525px,#008c7b 531px,#00835b 543px,#007a2d 575px,#03801d 591px,#099415 599px,#13a70e 605px,#43b30b 617px,#6bba0b 631px,#9dc804 643px,#a4c902 647px,#96b900 653px,#6b8900 665px,#537400 677px,#246b00 693px,#08700f 703px,#00772b 711px,#007e57 719px,#076 723px,#005575 729px,#001391 737px,#000495 739px,#1a0087 745px,#260066 749px,#2d0052 753px,#2d0052 761px)"></i><i style="left:1416px;width:4px;background:linear-gradient(#2d0052 1px,#2d0052 495px,#2c0055 497px,#23006d 501px,#14008d 505px,#0004a0 509px,#006399 519px,#008b93 525px,#009a89 529px,#009b74 535px,#007e43 551px,#007522 575px,#067814 591px,#0c8d0e 599px,#1da90a 607px,#4bb407 623px,#72ba04 635px,#9bc802 643px,#a4c901 647px,#96ba00 653px,#6b8a00 665px,#567500 675px,#366c00 687px,#186d05 697px,#086f0d 703px,#007629 711px,#007e56 719px,#007866 723px,#005575 729px,#001590 737px,#000794 739px,#040093 741px,#17008a 745px,#2d0052 753px,#2d0052 761px)"></i><i style="left:1420px;width:4px;background:linear-gradient(#2d0052 1px,#2d0052 495px,#270064 499px,#1b0085 503px,#05009b 507px,#000aa0 509px,#00699a 519px,#009d94 527px,#00a988 531px,#00a36b 539px,#00843f 549px,#00782a 559px,#067414 583px,#0a7b0e 593px,#13930b 601px,#24ab08 609px,#51b401 627px,#6eb900 635px,#9bc700 643px,#a3c901 647px,#96ba00 653px,#6b8b00 665px,#567500 675px,#366c00 687px,#186d05 697px,#067112 705px,#007628 711px,#007e55 719px,#007866 723px,#005575 729px,#001790 737px,#020094 741px,#15008b 745px,#2c0055 753px,#2d0052 761px)"></i><i style="left:1424px;width:4px;background:linear-gradient(#2d0052 1px,#2d0052 493px,#2b0056 495px,#1e007d 501px,#0c0095 505px,#02009e 507px,#005b9b 517px,#008898 523px,#00a790 529px,#00b084 533px,#00af6e 539px,#008c3a 549px,#007b25 557px,#077613 579px,#0c800c 593px,#26a907 609px,#4db300 625px,#71ba00 635px,#9dc800 643px,#a2c800 647px,#95ba00 653px,#668600 667px,#537300 677px,#246b00 693px,#096f0d 703px,#007628 711px,#007e55 719px,#007866 723px,#005575 729px,#001890 737px,#020095 741px,#14008b 745px,#1d0080 747px,#280061 751px,#2d0052 755px,#2d0052 761px)"></i><i style="left:1428px;width:4px;background:linear-gradient(#2d0052 1px,#2d0052 491px,#2c0056 493px,#24006a 497px,#18008a 501px,#05009b 505px,#0008a0 507px,#007b98 521px,#009e97 527px,#00b287 533px,#00b56d 539px,#009e3f 547px,#008624 555px,#057c18 565px,#0d850c 589px,#25a407 607px,#4cb200 623px,#6db800 633px,#9ac700 641px,#a1c900 645px,#94ba00 653px,#628100 669px,#496f00 681px,#1e6c02 695px,#096f0d 703px,#007628 711px,#007e55 719px,#007866 723px,#005575 729px,#001890 737px,#020095 741px,#14008b 745px,#1d0080 747px,#280061 751px,#2d0052 755px,#2d0052 761px)"></i><i style="left:1432px;width:4px;background:linear-gradient(#2d0052 1px,#2d0052 491px,#200076 497px,#1a0087 499px,#07009a 503px,#0006a0 505px,#00639a 517px,#009d97 527px,#00b287 533px,#00b977 537px,#00ad43 545px,#029926 553px,#068b19 563px,#0f920d 587px,#2aa405 607px,#58b400 625px,#73ba00 633px,#96c600 639px,#a0c900 643px,#97be00 651px,#628200 669px,#496f00 681px,#1e6c02 695px,#096f0d 703px,#007628 711px,#007e55 719px,#007866 723px,#005575 729px,#001890 737px,#020095 741px,#14008b 745px,#1d0080 747px,#280061 751px,#2d0052 755px,#2d0052 761px)"></i><i style="left:1436px;width:4px;background:linear-gradient(#2d0052 1px,#2d0052 489px,#210074 495px,#12008f 499px,#0004a0 503px,#00539c 513px,#008398 521px,#00a095 527px,#00b484 533px,#00b973 537px,#00b23e 545px,#03aa28 551px,#099b17 565px,#14a10d 587px,#34a802 609px,#69b700 629px,#9ac700 639px,#9fc800 643px,#90b700 653px,#5d7d00 671px,#496f00 681px,#1e6c02 695px,#096f0d 703px,#007628 711px,#007e55 719px,#007866 723px,#005575 729px,#001890 737px,#020095 741px,#14008b 745px,#1d0080 747px,#280061 751px,#2d0052 755px,#2d0052 761px)"></i><i style="left:1440px;width:4px;background:linear-gradient(#2d0052 1px,#2d0052 487px,#210073 493px,#13008f 497px,#01039f 501px,#00519c 511px,#008b98 521px,#00a692 527px,#00b979 535px,#01b546 543px,#03b22c 549px,#0baa19 563px,#15aa0d 585px,#3fad00 611px,#6fb900 629px,#97c600 637px,#9ec700 641px,#8db300 653px,#5a7900 673px,#426e00 683px,#1e6c02 695px,#096f0d 703px,#007628 711px,#007e55 719px,#007866 723px,#005575 729px,#00188f 737px,#020095 741px,#14008b 745px,#1d0080 747px,#280061 751px,#2d0052 755px,#2d0052 761px)"></i><i style="left:1444px;width:4px;background:linear-gradient(#2d0052 1px,#2d0052 485px,#220072 491px,#13008e 495px,#01029f 499px,#004e9d 509px,#008f98 521px,#00a990 527px,#05bb7a 535px,#09b742 545px,#0cb530 551px,#11b01a 571px,#18af0f 587px,#45b000 611px,#75bb00 629px,#9bc700 637px,#9ec500 641px,#82a600 657px,#5a7900 673px,#426e00 683px,#1e6c02 695px,#096f0d 703px,#007628 711px,#007e55 719px,#007866 723px,#005575 729px,#00188f 737px,#020095 741px,#14008b 745px,#1d0080 747px,#280061 751px,#2d0052 755px,#2d0052 761px)"></i><i style="left:1448px;width:4px;background:linear-gradient(#2d0052 1px,#2d0052 485px,#16008c 493px,#03009e 497px,#001ca0 501px,#00569c 509px,#009a98 523px,#09b48c 531px,#0ebd7c 537px,#11ba51 545px,#13b838 553px,#14b422 571px,#17b112 587px,#39b001 605px,#73ba00 627px,#9ec700 637px,#9fc400 641px,#729300 663px,#567600 675px,#306c00 689px,#0d6e09 701px,#00741f 709px,#007b3e 715px,#007c5e 721px,#006f6c 725px,#005674 729px,#001a8f 737px,#010095 741px,#13008c 745px,#1d0081 747px,#270062 751px,#2d0052 755px,#2d0052 761px)"></i><i style="left:1452px;width:4px;background:linear-gradient(#2d0052 1px,#2d0052 483px,#280061 487px,#13008e 493px,#0001a0 497px,#004f9c 507px,#008198 517px,#06a893 529px,#0eba85 537px,#11bd74 541px,#14bb57 547px,#14b838 559px,#14b112 587px,#35b003 603px,#78bc00 627px,#9fc700 637px,#a0c400 641px,#678600 667px,#537300 677px,#246b00 693px,#096f0d 703px,#007628 711px,#007e55 719px,#007865 723px,#005873 729px,#001e8e 737px,#000195 741px,#1c0084 747px,#270064 751px,#2d0052 755px,#2d0052 761px)"></i><i style="left:1456px;width:4px;background:linear-gradient(#2d0052 1px,#2d0052 483px,#280061 487px,#13008e 493px,#0003a0 497px,#00529c 507px,#007a98 515px,#009c93 527px,#05b284 537px,#0bba70 543px,#10b84e 553px,#0fb535 565px,#10ae11 587px,#45b100 609px,#7cbd00 627px,#a0c800 637px,#a1c500 641px,#5a7800 673px,#426e00 683px,#1e6c02 695px,#096f0d 703px,#007627 711px,#007e54 719px,#007965 723px,#004e79 731px,#001391 739px,#000594 741px,#0f008e 745px,#190089 747px,#250069 751px,#2d0052 755px,#2d0052 761px)"></i><i style="left:1460px;width:4px;background:linear-gradient(#2d0052 1px,#2d0052 483px,#280062 487px,#13008e 493px,#0003a0 497px,#00549c 507px,#007e97 515px,#00968e 525px,#00af73 541px,#06b048 555px,#07a923 577px,#13a80e 589px,#46ae00 609px,#80bf00 627px,#a0c800 637px,#a0c200 643px,#5a7800 673px,#426e00 683px,#196d04 697px,#077010 705px,#00772d 713px,#007f53 719px,#007964 723px,#005078 731px,#001690 739px,#030094 743px,#15008b 747px,#2d0052 755px,#2d0052 761px)"></i><i style="left:1464px;width:4px;background:linear-gradient(#2d0052 1px,#2d0052 483px,#270063 487px,#13008f 493px,#0003a0 497px,#00569b 507px,#007a96 513px,#008f8b 521px,#009770 533px,#00a05e 543px,#009f39 559px,#039a23 575px,#10990d 587px,#40a400 607px,#7bbc00 625px,#9dc800 635px,#a4c600 641px,#5a7800 673px,#426e00 683px,#1a6d04 697px,#08700f 705px,#007521 711px,#007c43 717px,#007d5a 721px,#007369 725px,#005276 731px,#001790 739px,#020095 743px,#14008b 747px,#280061 753px,#2d0052 757px,#2d0052 761px)"></i><i style="left:1468px;width:4px;background:linear-gradient(#2d0052 1px,#2d0052 483px,#210075 489px,#1a0087 491px,#06009a 495px,#0006a0 497px,#006797 509px,#00828f 515px,#008c7f 521px,#008a61 531px,#008c2f 557px,#0a8510 581px,#308c00 601px,#65ab00 619px,#94c400 631px,#a4c700 639px,#97b800 647px,#5e7b00 671px,#446e00 683px,#1c6c03 697px,#086f0d 705px,#007420 711px,#007b41 717px,#007e58 721px,#007667 725px,#005475 731px,#001890 739px,#020095 743px,#14008b 747px,#1d0080 749px,#280061 753px,#2d0052 757px,#2d0052 761px)"></i><i style="left:1472px;width:4px;background:linear-gradient(#2d0052 1px,#2d0052 481px,#2c0056 483px,#23006e 487px,#15008c 491px,#02009d 495px,#00409a 503px,#006c91 509px,#008386 515px,#008971 521px,#008047 535px,#007e30 547px,#077712 569px,#137608 583px,#317c00 601px,#559400 615px,#8fbf00 629px,#a2c600 637px,#9cbe00 643px,#5b7800 673px,#466f00 683px,#1e6c03 697px,#096f0d 705px,#007628 713px,#007e56 721px,#007866 725px,#005575 731px,#00188f 739px,#020095 743px,#14008b 747px,#1d0080 749px,#280061 753px,#2d0052 757px,#2d0052 761px)"></i><i style="left:1476px;width:4px;background:linear-gradient(#2d0052 1px,#2d0052 479px,#29005e 483px,#200077 487px,#190088 489px,#060098 493px,#00079c 495px,#00588e 505px,#006f85 509px,#008373 517px,#007a38 535px,#01761f 549px,#0d700a 569px,#347300 601px,#4d8200 613px,#8eb900 629px,#9dc100 635px,#9bbb00 641px,#769200 661px,#597600 675px,#486f00 683px,#1e6c02 697px,#096f0d 705px,#007628 713px,#007e56 721px,#007866 725px,#005575 731px,#00198f 739px,#010095 743px,#14008b 747px,#1d0080 749px,#280061 753px,#2d0052 757px,#2d0052 761px)"></i><i style="left:1480px;width:4px;background:linear-gradient(#2d0052 1px,#2d0052 475px,#24006c 483px,#190087 487px,#060095 491px,#000798 493px,#005e80 505px,#007d71 513px,#008153 523px,#007830 533px,#057214 549px,#146e06 565px,#3c7000 603px,#507c00 613px,#91b600 631px,#98b800 637px,#759000 661px,#597600 675px,#496f00 683px,#1e6c02 697px,#096f0d 705px,#007628 713px,#007e55 721px,#007866 725px,#005774 731px,#001c8e 739px,#000096 743px,#13008c 747px,#1d0081 749px,#280061 753px,#2d0052 757px,#2d0052 761px)"></i><i style="left:1484px;width:4px;background:linear-gradient(#2d0052 1px,#2d0052 469px,#220073 479px,#11008d 485px,#020594 489px,#004980 499px,#006e70 507px,#007e64 513px,#007d44 523px,#007624 533px,#0b6f0a 551px,#296c00 575px,#4a7200 607px,#608400 617px,#8cad00 631px,#90ad00 637px,#809900 653px,#647e00 669px,#496f00 683px,#1f6c02 697px,#077111 707px,#007628 713px,#007e55 721px,#007865 725px,#005a72 731px,#001191 741px,#000295 743px,#13008c 747px,#1c0081 749px,#280061 753px,#2d0052 757px,#2d0052 761px)"></i><i style="left:1488px;width:4px;background:linear-gradient(#2d0052 1px,#2d0052 461px,#29005e 467px,#200076 473px,#11008d 479px,#040393 483px,#000a93 485px,#004a7b 495px,#006c6d 503px,#007e5e 511px,#007a34 523px,#047417 535px,#117007 549px,#316c00 571px,#507300 605px,#648400 617px,#87a400 631px,#86a000 639px,#778f00 659px,#577400 677px,#386c00 689px,#1a6d04 699px,#077011 707px,#007628 713px,#007e55 721px,#007965 725px,#005077 733px,#001291 741px,#000395 743px,#13008c 747px,#1c0081 749px,#280061 753px,#2d0052 757px,#2d0052 761px)"></i><i style="left:1492px;width:4px;background:linear-gradient(#2d0052 1px,#2d0052 451px,#230070 465px,#15008a 471px,#070092 475px,#000d92 479px,#00497b 489px,#00696c 497px,#007c61 505px,#007f4b 513px,#007a2c 521px,#09770f 537px,#2d7000 559px,#416f00 575px,#5d7b00 609px,#829c00 631px,#768c00 659px,#557300 679px,#346c00 691px,#0f6e08 703px,#00741e 711px,#007f54 721px,#007469 727px,#005376 733px,#001291 741px,#000395 743px,#13008c 747px,#1c0081 749px,#280062 753px,#2d0052 757px,#2d0052 761px)"></i><i style="left:1496px;width:4px;background:linear-gradient(#2d0052 1px,#2d0052 443px,#260065 451px,#150089 463px,#090091 467px,#010c92 471px,#005575 485px,#007967 497px,#008353 507px,#008023 521px,#0e840b 537px,#357e00 555px,#4f7800 571px,#648100 605px,#809800 631px,#7a8d00 653px,#698000 667px,#4e7100 683px,#1b6c03 699px,#077011 707px,#007627 713px,#007f52 721px,#007667 727px,#005475 733px,#001391 741px,#000395 743px,#12008c 747px,#1c0082 749px,#270063 753px,#2d0052 757px,#2d0052 761px)"></i><i style="left:1500px;width:4px;background:linear-gradient(#2d0052 1px,#2d0052 435px,#260065 443px,#15008a 453px,#060392 459px,#000e92 463px,#00447e 473px,#006d6c 485px,#00845e 499px,#008b50 505px,#008e27 517px,#12950c 535px,#3c9500 551px,#628d00 567px,#698a00 585px,#829a00 625px,#798a00 651px,#6d8100 665px,#4f7100 683px,#1d6c03 699px,#077010 707px,#007830 715px,#007e58 723px,#076 727px,#005575 733px,#001590 741px,#000694 743px,#10008d 747px,#1a0087 749px,#260067 753px,#2d0052 757px,#2d0052 761px)"></i><i style="left:1504px;width:4px;background:linear-gradient(#2d0052 1px,#2d0052 429px,#220071 439px,#0f008f 447px,#040594 451px,#00288d 459px,#005878 469px,#00776c 481px,#00955b 501px,#039f24 517px,#14a50d 533px,#43a700 549px,#77a800 565px,#80a300 585px,#90ac00 613px,#869a00 629px,#7a8800 645px,#6f8200 663px,#4c7000 685px,#1e6c03 699px,#077010 707px,#00782f 715px,#007e57 723px,#076 727px,#005873 733px,#001b8e 741px,#020095 745px,#16008a 749px,#2d0052 757px,#2d0052 761px)"></i><i style="left:1508px;width:4px;background:linear-gradient(#2d0052 1px,#2d0052 427px,#200077 435px,#16008b 439px,#030399 445px,#003d8d 455px,#007879 469px,#00886d 481px,#009a66 495px,#00a656 503px,#02ac2b 515px,#16ad0f 533px,#41ae00 547px,#84b902 565px,#8fb902 575px,#9ebe00 611px,#95ae00 621px,#7e8d00 635px,#778300 649px,#6d7f00 665px,#4e7000 685px,#1f6c02 699px,#08700f 707px,#00772d 715px,#007e56 723px,#007865 727px,#005b72 733px,#001191 743px,#000195 745px,#13008c 749px,#1d0081 751px,#280061 755px,#2d0052 759px,#2d0052 761px)"></i><i style="left:1512px;width:4px;background:linear-gradient(#2d0052 1px,#2d0052 427px,#210075 433px,#15008d 437px,#00039e 443px,#003f96 451px,#008d86 467px,#009879 477px,#00a46f 491px,#00ae63 499px,#05b435 515px,#15b114 533px,#42b103 547px,#84bf08 565px,#93c308 575px,#a1c302 609px,#9ab500 617px,#7d8c00 631px,#767f00 645px,#6d7d00 665px,#4f7100 685px,#1a6d04 701px,#067112 709px,#007629 715px,#007e56 723px,#007865 727px,#004f78 735px,#001291 743px,#000395 745px,#13008c 749px,#1c0082 751px,#270062 755px,#2d0052 759px,#2d0052 761px)"></i><i style="left:1516px;width:4px;background:linear-gradient(#2d0052 1px,#2d0052 427px,#24006d 433px,#14018e 439px,#06019c 443px,#0108a0 445px,#08619b 457px,#0f9b98 467px,#0ca68e 473px,#02b278 491px,#01b667 499px,#08b63b 517px,#15b112 535px,#46b204 549px,#7abd0b 565px,#8ac20b 575px,#94ba02 607px,#8ca600 617px,#798600 629px,#757d00 645px,#6b7b00 667px,#527100 685px,#1d6c03 701px,#077010 709px,#007628 715px,#007e55 723px,#007865 727px,#004f78 735px,#001291 743px,#000395 745px,#1b0084 751px,#270064 755px,#2d0052 759px,#2d0052 761px)"></i><i style="left:1520px;width:4px;background:linear-gradient(#2d0052 1px,#2d0052 429px,#24006e 437px,#120292 445px,#07079d 449px,#030ea0 451px,#0640a0 457px,#1e91a3 467px,#23aca2 473px,#11b68c 485px,#07bb77 497px,#04b647 513px,#04b32a 525px,#10ae10 535px,#40b002 549px,#65b608 561px,#78b809 573px,#7ba200 607px,#7a8c00 619px,#757e00 631px,#767c00 651px,#667800 673px,#4e7100 687px,#1e6c02 701px,#077010 709px,#007627 715px,#007e55 723px,#007965 727px,#005078 735px,#001491 743px,#000594 745px,#0f008e 749px,#190089 751px,#250069 755px,#2d0052 759px,#2d0052 761px)"></i><i style="left:1524px;width:4px;background:linear-gradient(#2d0052 1px,#2d0052 433px,#28005f 439px,#1d0283 449px,#09079d 455px,#0410a1 457px,#0842a2 463px,#238ea6 471px,#2aaea7 477px,#1db998 485px,#0abc77 499px,#00b546 513px,#02b12b 523px,#12a90e 535px,#3faa00 551px,#5dab03 565px,#62a101 579px,#628c00 603px,#738000 619px,#7c7700 645px,#737b00 661px,#597300 683px,#3b6d00 693px,#196d04 703px,#08700f 709px,#007627 715px,#007e55 723px,#007965 727px,#005277 735px,#00188f 743px,#020095 747px,#15008b 751px,#2c0055 759px,#2d0052 761px)"></i><i style="left:1528px;width:4px;background:linear-gradient(#2d0052 1px,#2d0052 441px,#270063 449px,#160390 457px,#08089e 461px,#0411a1 463px,#0635a1 467px,#1c79a5 473px,#289ba8 477px,#2dafa9 481px,#20bb99 489px,#0fbe7d 499px,#00b549 511px,#06ac23 523px,#119f0d 533px,#3c9d00 551px,#509800 565px,#577e00 597px,#6b7d00 609px,#7a7c00 619px,#7f6500 641px,#7d7300 653px,#777c00 661px,#577300 685px,#216c01 701px,#08700f 709px,#007627 715px,#007f54 723px,#007469 729px,#005674 735px,#000f92 745px,#000196 747px,#13008c 751px,#1c0081 753px,#280062 757px,#2d0052 761px)"></i><i style="left:1532px;width:4px;background:linear-gradient(#2d0052 1px,#2d0052 449px,#260068 455px,#19038c 461px,#08049d 465px,#040fa1 467px,#0535a1 471px,#228ba6 479px,#2eafa9 485px,#27bc9d 491px,#13bf7d 501px,#00b543 511px,#05af24 519px,#14960b 531px,#2c8a01 543px,#478600 561px,#5a7800 589px,#717c00 603px,#7d7700 611px,#7e4d00 635px,#7e5000 643px,#7f6c00 655px,#797c00 663px,#547200 687px,#226c01 701px,#08700e 709px,#007626 715px,#007f52 723px,#007767 729px,#005a72 735px,#001291 745px,#000295 747px,#12008c 751px,#1c0082 753px,#270063 757px,#2d0052 761px)"></i><i style="left:1536px;width:4px;background:linear-gradient(#2d0052 1px,#2d0052 453px,#260067 459px,#18038d 465px,#07059e 469px,#0310a1 471px,#0535a1 475px,#228aa6 483px,#2da8aa 487px,#32b8a7 491px,#1ec289 501px,#00b433 513px,#0bac18 521px,#208d06 533px,#2f7c00 543px,#5b7600 579px,#7a7900 595px,#7e6e00 603px,#7e4c00 617px,#7e3b00 633px,#7e4000 641px,#7f5f00 655px,#7c7800 663px,#6f7900 671px,#567200 687px,#226c01 701px,#08700e 709px,#007626 715px,#007e58 725px,#00706b 731px,#005c71 735px,#001391 745px,#000495 747px,#1a0087 753px,#260067 757px,#2d0052 761px)"></i><i style="left:1540px;width:4px;background:linear-gradient(#2d0052 1px,#2d0052 457px,#260068 463px,#17028e 469px,#06059d 473px,#030fa1 475px,#0948a1 481px,#1e85a4 487px,#2dada8 493px,#2bbe9d 499px,#23c28d 503px,#19be6b 507px,#0ab634 513px,#0ab11e 517px,#19a70c 525px,#2d8a01 535px,#377500 545px,#4c7200 561px,#777900 581px,#7e6f00 589px,#7e3b00 613px,#7f2c00 631px,#7e3600 641px,#7f6400 659px,#7c7700 665px,#757b00 669px,#567200 687px,#236b01 701px,#08700e 709px,#007626 715px,#007e58 725px,#00706b 731px,#005c71 735px,#001590 745px,#000794 747px,#040093 749px,#17008a 753px,#280060 759px,#2a005a 761px)"></i><i style="left:1544px;width:4px;background:linear-gradient(#2d0052 1px,#2d0052 461px,#25006a 467px,#15018e 473px,#05039c 477px,#020b9f 479px,#043e9e 485px,#1684a0 493px,#21aaa2 499px,#22b999 503px,#1fbe90 505px,#1cc081 507px,#14bb50 511px,#10b62d 515px,#10af10 521px,#30a102 531px,#3e8200 541px,#447300 549px,#587400 559px,#787a00 571px,#7e7000 577px,#7f4900 593px,#802600 617px,#802100 633px,#7e3700 645px,#7f6200 661px,#7c7700 667px,#757b00 671px,#537200 689px,#1d6c03 703px,#096f0d 709px,#007626 715px,#007e58 725px,#00706b 731px,#005c71 735px,#001790 745px,#020094 749px,#15008b 753px,#270062 759px,#2a005b 761px)"></i><i style="left:1548px;width:4px;background:linear-gradient(#2d0052 1px,#2d0052 459px,#2b0057 463px,#200078 471px,#15008c 475px,#00019d 481px,#088596 499px,#0da199 503px,#10b58e 507px,#0fbb81 509px,#0cb84d 513px,#0db428 517px,#10b011 521px,#3ea600 533px,#4e9000 541px,#577f00 549px,#6b7e00 557px,#807f00 563px,#846500 573px,#824700 583px,#822300 607px,#821a00 629px,#802300 639px,#7f5d00 661px,#7b7900 669px,#737a00 673px,#557200 689px,#1e6c02 703px,#096f0d 709px,#007626 715px,#007e58 725px,#00706b 731px,#005c71 735px,#001790 745px,#020095 749px,#14008b 753px,#270062 759px,#2a005b 761px)"></i><i style="left:1552px;width:4px;background:linear-gradient(#2d0052 1px,#2d0052 451px,#23006e 463px,#0e0090 473px,#040596 477px,#001696 481px,#004f8c 491px,#00888d 501px,#00a88a 507px,#01b875 511px,#01b53d 515px,#0bb11c 519px,#18b00d 523px,#47ad00 533px,#709900 547px,#899600 555px,#969200 559px,#935900 573px,#8d3000 589px,#8b1e00 605px,#891700 627px,#802000 639px,#7f6800 665px,#7b7a00 671px,#567200 689px,#266b00 701px,#096f0d 709px,#007626 715px,#007e58 725px,#00706b 731px,#005c71 735px,#001790 745px,#020095 749px,#14008b 753px,#1d0080 755px,#270062 759px,#2a005b 761px)"></i><i style="left:1556px;width:4px;background:linear-gradient(#2d0052 1px,#2d0052 443px,#28005f 449px,#160088 461px,#060393 467px,#001b91 473px,#005c7b 487px,#00897d 499px,#00ac7a 507px,#00b272 509px,#00b437 515px,#0bb11a 519px,#1ab00c 523px,#44b100 531px,#91b400 547px,#b6b600 555px,#ba9600 561px,#b45e00 573px,#aa2c00 589px,#a21e00 603px,#9e1800 619px,#841a00 635px,#7e3300 647px,#7f6400 665px,#7b7900 671px,#727a00 675px,#567200 689px,#266b00 701px,#096f0d 709px,#007626 715px,#007e58 725px,#00706b 731px,#005c71 735px,#001790 745px,#020095 749px,#14008b 753px,#1d0080 755px,#270062 759px,#2a005b 761px)"></i><i style="left:1560px;width:4px;background:linear-gradient(#2d0052 1px,#2d0052 441px,#180087 453px,#050294 459px,#001193 463px,#003e85 471px,#006872 483px,#00976c 501px,#00a768 505px,#00af53 509px,#02b32c 515px,#11b010 521px,#48b202 531px,#78ba01 539px,#9fc500 545px,#bfcd00 551px,#cfd100 553px,#d8c100 557px,#da9c00 563px,#d33900 585px,#cc2800 593px,#c01a00 615px,#a91700 623px,#871900 633px,#7f2900 643px,#7f6300 665px,#7c7800 671px,#727a00 675px,#567200 689px,#266b00 701px,#096f0d 709px,#007626 715px,#007e58 725px,#00706b 731px,#005c71 735px,#001790 745px,#020095 749px,#14008b 753px,#1d0080 755px,#270062 759px,#2a005b 761px)"></i><i style="left:1564px;width:4px;background:linear-gradient(#2d0052 1px,#2d0052 439px,#220071 445px,#16008b 449px,#010499 455px,#004b87 467px,#007278 477px,#00876f 487px,#009b67 499px,#00a957 505px,#01b22d 513px,#11b219 519px,#57b70c 533px,#7dbe0b 539px,#a7cc08 545px,#c8d708 551px,#d8dd08 553px,#e6d00a 557px,#eda50a 565px,#ef4207 587px,#ea2e04 597px,#e11f01 613px,#cb1b01 619px,#931900 629px,#841c00 635px,#7e3a00 649px,#7f6300 665px,#7c7800 671px,#727a00 675px,#567200 689px,#266b00 701px,#096f0d 709px,#007626 715px,#007e58 725px,#00706b 731px,#005c71 735px,#001790 745px,#020095 749px,#14008b 753px,#270062 759px,#2a005b 761px)"></i><i style="left:1568px;width:4px;background:linear-gradient(#2d0052 1px,#2d0052 439px,#16008b 447px,#04009b 451px,#00089d 453px,#004e91 463px,#008685 475px,#009679 483px,#00aa69 499px,#08b53e 511px,#2ab722 523px,#61bb19 535px,#a4cc16 545px,#d0dd17 553px,#dde118 555px,#eecf1a 561px,#f4a618 569px,#fb4c10 591px,#f93409 603px,#f52a05 611px,#e02302 617px,#9b1b00 627px,#861d00 633px,#7e3800 647px,#7f6600 665px,#7b7900 671px,#5c7400 687px,#366c00 697px,#166d05 705px,#057114 711px,#007a39 719px,#007e58 725px,#00706b 731px,#005c71 735px,#001690 745px,#030094 749px,#15008b 753px,#280061 759px,#2a005b 761px)"></i><i style="left:1572px;width:4px;background:linear-gradient(#2d0052 1px,#2d0052 439px,#14008d 447px,#01009e 451px,#035799 463px,#0a9795 475px,#0da98a 483px,#10b97b 499px,#25bd47 517px,#3bbc31 527px,#64be26 537px,#97c923 545px,#bad522 551px,#e3e225 559px,#f0cf24 565px,#f6a820 573px,#fe5015 597px,#fa350a 611px,#ee2f06 615px,#c52502 621px,#9a1e00 627px,#852000 633px,#7e4100 649px,#7f6200 663px,#7a7b00 671px,#567200 689px,#266b00 701px,#096f0d 709px,#007626 715px,#007e58 725px,#007866 729px,#005b72 735px,#001391 745px,#000594 747px,#0f008e 751px,#190089 753px,#250069 757px,#2c0056 761px)"></i><i style="left:1576px;width:4px;background:linear-gradient(#2d0052 1px,#2d0052 439px,#19018b 447px,#03049f 453px,#033a9f 461px,#1782a1 471px,#29aba5 479px,#2bbb9e 489px,#2bc587 505px,#40c146 529px,#5bc037 537px,#86c631 545px,#b6d52d 553px,#e4e32b 563px,#f0cf29 569px,#f6ab24 577px,#ff5316 603px,#fb420f 611px,#f0390a 615px,#d73004 619px,#992400 627px,#852600 633px,#7e4400 649px,#7f6400 663px,#797c00 671px,#627500 683px,#4f7100 691px,#1e6c02 703px,#096f0d 709px,#007626 715px,#007f51 723px,#076 729px,#005873 735px,#001e8e 743px,#000195 747px,#1c0084 753px,#270064 757px,#2d0052 761px)"></i><i style="left:1580px;width:4px;background:linear-gradient(#2d0052 1px,#2d0052 439px,#24006d 445px,#17028d 451px,#07059d 457px,#0317a1 461px,#0842a1 467px,#258aa7 477px,#37acae 485px,#40beac 493px,#40cb98 509px,#46c75f 531px,#51c54e 537px,#80c73f 547px,#b8d635 557px,#e4e32e 567px,#f0d02b 573px,#f6ae25 581px,#fd5716 609px,#f1490e 615px,#d93d06 619px,#9a2c00 627px,#852d00 633px,#7e4400 647px,#7f6600 663px,#787c00 671px,#547200 689px,#1e6c03 703px,#096f0d 709px,#007626 715px,#007f53 723px,#007668 729px,#005575 735px,#001a8f 743px,#010095 747px,#13008c 751px,#1d0081 753px,#270062 757px,#2d0052 761px)"></i><i style="left:1584px;width:4px;background:linear-gradient(#2d0052 1px,#2d0052 441px,#210179 453px,#0c049a 463px,#0418a2 469px,#0c4ca2 477px,#258aa8 487px,#37abae 495px,#45c2ad 505px,#45cc98 519px,#47c865 537px,#54c651 543px,#7dc745 551px,#b9d739 561px,#e4e32e 571px,#f0d12a 577px,#f5b024 585px,#fd6b1a 609px,#f35d12 615px,#dd4e08 619px,#9d3800 627px,#8a3500 631px,#7f3c00 639px,#7f6300 661px,#7b7a00 669px,#517100 689px,#1d6c03 703px,#086f0e 709px,#007627 715px,#007e55 723px,#00736a 729px,#005276 735px,#001890 743px,#020095 747px,#14008b 751px,#1d0080 753px,#280061 757px,#2d0052 761px)"></i><i style="left:1588px;width:4px;background:linear-gradient(#2d0052 1px,#2d0052 447px,#24016d 459px,#130494 471px,#0a099c 475px,#0414a1 479px,#0a46a2 487px,#2282a7 497px,#3cb2ae 509px,#45c3ac 517px,#45cb99 529px,#48c762 545px,#59c54e 551px,#83c845 557px,#aed33d 563px,#dce32d 573px,#e9de2b 577px,#f4b924 587px,#fb7a1a 611px,#ed6910 617px,#d35806 621px,#a24400 627px,#8d3f00 631px,#814100 637px,#7f6300 659px,#797c00 669px,#567200 687px,#226c01 701px,#08700e 709px,#007627 715px,#007e55 723px,#007965 727px,#005078 735px,#001690 743px,#030094 747px,#15008b 751px,#2c0055 759px,#2d0052 761px)"></i><i style="left:1592px;width:4px;background:linear-gradient(#2d0052 1px,#2d0052 455px,#280061 465px,#1e0383 477px,#0b069b 485px,#041aa2 491px,#115aa3 503px,#258aa8 511px,#3cb3ae 523px,#45c5a9 531px,#45cb94 541px,#49c761 553px,#5bc54d 557px,#a0cf3e 565px,#c1d931 571px,#e4e32a 579px,#f0d226 585px,#f4b420 593px,#f98518 613px,#f07b12 617px,#d96a08 621px,#9b4c00 629px,#864800 635px,#7f5900 651px,#7f6900 659px,#797c00 667px,#557200 687px,#216c01 701px,#08700f 709px,#007627 715px,#007e55 723px,#007865 727px,#005972 733px,#001291 743px,#000495 745px,#190089 751px,#250069 755px,#2d0052 759px,#2d0052 761px)"></i><i style="left:1596px;width:4px;background:linear-gradient(#2d0052 1px,#2d0052 467px,#280061 477px,#1a038a 489px,#0a049b 495px,#0411a1 501px,#0b4ca2 511px,#1f7ea6 523px,#3cb3ae 535px,#45c5a9 543px,#45cb98 549px,#45c977 555px,#4bc75b 559px,#58c64f 561px,#92ca3c 567px,#b1d333 571px,#dce328 581px,#ecd926 587px,#f4b51e 597px,#f79317 613px,#ea830f 619px,#c16803 625px,#985500 631px,#855000 637px,#7f6000 653px,#7a7c00 665px,#537100 687px,#1f6c02 701px,#0a6f0b 707px,#007629 715px,#007e56 723px,#007866 727px,#005674 733px,#001c8e 741px,#000195 745px,#1c0083 751px,#270064 755px,#2d0052 759px,#2d0052 761px)"></i><i style="left:1600px;width:4px;background:linear-gradient(#2d0052 1px,#2d0052 479px,#25016b 487px,#1c0288 493px,#03029f 503px,#0228a1 511px,#0954a0 525px,#1279a1 533px,#23a4a6 541px,#35bfa4 549px,#3bc79c 553px,#3fc984 557px,#49c554 563px,#59c345 565px,#84c638 569px,#a6d030 573px,#c1d827 579px,#e4e225 587px,#efd223 593px,#f3b61d 601px,#f49b15 615px,#e48b0b 621px,#9f6100 631px,#885700 637px,#7f5e00 649px,#7b7b00 663px,#567200 685px,#236b00 699px,#096f0d 707px,#00772d 715px,#007e57 723px,#076 727px,#005475 733px,#001890 741px,#020095 745px,#14008b 749px,#1d0080 751px,#280061 755px,#2d0052 759px,#2d0052 761px)"></i><i style="left:1604px;width:4px;background:linear-gradient(#2d0052 1px,#2d0052 481px,#1f007b 489px,#15018d 493px,#03029e 501px,#012ea0 513px,#01569c 527px,#037b9a 535px,#0fa59c 545px,#20bc98 553px,#29c58b 557px,#3bc251 565px,#48c141 567px,#75c332 571px,#9ccc2c 575px,#b4d326 579px,#e3e224 591px,#efd322 597px,#f3b81b 605px,#f2a212 617px,#e09008 623px,#9c6600 633px,#875c00 639px,#7f6400 651px,#7b7b00 661px,#557200 685px,#226c01 699px,#08700e 707px,#007626 713px,#007f53 721px,#007568 727px,#005177 733px,#001491 741px,#000694 743px,#050093 745px,#17008a 749px,#2d0052 757px,#2d0052 761px)"></i><i style="left:1608px;width:4px;background:linear-gradient(#2d0052 1px,#2d0052 481px,#1a0088 489px,#02019f 497px,#013c9f 511px,#00679a 523px,#008998 531px,#00a394 541px,#0fb88c 553px,#18c085 557px,#31c04b 567px,#3ebe3b 569px,#6cc02d 573px,#93c928 577px,#aed124 581px,#e3e224 595px,#f0cb20 603px,#f3b316 613px,#eca30d 621px,#db9507 625px,#976900 635px,#846100 641px,#7f6a00 651px,#777c00 661px,#527100 685px,#216c02 699px,#08700f 707px,#007627 713px,#007e55 721px,#007964 725px,#005972 731px,#001c8e 739px,#000195 743px,#1b0086 749px,#260066 753px,#2d0052 757px,#2d0052 761px)"></i><i style="left:1612px;width:4px;background:linear-gradient(#2d0052 1px,#2d0052 481px,#1a0188 489px,#02029f 497px,#04479f 511px,#0a759d 521px,#0ea09d 529px,#0bb58e 547px,#13bf81 557px,#24bf52 567px,#38bd36 571px,#64be28 575px,#9bcb24 581px,#b7d420 587px,#d2de22 595px,#e3e223 599px,#f1c61d 609px,#eeae0f 621px,#e1a109 625px,#9a7000 635px,#846500 641px,#7f6c00 649px,#777b00 659px,#547200 683px,#1e6c02 699px,#077010 707px,#007628 713px,#007e56 721px,#007866 725px,#005674 731px,#00188f 739px,#010095 743px,#14008b 747px,#1c0081 749px,#270062 753px,#2d0052 757px,#2d0052 761px)"></i><i style="left:1616px;width:4px;background:linear-gradient(#2d0052 1px,#2d0052 481px,#200177 489px,#140290 495px,#05059e 501px,#031ca1 507px,#094ba1 517px,#239aa6 529px,#29b3a4 539px,#17c086 557px,#21be4b 569px,#36bb2f 573px,#60bd24 577px,#92c822 583px,#b5d31f 591px,#d1de22 599px,#e3e223 603px,#f0c71c 613px,#eeb812 621px,#e4ac0c 625px,#cc9704 629px,#9c7500 635px,#896a00 639px,#806b00 645px,#797c00 655px,#557200 681px,#1b6c04 699px,#096f0d 705px,#00772b 713px,#007e57 721px,#076 725px,#005376 731px,#001690 739px,#030094 743px,#15008b 747px,#2c0055 755px,#2d0052 761px)"></i><i style="left:1620px;width:4px;background:linear-gradient(#2d0052 1px,#2d0052 483px,#210178 495px,#120393 505px,#09089c 511px,#0415a2 517px,#0632a2 523px,#258ba8 537px,#2da7aa 543px,#27b9a0 551px,#19c080 561px,#1ebc42 571px,#36ba2a 575px,#5bbb21 579px,#90c720 587px,#b5d31e 595px,#d1de21 603px,#e3e222 607px,#efd01e 615px,#ebbd15 623px,#dcad0d 627px,#ad8401 633px,#917100 637px,#846c00 641px,#777c00 653px,#557200 679px,#1f6c02 697px,#08700f 705px,#00782f 713px,#007f52 719px,#007b62 723px,#006a6c 727px,#001f8d 737px,#000495 741px,#190089 747px,#250069 751px,#2d0052 755px,#2d0052 761px)"></i><i style="left:1624px;width:4px;background:linear-gradient(#2d0052 1px,#2d0052 489px,#18048d 517px,#0a089c 525px,#0413a2 529px,#0a48a2 537px,#2194a5 547px,#23b0a2 553px,#17be88 561px,#15bb54 569px,#1db938 573px,#26b82b 575px,#54ba1e 581px,#a5cd1d 595px,#d1de21 607px,#e2e222 611px,#edd320 619px,#e7c019 625px,#d1a90d 629px,#af8a01 633px,#927700 637px,#807500 643px,#767b00 651px,#567300 677px,#226c01 695px,#077010 705px,#007627 711px,#007e55 719px,#007964 723px,#00646c 727px,#00487b 731px,#001a8f 737px,#010095 741px,#1c0083 747px,#270064 751px,#2d0052 755px,#2d0052 761px)"></i><i style="left:1628px;width:4px;background:linear-gradient(#2d0052 1px,#2d0052 499px,#260168 517px,#220278 523px,#120393 529px,#0407a0 533px,#0438a1 541px,#148fa0 551px,#15a89e 555px,#0fba89 561px,#0ebd81 563px,#10b945 571px,#27b723 577px,#5bba1b 585px,#a5cd1b 599px,#dfe222 615px,#e9d521 623px,#dfc51b 627px,#c3a807 631px,#a18d00 635px,#8a8000 639px,#747b00 649px,#567300 675px,#1f6c02 695px,#077011 705px,#007628 711px,#007e55 719px,#007866 723px,#005575 729px,#001690 737px,#030094 741px,#15008b 745px,#2c0056 753px,#2d0052 761px)"></i><i style="left:1632px;width:4px;background:linear-gradient(#2d0052 1px,#2d0052 517px,#270064 523px,#19018b 529px,#0104a0 535px,#0136a0 543px,#07909b 553px,#07a995 557px,#06b686 561px,#07bb70 565px,#0eb737 573px,#1eb624 577px,#55b918 587px,#add01a 605px,#dee122 621px,#dfda21 625px,#d2c917 629px,#b3ac03 633px,#8a8c00 639px,#777e00 645px,#527200 675px,#1c6c03 695px,#096f0d 703px,#007628 711px,#007e56 719px,#076 723px,#005177 729px,#001391 737px,#000495 739px,#190089 745px,#250069 749px,#2d0052 753px,#2d0052 761px)"></i><i style="left:1636px;width:4px;background:linear-gradient(#2d0052 1px,#2d0052 519px,#210074 525px,#14008d 529px,#04009d 533px,#0013a0 537px,#004b9d 545px,#009198 553px,#00a990 557px,#01ba79 563px,#08b745 571px,#10b630 575px,#27b51c 581px,#5bb915 591px,#accf18 609px,#cfdc1f 623px,#ced81c 627px,#bfc70e 631px,#a3ac02 635px,#828b00 641px,#707c00 649px,#517100 673px,#1e6c02 693px,#07700f 703px,#00772b 711px,#007e58 719px,#007568 723px,#005c71 727px,#001c8e 735px,#000195 739px,#1c0083 745px,#270064 749px,#2d0052 753px,#2d0052 761px)"></i><i style="left:1640px;width:4px;background:linear-gradient(#2d0052 1px,#2d0052 515px,#29005e 519px,#14008d 527px,#04009c 531px,#0006a0 533px,#005c9b 545px,#009a98 553px,#00b387 559px,#00ba78 563px,#05b747 571px,#12b529 577px,#1db41b 581px,#4eb612 591px,#94c715 607px,#b2d117 615px,#c1d618 625px,#b9ca0f 631px,#9baa02 637px,#7e8c00 643px,#6b7c00 651px,#4f7100 671px,#1b6c04 693px,#096f0d 701px,#007626 709px,#007f53 717px,#007964 721px,#00636d 725px,#00268c 733px,#000993 737px,#030094 739px,#15008b 743px,#2c0056 751px,#2d0052 761px)"></i><i style="left:1644px;width:4px;background:linear-gradient(#2d0052 1px,#2d0052 515px,#210074 521px,#15008d 525px,#0004a0 531px,#009698 551px,#00b08b 557px,#00ba76 563px,#06b63d 573px,#18b31c 581px,#4cb610 593px,#8fc514 609px,#a9ce14 617px,#b7d212 627px,#b0c70a 633px,#809200 643px,#6c7f00 649px,#496f00 671px,#1d6c03 691px,#08700e 701px,#007628 709px,#007e56 717px,#007767 721px,#005078 727px,#00208d 733px,#000495 737px,#190089 743px,#250069 747px,#2d0052 751px,#2d0052 761px)"></i><i style="left:1648px;width:4px;background:linear-gradient(#2d0052 1px,#2d0052 515px,#1a0087 523px,#04009d 529px,#0007a0 531px,#028399 547px,#029d99 551px,#02b389 557px,#03ba76 563px,#08b634 575px,#1bb319 583px,#53b70f 597px,#94c713 615px,#aecf0f 627px,#adc90a 633px,#96ad02 639px,#778c00 645px,#657c00 651px,#336c00 679px,#116e07 695px,#03731a 705px,#007935 711px,#007f51 715px,#007b63 719px,#00666c 723px,#00497b 727px,#00198f 733px,#010095 737px,#13008c 741px,#1c0082 743px,#270064 747px,#2d0052 751px,#2d0052 761px)"></i><i style="left:1652px;width:4px;background:linear-gradient(#2d0052 1px,#2d0052 515px,#24006d 521px,#1a0187 525px,#03019e 531px,#011da0 535px,#09739d 545px,#0f9f9e 551px,#0eb68f 557px,#0bbd7b 563px,#09b637 575px,#17b31b 583px,#4bb50d 597px,#9eca0f 623px,#a9cb0b 631px,#a4c207 635px,#6b8400 647px,#597600 655px,#2b6c00 681px,#08700e 699px,#007523 707px,#007d46 713px,#007d5d 717px,#006f6b 721px,#005575 725px,#001590 733px,#000794 735px,#040094 737px,#17008a 741px,#280060 747px,#2c0055 749px,#2d0052 761px)"></i><i style="left:1656px;width:4px;background:linear-gradient(#2d0052 1px,#2d0052 517px,#260067 523px,#18028b 529px,#07029c 533px,#020aa1 535px,#074ca0 543px,#1696a1 551px,#1aae9e 555px,#14bb8b 561px,#10be79 565px,#0ab73c 575px,#15b31f 583px,#26b314 589px,#51b60d 601px,#94c60e 623px,#a2c90a 631px,#a0c107 635px,#83a001 641px,#658100 647px,#537400 655px,#276b00 681px,#096f0d 697px,#00741f 705px,#007b3e 711px,#007b61 717px,#00686c 721px,#001e8e 731px,#000195 735px,#1b0086 741px,#260066 745px,#2d0052 749px,#2d0052 761px)"></i><i style="left:1660px;width:4px;background:linear-gradient(#2d0052 1px,#2d0052 521px,#260068 527px,#17028d 533px,#05039e 537px,#021da1 541px,#0440a0 545px,#1382a0 551px,#1aa3a2 555px,#1ab59a 559px,#12be83 565px,#0ab741 575px,#10b426 581px,#21b315 589px,#4fb50c 603px,#9dc70a 631px,#9dc007 635px,#8cab02 639px,#688600 645px,#557600 651px,#366d00 669px,#186d05 687px,#067112 699px,#007521 705px,#007c43 711px,#007d5b 715px,#00716b 719px,#005774 723px,#001790 731px,#030094 735px,#16008a 739px,#2c0056 747px,#2d0052 755px,#2d0052 761px)"></i><i style="left:1664px;width:4px;background:linear-gradient(#2d0052 1px,#2d0052 525px,#280060 529px,#1b0186 535px,#03059f 541px,#0338a0 547px,#118d9f 555px,#15aa9d 559px,#10bb87 565px,#0ebd7d 567px,#08b743 575px,#0eb427 581px,#1db215 589px,#4db50b 605px,#98c50b 631px,#9abf08 635px,#89a902 639px,#648400 645px,#4f7400 651px,#326c00 669px,#116e07 689px,#047217 701px,#00772d 707px,#007f53 713px,#007866 717px,#005277 723px,#001291 731px,#000395 733px,#1a0087 739px,#260067 743px,#2d0052 747px,#2d0052 761px)"></i><i style="left:1668px;width:4px;background:linear-gradient(#2d0052 1px,#2d0052 527px,#250069 533px,#1b0086 537px,#01029f 543px,#01379e 549px,#068b9a 557px,#08a896 561px,#08b787 565px,#07bb70 569px,#06b743 575px,#0db428 581px,#1fb215 591px,#51b50a 609px,#94c20c 633px,#95bd0a 635px,#83a803 639px,#5e8300 645px,#4a7200 651px,#256c00 675px,#08700f 695px,#007420 703px,#007b3d 709px,#007c60 715px,#00696c 719px,#001c8e 729px,#000095 733px,#13008c 737px,#1c0082 739px,#270062 743px,#2d0052 747px,#2d0052 761px)"></i><i style="left:1672px;width:4px;background:linear-gradient(#2d0052 1px,#2d0052 525px,#23006f 533px,#190088 537px,#00049d 543px,#004799 551px,#008596 557px,#00a393 561px,#00b484 565px,#01b96e 569px,#04b643 575px,#0bb429 581px,#19b216 591px,#4bb409 609px,#88be0e 633px,#82b108 637px,#578200 645px,#457200 651px,#1c6d03 679px,#08700e 693px,#02731c 701px,#007936 707px,#007f52 711px,#007a64 715px,#00636d 719px,#00268c 727px,#000993 731px,#030094 733px,#15008b 737px,#2c0055 745px,#2d0052 761px)"></i><i style="left:1676px;width:4px;background:linear-gradient(#2d0052 1px,#2d0052 519px,#2b0058 523px,#220073 529px,#11008e 535px,#030397 539px,#001b97 543px,#005990 551px,#009192 557px,#00a98d 561px,#00b97a 567px,#01b544 575px,#08b42b 581px,#1ab214 593px,#4bb409 611px,#79bc0e 631px,#79b60c 635px,#598c01 643px,#457500 649px,#306d00 663px,#0c6e09 687px,#00741f 701px,#007a3b 707px,#007c5f 713px,#006b6c 717px,#004f78 721px,#001f8d 727px,#000395 731px,#190089 737px,#250069 741px,#2d0052 745px,#2d0052 761px)"></i><i style="left:1680px;width:4px;background:linear-gradient(#2d0052 1px,#2d0052 515px,#23006e 523px,#14008c 529px,#040196 533px,#001495 537px,#007084 551px,#009b8a 557px,#00ae85 561px,#00b975 567px,#00b53b 577px,#08b325 583px,#1cb212 595px,#4bb408 613px,#6dba0d 629px,#6eb30a 635px,#4b8200 645px,#3d7200 651px,#1f6c02 673px,#08700f 691px,#007521 701px,#007b41 707px,#007d5a 711px,#00726a 715px,#005873 719px,#00188f 727px,#020095 731px,#14008b 735px,#1c0081 737px,#270063 741px,#2d0052 745px,#2d0052 761px)"></i><i style="left:1684px;width:4px;background:linear-gradient(#2d0052 1px,#2d0052 513px,#23006d 519px,#190087 523px,#030299 529px,#001a97 533px,#005785 543px,#007881 549px,#00a483 557px,#00b976 565px,#00b431 579px,#0cb21d 587px,#19b112 595px,#4ab408 615px,#66b80b 629px,#66b109 635px,#427c00 647px,#336f00 655px,#146e06 679px,#067113 693px,#007523 701px,#007937 705px,#007f54 709px,#007866 713px,#005277 719px,#001391 727px,#000595 729px,#0f008e 733px,#190089 735px,#29005f 741px,#2d0052 743px,#2d0052 761px)"></i><i style="left:1688px;width:4px;background:linear-gradient(#2d0052 1px,#2d0052 513px,#200077 519px,#1a0088 521px,#00029e 527px,#004e92 537px,#008588 547px,#00a783 555px,#00b877 563px,#00b42f 579px,#0fb117 591px,#45b307 615px,#5fb70a 629px,#5eaf08 635px,#3d7d00 647px,#307000 655px,#0b6f0a 683px,#02731b 697px,#007830 703px,#007e57 709px,#007469 713px,#004b7a 719px,#001b8e 725px,#010095 729px,#13008c 733px,#1c0083 735px,#270064 739px,#2d0052 743px,#2d0052 761px)"></i><i style="left:1692px;width:4px;background:linear-gradient(#2d0052 1px,#2d0052 513px,#220072 519px,#13008e 523px,#00029f 527px,#005798 537px,#009692 547px,#00af84 555px,#00b971 563px,#00b433 577px,#0cb119 589px,#1eb10f 599px,#49b408 619px,#59b409 631px,#53a705 637px,#397d00 647px,#2c7000 655px,#09700d 685px,#01741e 697px,#007937 703px,#007f53 707px,#007865 711px,#005376 717px,#001590 725px,#000794 727px,#040094 729px,#16008a 733px,#280060 739px,#2c0055 741px,#2d0052 757px,#2d0052 761px)"></i><i style="left:1696px;width:4px;background:linear-gradient(#2d0052 1px,#2d0052 515px,#200076 521px,#1a0087 523px,#06009b 527px,#0009a0 529px,#007398 541px,#009a96 547px,#00af8b 553px,#00ba78 561px,#00b538 575px,#07b222 583px,#18b110 597px,#4bb408 623px,#52af07 633px,#429302 641px,#317900 649px,#226e01 661px,#08700e 685px,#007521 697px,#007b3e 703px,#007b61 709px,#00676c 713px,#001c8e 723px,#000195 727px,#1b0086 733px,#260066 737px,#2d0052 741px,#2d0052 761px)"></i><i style="left:1700px;width:4px;background:linear-gradient(#2d0052 1px,#2d0052 515px,#220072 521px,#13008f 525px,#0002a0 529px,#007199 541px,#009998 547px,#00af8c 553px,#00ba77 561px,#00b540 573px,#05b326 581px,#17b111 597px,#49b308 625px,#4bac06 633px,#2f7d00 647px,#237001 657px,#077010 685px,#01741d 695px,#007936 701px,#007f52 705px,#007865 709px,#005376 715px,#001690 723px,#030094 727px,#15008b 731px,#270062 737px,#2d0052 741px,#2d0052 761px)"></i><i style="left:1704px;width:4px;background:linear-gradient(#2d0052 1px,#2d0052 513px,#2c0056 515px,#1e007c 521px,#0d0094 525px,#04009d 527px,#000ba0 529px,#008498 543px,#009d97 547px,#00b18b 553px,#00ba75 561px,#00b53e 573px,#05b326 581px,#15b111 597px,#42b207 623px,#46ad06 631px,#2a7c01 647px,#1c7004 661px,#077010 683px,#007520 695px,#007a3b 701px,#007c60 707px,#007568 709px,#00497b 715px,#001b8f 721px,#000295 725px,#190088 731px,#29005e 737px,#2d0052 739px,#2d0052 761px)"></i><i style="left:1708px;width:4px;background:linear-gradient(#2d0052 1px,#2d0052 513px,#200078 519px,#190089 521px,#05009b 525px,#0008a0 527px,#007e98 541px,#00a294 547px,#00b288 553px,#00b971 561px,#00b53b 573px,#05b326 581px,#17b111 599px,#3eb108 623px,#3ea905 631px,#287f02 645px,#1a7205 659px,#077110 681px,#00741e 693px,#007936 699px,#007d5b 705px,#007965 707px,#005f6f 711px,#001f8e 719px,#000594 723px,#0d008f 727px,#16008a 729px,#270062 735px,#2d0052 739px,#2d0052 761px)"></i><i style="left:1712px;width:4px;background:linear-gradient(#2d0052 1px,#2d0052 513px,#16008c 521px,#02009e 525px,#00339f 531px,#007699 539px,#009d97 545px,#00b18a 551px,#00ba76 559px,#00b539 573px,#05b325 581px,#16b111 599px,#3ab109 623px,#37a505 631px,#237e03 645px,#157207 661px,#067114 683px,#007522 693px,#007b3e 699px,#007b62 705px,#00726a 707px,#005376 711px,#00228d 717px,#020095 723px,#1b0085 729px,#260066 733px,#2d0052 737px,#2d0052 761px)"></i><i style="left:1716px;width:4px;background:linear-gradient(#2d0052 1px,#2d0052 513px,#1f0079 519px,#18008a 521px,#04009c 525px,#000aa0 527px,#007498 539px,#009d97 545px,#00b18a 551px,#00ba76 559px,#00b538 573px,#06b325 581px,#15b111 599px,#35b10a 621px,#32a507 629px,#208105 643px,#117308 661px,#02731a 687px,#007629 693px,#007d4a 699px,#007c60 703px,#007469 705px,#005475 709px,#00238c 715px,#010195 721px,#170089 727px,#280061 733px,#2c0056 735px,#2d0052 743px,#2d0052 761px)"></i><i style="left:1720px;width:4px;background:linear-gradient(#2d0052 1px,#2d0052 513px,#210075 519px,#1b0086 521px,#070098 525px,#00069e 527px,#007d96 541px,#009997 545px,#00b08b 551px,#00ba76 559px,#00b53f 571px,#04b328 579px,#17b110 601px,#31af0b 621px,#289b07 631px,#1b8006 643px,#0b730a 663px,#00741e 687px,#007832 693px,#007e56 699px,#007469 703px,#005376 707px,#00218d 713px,#010195 719px,#16008a 725px,#2a005c 733px,#2d0052 735px,#2d0052 761px)"></i><i style="left:1724px;width:4px;background:linear-gradient(#2d0052 1px,#2d0052 509px,#250069 515px,#13008d 521px,#02039a 525px,#007d92 541px,#00a191 547px,#00b385 553px,#00ba74 559px,#00b53d 571px,#04b328 579px,#18b110 603px,#2bae0c 619px,#1f9108 633px,#147b08 647px,#067213 673px,#00741f 685px,#007934 691px,#007e58 697px,#00726a 701px,#005078 705px,#001d8e 711px,#020095 717px,#16008a 723px,#2d0052 733px,#2d0052 761px)"></i><i style="left:1728px;width:4px;background:linear-gradient(#2d0052 1px,#2d0052 505px,#250068 511px,#15008b 517px,#040196 521px,#000a97 523px,#006087 535px,#00998b 545px,#00af86 551px,#00b971 559px,#00b53a 571px,#04b327 579px,#16b00f 603px,#26ac0d 617px,#158409 639px,#08740f 661px,#01741d 681px,#00772d 687px,#007d5a 695px,#007964 697px,#005c70 701px,#00268b 707px,#010395 713px,#190086 721px,#2a005c 729px,#2d0052 731px,#2d0052 761px)"></i><i style="left:1732px;width:4px;background:linear-gradient(#2d0052 1px,#2d0052 501px,#250068 507px,#15008b 513px,#040294 517px,#001991 521px,#006079 533px,#00a980 549px,#00b976 557px,#00b539 571px,#05b327 579px,#14b00e 603px,#21a90d 615px,#14880b 633px,#067313 663px,#007520 679px,#007831 685px,#007d5c 693px,#007866 695px,#005773 699px,#001e8e 705px,#000594 709px,#0a0091 713px,#180089 717px,#29005f 725px,#2d0052 729px,#2d0052 761px)"></i><i style="left:1736px;width:4px;background:linear-gradient(#2d0052 1px,#2d0052 497px,#250067 503px,#15008b 509px,#040194 513px,#001a90 517px,#004b7d 525px,#006a71 533px,#00af7a 551px,#00b876 555px,#00b432 573px,#0bb11a 589px,#1aad0c 607px,#1b9d0c 617px,#11880b 629px,#047317 665px,#007522 675px,#007a3a 683px,#007d59 689px,#006f69 693px,#004f78 697px,#001590 703px,#020194 707px,#16008a 713px,#2b0057 723px,#2d0052 727px,#2d0052 761px)"></i><i style="left:1740px;width:4px;background:linear-gradient(#2d0052 1px,#2d0052 495px,#220070 501px,#16008a 505px,#040095 509px,#000896 511px,#004185 519px,#006676 527px,#009172 541px,#00b675 553px,#02b42c 575px,#14af0f 599px,#1ca50c 609px,#10880c 623px,#037319 665px,#007628 673px,#007d4b 681px,#007765 687px,#005d71 691px,#001690 699px,#000993 701px,#080092 705px,#1b0083 711px,#270063 717px,#2d0052 723px,#2d0052 761px)"></i><i style="left:1744px;width:4px;background:linear-gradient(#2d0052 1px,#2d0052 491px,#280060 495px,#1a0085 501px,#010499 507px,#005887 519px,#00837d 529px,#00a377 543px,#00b676 551px,#02b32c 575px,#16af0e 599px,#1ba30b 607px,#0e850c 619px,#02741b 663px,#007627 669px,#007b41 675px,#007d59 679px,#007069 683px,#005475 687px,#001e8e 693px,#000d92 695px,#070092 699px,#1c0082 707px,#29005d 715px,#2d0052 719px,#2d0052 761px)"></i><i style="left:1748px;width:4px;background:linear-gradient(#2d0052 1px,#2d0052 489px,#23006e 495px,#17008a 499px,#05009a 503px,#00079d 505px,#005493 515px,#00818b 523px,#009786 529px,#00b873 551px,#04b42d 575px,#15af0e 597px,#1aa20c 605px,#0d840c 615px,#097e10 627px,#01741e 661px,#00772b 667px,#007b3e 671px,#007d59 675px,#007963 677px,#005c71 681px,#00228c 687px,#020793 691px,#060093 693px,#190085 699px,#260067 707px,#2d0052 715px,#2d0052 761px)"></i><i style="left:1752px;width:4px;background:linear-gradient(#2d0052 1px,#2d0052 489px,#17008b 497px,#04009b 501px,#00089f 503px,#005699 513px,#009993 525px,#00ab88 533px,#03ba73 551px,#06b63c 571px,#0cb325 581px,#18af10 597px,#1ba50d 603px,#0c830d 613px,#097b11 623px,#007520 657px,#007833 665px,#007e56 671px,#007a62 673px,#006e6a 675px,#00198f 683px,#010993 685px,#050193 687px,#190086 693px,#270064 701px,#2c0056 707px,#2d0052 717px,#2d0052 761px)"></i><i style="left:1756px;width:4px;background:linear-gradient(#2d0052 1px,#2d0052 489px,#15008d 497px,#02009e 501px,#012da0 507px,#06689c 515px,#0da19c 525px,#0bb390 533px,#0cbd78 553px,#0cb94a 569px,#0db631 577px,#1eaf13 599px,#11960d 607px,#0a7f0f 615px,#02751b 645px,#00772a 657px,#007b3d 663px,#007c5e 669px,#007369 671px,#00487b 675px,#001590 679px,#030593 681px,#12008c 685px,#24006b 693px,#2d0052 701px,#2d0052 761px)"></i><i style="left:1760px;width:4px;background:linear-gradient(#2d0052 1px,#2d0052 489px,#210076 495px,#1b0186 497px,#03049f 503px,#033da0 511px,#1fa3a4 525px,#24b3a1 529px,#1dbc93 539px,#18c081 555px,#14bb56 569px,#12b83a 577px,#22b21b 599px,#18a311 605px,#0c8d0f 611px,#087b11 619px,#007520 645px,#007a38 657px,#007d59 665px,#007963 667px,#006c6b 669px,#005773 671px,#001f8d 675px,#010694 677px,#0b0090 679px,#1c0082 683px,#270064 689px,#2d0052 695px,#2d0052 761px)"></i><i style="left:1764px;width:4px;background:linear-gradient(#2d0052 1px,#2d0052 489px,#29005d 493px,#18028b 501px,#09029b 505px,#0407a0 507px,#053ca1 515px,#2fa4ab 527px,#3bb8ad 531px,#37c1a4 539px,#27c48a 559px,#21bf66 569px,#1abc47 577px,#1aba3b 587px,#28b526 601px,#1ba517 607px,#0d8f11 613px,#087c12 621px,#007520 641px,#007a39 653px,#007c5d 663px,#076 665px,#005276 669px,#001e8e 673px,#000694 675px,#14008b 679px,#25006a 685px,#2d0052 691px,#2d0052 761px)"></i><i style="left:1768px;width:4px;background:linear-gradient(#2d0052 1px,#2d0052 493px,#260067 499px,#19028a 505px,#07059d 511px,#0415a1 515px,#083fa2 521px,#2c97aa 531px,#39afae 535px,#43bfae 541px,#3dca9a 561px,#36c781 569px,#28c055 579px,#21be4d 589px,#2fbc3e 601px,#28b330 607px,#0f9415 615px,#058018 623px,#007728 641px,#007c45 653px,#007c5f 661px,#007667 663px,#005276 667px,#00238c 671px,#000195 675px,#17008a 681px,#2b0057 693px,#2d0052 697px,#2d0052 761px)"></i><i style="left:1772px;width:4px;background:linear-gradient(#2d0052 1px,#2d0052 497px,#24016f 505px,#150390 513px,#0a049b 517px,#0415a1 523px,#0737a2 529px,#1e7ba6 537px,#2a93a9 541px,#41bdae 553px,#45cb9f 567px,#45cb8a 573px,#40c76d 579px,#35c463 585px,#2ac05a 597px,#37c25d 605px,#33bd53 609px,#1aa731 615px,#089725 619px,#00852a 629px,#007a34 643px,#007d59 657px,#076 661px,#005a72 665px,#002f87 669px,#000994 675px,#010195 677px,#1b0084 687px,#2c0056 697px,#2d0052 705px,#2d0052 761px)"></i><i style="left:1776px;width:4px;background:linear-gradient(#2d0052 1px,#2d0052 501px,#28005f 507px,#18038c 521px,#0a059b 529px,#0418a1 535px,#0f55a3 547px,#207da6 553px,#35a7ac 561px,#43c0ac 569px,#45ca9b 575px,#45c976 583px,#3fc773 591px,#35c46e 593px,#25bf66 595px,#1cbc64 597px,#1ebd68 599px,#36c57a 603px,#41c87e 607px,#3ac26e 613px,#12a94d 621px,#059842 629px,#00813a 639px,#007d47 647px,#007964 659px,#00736a 661px,#005873 665px,#00298a 671px,#000495 679px,#0b0090 685px,#1c0083 691px,#2b0057 699px,#2d0052 703px,#2d0052 761px)"></i><i style="left:1780px;width:4px;background:linear-gradient(#2d0052 1px,#2d0052 509px,#1e0280 529px,#0b039a 541px,#0412a1 549px,#0733a1 557px,#125ca3 565px,#34a5ab 575px,#43c2a8 581px,#45ca93 585px,#44c980 589px,#3fc77d 593px,#18bd79 597px,#16bc80 599px,#23bf8b 601px,#37c597 603px,#40c99b 605px,#42ca92 613px,#2cbe7d 621px,#0ea75e 631px,#01904a 637px,#008247 643px,#007767 659px,#005c71 665px,#00218d 675px,#000295 683px,#1a0086 693px,#29005e 701px,#2d0052 705px,#2d0052 761px)"></i><i style="left:1784px;width:4px;background:linear-gradient(#2d0052 1px,#2d0052 491px,#24006c 529px,#13018f 547px,#04069d 559px,#030f9f 563px,#0842a0 573px,#1563a3 579px,#2488a7 583px,#39afab 587px,#43c3a6 591px,#3ec5a1 595px,#2bb4a2 599px,#31b1a7 601px,#3ebaac 605px,#3ec2a5 611px,#18b87f 627px,#0ba969 633px,#009052 639px,#008250 645px,#007767 659px,#005774 667px,#00228d 677px,#020095 687px,#16008a 695px,#200078 699px,#2d0052 707px,#2d0052 761px)"></i><i style="left:1788px;width:4px;background:linear-gradient(#2d0052 1px,#2d0052 471px,#210074 501px,#1d007e 509px,#170088 541px,#040298 555px,#01069b 561px,#012c9c 573px,#053e9e 581px,#115da1 587px,#2691a6 593px,#2a9aa6 595px,#2696a5 597px,#1b84a1 601px,#1a84a0 603px,#1ca79b 613px,#09ac7f 625px,#02a267 633px,#008951 641px,#007d5b 653px,#007469 661px,#005674 669px,#00248c 679px,#010195 689px,#1a0087 699px,#270063 705px,#2d0052 709px,#2d0052 761px)"></i><i style="left:1792px;width:4px;background:linear-gradient(#2d0052 1px,#2d0052 463px,#270063 471px,#1e007d 483px,#12008c 493px,#050492 507px,#020b93 525px,#000d94 543px,#002590 553px,#003090 565px,#044b98 587px,#096896 595px,#046e90 603px,#019086 615px,#009b6f 625px,#009459 633px,#00844a 641px,#007c5e 657px,#00716b 665px,#005873 671px,#00268b 681px,#000295 691px,#1a0087 701px,#270063 707px,#2d0052 711px,#2d0052 761px)"></i><i style="left:1796px;width:4px;background:linear-gradient(#2d0052 1px,#2d0052 459px,#24006b 467px,#170089 475px,#050195 485px,#001593 497px,#00318a 515px,#003886 545px,#004382 557px,#005489 585px,#00747e 605px,#008a72 615px,#008b55 627px,#008142 637px,#007d44 645px,#007c60 661px,#00726a 667px,#005873 673px,#00278b 683px,#000295 693px,#1a0087 703px,#2b0056 711px,#2d0052 717px,#2d0052 761px)"></i><i style="left:1800px;width:4px;background:linear-gradient(#2d0052 1px,#2d0052 459px,#1a0087 469px,#02009a 479px,#001898 485px,#002f94 491px,#00458a 519px,#00537b 577px,#007374 601px,#008364 611px,#007f3d 625px,#007a34 637px,#007b3d 647px,#007d5c 661px,#007668 667px,#005774 675px,#001f8d 687px,#000195 695px,#15008b 703px,#1b0084 705px,#28005f 711px,#2c0055 713px,#2d0052 729px,#2d0052 761px)"></i><i style="left:1804px;width:4px;background:linear-gradient(#2d0052 1px,#2d0052 459px,#1a0087 469px,#04019c 479px,#010f9e 483px,#012d9b 489px,#023f96 501px,#014c92 523px,#005582 557px,#005975 577px,#006b6f 593px,#007d64 603px,#00804e 611px,#007930 619px,#007727 629px,#007831 645px,#007d59 661px,#007469 669px,#005575 677px,#00248c 687px,#010095 697px,#17008a 705px,#2d0052 715px,#2d0052 761px)"></i><i style="left:1808px;width:4px;background:linear-gradient(#2d0052 1px,#2d0052 459px,#24006b 467px,#17028d 477px,#07049c 485px,#02259f 499px,#043e9d 515px,#005b8f 553px,#006272 579px,#00726e 591px,#008061 599px,#007e3e 609px,#007926 617px,#01761d 627px,#007626 643px,#007b3d 653px,#007e56 661px,#007767 669px,#005a72 677px,#00288b 687px,#000295 697px,#1a0088 707px,#270062 713px,#2d0052 717px,#2d0052 761px)"></i><i style="left:1812px;width:4px;background:linear-gradient(#2d0052 1px,#2d0052 463px,#220175 479px,#140391 493px,#08099d 505px,#021fa0 521px,#02379f 529px,#006493 557px,#006c81 569px,#007275 583px,#008869 595px,#008c54 601px,#008636 607px,#018020 617px,#02761c 637px,#007628 647px,#007e58 663px,#007568 671px,#005475 679px,#00238c 689px,#010095 699px,#16008a 707px,#1c0083 709px,#2d0052 717px,#2d0052 761px)"></i><i style="left:1816px;width:4px;background:linear-gradient(#2d0052 1px,#2d0052 471px,#25016c 493px,#1f027f 503px,#190389 511px,#04059f 523px,#012ca0 533px,#007094 561px,#007a87 573px,#008b7b 587px,#009d67 597px,#009739 605px,#009326 611px,#04891d 627px,#01751d 641px,#00772b 649px,#007e56 663px,#007667 671px,#005674 679px,#00258c 689px,#000195 699px,#1a0088 709px,#2d0052 717px,#2d0052 761px)"></i><i style="left:1820px;width:4px;background:linear-gradient(#2d0052 1px,#2d0052 489px,#270063 507px,#210177 513px,#14018f 519px,#0003a0 525px,#002aa0 533px,#007996 563px,#009689 583px,#00ac71 595px,#00a732 607px,#03a327 613px,#059b22 625px,#02781c 639px,#007626 647px,#007d4b 659px,#007a63 669px,#00676c 675px,#00417f 683px,#001e8e 691px,#000295 699px,#190089 709px,#2d0052 717px,#2d0052 761px)"></i><i style="left:1824px;width:4px;background:linear-gradient(#2d0052 1px,#2d0052 503px,#220072 511px,#18008a 515px,#03009d 521px,#0013a0 525px,#0030a0 531px,#004e9d 543px,#018997 571px,#00a28f 583px,#00b478 593px,#02b23f 605px,#07b132 611px,#09ab2b 623px,#027d1e 637px,#007624 645px,#007c45 657px,#007d5a 665px,#007668 671px,#005475 679px,#002c89 687px,#000195 699px,#1a0088 709px,#2d0052 717px,#2d0052 761px)"></i><i style="left:1828px;width:4px;background:linear-gradient(#2d0052 1px,#2d0052 503px,#220073 509px,#16008c 513px,#01019f 519px,#00399f 529px,#014e9d 539px,#06829a 567px,#03a395 581px,#02b67f 591px,#0db84c 605px,#12b83d 615px,#0cb134 623px,#039327 631px,#007e22 637px,#007729 645px,#007c41 655px,#007d5c 665px,#007568 671px,#005b71 677px,#003087 685px,#010095 699px,#15008b 707px,#1c0083 709px,#2d0052 717px,#2d0052 761px)"></i><i style="left:1832px;width:4px;background:linear-gradient(#2d0052 1px,#2d0052 503px,#210074 509px,#15018d 513px,#0103a0 519px,#023d9f 529px,#044e9f 537px,#09749d 563px,#0c999d 577px,#0cb590 587px,#10bd75 597px,#18bc58 607px,#17ba48 619px,#0daf3c 625px,#00862a 635px,#007a2a 641px,#007a3c 651px,#007d5a 663px,#076 669px,#005674 677px,#002b89 685px,#000295 697px,#180089 707px,#270063 713px,#2d0052 717px,#2d0052 761px)"></i><i style="left:1836px;width:4px;background:linear-gradient(#2d0052 1px,#2d0052 503px,#280060 507px,#16018d 515px,#05039e 521px,#0214a1 525px,#0330a1 531px,#084fa0 545px,#0d719f 565px,#139ca0 579px,#18b994 589px,#1bc078 601px,#20bf5f 613px,#16b851 623px,#08a440 629px,#008432 637px,#007a37 645px,#007d59 661px,#007865 667px,#00626d 673px,#00258c 685px,#020095 697px,#1b0086 707px,#2d0052 715px,#2d0052 761px)"></i><i style="left:1840px;width:4px;background:linear-gradient(#2d0052 1px,#2d0052 505px,#24006d 513px,#18028c 521px,#09039b 527px,#031da1 537px,#127da0 573px,#20aca3 585px,#23bd97 593px,#23c27b 607px,#1ebe66 621px,#11b257 627px,#018f3f 635px,#007f3c 641px,#007f50 653px,#007964 665px,#006d6c 669px,#004e79 675px,#00258c 683px,#000395 693px,#1a0087 705px,#2a005b 713px,#2d0052 715px,#2d0052 761px)"></i><i style="left:1844px;width:4px;background:linear-gradient(#2d0052 1px,#2d0052 509px,#24016d 521px,#17038f 533px,#08089d 543px,#041aa1 551px,#0b54a1 567px,#1f97a4 583px,#2bb1a6 589px,#2bbf9b 597px,#25c37f 615px,#1abc6f 625px,#0aa85b 631px,#018e4b 637px,#008149 643px,#007964 663px,#006d6c 667px,#005674 671px,#003386 677px,#010195 691px,#15008b 701px,#1b0085 703px,#2d0052 713px,#2d0052 761px)"></i><i style="left:1848px;width:4px;background:linear-gradient(#2d0052 1px,#2d0052 517px,#270064 529px,#160490 549px,#0a049c 555px,#0416a1 561px,#0744a1 571px,#1e8aa4 585px,#30b2a9 593px,#30c0a0 601px,#20c184 623px,#13b676 629px,#019359 637px,#008454 643px,#007b62 659px,#007469 663px,#00606e 667px,#002d89 675px,#000395 687px,#190088 699px,#2b0057 709px,#2d0052 713px,#2d0052 761px)"></i><i style="left:1852px;width:4px;background:linear-gradient(#2d0052 1px,#2d0052 531px,#280061 543px,#230171 551px,#110394 561px,#030ca1 567px,#0745a1 579px,#2aa4a9 595px,#33b8a8 601px,#29c098 613px,#1bbc88 627px,#0aa974 633px,#018e60 639px,#007f5b 647px,#007667 659px,#00696c 663px,#005177 667px,#00288a 673px,#000395 683px,#15008b 693px,#2c0056 707px,#2d0052 715px,#2d0052 761px)"></i><i style="left:1856px;width:4px;background:linear-gradient(#2d0052 1px,#2d0052 547px,#270063 555px,#210178 561px,#100294 567px,#04059e 571px,#0541a0 585px,#2399a6 599px,#2cb0a8 605px,#27bd9c 617px,#1db991 627px,#0ba77d 633px,#018c67 639px,#007d61 647px,#00706b 657px,#005973 663px,#00278b 671px,#000594 679px,#0b0090 685px,#1b0084 691px,#2b0058 701px,#2d0052 707px,#2d0052 761px)"></i><i style="left:1860px;width:4px;background:linear-gradient(#2d0052 1px,#2d0052 553px,#24006c 563px,#14008d 569px,#01039e 575px,#04439e 591px,#1d97a4 605px,#24aca5 611px,#22b69e 621px,#17b092 629px,#028f73 637px,#007f67 643px,#006f6b 653px,#005873 659px,#00228c 669px,#010295 677px,#1a0085 687px,#29005f 695px,#2d0052 699px,#2d0052 761px)"></i><i style="left:1864px;width:4px;background:linear-gradient(#2d0052 1px,#2d0052 535px,#250068 557px,#1f007a 565px,#0d0092 571px,#00039b 575px,#00209a 583px,#02419c 595px,#09639d 601px,#11889f 607px,#19a4a1 615px,#19ab9b 625px,#0c9d8c 631px,#018576 637px,#00756b 645px,#00616e 653px,#00467d 659px,#001490 669px,#000395 673px,#1a0085 683px,#29005f 691px,#2d0052 695px,#2d0052 761px)"></i><i style="left:1868px;width:4px;background:linear-gradient(#2d0052 1px,#2d0052 525px,#1e007c 547px,#0b0091 565px,#010996 571px,#002193 577px,#004796 597px,#036198 603px,#0a879a 611px,#0d9b9a 621px,#0b9993 627px,#007a77 637px,#00666d 647px,#005873 653px,#001b8f 665px,#010195 671px,#180088 679px,#29005f 687px,#2d0052 691px,#2d0052 761px)"></i><i style="left:1872px;width:4px;background:linear-gradient(#2d0052 1px,#2d0052 519px,#15008a 539px,#060292 549px,#001192 559px,#003787 577px,#004f8c 597px,#006590 605px,#017f91 613px,#028c8d 623px,#018685 629px,#00686e 641px,#005674 651px,#00288b 661px,#000295 669px,#1a0087 677px,#2b0057 685px,#2d0052 689px,#2d0052 761px)"></i><i style="left:1876px;width:4px;background:linear-gradient(#2d0052 1px,#2d0052 515px,#220071 523px,#15008a 529px,#020593 539px,#00238c 551px,#003c82 569px,#00527f 595px,#006585 605px,#007f84 617px,#00807c 627px,#00646d 643px,#005376 651px,#000794 667px,#020095 669px,#17008a 675px,#270063 681px,#2d0052 685px,#2d0052 761px)"></i><i style="left:1880px;width:4px;background:linear-gradient(#2d0052 1px,#2d0052 511px,#220072 519px,#170088 523px,#040194 529px,#002f87 545px,#00437f 567px,#005777 595px,#007c77 619px,#00766b 635px,#005d70 649px,#003b82 657px,#000694 667px,#030094 669px,#190089 675px,#270063 681px,#2d0052 685px,#2d0052 761px)"></i><i style="left:1884px;width:4px;background:linear-gradient(#2d0052 1px,#2d0052 501px,#2b0059 507px,#200076 515px,#16008a 519px,#020394 525px,#002a8a 535px,#003e81 549px,#006073 597px,#007b6d 619px,#007767 637px,#006d6c 645px,#005c71 651px,#00298a 661px,#010195 669px,#1a0086 677px,#270064 683px,#2d0052 689px,#2d0052 761px)"></i><i style="left:1888px;width:4px;background:linear-gradient(#2d0052 1px,#2d0052 491px,#23006e 505px,#0f008e 515px,#000794 521px,#003387 533px,#004581 551px,#006a75 599px,#007e6f 615px,#007b65 635px,#006f6c 647px,#005b72 653px,#001a8f 665px,#010095 671px,#190088 679px,#2d0052 689px,#2d0052 761px)"></i><i style="left:1892px;width:4px;background:linear-gradient(#2d0052 1px,#2d0052 483px,#260065 491px,#160088 503px,#070092 509px,#001790 517px,#003487 529px,#004d85 553px,#00767e 597px,#008879 611px,#00876c 625px,#007a65 641px,#006f6c 649px,#005773 655px,#001f8d 665px,#020095 673px,#180089 681px,#2d0052 691px,#2d0052 761px)"></i><i style="left:1896px;width:4px;background:linear-gradient(#2d0052 1px,#2d0052 477px,#220071 487px,#11008d 495px,#040493 501px,#002d8a 515px,#004688 537px,#007f8a 593px,#009287 605px,#00987b 619px,#008668 633px,#007866 645px,#006c6c 651px,#005b71 655px,#00248c 665px,#000495 673px,#190088 683px,#270062 689px,#2d0052 693px,#2d0052 761px)"></i><i style="left:1900px;width:4px;background:linear-gradient(#2d0052 1px,#2d0052 473px,#260067 479px,#14008c 487px,#060094 491px,#001393 497px,#00318b 507px,#00428a 527px,#006193 557px,#008d93 595px,#00a08d 607px,#00a684 619px,#009773 629px,#007f65 639px,#007369 649px,#005d70 655px,#00208d 667px,#000195 675px,#15008b 683px,#1b0084 685px,#28005f 691px,#2c0055 693px,#2d0052 709px,#2d0052 761px)"></i><i style="left:1904px;width:4px;background:linear-gradient(#2d0052 1px,#2d0052 471px,#23006e 477px,#190087 481px,#030199 487px,#002f92 497px,#003f8d 509px,#005797 541px,#028597 587px,#01a293 605px,#01ad89 619px,#01a37d 627px,#008468 637px,#007767 647px,#006e6c 651px,#005675 657px,#00238c 667px,#020095 677px,#170089 685px,#2d0052 695px,#2d0052 761px)"></i><i style="left:1908px;width:4px;background:linear-gradient(#2d0052 1px,#2d0052 471px,#200078 477px,#1a0088 479px,#03009c 485px,#003599 495px,#014295 503px,#03679b 561px,#048a9a 591px,#04a496 605px,#05b08d 619px,#04aa86 625px,#008369 637px,#007668 647px,#00656c 653px,#004c7a 659px,#00258c 667px,#000095 677px,#1a0087 687px,#270062 693px,#2d0052 697px,#2d0052 761px)"></i><i style="left:1912px;width:4px;background:linear-gradient(#2d0052 1px,#2d0052 471px,#17018c 481px,#03039e 487px,#02349e 497px,#04469c 509px,#04669c 565px,#07859b 589px,#09a598 605px,#09af90 619px,#06a888 625px,#00816a 637px,#007469 647px,#005d70 655px,#00258c 667px,#000395 677px,#16008a 687px,#1c0082 689px,#2d0052 697px,#2d0052 761px)"></i><i style="left:1916px;width:4px;background:linear-gradient(#2d0052 1px,#2d0052 471px,#270064 477px,#130291 487px,#08029c 491px,#031da1 499px,#0542a0 515px,#05659d 569px,#08819b 589px,#0da999 609px,#0cae93 619px,#07a489 625px,#00826d 635px,#007469 645px,#005b72 655px,#00268b 667px,#020095 679px,#1a0087 689px,#2d0052 697px,#2d0052 761px)"></i><i style="left:1920px;width:4px;background:linear-gradient(#2d0052 1px,#2d0052 475px,#2b0058 479px,#160390 495px,#09069c 503px,#0311a1 509px,#032ba1 517px,#0649a0 537px,#06669d 577px,#097e9c 591px,#10a79b 611px,#0fab96 619px,#079f89 625px,#007d6e 635px,#00656c 649px,#004e79 657px,#001e8e 669px,#020095 679px,#1b0086 689px,#2d0052 697px,#2d0052 761px)"></i><i style="left:1924px;width:4px;background:linear-gradient(#2d0052 1px,#2d0052 481px,#230173 497px,#17038f 509px,#09079c 517px,#0314a1 527px,#0331a1 537px,#0441a0 547px,#07679d 585px,#10a29e 611px,#10a598 619px,#069788 625px,#007b72 633px,#00626d 647px,#004f78 655px,#001c8e 669px,#000295 677px,#17008a 687px,#2d0052 697px,#2d0052 761px)"></i><i style="left:1928px;width:4px;background:linear-gradient(#2d0052 1px,#2d0052 491px,#280062 505px,#20027c 515px,#1a0389 525px,#07089d 535px,#0220a1 545px,#02379f 557px,#03469e 567px,#055f9d 587px,#0d979d 609px,#0fa09c 617px,#07948e 623px,#007372 633px,#00626d 643px,#004e79 653px,#001890 669px,#020095 677px,#1a0088 687px,#2c0056 695px,#2d0052 703px,#2d0052 761px)"></i><i style="left:1932px;width:4px;background:linear-gradient(#2d0052 1px,#2d0052 507px,#260067 525px,#15028e 537px,#05029c 547px,#02079f 551px,#01319e 563px,#03539d 587px,#0a8c9c 607px,#0d979c 615px,#088f91 621px,#006e74 631px,#005f6f 641px,#00477c 653px,#000c93 671px,#010095 675px,#180089 685px,#2d0052 695px,#2d0052 761px)"></i><i style="left:1936px;width:4px;background:linear-gradient(#2d0052 1px,#2d0052 517px,#23006f 531px,#17008b 539px,#02019c 551px,#00289c 561px,#003f9b 575px,#014e9d 587px,#08869b 607px,#0a8e99 615px,#04838c 621px,#006a76 629px,#005c71 639px,#00467d 651px,#000d92 669px,#000195 673px,#17008a 683px,#2c0056 693px,#2d0052 703px,#2d0052 761px)"></i><i style="left:1940px;width:4px;background:linear-gradient(#2d0052 1px,#2d0052 515px,#1d0080 529px,#070098 539px,#000c9b 547px,#002f97 557px,#004899 577px,#005a9b 591px,#08849b 609px,#088697 615px,#006375 629px,#005376 641px,#003983 653px,#000195 671px,#1b0085 683px,#2c0056 691px,#2d0052 699px,#2d0052 761px)"></i><i style="left:1944px;width:4px;background:linear-gradient(#2d0052 1px,#2d0052 515px,#190089 525px,#02039e 535px,#00279b 543px,#004094 557px,#005e9b 591px,#07809a 609px,#067f94 615px,#006078 627px,#004f78 639px,#003187 653px,#000195 669px,#16008a 679px,#1b0085 681px,#2a005b 689px,#2d0052 691px,#2d0052 761px)"></i><i style="left:1948px;width:4px;background:linear-gradient(#2d0052 1px,#2d0052 515px,#190089 525px,#03009e 533px,#00149f 537px,#00339d 543px,#014498 553px,#01619b 591px,#077a9a 609px,#047793 615px,#00597a 627px,#00457d 641px,#000c93 663px,#010195 667px,#170089 677px,#2b0057 687px,#2d0052 691px,#2d0052 761px)"></i><i style="left:1952px;width:4px;background:linear-gradient(#2d0052 1px,#2d0052 515px,#270064 521px,#15018f 531px,#05059e 537px,#02349f 549px,#03469d 559px,#05689c 599px,#057297 613px,#00577d 625px,#00457e 637px,#00218d 653px,#020095 665px,#190088 675px,#29005e 683px,#2d0052 687px,#2d0052 761px)"></i><i style="left:1956px;width:4px;background:linear-gradient(#2d0052 1px,#2d0052 519px,#2b0058 523px,#18028b 537px,#08039c 543px,#0218a1 549px,#02379f 559px,#034d9e 577px,#056a9b 611px,#01628c 619px,#004f7e 627px,#003684 641px,#000195 661px,#15008b 671px,#1b0085 673px,#2d0052 683px,#2d0052 761px)"></i><i style="left:1960px;width:4px;background:linear-gradient(#2d0052 1px,#2d0052 525px,#25016b 537px,#16028e 545px,#04059e 551px,#012da0 563px,#03459f 579px,#04639a 613px,#005b8a 621px,#00497f 629px,#001291 653px,#000195 659px,#17008a 669px,#2b0057 679px,#2d0052 683px,#2d0052 761px)"></i><i style="left:1964px;width:4px;background:linear-gradient(#2d0052 1px,#2d0052 535px,#23006f 543px,#1b0187 547px,#0203a0 555px,#0127a0 567px,#03489f 593px,#035e99 615px,#005589 623px,#004580 631px,#000994 655px,#030094 659px,#16008a 667px,#2c0056 677px,#2d0052 683px,#2d0052 761px)"></i><i style="left:1968px;width:4px;background:linear-gradient(#2d0052 1px,#2d0052 537px,#1a0088 547px,#0102a0 557px,#0121a0 569px,#03589b 615px,#00558e 623px,#004182 633px,#001590 651px,#000295 657px,#190088 667px,#280062 673px,#2d0052 677px,#2d0052 761px)"></i><i style="left:1972px;width:4px;background:linear-gradient(#2d0052 1px,#2d0052 535px,#23006f 541px,#190088 545px,#0101a0 557px,#0124a0 577px,#02469e 607px,#025799 619px,#004f8a 627px,#003c83 637px,#001b8f 651px,#010095 659px,#190088 667px,#2d0052 675px,#2d0052 761px)"></i><i style="left:1976px;width:4px;background:linear-gradient(#2d0052 1px,#2d0052 535px,#1b0084 543px,#0a0097 551px,#0106a0 561px,#013c9f 605px,#02559b 619px,#00518e 627px,#004083 637px,#00288b 649px,#000295 659px,#180089 667px,#270062 673px,#2d0052 677px,#2d0052 761px)"></i><i style="left:1980px;width:4px;background:linear-gradient(#2d0052 1px,#2d0052 535px,#18008a 545px,#03019e 559px,#0129a0 597px,#02529c 619px,#005392 627px,#004082 639px,#002d88 649px,#020095 661px,#15008b 667px,#1c0082 669px,#29005c 675px,#2d0052 677px,#2d0052 761px)"></i><i style="left:1984px;width:4px;background:linear-gradient(#2d0052 1px,#2d0052 535px,#280060 539px,#18018b 547px,#07019b 561px,#0106a0 575px,#0126a0 599px,#024e9d 619px,#005292 629px,#004383 639px,#003087 649px,#000195 661px,#190089 669px,#270062 675px,#2d0052 679px,#2d0052 761px)"></i><i style="left:1988px;width:4px;background:linear-gradient(#2d0052 1px,#2d0052 537px,#280060 541px,#1a0189 549px,#0b0198 565px,#0103a0 581px,#0129a0 603px,#014e9d 621px,#005192 631px,#004183 641px,#002c89 651px,#020095 663px,#1b0085 671px,#29005e 677px,#2d0052 679px,#2d0052 761px)"></i><i style="left:1992px;width:4px;background:linear-gradient(#2d0052 1px,#2d0052 539px,#280060 543px,#1d0183 551px,#15018e 559px,#0102a0 585px,#01359f 611px,#014d9d 623px,#005195 631px,#003f83 643px,#00288a 653px,#000195 663px,#180089 671px,#2d0052 679px,#2d0052 761px)"></i><i style="left:1996px;width:4px;background:linear-gradient(#2d0052 1px,#2d0052 541px,#1c0185 561px,#0102a0 589px,#024b9d 623px,#004f94 633px,#004084 643px,#002b89 653px,#000495 663px,#170089 671px,#2c0055 679px,#2d0052 695px,#2d0052 761px)"></i><i style="left:2000px;width:4px;background:linear-gradient(#2d0052 1px,#2d0052 547px,#200179 565px,#17018d 573px,#0102a0 593px,#013b9f 617px,#024c9d 627px,#004d93 635px,#003e84 645px,#002d89 653px,#000495 663px,#10008e 669px,#170089 671px,#2d0052 679px,#2d0052 761px)"></i><i style="left:2004px;width:4px;background:linear-gradient(#2d0052 1px,#2d0052 555px,#2b0058 561px,#200178 571px,#17018c 577px,#0104a0 597px,#012ea0 615px,#02479e 625px,#014c96 635px,#003f85 645px,#002e88 653px,#000295 663px,#190088 671px,#2d0052 679px,#2d0052 761px)"></i><i style="left:2008px;width:4px;background:linear-gradient(#2d0052 1px,#2d0052 565px,#210177 575px,#19018b 581px,#0104a0 601px,#011fa0 613px,#02449e 627px,#004994 637px,#003c85 647px,#00268b 655px,#000196 663px,#14008b 669px,#1c0083 671px,#260066 675px,#2d0052 679px,#2d0052 761px)"></i><i style="left:2012px;width:4px;background:linear-gradient(#2d0052 1px,#2d0052 569px,#16018d 587px,#0105a0 607px,#01429e 629px,#004896 637px,#003c85 647px,#00268b 655px,#000096 663px,#16008a 669px,#270062 675px,#2d0052 679px,#2d0052 761px)"></i><i style="left:2016px;width:4px;background:linear-gradient(#2d0052 1px,#2d0052 573px,#2b0058 577px,#190189 589px,#02019f 609px,#00419d 631px,#004693 639px,#003b86 647px,#00268c 655px,#000096 663px,#16008a 669px,#280061 675px,#2d0052 679px,#2d0052 761px)"></i><i style="left:2020px;width:4px;background:linear-gradient(#2d0052 1px,#2d0052 579px,#1c0083 591px,#110090 601px,#00009e 611px,#003c9d 629px,#004696 637px,#003a86 647px,#00248c 655px,#000096 663px,#16008a 669px,#270064 675px,#2d0052 679px,#2d0052 761px)"></i><i style="left:2024px;width:4px;background:linear-gradient(#2d0052 1px,#2d0052 569px,#280060 579px,#180089 595px,#070097 607px,#00059b 611px,#00399b 627px,#004597 635px,#003c88 645px,#00298a 653px,#010095 663px,#1b0086 671px,#29005e 677px,#2d0052 679px,#2d0052 761px)"></i><i style="left:2028px;width:4px;background:linear-gradient(#2d0052 1px,#2d0052 561px,#1e007c 581px,#14008b 589px,#020197 605px,#001995 613px,#003d95 627px,#004491 637px,#003886 647px,#00198f 657px,#000096 663px,#180089 671px,#2c0056 679px,#2d0052 687px,#2d0052 761px)"></i><i style="left:2032px;width:4px;background:linear-gradient(#2d0052 1px,#2d0052 555px,#1a0085 575px,#010395 597px,#001c90 609px,#00388d 621px,#004490 635px,#003886 647px,#001a8f 657px,#000295 663px,#16008a 671px,#2d0052 681px,#2d0052 761px)"></i><i style="left:2036px;width:4px;background:linear-gradient(#2d0052 1px,#2d0052 551px,#270064 557px,#1c0083 565px,#10008e 575px,#010296 589px,#003689 615px,#00448d 635px,#003486 649px,#000b93 661px,#030094 665px,#1a0087 673px,#2d0052 681px,#2d0052 761px)"></i><i style="left:2040px;width:4px;background:linear-gradient(#2d0052 1px,#2d0052 551px,#1b0085 561px,#0a0093 575px,#000298 585px,#00328c 605px,#00428d 623px,#00458c 635px,#003885 647px,#001b8e 657px,#020095 665px,#190089 673px,#2d0052 681px,#2d0052 761px)"></i><i style="left:2044px;width:4px;background:linear-gradient(#2d0052 1px,#2d0052 551px,#190088 561px,#00019c 581px,#003991 603px,#004890 631px,#003785 647px,#001b8f 657px,#020095 665px,#190089 673px,#2d0052 681px,#2d0052 761px)"></i><i style="left:2048px;width:3px;background:linear-gradient(#2d0052 1px,#2d0052 551px,#190089 563px,#00019e 579px,#003e96 603px,#004a93 629px,#003a85 645px,#00298a 653px,#000395 663px,#1b0086 673px,#2d0052 681px,#2d0052 761px)"></i></div></div>
<svg class="b" style="left:378px;top:195px;z-index:2;" width="2051" height="761" viewBox="0 0 2051 761"><path d="M94.0 592.5 94.9 591.9 95.9 591.0 97.4 590.0 99.3 588.8 102.0 587.5 105.5 585.9 109.8 584.0 114.6 582.1 119.6 580.2 124.5 578.8 129.2 577.7 134.0 576.8 138.8 576.1 144.0 575.6 149.5 575.0 155.9 574.5 163.0 574.1 170.3 573.7 176.8 573.4 182.0 573.0 185.2 572.6 186.8 572.2 187.8 571.8 189.2 571.5 192.0 571.2 196.5 571.1 202.2 571.0 208.4 571.0 214.4 571.1 219.5 571.2 223.5 571.6 226.9 572.1 229.9 572.7 233.2 573.3 237.0 573.8 241.6 574.1 246.7 574.4 252.0 574.7 257.2 575.1 262.0 575.5 266.4 576.0 270.6 576.6 274.6 577.3 278.4 578.0 282.0 578.8 285.3 579.6 288.2 580.6 291.1 581.7 294.0 582.7 297.2 583.8 300.7 584.6 304.2 585.3 308.0 586.1 312.2 587.2 317.0 588.8 322.8 591.0 329.4 593.8 336.4 596.9 343.3 599.9 349.5 602.5 354.8 604.7 359.4 606.6 364.0 608.4 368.8 610.1 374.5 612.0 381.2 614.1 388.6 616.3 396.4 618.5 404.3 620.4 412.0 622.0 419.6 623.2 427.2 624.0 434.9 624.6 442.3 625.0 449.5 625.2 456.6 625.3 463.6 625.0 470.3 624.6 476.5 624.2 482.0 623.8 486.5 623.3 490.3 622.9 493.6 622.4 496.6 621.8 499.5 621.2 502.1 620.6 504.3 619.9 506.3 619.1 508.8 618.3 512.0 617.5 516.3 616.6 521.3 615.7 526.8 614.7 532.1 613.9 537.0 613.2 541.2 612.8 544.9 612.4 548.5 612.2 552.4 612.2 557.0 612.2 562.4 612.5 568.5 612.9 574.9 613.5 581.2 614.2 587.0 615.0 592.6 616.0 598.1 617.2 603.3 618.4 608.0 619.6 612.0 620.8 614.9 621.7 616.8 622.5 618.4 623.3 619.9 624.1 622.0 625.0 624.6 625.9 627.3 626.8 630.2 627.7 633.4 628.7 637.0 630.0 641.0 631.5 645.3 633.2 650.0 635.1 654.7 636.9 659.5 638.8 664.4 640.6 669.6 642.5 674.7 644.4 679.8 646.1 684.5 647.5 688.8 648.6 692.7 649.6 696.6 650.3 700.4 650.9 704.5 651.2 708.9 651.5 713.4 651.5 718.1 651.4 722.6 651.0 727.0 650.5 731.2 649.7 735.4 648.7 739.5 647.5 743.4 646.2 747.0 645.0 750.3 643.8 753.4 642.6 756.2 641.3 759.1 640.0 762.0 638.8 764.9 637.5 767.8 636.2 770.6 635.0 773.7 633.8 777.0 632.5 780.6 631.2 784.4 630.0 788.4 628.7 792.6 627.5 797.0 626.2 801.7 625.1 806.6 624.0 811.8 622.8 816.9 621.7 822.0 620.5 827.2 619.1 832.6 617.7 837.9 616.2 842.8 614.8 847.0 613.8 850.3 613.0 852.9 612.5 855.1 612.1 857.2 611.8 859.5 611.2 861.9 610.6 864.3 609.8 866.6 609.0 869.2 608.2 872.0 607.5 875.2 606.9 878.6 606.3 882.3 605.8 885.9 605.4 889.5 605.0 893.0 604.7 896.6 604.4 900.2 604.1 903.7 604.0 907.0 604.0 910.2 604.1 913.2 604.3 916.1 604.6 919.0 605.0 922.0 605.5 925.0 606.1 928.0 606.8 931.0 607.7 934.0 608.6 937.0 609.5 939.9 610.5 942.8 611.4 945.6 612.5 948.7 613.7 952.0 615.0 955.7 616.6 959.6 618.3 963.8 620.2 967.9 622.0 972.0 623.8 976.0 625.4 980.0 627.1 984.0 628.6 988.0 630.1 992.0 631.2 995.9 632.2 999.6 632.9 1003.4 633.5 1007.5 633.9 1012.0 634.2 1017.1 634.5 1022.6 634.6 1028.5 634.6 1034.5 634.5 1040.5 634.5 1046.7 634.4 1053.2 634.3 1059.7 634.2 1066.1 634.1 1072.0 634.0 1077.4 633.9 1082.5 633.9 1087.3 633.9 1092.1 633.9 1097.0 634.0 1102.0 634.1 1107.0 634.3 1112.1 634.6 1117.0 634.9 1122.0 635.5 1127.0 636.4 1132.2 637.5 1137.2 638.8 1142.0 639.9 1146.2 640.8 1150.0 641.3 1153.2 641.7 1156.2 641.9 1159.0 642.0 1162.0 642.0 1165.0 642.0 1167.8 641.9 1170.7 641.6 1173.7 641.2 1177.0 640.5 1180.7 639.5 1184.6 638.1 1188.8 636.6 1192.9 635.1 1197.0 633.8 1201.1 632.6 1205.4 631.4 1209.5 630.4 1213.5 629.4 1217.0 628.8 1220.1 628.3 1222.8 628.1 1225.2 628.1 1227.4 628.0 1229.5 628.0 1231.0 627.9 1231.9 627.9 1232.8 627.8 1234.4 627.8 1237.5 627.8 1242.5 627.7 1248.9 627.6 1256.1 627.6 1263.2 627.6 1269.5 627.8 1275.0 628.0 1280.1 628.2 1284.9 628.6 1289.7 629.0 1294.5 629.5 1299.5 630.1 1304.4 631.0 1309.3 631.8 1314.1 632.5 1318.5 633.0 1322.5 633.2 1326.2 633.2 1329.8 633.0 1333.3 632.9 1337.0 632.8 1340.9 632.6 1345.0 632.4 1349.1 632.2 1353.1 632.1 1357.0 632.2 1360.7 632.5 1364.3 632.9 1367.7 633.4 1371.1 634.1 1374.5 635.0 1377.8 636.2 1381.0 637.6 1384.1 639.1 1387.3 640.7 1390.5 642.0 1393.8 643.2 1397.3 644.5 1400.7 645.6 1403.9 646.5 1407.0 647.0 1409.8 647.1 1412.3 646.9 1414.7 646.4 1417.1 645.8 1419.5 645.0 1422.0 644.0 1424.6 642.6 1427.2 641.2 1429.7 639.9 1432.0 638.8 1434.2 637.9 1436.2 637.1 1438.1 636.5 1440.0 636.0 1442.0 635.8 1444.0 635.8 1445.9 636.0 1447.8 636.4 1449.8 636.9 1452.0 637.5 1454.3 638.2 1456.8 639.2 1459.4 640.2 1462.0 640.9 1464.5 641.2 1467.0 641.0 1469.4 640.4 1471.8 639.5 1474.3 638.5 1477.0 637.5 1479.9 636.4 1482.9 635.0 1486.1 633.7 1489.1 632.5 1492.0 631.8 1494.7 631.5 1497.2 631.5 1499.6 631.8 1502.0 632.2 1504.5 632.5 1507.1 632.8 1509.7 633.3 1512.4 633.8 1514.8 634.1 1517.0 634.2 1518.7 634.2 1520.1 634.1 1521.4 633.8 1522.8 633.3 1524.5 632.5 1526.7 631.3 1529.1 629.6 1531.8 627.8 1534.4 626.1 1537.0 624.5 1539.5 623.1 1542.1 621.9 1544.7 620.7 1547.2 619.6 1549.5 618.8 1551.7 618.1 1553.7 617.5 1555.6 617.1 1557.5 616.9 1559.5 616.8 1561.5 616.7 1563.4 616.8 1565.3 617.1 1567.3 617.5 1569.5 618.0 1571.7 618.7 1574.0 619.7 1576.3 620.7 1579.0 621.8 1582.0 623.0 1585.5 624.2 1589.5 625.6 1593.6 627.0 1597.9 628.3 1602.0 629.5 1606.0 630.5 1609.9 631.5 1613.8 632.4 1617.8 633.1 1622.0 633.8 1626.3 634.2 1630.7 634.6 1635.2 634.9 1639.8 635.1 1644.5 635.2 1649.5 635.4 1654.7 635.5 1659.9 635.5 1664.9 635.4 1669.5 635.2 1673.5 635.0 1677.2 634.6 1680.5 634.2 1683.8 633.6 1687.0 633.0 1690.1 632.3 1692.9 631.4 1695.8 630.5 1698.7 629.5 1702.0 628.5 1705.8 627.5 1710.0 626.5 1714.3 625.4 1718.4 624.3 1722.0 623.0 1725.0 621.6 1727.5 620.1 1729.9 618.6 1732.1 616.8 1734.5 615.0 1737.0 612.9 1739.6 610.4 1742.2 608.0 1744.7 605.7 1747.0 603.8 1749.2 602.2 1751.2 600.8 1753.1 599.7 1755.1 599.0 1757.0 598.8 1759.0 599.0 1761.0 599.7 1763.0 600.7 1764.9 602.1 1766.8 603.8 1768.4 605.8 1769.9 608.1 1771.4 610.8 1772.8 613.5 1774.2 616.2 1775.7 619.1 1777.2 622.1 1778.7 625.0 1780.2 627.8 1781.8 630.0 1783.5 631.8 1785.3 633.2 1787.1 634.3 1788.9 635.1 1790.5 635.5 1791.9 635.5 1793.1 635.2 1794.2 634.5 1795.4 633.6 1796.8 632.5 1798.3 631.0 1800.0 629.2 1801.8 627.2 1803.6 625.3 1805.5 623.8 1807.4 622.5 1809.3 621.5 1811.3 620.6 1813.3 619.9 1815.5 619.2 1817.9 618.8 1820.4 618.4 1823.1 618.2 1825.6 618.1 1828.0 618.2 1830.2 618.5 1832.2 619.0 1834.1 619.6 1836.0 620.4 1838.0 621.2 1840.0 622.3 1842.0 623.6 1844.0 624.9 1846.0 626.3 1848.0 627.5 1850.0 628.7 1852.1 629.9 1854.2 631.0 1856.2 631.9 1858.0 632.5 1859.7 632.8 1861.2 632.8 1862.6 632.6 1864.0 632.1 1865.5 631.2 1867.0 630.0 1868.5 628.3 1870.0 626.3 1871.5 624.3 1873.0 622.5 1874.4 620.6 1875.8 618.6 1877.1 616.6 1878.7 615.1 1880.5 614.2 1882.7 614.5 1885.1 615.7 1887.8 617.2 1890.4 618.4 1893.0 618.8 1895.6 618.0 1898.2 616.6 1900.9 614.8 1903.3 612.9 1905.5 611.2 1907.2 609.5 1908.6 607.5 1909.9 605.7 1911.3 604.6 1913.0 604.5 1915.3 605.8 1917.9 608.2 1920.6 611.2 1923.2 614.5 1925.5 617.5 1927.2 620.8 1928.6 624.7 1929.9 628.4 1931.3 631.2 1933.0 632.5 1935.3 631.7 1937.9 629.2 1940.6 626.0 1943.2 622.6 1945.5 620.0 1947.3 618.2 1948.7 616.8 1950.1 615.4 1951.4 614.1 1953.0 612.5 1954.9 610.7 1956.9 608.8 1959.1 606.8 1961.1 604.7 1963.0 602.5 1964.6 599.8 1966.1 596.7 1967.4 593.6 1968.9 591.2 1970.5 590.0 1972.4 590.3 1974.4 591.7 1976.6 593.9 1978.6 596.3 1980.5 598.8 1982.1 601.2 1983.6 603.9 1984.9 606.9 1986.4 609.8 1988.0 612.5 1989.8 615.2 1991.8 617.8 1993.9 620.4 1996.0 622.8 1998.0 625.0 2000.0 626.8 2002.1 628.4 2004.2 629.7 2006.2 631.1 2008.0 632.5 2009.7 634.1 2011.2 635.7 2012.6 637.4 2014.0 638.8 2015.5 640.0 2017.0 641.0 2018.5 641.8 2020.0 642.5 2021.5 642.7 2023.0 642.5 2024.5 641.6 2026.0 640.2 2027.5 638.5 2029.0 636.7 2030.5 635.0 2032.0 633.4 2033.5 631.7 2035.0 630.0 2036.5 628.6 2038.0 627.5 2039.6 626.8 2041.4 626.5 2043.0 626.4 2044.5 626.3 2045.5 626.2" fill="none" stroke="#00ffff" stroke-width="2.500" stroke-dasharray="8.200 2.500" stroke-linejoin="round"/></svg>
<svg class="b" style="left:0px;top:0px;z-index:3;" width="2489" height="1013" viewBox="0 0 2489 1013"><path d="M377.5 194.5H2429.5V956.5H377.5Z" fill="none" stroke="#d9dbd6" stroke-width="1"/><path d="M378 894.5H2429M378 831.5H2429M378 768.5H2429M378 705.5H2429M378 642.5H2429M378 579.5H2429M378 516.5H2429M378 453.5H2429M378 390.5H2429M378 327.5H2429M378 264.5H2429M666.5 195V956M944.5 195V956M1141.5 195V956M1293.5 195V956M1418.5 195V956M1524.5 195V956M1615.5 195V956M1696.5 195V956M1768.5 195V956M2243.5 195V956" stroke="#434343" stroke-width="1" fill="none" shape-rendering="crispEdges"/><path d="M378 202.5H2429" stroke="#c4c4c4" stroke-width="1"/><path d="M376 202.5H378" stroke="#000" stroke-width="1"/><path d="M675.5 956V959" stroke="#000" stroke-width="1"/><rect x="343.5" y="194.5" width="32" height="16" fill="#fff" stroke="#0000ff" stroke-width="1"/><rect x="659.5" y="959.5" width="31" height="16" fill="#fff" stroke="#0000ff" stroke-width="1"/><defs><linearGradient id="cbg" x1="0" y1="0" x2="0" y2="1"><stop offset="0.000" stop-color="#ff0000"/><stop offset="0.050" stop-color="#ff3c00"/><stop offset="0.100" stop-color="#fc7400"/><stop offset="0.150" stop-color="#f4a000"/><stop offset="0.200" stop-color="#ecd000"/><stop offset="0.250" stop-color="#dce000"/><stop offset="0.300" stop-color="#a8cc00"/><stop offset="0.350" stop-color="#6cb800"/><stop offset="0.400" stop-color="#3cb000"/><stop offset="0.450" stop-color="#10b010"/><stop offset="0.500" stop-color="#00b430"/><stop offset="0.550" stop-color="#00b650"/><stop offset="0.600" stop-color="#00ba78"/><stop offset="0.650" stop-color="#00b08c"/><stop offset="0.700" stop-color="#009c98"/><stop offset="0.750" stop-color="#007c98"/><stop offset="0.800" stop-color="#00549c"/><stop offset="0.850" stop-color="#002ca0"/><stop offset="0.900" stop-color="#0000a0"/><stop offset="0.950" stop-color="#1a0088"/><stop offset="1.000" stop-color="#2d0057"/></linearGradient></defs><rect x="2432.5" y="346.5" width="19" height="457" fill="url(#cbg)" stroke="#000" stroke-width="1"/><path d="M2433 369.3H2451M2433 415.1H2451M2433 460.9H2451M2433 506.6H2451M2433 552.4H2451M2433 598.2H2451M2433 644.0H2451M2433 689.8H2451M2433 735.5H2451M2433 781.3H2451" stroke="#000" stroke-width="1"/></svg>
<div class="b" style="left:675.00px;top:195.00px;width:1.00px;height:761.00px;background:#fff;mix-blend-mode:difference;z-index:5;"></div>
<div class="t " style="left:369.88px;top:179.00px;font-size:12px;line-height:12px;color:#1b1b1b;transform:scaleX(0.8667);transform-origin:0 0;">s</div>
<div class="t " style="left:346.28px;top:198.00px;font-size:12px;line-height:12px;color:#0000ff;transform:scaleX(0.9158);transform-origin:0 0;z-index:4;">1.000</div>
<div class="t " style="left:662.48px;top:963.00px;font-size:12px;line-height:12px;color:#0000ff;transform:scaleX(0.9058);transform-origin:0 0;z-index:4;">20,29</div>
<div class="t " style="left:342.00px;top:921.00px;font-size:12px;line-height:12px;color:#8e8e8e;transform:scaleX(0.9815);transform-origin:0 0;">-150m</div>
<div class="t " style="left:342.00px;top:889.00px;font-size:12px;line-height:12px;color:#1b1b1b;transform:scaleX(0.9815);transform-origin:0 0;">-100m</div>
<div class="t " style="left:348.37px;top:858.00px;font-size:12px;line-height:12px;color:#8e8e8e;transform:scaleX(0.9879);transform-origin:0 0;">-50m</div>
<div class="t " style="left:368.11px;top:826.00px;font-size:12px;line-height:12px;color:#1b1b1b;transform:scaleX(1.0899);transform-origin:0 0;">0</div>
<div class="t " style="left:352.19px;top:795.00px;font-size:12px;line-height:12px;color:#8e8e8e;transform:scaleX(0.9936);transform-origin:0 0;">50m</div>
<div class="t " style="left:345.81px;top:763.00px;font-size:12px;line-height:12px;color:#1b1b1b;transform:scaleX(0.9850);transform-origin:0 0;">100m</div>
<div class="t " style="left:345.81px;top:732.00px;font-size:12px;line-height:12px;color:#8e8e8e;transform:scaleX(0.9850);transform-origin:0 0;">150m</div>
<div class="t " style="left:345.81px;top:700.00px;font-size:12px;line-height:12px;color:#1b1b1b;transform:scaleX(0.9850);transform-origin:0 0;">200m</div>
<div class="t " style="left:345.81px;top:669.00px;font-size:12px;line-height:12px;color:#8e8e8e;transform:scaleX(0.9850);transform-origin:0 0;">250m</div>
<div class="t " style="left:345.81px;top:637.00px;font-size:12px;line-height:12px;color:#1b1b1b;transform:scaleX(0.9850);transform-origin:0 0;">300m</div>
<div class="t " style="left:345.81px;top:606.00px;font-size:12px;line-height:12px;color:#8e8e8e;transform:scaleX(0.9850);transform-origin:0 0;">350m</div>
<div class="t " style="left:345.81px;top:574.00px;font-size:12px;line-height:12px;color:#1b1b1b;transform:scaleX(0.9850);transform-origin:0 0;">400m</div>
<div class="t " style="left:345.81px;top:543.00px;font-size:12px;line-height:12px;color:#8e8e8e;transform:scaleX(0.9850);transform-origin:0 0;">450m</div>
<div class="t " style="left:345.81px;top:511.00px;font-size:12px;line-height:12px;color:#1b1b1b;transform:scaleX(0.9850);transform-origin:0 0;">500m</div>
<div class="t " style="left:345.81px;top:480.00px;font-size:12px;line-height:12px;color:#8e8e8e;transform:scaleX(0.9850);transform-origin:0 0;">550m</div>
<div class="t " style="left:345.81px;top:448.00px;font-size:12px;line-height:12px;color:#1b1b1b;transform:scaleX(0.9850);transform-origin:0 0;">600m</div>
<div class="t " style="left:345.81px;top:417.00px;font-size:12px;line-height:12px;color:#8e8e8e;transform:scaleX(0.9850);transform-origin:0 0;">650m</div>
<div class="t " style="left:345.81px;top:385.00px;font-size:12px;line-height:12px;color:#1b1b1b;transform:scaleX(0.9850);transform-origin:0 0;">700m</div>
<div class="t " style="left:345.81px;top:354.00px;font-size:12px;line-height:12px;color:#8e8e8e;transform:scaleX(0.9850);transform-origin:0 0;">750m</div>
<div class="t " style="left:345.81px;top:322.00px;font-size:12px;line-height:12px;color:#1b1b1b;transform:scaleX(0.9850);transform-origin:0 0;">800m</div>
<div class="t " style="left:345.81px;top:291.00px;font-size:12px;line-height:12px;color:#8e8e8e;transform:scaleX(0.9850);transform-origin:0 0;">850m</div>
<div class="t " style="left:345.81px;top:259.00px;font-size:12px;line-height:12px;color:#1b1b1b;transform:scaleX(0.9850);transform-origin:0 0;">900m</div>
<div class="t " style="left:345.81px;top:228.00px;font-size:12px;line-height:12px;color:#8e8e8e;transform:scaleX(0.9850);transform-origin:0 0;">950m</div>
<div class="t " style="left:937.97px;top:963.00px;font-size:12px;line-height:12px;color:#1b1b1b;">30</div>
<div class="t " style="left:1134.97px;top:963.00px;font-size:12px;line-height:12px;color:#1b1b1b;">40</div>
<div class="t " style="left:1286.97px;top:963.00px;font-size:12px;line-height:12px;color:#1b1b1b;">50</div>
<div class="t " style="left:1411.97px;top:963.00px;font-size:12px;line-height:12px;color:#1b1b1b;">60</div>
<div class="t " style="left:1517.97px;top:963.00px;font-size:12px;line-height:12px;color:#1b1b1b;">70</div>
<div class="t " style="left:1608.97px;top:963.00px;font-size:12px;line-height:12px;color:#1b1b1b;">80</div>
<div class="t " style="left:1689.97px;top:963.00px;font-size:12px;line-height:12px;color:#1b1b1b;">90</div>
<div class="t " style="left:1758.87px;top:963.00px;font-size:12px;line-height:12px;color:#1b1b1b;transform:scaleX(0.9750);transform-origin:0 0;">100</div>
<div class="t " style="left:1824.28px;top:963.00px;font-size:12px;line-height:12px;color:#8e8e8e;transform:scaleX(0.9770);transform-origin:0 0;">110</div>
<div class="t " style="left:1883.87px;top:963.00px;font-size:12px;line-height:12px;color:#8e8e8e;transform:scaleX(0.9750);transform-origin:0 0;">120</div>
<div class="t " style="left:1938.87px;top:963.00px;font-size:12px;line-height:12px;color:#8e8e8e;transform:scaleX(0.9750);transform-origin:0 0;">130</div>
<div class="t " style="left:1988.87px;top:963.00px;font-size:12px;line-height:12px;color:#8e8e8e;transform:scaleX(0.9750);transform-origin:0 0;">140</div>
<div class="t " style="left:2036.87px;top:963.00px;font-size:12px;line-height:12px;color:#8e8e8e;transform:scaleX(0.9750);transform-origin:0 0;">150</div>
<div class="t " style="left:2080.87px;top:963.00px;font-size:12px;line-height:12px;color:#8e8e8e;transform:scaleX(0.9750);transform-origin:0 0;">160</div>
<div class="t " style="left:2121.87px;top:963.00px;font-size:12px;line-height:12px;color:#8e8e8e;transform:scaleX(0.9750);transform-origin:0 0;">170</div>
<div class="t " style="left:2160.87px;top:963.00px;font-size:12px;line-height:12px;color:#8e8e8e;transform:scaleX(0.9750);transform-origin:0 0;">180</div>
<div class="t " style="left:2197.87px;top:963.00px;font-size:12px;line-height:12px;color:#8e8e8e;transform:scaleX(0.9750);transform-origin:0 0;">190</div>
<div class="t " style="left:2233.87px;top:963.00px;font-size:12px;line-height:12px;color:#1b1b1b;transform:scaleX(0.9750);transform-origin:0 0;">200</div>
<div class="t " style="left:2266.87px;top:963.00px;font-size:12px;line-height:12px;color:#8e8e8e;transform:scaleX(0.9750);transform-origin:0 0;">210</div>
<div class="t " style="left:2298.87px;top:963.00px;font-size:12px;line-height:12px;color:#8e8e8e;transform:scaleX(0.9750);transform-origin:0 0;">220</div>
<div class="t " style="left:2328.87px;top:963.00px;font-size:12px;line-height:12px;color:#8e8e8e;transform:scaleX(0.9750);transform-origin:0 0;">230</div>
<div class="t " style="left:2357.87px;top:963.00px;font-size:12px;line-height:12px;color:#8e8e8e;transform:scaleX(0.9750);transform-origin:0 0;">240</div>
<div class="t " style="left:2385.87px;top:963.00px;font-size:12px;line-height:12px;color:#8e8e8e;transform:scaleX(0.9750);transform-origin:0 0;">250</div>
<div class="t " style="left:370.97px;top:963.00px;font-size:12px;line-height:12px;color:#1b1b1b;">13</div>
<div class="t " style="left:2413.28px;top:963.00px;font-size:12px;line-height:12px;color:#1b1b1b;transform:scaleX(0.9312);transform-origin:0 0;">263Hz</div>
<div class="t " style="left:2435.08px;top:334.00px;font-size:12px;line-height:12px;color:#1b1b1b;transform:scaleX(0.9290);transform-origin:0 0;">93</div>
<div class="t " style="left:2435.08px;top:808.00px;font-size:12px;line-height:12px;color:#1b1b1b;transform:scaleX(0.9290);transform-origin:0 0;">53</div>
<div class="t " style="left:2454.58px;top:364.00px;font-size:12px;line-height:12px;color:#1b1b1b;transform:scaleX(0.9290);transform-origin:0 0;">91</div>
<div class="t " style="left:2454.58px;top:410.00px;font-size:12px;line-height:12px;color:#1b1b1b;transform:scaleX(0.9290);transform-origin:0 0;">87</div>
<div class="t " style="left:2454.58px;top:456.00px;font-size:12px;line-height:12px;color:#1b1b1b;transform:scaleX(0.9290);transform-origin:0 0;">83</div>
<div class="t " style="left:2454.58px;top:501.00px;font-size:12px;line-height:12px;color:#1b1b1b;transform:scaleX(0.9290);transform-origin:0 0;">79</div>
<div class="t " style="left:2454.58px;top:547.00px;font-size:12px;line-height:12px;color:#1b1b1b;transform:scaleX(0.9290);transform-origin:0 0;">75</div>
<div class="t " style="left:2454.58px;top:593.00px;font-size:12px;line-height:12px;color:#1b1b1b;transform:scaleX(0.9290);transform-origin:0 0;">71</div>
<div class="t " style="left:2454.58px;top:639.00px;font-size:12px;line-height:12px;color:#1b1b1b;transform:scaleX(0.9290);transform-origin:0 0;">67</div>
<div class="t " style="left:2454.58px;top:684.00px;font-size:12px;line-height:12px;color:#1b1b1b;transform:scaleX(0.9290);transform-origin:0 0;">63</div>
<div class="t " style="left:2454.58px;top:730.00px;font-size:12px;line-height:12px;color:#1b1b1b;transform:scaleX(0.9290);transform-origin:0 0;">59</div>
<div class="t " style="left:2454.58px;top:776.00px;font-size:12px;line-height:12px;color:#1b1b1b;transform:scaleX(0.9290);transform-origin:0 0;">55</div>
<div class="b" style="left:1049.00px;top:984.50px;width:724.00px;height:26.30px;background:#fff;border:1px solid #c9c9c9;"></div>
<svg class="b" style="left:1057px;top:989px;" width="14" height="14" viewBox="0 0 14 14"><rect x="0.700" y="0.700" width="12.6" height="12.6" rx="2.300" fill="#fff" stroke="#2b74e4" stroke-width="1.3"/><path d="M3.300 7.200L5.900 9.900L10.600 3.900" fill="none" stroke="#2b74e4" stroke-width="1.5"/></svg>
<svg class="b" style="left:1414px;top:989px;" width="14" height="14" viewBox="0 0 14 14"><rect x="0.700" y="0.700" width="12.6" height="12.6" rx="2.300" fill="#fff" stroke="#2b74e4" stroke-width="1.3"/><path d="M3.300 7.200L5.900 9.900L10.600 3.900" fill="none" stroke="#2b74e4" stroke-width="1.5"/></svg>
<div class="t " style="left:1076.58px;top:991.00px;font-size:12px;line-height:12px;color:#2f8f2f;transform:scaleX(0.8698);transform-origin:0 0;">R SUB</div>
<div class="b" style="left:1241.10px;top:996.00px;width:50.60px;height:2.00px;background:#0b8a0b;"></div>
<div class="t " style="left:1337.68px;top:991.00px;font-size:12px;line-height:12px;color:#2f8f2f;transform:scaleX(0.9307);transform-origin:0 0;">50,9 dB</div>
<div class="t " style="left:1433.98px;top:991.00px;font-size:12px;line-height:12px;color:#12a9b4;transform:scaleX(0.9841);transform-origin:0 0;">Peak energy time</div>
<svg class="b" style="left:1598px;top:994px;" width="52" height="6" viewBox="0 0 52 6"><path d="M1 3H49" stroke="#12b4c0" stroke-width="2" stroke-dasharray="7.5 2.700" fill="none"/></svg>
<div class="t " style="left:1686.98px;top:991.00px;font-size:12px;line-height:12px;color:#12a9b4;transform:scaleX(0.9441);transform-origin:0 0;">82,40 ms</div>
<svg class="b" style="left:0px;top:0px;" width="332" height="1014" viewBox="0 0 332 1014"><defs><radialGradient id="delg" cx="0.5" cy="0.75" r="0.75"><stop offset="0" stop-color="#f08000"/><stop offset="0.55" stop-color="#dc3c00"/><stop offset="1" stop-color="#c00000"/></radialGradient>
    <linearGradient id="btng" x1="0" y1="0" x2="0" y2="1"><stop offset="0" stop-color="#f1f1f1"/><stop offset="1" stop-color="#dcdcdc"/></linearGradient>
    <clipPath id="lclip"><rect x="0" y="118" width="330" height="895"/></clipPath></defs><g clip-path="url(#lclip)"><rect x="0" y="120" width="12.3" height="893" fill="#f4f4f4"/><rect x="0" y="987.5" width="12.3" height="13" fill="#fdfdfd"/><rect x="0" y="134" width="12.3" height="853.5" fill="#d6d6d6"/><path d="M1.8 130.6L9.800 130.6L5.800 125.6Z" fill="#8a8a8a"/><path d="M1.8 1004.4L9.800 1004.4L5.800 1009.6Z" fill="#8a8a8a"/><rect x="14.4" y="122.3" width="74.3" height="25.4" rx="3.5" fill="url(#btng)" stroke="#b9b9b9" stroke-width="1"/><path d="M75.5 131.6L71.800 135.2L75.5 138.8M80.8 131.6L77.100 135.2L80.8 138.8" stroke="#333" stroke-width="1.1" fill="none"/><path d="M14.3 196.2V155.8H94.6L123.3 126.2H326.3V196.2Z" fill="#e5e5e5" stroke="#b4b4b4" stroke-width="1.5" stroke-linejoin="round"/><path d="M14.3 196.2V155.8M326.3 126.2V196.2" stroke="#8f8f8f" stroke-width="1" fill="none"/><rect x="127.6" y="133.5" width="162.7" height="23" fill="#fff"/><circle cx="308.1" cy="145.5" r="6.700" fill="url(#delg)" stroke="#b40000" stroke-width="1.3"/><path d="M305.0 142.4L311.20000000000005 148.6M311.20000000000005 142.4L305.0 148.6" stroke="#fff" stroke-width="2.1" stroke-linecap="round"/><clipPath id="tc1"><rect x="22.2" y="165.8" width="98.5" height="22.3"/></clipPath><rect x="22.2" y="165.8" width="98.5" height="22.3" fill="#fff"/><path d="M37.3 165.8v22.3M48.3 165.8v22.3M56.4 165.8v22.3M63.3 165.8v22.3M68.5 165.8v22.3M73.8 165.8v22.3M78.4 165.8v22.3M81.9 165.8v22.3M107.3 165.8v22.3M22.2 173.4h98.5M22.2 182.4h98.5" stroke="#e3e3e3" stroke-width="1" fill="none"/><polyline points="36.2,186.2 38.7,185.2 41.2,185.6 42.7,183.1 48.7,180.6 51.2,179.1 53.4,174.5 55.8,172.1 57.0,173.8 58.2,180.8 60.5,184.8 61.9,186.4" fill="none" stroke="#e02020" stroke-width="1.2" stroke-linejoin="round" clip-path="url(#tc1)"/><polyline points="75.5,186.1 77.2,184.1 79.5,184.3 80.7,186.4" fill="none" stroke="#e02020" stroke-width="1.2" stroke-linejoin="round" clip-path="url(#tc1)"/><polyline points="84.2,185.8 86.5,180.0 87.4,183.2 88.8,182.6 89.4,186.1 91.5,183.2 92.9,186.4" fill="none" stroke="#e02020" stroke-width="1.2" stroke-linejoin="round" clip-path="url(#tc1)"/><path d="M22.2 188.10000000000002V165.8H120.7" fill="none" stroke="#bdbdbd" stroke-width="1"/><path d="M26 180.7H33" stroke="#1b1b1b" stroke-width="1"/><path d="M14.3 374.2V186.2H94.6L123.3 156.6H326.3V374.2Z" fill="#ffffff" stroke="#b4b4b4" stroke-width="1.5" stroke-linejoin="round"/><path d="M14.3 374.2V186.2M326.3 156.6V374.2" stroke="#8f8f8f" stroke-width="1" fill="none"/><path d="M14.3 374.2H326.3" stroke="#c4c4c4" stroke-width="1" fill="none"/><rect x="127.5" y="163.4" width="163" height="23.6" fill="#fff" stroke="#c2c2c2" stroke-width="1"/><circle cx="308.1" cy="175.9" r="6.700" fill="url(#delg)" stroke="#b40000" stroke-width="1.3"/><path d="M305.0 172.8L311.20000000000005 179.0M311.20000000000005 172.8L305.0 179.0" stroke="#fff" stroke-width="2.1" stroke-linecap="round"/><rect x="22.2" y="196.1" width="98.5" height="65.2" fill="#fff"/><path d="M37.3 196.1v65.2M48.3 196.1v65.2M56.4 196.1v65.2M63.3 196.1v65.2M68.5 196.1v65.2M73.8 196.1v65.2M78.4 196.1v65.2M81.9 196.1v65.2M107.3 196.1v65.2M22.2 202.6h98.5M22.2 209.0h98.5M22.2 215.4h98.5M22.2 221.8h98.5M22.2 228.2h98.5M22.2 234.6h98.5M22.2 241.0h98.5M22.2 247.4h98.5M22.2 253.8h98.5M22.2 260.2h98.5" stroke="#e3e3e3" stroke-width="1" fill="none"/><polyline points="23.3,224.2 26.7,234.3 31.4,235.9 32.9,240.9 34.9,227.4 36.6,225.7 38.9,229.1 41.2,234.3 43.0,234.9 44.3,240.5 46.4,240.1 48.8,229.1 52.2,216.4 54.5,207.1 56.3,204.6 58.0,210.6 60.3,215.8 65.0,218.1 69.0,222.0 70.8,215.2 74.2,212.6 77.1,215.8 79.1,217.0 81.8,227.7 83.5,220.4 84.4,221.6 86.4,212.9 87.3,214.7 89.5,202.5 91.0,207.1 92.8,215.2 95.1,221.3 97.4,222.4 99.4,226.8 101.7,248.2 103.4,229.7 105.5,244.2 106.1,240.7 107.0,248.8 108.1,233.8 109.0,247.7 110.1,241.3 111.5,249.8 113.0,244.2 114.2,250.0 115.4,242.5 116.5,248.8 117.9,241.3 118.8,247.7 119.6,260.6" fill="none" stroke="#1f8a2f" stroke-width="1.1" stroke-linejoin="round"/><rect x="22.2" y="196.1" width="98.5" height="65.2" fill="none" stroke="#bdbdbd" stroke-width="1"/><path d="M26 211.3H33" stroke="#1b1b1b" stroke-width="1"/><path d="M14.3 420.1V379.70000000000005H94.6L123.3 350.1H326.3V420.1Z" fill="#e5e5e5" stroke="#b4b4b4" stroke-width="1.5" stroke-linejoin="round"/><path d="M14.3 420.1V379.70000000000005M326.3 350.1V420.1" stroke="#8f8f8f" stroke-width="1" fill="none"/><rect x="127.6" y="357.40000000000003" width="162.7" height="23" fill="#fff"/><circle cx="308.1" cy="369.40000000000003" r="6.700" fill="url(#delg)" stroke="#b40000" stroke-width="1.3"/><path d="M305.0 366.3L311.20000000000005 372.50000000000006M311.20000000000005 366.3L305.0 372.50000000000006" stroke="#fff" stroke-width="2.1" stroke-linecap="round"/><clipPath id="tc3"><rect x="22.2" y="389.70000000000005" width="98.5" height="22.3"/></clipPath><rect x="22.2" y="389.70000000000005" width="98.5" height="22.3" fill="#fff"/><path d="M37.3 389.70000000000005v22.3M48.3 389.70000000000005v22.3M56.4 389.70000000000005v22.3M63.3 389.70000000000005v22.3M68.5 389.70000000000005v22.3M73.8 389.70000000000005v22.3M78.4 389.70000000000005v22.3M81.9 389.70000000000005v22.3M107.3 389.70000000000005v22.3M22.2 397.3h98.5M22.2 406.3h98.5" stroke="#e3e3e3" stroke-width="1" fill="none"/><polyline points="56.5,409.7 57.2,407.9 58.0,409.7" fill="none" stroke="#1478e6" stroke-width="1.2" stroke-linejoin="round" clip-path="url(#tc3)"/><polyline points="62.2,409.7 66.2,409.2 68.2,409.7" fill="none" stroke="#1478e6" stroke-width="1.2" stroke-linejoin="round" clip-path="url(#tc3)"/><polyline points="71.2,409.7 74.2,407.2 78.2,405.7 80.2,406.2 81.7,409.7" fill="none" stroke="#1478e6" stroke-width="1.2" stroke-linejoin="round" clip-path="url(#tc3)"/><polyline points="83.2,409.7 85.7,408.7 86.6,403.2 87.6,409.2 88.5,409.7 89.7,399.2 90.5,398.2 91.7,402.7 93.7,409.7" fill="none" stroke="#1478e6" stroke-width="1.2" stroke-linejoin="round" clip-path="url(#tc3)"/><path d="M22.2 412.00000000000006V389.70000000000005H120.7" fill="none" stroke="#bdbdbd" stroke-width="1"/><path d="M26 404.6H33" stroke="#1b1b1b" stroke-width="1"/><path d="M14.3 451.13V410.73H94.6L123.3 381.13H326.3V451.13Z" fill="#e5e5e5" stroke="#b4b4b4" stroke-width="1.5" stroke-linejoin="round"/><path d="M14.3 451.13V410.73M326.3 381.13V451.13" stroke="#8f8f8f" stroke-width="1" fill="none"/><rect x="127.6" y="388.43" width="162.7" height="23" fill="#fff"/><circle cx="308.1" cy="400.43" r="6.700" fill="url(#delg)" stroke="#b40000" stroke-width="1.3"/><path d="M305.0 397.33L311.20000000000005 403.53000000000003M311.20000000000005 397.33L305.0 403.53000000000003" stroke="#fff" stroke-width="2.1" stroke-linecap="round"/><clipPath id="tc4"><rect x="22.2" y="420.73" width="98.5" height="22.3"/></clipPath><rect x="22.2" y="420.73" width="98.5" height="22.3" fill="#fff"/><path d="M37.3 420.73v22.3M48.3 420.73v22.3M56.4 420.73v22.3M63.3 420.73v22.3M68.5 420.73v22.3M73.8 420.73v22.3M78.4 420.73v22.3M81.9 420.73v22.3M107.3 420.73v22.3M22.2 428.3h98.5M22.2 437.3h98.5" stroke="#e3e3e3" stroke-width="1" fill="none"/><polyline points="56.5,440.7 57.2,438.9 58.0,440.7" fill="none" stroke="#e8900c" stroke-width="1.2" stroke-linejoin="round" clip-path="url(#tc4)"/><polyline points="62.2,440.7 66.2,440.2 68.2,440.7" fill="none" stroke="#e8900c" stroke-width="1.2" stroke-linejoin="round" clip-path="url(#tc4)"/><polyline points="71.2,440.7 74.2,438.2 78.2,436.7 80.2,437.2 81.7,440.7" fill="none" stroke="#e8900c" stroke-width="1.2" stroke-linejoin="round" clip-path="url(#tc4)"/><polyline points="83.2,440.7 85.7,439.7 86.6,434.2 87.6,440.2 88.5,440.7 89.7,430.2 90.5,429.2 91.7,433.7 93.7,440.7" fill="none" stroke="#e8900c" stroke-width="1.2" stroke-linejoin="round" clip-path="url(#tc4)"/><path d="M22.2 443.03000000000003V420.73H120.7" fill="none" stroke="#bdbdbd" stroke-width="1"/><path d="M26 435.6H33" stroke="#1b1b1b" stroke-width="1"/><path d="M14.3 482.1600000000001V441.7600000000001H94.6L123.3 412.1600000000001H326.3V482.1600000000001Z" fill="#e5e5e5" stroke="#b4b4b4" stroke-width="1.5" stroke-linejoin="round"/><path d="M14.3 482.1600000000001V441.7600000000001M326.3 412.1600000000001V482.1600000000001" stroke="#8f8f8f" stroke-width="1" fill="none"/><rect x="127.6" y="419.4600000000001" width="162.7" height="23" fill="#fff"/><circle cx="308.1" cy="431.4600000000001" r="6.700" fill="url(#delg)" stroke="#b40000" stroke-width="1.3"/><path d="M305.0 428.36000000000007L311.20000000000005 434.5600000000001M311.20000000000005 428.36000000000007L305.0 434.5600000000001" stroke="#fff" stroke-width="2.1" stroke-linecap="round"/><clipPath id="tc5"><rect x="22.2" y="451.7600000000001" width="98.5" height="22.3"/></clipPath><rect x="22.2" y="451.7600000000001" width="98.5" height="22.3" fill="#fff"/><path d="M37.3 451.7600000000001v22.3M48.3 451.7600000000001v22.3M56.4 451.7600000000001v22.3M63.3 451.7600000000001v22.3M68.5 451.7600000000001v22.3M73.8 451.7600000000001v22.3M78.4 451.7600000000001v22.3M81.9 451.7600000000001v22.3M107.3 451.7600000000001v22.3M22.2 459.4h98.5M22.2 468.4h98.5" stroke="#e3e3e3" stroke-width="1" fill="none"/><polyline points="22.2,472.3 26.2,471.3 28.2,472.3" fill="none" stroke="#1ea0d2" stroke-width="1.2" stroke-linejoin="round" clip-path="url(#tc5)"/><polyline points="34.2,472.3 37.2,470.8 40.2,471.3 43.2,467.8 47.2,467.3 50.2,462.8 53.2,460.3 55.7,464.8 59.2,470.8 60.7,472.3" fill="none" stroke="#1ea0d2" stroke-width="1.2" stroke-linejoin="round" clip-path="url(#tc5)"/><path d="M22.2 474.0600000000001V451.7600000000001H120.7" fill="none" stroke="#bdbdbd" stroke-width="1"/><path d="M26 466.7H33" stroke="#1b1b1b" stroke-width="1"/><path d="M14.3 513.19V472.7900000000001H94.6L123.3 443.19000000000005H326.3V513.19Z" fill="#e5e5e5" stroke="#b4b4b4" stroke-width="1.5" stroke-linejoin="round"/><path d="M14.3 513.19V472.7900000000001M326.3 443.19000000000005V513.19" stroke="#8f8f8f" stroke-width="1" fill="none"/><rect x="127.6" y="450.49000000000007" width="162.7" height="23" fill="#fff"/><circle cx="308.1" cy="462.49000000000007" r="6.700" fill="url(#delg)" stroke="#b40000" stroke-width="1.3"/><path d="M305.0 459.39000000000004L311.20000000000005 465.5900000000001M311.20000000000005 459.39000000000004L305.0 465.5900000000001" stroke="#fff" stroke-width="2.1" stroke-linecap="round"/><clipPath id="tc6"><rect x="22.2" y="482.7900000000001" width="98.5" height="22.3"/></clipPath><rect x="22.2" y="482.7900000000001" width="98.5" height="22.3" fill="#fff"/><path d="M37.3 482.7900000000001v22.3M48.3 482.7900000000001v22.3M56.4 482.7900000000001v22.3M63.3 482.7900000000001v22.3M68.5 482.7900000000001v22.3M73.8 482.7900000000001v22.3M78.4 482.7900000000001v22.3M81.9 482.7900000000001v22.3M107.3 482.7900000000001v22.3M22.2 490.4h98.5M22.2 499.4h98.5" stroke="#e3e3e3" stroke-width="1" fill="none"/><polyline points="50.2,503.3 52.2,496.8 54.2,491.8 56.2,492.8 58.2,497.8 60.2,502.3 64.2,503.3" fill="none" stroke="#6e6ee0" stroke-width="1.2" stroke-linejoin="round" clip-path="url(#tc6)"/><polyline points="68.2,503.3 71.2,501.3 74.2,501.8 76.2,503.3" fill="none" stroke="#6e6ee0" stroke-width="1.2" stroke-linejoin="round" clip-path="url(#tc6)"/><path d="M22.2 505.0900000000001V482.7900000000001H120.7" fill="none" stroke="#bdbdbd" stroke-width="1"/><path d="M26 497.7H33" stroke="#1b1b1b" stroke-width="1"/><path d="M14.3 544.22V503.82000000000005H94.6L123.3 474.22H326.3V544.22Z" fill="#e5e5e5" stroke="#b4b4b4" stroke-width="1.5" stroke-linejoin="round"/><path d="M14.3 544.22V503.82000000000005M326.3 474.22V544.22" stroke="#8f8f8f" stroke-width="1" fill="none"/><rect x="127.6" y="481.52000000000004" width="162.7" height="23" fill="#fff"/><circle cx="308.1" cy="493.52000000000004" r="6.700" fill="url(#delg)" stroke="#b40000" stroke-width="1.3"/><path d="M305.0 490.42L311.20000000000005 496.62000000000006M311.20000000000005 490.42L305.0 496.62000000000006" stroke="#fff" stroke-width="2.1" stroke-linecap="round"/><clipPath id="tc7"><rect x="22.2" y="513.82" width="98.5" height="22.3"/></clipPath><rect x="22.2" y="513.82" width="98.5" height="22.3" fill="#fff"/><path d="M37.3 513.82v22.3M48.3 513.82v22.3M56.4 513.82v22.3M63.3 513.82v22.3M68.5 513.82v22.3M73.8 513.82v22.3M78.4 513.82v22.3M81.9 513.82v22.3M107.3 513.82v22.3M22.2 521.4h98.5M22.2 530.4h98.5" stroke="#e3e3e3" stroke-width="1" fill="none"/><polyline points="48.2,534.3 51.2,527.8 53.7,522.8 55.2,522.8 58.2,528.8 61.2,534.3" fill="none" stroke="#e23cd6" stroke-width="1.2" stroke-linejoin="round" clip-path="url(#tc7)"/><polyline points="73.2,534.3 75.2,533.8 76.2,534.3" fill="none" stroke="#e23cd6" stroke-width="1.2" stroke-linejoin="round" clip-path="url(#tc7)"/><path d="M22.2 536.12V513.82H120.7" fill="none" stroke="#bdbdbd" stroke-width="1"/><path d="M26 528.7H33" stroke="#1b1b1b" stroke-width="1"/><path d="M14.3 575.25V534.85H94.6L123.3 505.25H326.3V575.25Z" fill="#e5e5e5" stroke="#b4b4b4" stroke-width="1.5" stroke-linejoin="round"/><path d="M14.3 575.25V534.85M326.3 505.25V575.25" stroke="#8f8f8f" stroke-width="1" fill="none"/><rect x="127.6" y="512.55" width="162.7" height="23" fill="#fff"/><circle cx="308.1" cy="524.55" r="6.700" fill="url(#delg)" stroke="#b40000" stroke-width="1.3"/><path d="M305.0 521.4499999999999L311.20000000000005 527.65M311.20000000000005 521.4499999999999L305.0 527.65" stroke="#fff" stroke-width="2.1" stroke-linecap="round"/><clipPath id="tc8"><rect x="22.2" y="544.85" width="98.5" height="22.3"/></clipPath><rect x="22.2" y="544.85" width="98.5" height="22.3" fill="#fff"/><path d="M33.2 544.85v22.3M39.7 544.85v22.3M44.2 544.85v22.3M47.7 544.85v22.3M50.7 544.85v22.3M53.2 544.85v22.3M55.2 544.85v22.3M57.2 544.85v22.3M68.7 544.85v22.3M75.2 544.85v22.3M79.7 544.85v22.3M83.2 544.85v22.3M86.2 544.85v22.3M88.7 544.85v22.3M90.7 544.85v22.3M92.7 544.85v22.3M104.2 544.85v22.3M110.7 544.85v22.3M115.2 544.85v22.3M22.2 552.5h98.5M22.2 561.5h98.5" stroke="#e3e3e3" stroke-width="1" fill="none"/><polyline points="35.2,565.4 37.2,563.9 39.2,558.9 40.2,552.9 41.2,558.9 42.2,563.9 44.2,565.4" fill="none" stroke="#d2a400" stroke-width="1.2" stroke-linejoin="round" clip-path="url(#tc8)"/><polyline points="49.2,565.4 50.7,563.4 52.2,565.4" fill="none" stroke="#d2a400" stroke-width="1.2" stroke-linejoin="round" clip-path="url(#tc8)"/><polyline points="55.2,565.4 56.2,564.4 57.2,565.4" fill="none" stroke="#d2a400" stroke-width="1.2" stroke-linejoin="round" clip-path="url(#tc8)"/><polyline points="60.2,565.4 61.7,562.9 63.2,565.4" fill="none" stroke="#d2a400" stroke-width="1.2" stroke-linejoin="round" clip-path="url(#tc8)"/><polyline points="71.2,565.4 73.2,564.4 75.2,565.4" fill="none" stroke="#d2a400" stroke-width="1.2" stroke-linejoin="round" clip-path="url(#tc8)"/><polyline points="86.2,565.4 90.2,564.9 92.2,565.4" fill="none" stroke="#d2a400" stroke-width="1.2" stroke-linejoin="round" clip-path="url(#tc8)"/><path d="M22.2 567.15V544.85H120.7" fill="none" stroke="#bdbdbd" stroke-width="1"/><path d="M26 559.8H33" stroke="#1b1b1b" stroke-width="1"/><path d="M14.3 606.28V565.88H94.6L123.3 536.28H326.3V606.28Z" fill="#e5e5e5" stroke="#b4b4b4" stroke-width="1.5" stroke-linejoin="round"/><path d="M14.3 606.28V565.88M326.3 536.28V606.28" stroke="#8f8f8f" stroke-width="1" fill="none"/><rect x="127.6" y="543.5799999999999" width="162.7" height="23" fill="#fff"/><circle cx="308.1" cy="555.5799999999999" r="6.700" fill="url(#delg)" stroke="#b40000" stroke-width="1.3"/><path d="M305.0 552.4799999999999L311.20000000000005 558.68M311.20000000000005 552.4799999999999L305.0 558.68" stroke="#fff" stroke-width="2.1" stroke-linecap="round"/><clipPath id="tc9"><rect x="22.2" y="575.88" width="98.5" height="22.3"/></clipPath><rect x="22.2" y="575.88" width="98.5" height="22.3" fill="#fff"/><path d="M33.2 575.88v22.3M39.7 575.88v22.3M44.2 575.88v22.3M47.7 575.88v22.3M50.7 575.88v22.3M53.2 575.88v22.3M55.2 575.88v22.3M57.2 575.88v22.3M68.7 575.88v22.3M75.2 575.88v22.3M79.7 575.88v22.3M83.2 575.88v22.3M86.2 575.88v22.3M88.7 575.88v22.3M90.7 575.88v22.3M92.7 575.88v22.3M104.2 575.88v22.3M110.7 575.88v22.3M115.2 575.88v22.3M22.2 583.5h98.5M22.2 592.5h98.5" stroke="#e3e3e3" stroke-width="1" fill="none"/><polyline points="23.7,596.4 25.2,591.9 26.2,589.9 27.7,596.4" fill="none" stroke="#1ec896" stroke-width="1.2" stroke-linejoin="round" clip-path="url(#tc9)"/><polyline points="37.7,596.4 39.2,587.9 40.2,583.9 41.7,588.9 43.2,596.4" fill="none" stroke="#1ec896" stroke-width="1.2" stroke-linejoin="round" clip-path="url(#tc9)"/><polyline points="48.2,596.4 50.2,595.7 51.7,596.4" fill="none" stroke="#1ec896" stroke-width="1.2" stroke-linejoin="round" clip-path="url(#tc9)"/><path d="M22.2 598.18V575.88H120.7" fill="none" stroke="#bdbdbd" stroke-width="1"/><path d="M26 590.8H33" stroke="#1b1b1b" stroke-width="1"/><path d="M14.3 637.3100000000001V596.9100000000001H94.6L123.3 567.3100000000001H326.3V637.3100000000001Z" fill="#e5e5e5" stroke="#b4b4b4" stroke-width="1.5" stroke-linejoin="round"/><path d="M14.3 637.3100000000001V596.9100000000001M326.3 567.3100000000001V637.3100000000001" stroke="#8f8f8f" stroke-width="1" fill="none"/><rect x="127.6" y="574.61" width="162.7" height="23" fill="#fff"/><circle cx="308.1" cy="586.61" r="6.700" fill="url(#delg)" stroke="#b40000" stroke-width="1.3"/><path d="M305.0 583.51L311.20000000000005 589.71M311.20000000000005 583.51L305.0 589.71" stroke="#fff" stroke-width="2.1" stroke-linecap="round"/><clipPath id="tc10"><rect x="22.2" y="606.9100000000001" width="98.5" height="22.3"/></clipPath><rect x="22.2" y="606.9100000000001" width="98.5" height="22.3" fill="#fff"/><path d="M33.2 606.9100000000001v22.3M39.7 606.9100000000001v22.3M44.2 606.9100000000001v22.3M47.7 606.9100000000001v22.3M50.7 606.9100000000001v22.3M53.2 606.9100000000001v22.3M55.2 606.9100000000001v22.3M57.2 606.9100000000001v22.3M68.7 606.9100000000001v22.3M75.2 606.9100000000001v22.3M79.7 606.9100000000001v22.3M83.2 606.9100000000001v22.3M86.2 606.9100000000001v22.3M88.7 606.9100000000001v22.3M90.7 606.9100000000001v22.3M92.7 606.9100000000001v22.3M104.2 606.9100000000001v22.3M110.7 606.9100000000001v22.3M115.2 606.9100000000001v22.3M22.2 614.5h98.5M22.2 623.5h98.5" stroke="#e3e3e3" stroke-width="1" fill="none"/><polyline points="23.7,627.4 25.2,622.9 26.2,620.9 27.7,627.4" fill="none" stroke="#a850e6" stroke-width="1.2" stroke-linejoin="round" clip-path="url(#tc10)"/><polyline points="37.7,627.4 39.2,618.9 40.2,614.9 41.7,619.9 43.2,627.4" fill="none" stroke="#a850e6" stroke-width="1.2" stroke-linejoin="round" clip-path="url(#tc10)"/><polyline points="48.2,627.4 50.2,626.7 51.7,627.4" fill="none" stroke="#a850e6" stroke-width="1.2" stroke-linejoin="round" clip-path="url(#tc10)"/><path d="M22.2 629.21V606.9100000000001H120.7" fill="none" stroke="#bdbdbd" stroke-width="1"/><path d="M32.5 621.8H39" stroke="#1b1b1b" stroke-width="1"/><path d="M14.3 668.34V627.94H94.6L123.3 598.34H326.3V668.34Z" fill="#e5e5e5" stroke="#b4b4b4" stroke-width="1.5" stroke-linejoin="round"/><path d="M14.3 668.34V627.94M326.3 598.34V668.34" stroke="#8f8f8f" stroke-width="1" fill="none"/><rect x="127.6" y="605.64" width="162.7" height="23" fill="#fff"/><circle cx="308.1" cy="617.64" r="6.700" fill="url(#delg)" stroke="#b40000" stroke-width="1.3"/><path d="M305.0 614.54L311.20000000000005 620.74M311.20000000000005 614.54L305.0 620.74" stroke="#fff" stroke-width="2.1" stroke-linecap="round"/><clipPath id="tc11"><rect x="22.2" y="637.94" width="98.5" height="22.3"/></clipPath><rect x="22.2" y="637.94" width="98.5" height="22.3" fill="#fff"/><path d="M33.2 637.94v22.3M39.7 637.94v22.3M44.2 637.94v22.3M47.7 637.94v22.3M50.7 637.94v22.3M53.2 637.94v22.3M55.2 637.94v22.3M57.2 637.94v22.3M68.7 637.94v22.3M75.2 637.94v22.3M79.7 637.94v22.3M83.2 637.94v22.3M86.2 637.94v22.3M88.7 637.94v22.3M90.7 637.94v22.3M92.7 637.94v22.3M104.2 637.94v22.3M110.7 637.94v22.3M115.2 637.94v22.3M22.2 645.5h98.5M22.2 654.5h98.5" stroke="#e3e3e3" stroke-width="1" fill="none"/><polyline points="36.2,658.4 37.2,650.9 38.2,646.4 39.2,650.9 40.7,656.9 42.2,658.4" fill="none" stroke="#e02020" stroke-width="1.2" stroke-linejoin="round" clip-path="url(#tc11)"/><polyline points="47.2,658.4 49.2,657.4 50.7,658.4" fill="none" stroke="#e02020" stroke-width="1.2" stroke-linejoin="round" clip-path="url(#tc11)"/><polyline points="58.2,658.4 60.2,657.7 61.7,658.4" fill="none" stroke="#e02020" stroke-width="1.2" stroke-linejoin="round" clip-path="url(#tc11)"/><path d="M22.2 660.24V637.94H120.7" fill="none" stroke="#bdbdbd" stroke-width="1"/><path d="M14.3 699.37V658.97H94.6L123.3 629.37H326.3V699.37Z" fill="#e5e5e5" stroke="#b4b4b4" stroke-width="1.5" stroke-linejoin="round"/><path d="M14.3 699.37V658.97M326.3 629.37V699.37" stroke="#8f8f8f" stroke-width="1" fill="none"/><rect x="127.6" y="636.67" width="162.7" height="23" fill="#fff"/><circle cx="308.1" cy="648.67" r="6.700" fill="url(#delg)" stroke="#b40000" stroke-width="1.3"/><path d="M305.0 645.5699999999999L311.20000000000005 651.77M311.20000000000005 645.5699999999999L305.0 651.77" stroke="#fff" stroke-width="2.1" stroke-linecap="round"/><clipPath id="tc12"><rect x="22.2" y="668.97" width="98.5" height="22.3"/></clipPath><rect x="22.2" y="668.97" width="98.5" height="22.3" fill="#fff"/><path d="M33.2 668.97v22.3M39.7 668.97v22.3M44.2 668.97v22.3M47.7 668.97v22.3M50.7 668.97v22.3M53.2 668.97v22.3M55.2 668.97v22.3M57.2 668.97v22.3M68.7 668.97v22.3M75.2 668.97v22.3M79.7 668.97v22.3M83.2 668.97v22.3M86.2 668.97v22.3M88.7 668.97v22.3M90.7 668.97v22.3M92.7 668.97v22.3M104.2 668.97v22.3M110.7 668.97v22.3M115.2 668.97v22.3M22.2 676.6h98.5M22.2 685.6h98.5" stroke="#e3e3e3" stroke-width="1" fill="none"/><polyline points="33.2,689.5 34.7,686.0 36.2,688.0 37.7,680.0 38.7,675.5 39.7,683.0 41.2,687.0 42.2,689.5" fill="none" stroke="#1f8a2f" stroke-width="1.2" stroke-linejoin="round" clip-path="url(#tc12)"/><polyline points="45.2,689.5 46.2,687.5 47.2,689.5 50.2,689.5 51.2,688.0 52.2,689.5 57.2,689.5 58.2,688.0 59.2,689.5 60.2,687.0 61.2,689.5" fill="none" stroke="#1f8a2f" stroke-width="1.2" stroke-linejoin="round" clip-path="url(#tc12)"/><polyline points="70.2,689.5 72.2,688.5 74.2,689.5 82.2,689.5 84.2,688.8 86.2,689.5 88.2,688.5 90.2,689.5" fill="none" stroke="#1f8a2f" stroke-width="1.2" stroke-linejoin="round" clip-path="url(#tc12)"/><path d="M22.2 691.27V668.97H120.7" fill="none" stroke="#bdbdbd" stroke-width="1"/><path d="M14.3 730.4000000000001V690.0000000000001H94.6L123.3 660.4000000000001H326.3V730.4000000000001Z" fill="#e5e5e5" stroke="#b4b4b4" stroke-width="1.5" stroke-linejoin="round"/><path d="M14.3 730.4000000000001V690.0000000000001M326.3 660.4000000000001V730.4000000000001" stroke="#8f8f8f" stroke-width="1" fill="none"/><rect x="127.6" y="667.7" width="162.7" height="23" fill="#fff"/><circle cx="308.1" cy="679.7" r="6.700" fill="url(#delg)" stroke="#b40000" stroke-width="1.3"/><path d="M305.0 676.6L311.20000000000005 682.8000000000001M311.20000000000005 676.6L305.0 682.8000000000001" stroke="#fff" stroke-width="2.1" stroke-linecap="round"/><clipPath id="tc13"><rect x="22.2" y="700.0000000000001" width="98.5" height="22.3"/></clipPath><rect x="22.2" y="700.0000000000001" width="98.5" height="22.3" fill="#fff"/><path d="M33.2 700.0000000000001v22.3M39.7 700.0000000000001v22.3M44.2 700.0000000000001v22.3M47.7 700.0000000000001v22.3M50.7 700.0000000000001v22.3M53.2 700.0000000000001v22.3M55.2 700.0000000000001v22.3M57.2 700.0000000000001v22.3M68.7 700.0000000000001v22.3M75.2 700.0000000000001v22.3M79.7 700.0000000000001v22.3M83.2 700.0000000000001v22.3M86.2 700.0000000000001v22.3M88.7 700.0000000000001v22.3M90.7 700.0000000000001v22.3M92.7 700.0000000000001v22.3M104.2 700.0000000000001v22.3M110.7 700.0000000000001v22.3M115.2 700.0000000000001v22.3M22.2 707.6h98.5M22.2 716.6h98.5" stroke="#e3e3e3" stroke-width="1" fill="none"/><polyline points="36.2,720.5 37.2,712.0 38.2,707.0 39.7,713.0 41.2,719.5 42.2,720.5" fill="none" stroke="#1478e6" stroke-width="1.2" stroke-linejoin="round" clip-path="url(#tc13)"/><polyline points="48.7,720.5 49.7,717.0 50.7,720.5" fill="none" stroke="#1478e6" stroke-width="1.2" stroke-linejoin="round" clip-path="url(#tc13)"/><polyline points="60.2,720.5 64.2,720.0 66.2,720.5" fill="none" stroke="#1478e6" stroke-width="1.2" stroke-linejoin="round" clip-path="url(#tc13)"/><polyline points="74.2,720.5 77.2,720.0 79.2,720.5" fill="none" stroke="#1478e6" stroke-width="1.2" stroke-linejoin="round" clip-path="url(#tc13)"/><path d="M22.2 722.3000000000001V700.0000000000001H120.7" fill="none" stroke="#bdbdbd" stroke-width="1"/><path d="M14.3 761.4300000000001V721.0300000000001H94.6L123.3 691.4300000000001H326.3V761.4300000000001Z" fill="#e5e5e5" stroke="#b4b4b4" stroke-width="1.5" stroke-linejoin="round"/><path d="M14.3 761.4300000000001V721.0300000000001M326.3 691.4300000000001V761.4300000000001" stroke="#8f8f8f" stroke-width="1" fill="none"/><rect x="127.6" y="698.73" width="162.7" height="23" fill="#fff"/><circle cx="308.1" cy="710.73" r="6.700" fill="url(#delg)" stroke="#b40000" stroke-width="1.3"/><path d="M305.0 707.63L311.20000000000005 713.83M311.20000000000005 707.63L305.0 713.83" stroke="#fff" stroke-width="2.1" stroke-linecap="round"/><clipPath id="tc14"><rect x="22.2" y="731.0300000000001" width="98.5" height="22.3"/></clipPath><rect x="22.2" y="731.0300000000001" width="98.5" height="22.3" fill="#fff"/><path d="M33.2 731.0300000000001v22.3M39.7 731.0300000000001v22.3M44.2 731.0300000000001v22.3M47.7 731.0300000000001v22.3M50.7 731.0300000000001v22.3M53.2 731.0300000000001v22.3M55.2 731.0300000000001v22.3M57.2 731.0300000000001v22.3M68.7 731.0300000000001v22.3M75.2 731.0300000000001v22.3M79.7 731.0300000000001v22.3M83.2 731.0300000000001v22.3M86.2 731.0300000000001v22.3M88.7 731.0300000000001v22.3M90.7 731.0300000000001v22.3M92.7 731.0300000000001v22.3M104.2 731.0300000000001v22.3M110.7 731.0300000000001v22.3M115.2 731.0300000000001v22.3M22.2 738.6h98.5M22.2 747.6h98.5" stroke="#e3e3e3" stroke-width="1" fill="none"/><polyline points="32.7,751.5 34.2,746.5 35.7,745.5 37.2,751.5" fill="none" stroke="#d2a400" stroke-width="1.2" stroke-linejoin="round" clip-path="url(#tc14)"/><polyline points="47.7,751.5 48.7,746.5 49.7,751.5" fill="none" stroke="#d2a400" stroke-width="1.2" stroke-linejoin="round" clip-path="url(#tc14)"/><polyline points="42.2,751.5 43.7,750.8 45.2,751.5" fill="none" stroke="#d2a400" stroke-width="1.2" stroke-linejoin="round" clip-path="url(#tc14)"/><path d="M22.2 753.33V731.0300000000001H120.7" fill="none" stroke="#bdbdbd" stroke-width="1"/><path d="M14.3 792.46V752.0600000000001H94.6L123.3 722.46H326.3V792.46Z" fill="#e5e5e5" stroke="#b4b4b4" stroke-width="1.5" stroke-linejoin="round"/><path d="M14.3 792.46V752.0600000000001M326.3 722.46V792.46" stroke="#8f8f8f" stroke-width="1" fill="none"/><rect x="127.6" y="729.76" width="162.7" height="23" fill="#fff"/><circle cx="308.1" cy="741.76" r="6.700" fill="url(#delg)" stroke="#b40000" stroke-width="1.3"/><path d="M305.0 738.66L311.20000000000005 744.86M311.20000000000005 738.66L305.0 744.86" stroke="#fff" stroke-width="2.1" stroke-linecap="round"/><clipPath id="tc15"><rect x="22.2" y="762.0600000000001" width="98.5" height="22.3"/></clipPath><rect x="22.2" y="762.0600000000001" width="98.5" height="22.3" fill="#fff"/><path d="M33.2 762.0600000000001v22.3M39.7 762.0600000000001v22.3M44.2 762.0600000000001v22.3M47.7 762.0600000000001v22.3M50.7 762.0600000000001v22.3M53.2 762.0600000000001v22.3M55.2 762.0600000000001v22.3M57.2 762.0600000000001v22.3M68.7 762.0600000000001v22.3M75.2 762.0600000000001v22.3M79.7 762.0600000000001v22.3M83.2 762.0600000000001v22.3M86.2 762.0600000000001v22.3M88.7 762.0600000000001v22.3M90.7 762.0600000000001v22.3M92.7 762.0600000000001v22.3M104.2 762.0600000000001v22.3M110.7 762.0600000000001v22.3M115.2 762.0600000000001v22.3M22.2 769.7h98.5M22.2 778.7h98.5" stroke="#e3e3e3" stroke-width="1" fill="none"/><polyline points="32.7,782.6 34.2,777.6 35.7,776.6 37.2,782.6" fill="none" stroke="#b040e0" stroke-width="1.2" stroke-linejoin="round" clip-path="url(#tc15)"/><polyline points="47.7,782.6 48.7,777.6 49.7,782.6" fill="none" stroke="#b040e0" stroke-width="1.2" stroke-linejoin="round" clip-path="url(#tc15)"/><polyline points="42.2,782.6 43.7,781.9 45.2,782.6" fill="none" stroke="#b040e0" stroke-width="1.2" stroke-linejoin="round" clip-path="url(#tc15)"/><path d="M22.2 784.36V762.0600000000001H120.7" fill="none" stroke="#bdbdbd" stroke-width="1"/><path d="M14.3 823.49V783.09H94.6L123.3 753.49H326.3V823.49Z" fill="#e5e5e5" stroke="#b4b4b4" stroke-width="1.5" stroke-linejoin="round"/><path d="M14.3 823.49V783.09M326.3 753.49V823.49" stroke="#8f8f8f" stroke-width="1" fill="none"/><rect x="127.6" y="760.79" width="162.7" height="23" fill="#fff"/><circle cx="308.1" cy="772.79" r="6.700" fill="url(#delg)" stroke="#b40000" stroke-width="1.3"/><path d="M305.0 769.6899999999999L311.20000000000005 775.89M311.20000000000005 769.6899999999999L305.0 775.89" stroke="#fff" stroke-width="2.1" stroke-linecap="round"/><clipPath id="tc16"><rect x="22.2" y="793.09" width="98.5" height="22.3"/></clipPath><rect x="22.2" y="793.09" width="98.5" height="22.3" fill="#fff"/><path d="M33.2 793.09v22.3M39.7 793.09v22.3M44.2 793.09v22.3M47.7 793.09v22.3M50.7 793.09v22.3M53.2 793.09v22.3M55.2 793.09v22.3M57.2 793.09v22.3M68.7 793.09v22.3M75.2 793.09v22.3M79.7 793.09v22.3M83.2 793.09v22.3M86.2 793.09v22.3M88.7 793.09v22.3M90.7 793.09v22.3M92.7 793.09v22.3M104.2 793.09v22.3M110.7 793.09v22.3M115.2 793.09v22.3M22.2 800.7h98.5M22.2 809.7h98.5" stroke="#e3e3e3" stroke-width="1" fill="none"/><polyline points="22.7,795.1 23.7,803.1 25.2,813.6" fill="none" stroke="#1ea0d2" stroke-width="1.2" stroke-linejoin="round" clip-path="url(#tc16)"/><polyline points="33.2,813.6 34.7,808.6 35.7,807.6 37.2,813.6" fill="none" stroke="#1ea0d2" stroke-width="1.2" stroke-linejoin="round" clip-path="url(#tc16)"/><polyline points="47.7,813.6 48.7,811.6 49.7,813.6" fill="none" stroke="#1ea0d2" stroke-width="1.2" stroke-linejoin="round" clip-path="url(#tc16)"/><path d="M22.2 815.39V793.09H120.7" fill="none" stroke="#bdbdbd" stroke-width="1"/><path d="M14.3 854.52V814.12H94.6L123.3 784.52H326.3V854.52Z" fill="#e5e5e5" stroke="#b4b4b4" stroke-width="1.5" stroke-linejoin="round"/><path d="M14.3 854.52V814.12M326.3 784.52V854.52" stroke="#8f8f8f" stroke-width="1" fill="none"/><rect x="127.6" y="791.8199999999999" width="162.7" height="23" fill="#fff"/><circle cx="308.1" cy="803.8199999999999" r="6.700" fill="url(#delg)" stroke="#b40000" stroke-width="1.3"/><path d="M305.0 800.7199999999999L311.20000000000005 806.92M311.20000000000005 800.7199999999999L305.0 806.92" stroke="#fff" stroke-width="2.1" stroke-linecap="round"/><clipPath id="tc17"><rect x="22.2" y="824.12" width="98.5" height="22.3"/></clipPath><rect x="22.2" y="824.12" width="98.5" height="22.3" fill="#fff"/><path d="M33.2 824.12v22.3M39.7 824.12v22.3M44.2 824.12v22.3M47.7 824.12v22.3M50.7 824.12v22.3M53.2 824.12v22.3M55.2 824.12v22.3M57.2 824.12v22.3M68.7 824.12v22.3M75.2 824.12v22.3M79.7 824.12v22.3M83.2 824.12v22.3M86.2 824.12v22.3M88.7 824.12v22.3M90.7 824.12v22.3M92.7 824.12v22.3M104.2 824.12v22.3M110.7 824.12v22.3M115.2 824.12v22.3M22.2 831.7h98.5M22.2 840.7h98.5" stroke="#e3e3e3" stroke-width="1" fill="none"/><polyline points="22.7,826.1 23.7,834.1 25.2,844.6" fill="none" stroke="#e23cd6" stroke-width="1.2" stroke-linejoin="round" clip-path="url(#tc17)"/><polyline points="33.2,844.6 34.7,839.6 35.7,838.6 37.2,844.6" fill="none" stroke="#e23cd6" stroke-width="1.2" stroke-linejoin="round" clip-path="url(#tc17)"/><polyline points="47.7,844.6 48.7,842.6 49.7,844.6" fill="none" stroke="#e23cd6" stroke-width="1.2" stroke-linejoin="round" clip-path="url(#tc17)"/><path d="M22.2 846.42V824.12H120.7" fill="none" stroke="#bdbdbd" stroke-width="1"/><path d="M14.3 885.5500000000001V845.1500000000001H94.6L123.3 815.5500000000001H326.3V885.5500000000001Z" fill="#e5e5e5" stroke="#b4b4b4" stroke-width="1.5" stroke-linejoin="round"/><path d="M14.3 885.5500000000001V845.1500000000001M326.3 815.5500000000001V885.5500000000001" stroke="#8f8f8f" stroke-width="1" fill="none"/><rect x="127.6" y="822.85" width="162.7" height="23" fill="#fff"/><circle cx="308.1" cy="834.85" r="6.700" fill="url(#delg)" stroke="#b40000" stroke-width="1.3"/><path d="M305.0 831.75L311.20000000000005 837.95M311.20000000000005 831.75L305.0 837.95" stroke="#fff" stroke-width="2.1" stroke-linecap="round"/><clipPath id="tc18"><rect x="22.2" y="855.1500000000001" width="98.5" height="22.3"/></clipPath><rect x="22.2" y="855.1500000000001" width="98.5" height="22.3" fill="#fff"/><path d="M33.2 855.1500000000001v22.3M39.7 855.1500000000001v22.3M44.2 855.1500000000001v22.3M47.7 855.1500000000001v22.3M50.7 855.1500000000001v22.3M53.2 855.1500000000001v22.3M55.2 855.1500000000001v22.3M57.2 855.1500000000001v22.3M68.7 855.1500000000001v22.3M75.2 855.1500000000001v22.3M79.7 855.1500000000001v22.3M83.2 855.1500000000001v22.3M86.2 855.1500000000001v22.3M88.7 855.1500000000001v22.3M90.7 855.1500000000001v22.3M92.7 855.1500000000001v22.3M104.2 855.1500000000001v22.3M110.7 855.1500000000001v22.3M115.2 855.1500000000001v22.3M22.2 862.8h98.5M22.2 871.8h98.5" stroke="#e3e3e3" stroke-width="1" fill="none"/><polyline points="22.7,862.2 24.2,863.7 26.2,862.7 27.7,865.2 28.7,858.2 29.0,867.2" fill="none" stroke="#e02020" stroke-width="1.2" stroke-linejoin="round" clip-path="url(#tc18)"/><polyline points="38.2,864.7 42.2,866.2 44.2,869.2 47.2,870.2 49.2,873.2 52.2,874.7 53.2,875.7" fill="none" stroke="#e02020" stroke-width="1.2" stroke-linejoin="round" clip-path="url(#tc18)"/><polyline points="57.2,875.7 58.7,873.7 60.2,875.7" fill="none" stroke="#e02020" stroke-width="1.2" stroke-linejoin="round" clip-path="url(#tc18)"/><polyline points="67.2,875.7 68.7,873.7 70.2,875.7" fill="none" stroke="#e02020" stroke-width="1.2" stroke-linejoin="round" clip-path="url(#tc18)"/><polyline points="74.2,875.7 77.2,875.2 79.2,875.7" fill="none" stroke="#e02020" stroke-width="1.2" stroke-linejoin="round" clip-path="url(#tc18)"/><path d="M22.2 877.45V855.1500000000001H120.7" fill="none" stroke="#bdbdbd" stroke-width="1"/><path d="M14.3 916.58V876.1800000000001H94.6L123.3 846.58H326.3V916.58Z" fill="#e5e5e5" stroke="#b4b4b4" stroke-width="1.5" stroke-linejoin="round"/><path d="M14.3 916.58V876.1800000000001M326.3 846.58V916.58" stroke="#8f8f8f" stroke-width="1" fill="none"/><rect x="127.6" y="853.88" width="162.7" height="23" fill="#fff"/><circle cx="308.1" cy="865.88" r="6.700" fill="url(#delg)" stroke="#b40000" stroke-width="1.3"/><path d="M305.0 862.78L311.20000000000005 868.98M311.20000000000005 862.78L305.0 868.98" stroke="#fff" stroke-width="2.1" stroke-linecap="round"/><clipPath id="tc19"><rect x="22.2" y="886.1800000000001" width="98.5" height="22.3"/></clipPath><rect x="22.2" y="886.1800000000001" width="98.5" height="22.3" fill="#fff"/><path d="M33.2 886.1800000000001v22.3M39.7 886.1800000000001v22.3M44.2 886.1800000000001v22.3M47.7 886.1800000000001v22.3M50.7 886.1800000000001v22.3M53.2 886.1800000000001v22.3M55.2 886.1800000000001v22.3M57.2 886.1800000000001v22.3M68.7 886.1800000000001v22.3M75.2 886.1800000000001v22.3M79.7 886.1800000000001v22.3M83.2 886.1800000000001v22.3M86.2 886.1800000000001v22.3M88.7 886.1800000000001v22.3M90.7 886.1800000000001v22.3M92.7 886.1800000000001v22.3M104.2 886.1800000000001v22.3M110.7 886.1800000000001v22.3M115.2 886.1800000000001v22.3M22.2 893.8h98.5M22.2 902.8h98.5" stroke="#e3e3e3" stroke-width="1" fill="none"/><polyline points="22.7,893.2 24.2,894.7 26.2,893.7 27.7,896.2 28.7,889.2 29.0,898.2" fill="none" stroke="#1f8a2f" stroke-width="1.2" stroke-linejoin="round" clip-path="url(#tc19)"/><polyline points="38.2,895.7 42.2,897.2 44.2,900.2 47.2,901.2 49.2,904.2 52.2,905.7 53.2,906.7" fill="none" stroke="#1f8a2f" stroke-width="1.2" stroke-linejoin="round" clip-path="url(#tc19)"/><polyline points="57.2,906.7 58.7,904.7 60.2,906.7" fill="none" stroke="#1f8a2f" stroke-width="1.2" stroke-linejoin="round" clip-path="url(#tc19)"/><polyline points="67.2,906.7 68.7,904.7 70.2,906.7" fill="none" stroke="#1f8a2f" stroke-width="1.2" stroke-linejoin="round" clip-path="url(#tc19)"/><polyline points="74.2,906.7 77.2,906.2 79.2,906.7" fill="none" stroke="#1f8a2f" stroke-width="1.2" stroke-linejoin="round" clip-path="url(#tc19)"/><path d="M22.2 908.48V886.1800000000001H120.7" fill="none" stroke="#bdbdbd" stroke-width="1"/><path d="M14.3 947.61V907.21H94.6L123.3 877.61H326.3V947.61Z" fill="#e5e5e5" stroke="#b4b4b4" stroke-width="1.5" stroke-linejoin="round"/><path d="M14.3 947.61V907.21M326.3 877.61V947.61" stroke="#8f8f8f" stroke-width="1" fill="none"/><rect x="127.6" y="884.91" width="162.7" height="23" fill="#fff"/><circle cx="308.1" cy="896.91" r="6.700" fill="url(#delg)" stroke="#b40000" stroke-width="1.3"/><path d="M305.0 893.81L311.20000000000005 900.01M311.20000000000005 893.81L305.0 900.01" stroke="#fff" stroke-width="2.1" stroke-linecap="round"/><clipPath id="tc20"><rect x="22.2" y="917.21" width="98.5" height="22.3"/></clipPath><rect x="22.2" y="917.21" width="98.5" height="22.3" fill="#fff"/><path d="M33.2 917.21v22.3M39.7 917.21v22.3M44.2 917.21v22.3M47.7 917.21v22.3M50.7 917.21v22.3M53.2 917.21v22.3M55.2 917.21v22.3M57.2 917.21v22.3M68.7 917.21v22.3M75.2 917.21v22.3M79.7 917.21v22.3M83.2 917.21v22.3M86.2 917.21v22.3M88.7 917.21v22.3M90.7 917.21v22.3M92.7 917.21v22.3M104.2 917.21v22.3M110.7 917.21v22.3M115.2 917.21v22.3M22.2 924.8h98.5M22.2 933.8h98.5" stroke="#e3e3e3" stroke-width="1" fill="none"/><polyline points="22.7,923.2 24.2,925.2 26.2,928.2" fill="none" stroke="#1478e6" stroke-width="1.2" stroke-linejoin="round" clip-path="url(#tc20)"/><polyline points="38.2,926.7 41.2,927.7 44.2,930.7 46.2,933.7 48.2,935.7 49.7,937.7" fill="none" stroke="#1478e6" stroke-width="1.2" stroke-linejoin="round" clip-path="url(#tc20)"/><polyline points="57.2,937.7 58.7,936.7 60.2,937.7" fill="none" stroke="#1478e6" stroke-width="1.2" stroke-linejoin="round" clip-path="url(#tc20)"/><polyline points="67.2,937.7 68.7,936.7 70.2,937.7" fill="none" stroke="#1478e6" stroke-width="1.2" stroke-linejoin="round" clip-path="url(#tc20)"/><path d="M22.2 939.51V917.21H120.7" fill="none" stroke="#bdbdbd" stroke-width="1"/><path d="M14.3 978.6400000000001V938.2400000000001H94.6L123.3 908.6400000000001H326.3V978.6400000000001Z" fill="#e5e5e5" stroke="#b4b4b4" stroke-width="1.5" stroke-linejoin="round"/><path d="M14.3 978.6400000000001V938.2400000000001M326.3 908.6400000000001V978.6400000000001" stroke="#8f8f8f" stroke-width="1" fill="none"/><rect x="127.6" y="915.94" width="162.7" height="23" fill="#fff"/><circle cx="308.1" cy="927.94" r="6.700" fill="url(#delg)" stroke="#b40000" stroke-width="1.3"/><path d="M305.0 924.84L311.20000000000005 931.0400000000001M311.20000000000005 924.84L305.0 931.0400000000001" stroke="#fff" stroke-width="2.1" stroke-linecap="round"/><clipPath id="tc21"><rect x="22.2" y="948.2400000000001" width="98.5" height="22.3"/></clipPath><rect x="22.2" y="948.2400000000001" width="98.5" height="22.3" fill="#fff"/><path d="M33.2 948.2400000000001v22.3M39.7 948.2400000000001v22.3M44.2 948.2400000000001v22.3M47.7 948.2400000000001v22.3M50.7 948.2400000000001v22.3M53.2 948.2400000000001v22.3M55.2 948.2400000000001v22.3M57.2 948.2400000000001v22.3M68.7 948.2400000000001v22.3M75.2 948.2400000000001v22.3M79.7 948.2400000000001v22.3M83.2 948.2400000000001v22.3M86.2 948.2400000000001v22.3M88.7 948.2400000000001v22.3M90.7 948.2400000000001v22.3M92.7 948.2400000000001v22.3M104.2 948.2400000000001v22.3M110.7 948.2400000000001v22.3M115.2 948.2400000000001v22.3M22.2 955.8h98.5M22.2 964.8h98.5" stroke="#e3e3e3" stroke-width="1" fill="none"/><polyline points="22.7,954.2 24.2,956.2 26.2,959.2" fill="none" stroke="#e8900c" stroke-width="1.2" stroke-linejoin="round" clip-path="url(#tc21)"/><polyline points="38.2,957.7 41.2,958.7 44.2,961.7 46.2,964.7 48.2,966.7 49.7,968.7" fill="none" stroke="#e8900c" stroke-width="1.2" stroke-linejoin="round" clip-path="url(#tc21)"/><polyline points="49.2,968.7 50.2,968.7" fill="none" stroke="#e8900c" stroke-width="1.2" stroke-linejoin="round" clip-path="url(#tc21)"/><polyline points="49.2,968.7 50.2,968.7" fill="none" stroke="#e8900c" stroke-width="1.2" stroke-linejoin="round" clip-path="url(#tc21)"/><path d="M22.2 970.5400000000001V948.2400000000001H120.7" fill="none" stroke="#bdbdbd" stroke-width="1"/><path d="M14.3 1009.6700000000001V969.2700000000001H94.6L123.3 939.6700000000001H326.3V1009.6700000000001Z" fill="#e5e5e5" stroke="#b4b4b4" stroke-width="1.5" stroke-linejoin="round"/><path d="M14.3 1009.6700000000001V969.2700000000001M326.3 939.6700000000001V1009.6700000000001" stroke="#8f8f8f" stroke-width="1" fill="none"/><rect x="127.6" y="946.97" width="162.7" height="23" fill="#fff"/><circle cx="308.1" cy="958.97" r="6.700" fill="url(#delg)" stroke="#b40000" stroke-width="1.3"/><path d="M305.0 955.87L311.20000000000005 962.07M311.20000000000005 955.87L305.0 962.07" stroke="#fff" stroke-width="2.1" stroke-linecap="round"/><clipPath id="tc22"><rect x="22.2" y="979.2700000000001" width="98.5" height="22.3"/></clipPath><rect x="22.2" y="979.2700000000001" width="98.5" height="22.3" fill="#fff"/><path d="M33.2 979.2700000000001v22.3M39.7 979.2700000000001v22.3M44.2 979.2700000000001v22.3M47.7 979.2700000000001v22.3M50.7 979.2700000000001v22.3M53.2 979.2700000000001v22.3M55.2 979.2700000000001v22.3M57.2 979.2700000000001v22.3M68.7 979.2700000000001v22.3M75.2 979.2700000000001v22.3M79.7 979.2700000000001v22.3M83.2 979.2700000000001v22.3M86.2 979.2700000000001v22.3M88.7 979.2700000000001v22.3M90.7 979.2700000000001v22.3M92.7 979.2700000000001v22.3M104.2 979.2700000000001v22.3M110.7 979.2700000000001v22.3M115.2 979.2700000000001v22.3M22.2 986.9h98.5M22.2 995.9h98.5" stroke="#e3e3e3" stroke-width="1" fill="none"/><polyline points="22.7,985.3 24.2,987.3 26.2,990.3" fill="none" stroke="#d2a400" stroke-width="1.2" stroke-linejoin="round" clip-path="url(#tc22)"/><polyline points="38.2,988.8 41.2,989.8 44.2,992.8 46.2,995.8 48.2,997.8 49.7,999.8" fill="none" stroke="#d2a400" stroke-width="1.2" stroke-linejoin="round" clip-path="url(#tc22)"/><polyline points="49.2,999.8 50.2,999.8" fill="none" stroke="#d2a400" stroke-width="1.2" stroke-linejoin="round" clip-path="url(#tc22)"/><polyline points="49.2,999.8 50.2,999.8" fill="none" stroke="#d2a400" stroke-width="1.2" stroke-linejoin="round" clip-path="url(#tc22)"/><path d="M22.2 1001.57V979.2700000000001H120.7" fill="none" stroke="#bdbdbd" stroke-width="1"/><path d="M14.3 1040V1000.3000000000001H94.6L123.3 970.7H326.3V1040Z" fill="#e5e5e5" stroke="#b4b4b4" stroke-width="1.5" stroke-linejoin="round"/><path d="M14.3 1040V1000.3000000000001M326.3 970.7V1040" stroke="#8f8f8f" stroke-width="1" fill="none"/><rect x="127.6" y="978.0" width="162.7" height="23" fill="#fff"/><circle cx="308.1" cy="990.0" r="6.700" fill="url(#delg)" stroke="#b40000" stroke-width="1.3"/><path d="M305.0 986.9L311.20000000000005 993.1M311.20000000000005 986.9L305.0 993.1" stroke="#fff" stroke-width="2.1" stroke-linecap="round"/><rect x="22.2" y="1010.5" width="98.5" height="30" fill="#fff"/><path d="M33.2 1010.5v30M39.7 1010.5v30M44.2 1010.5v30M47.7 1010.5v30M50.7 1010.5v30M53.2 1010.5v30M55.2 1010.5v30M57.2 1010.5v30M68.7 1010.5v30M75.2 1010.5v30M79.7 1010.5v30M83.2 1010.5v30M86.2 1010.5v30M88.7 1010.5v30M90.7 1010.5v30M92.7 1010.5v30M104.2 1010.5v30M110.7 1010.5v30M115.2 1010.5v30M22.2 1018.1h98.5M22.2 1027.1h98.5M22.2 1036.1h98.5" stroke="#e3e3e3" stroke-width="1" fill="none"/><rect x="22.2" y="1010.5" width="98.5" height="30" fill="none" stroke="#bdbdbd" stroke-width="1"/><path d="M131.5 1011.6h1.500M138 1011.6h2M143.5 1011.6h1.500M153 1011.6h1" stroke="#333" stroke-width="1.6"/><path d="M302 1009.5h13v4h-13z" fill="#555"/><path d="M306 1013L314 1009" stroke="#e0a000" stroke-width="1.5"/><rect x="22.2" y="265.3" width="298.5" height="79.5" fill="#fff" stroke="#c6c6c6" stroke-width="1"/><rect x="22.4" y="348.6" width="97.6" height="20.8" rx="3.5" fill="url(#btng)" stroke="#b9b9b9" stroke-width="1"/></g></svg>
<div class="t " style="left:17.08px;top:130.00px;font-size:12px;line-height:12px;color:#1b1b1b;transform:scaleX(0.9723);transform-origin:0 0;">Collapse</div>
<div class="t " style="left:131.88px;top:139.00px;font-size:12px;line-height:12px;color:#1b1b1b;transform:scaleX(0.8938);transform-origin:0 0;">L SUB</div>
<div class="t " style="left:25.78px;top:168.00px;font-size:12px;line-height:12px;color:#1b1b1b;transform:scaleX(1.0639);transform-origin:0 0;">1</div>
<div class="t " style="left:131.88px;top:170.00px;font-size:12px;line-height:12px;color:#1b1b1b;transform:scaleX(0.8616);transform-origin:0 0;">R SUB</div>
<div class="t " style="left:25.78px;top:199.00px;font-size:12px;line-height:12px;color:#1b1b1b;transform:scaleX(1.0639);transform-origin:0 0;">2</div>
<div class="t " style="left:24.08px;top:250.00px;font-size:12px;line-height:12px;color:#333;transform:scaleX(0.9290);transform-origin:0 0;">20</div>
<div class="t " style="left:101.08px;top:250.00px;font-size:12px;line-height:12px;color:#333;transform:scaleX(0.9340);transform-origin:0 0;">300</div>
<div class="t " style="left:131.88px;top:364.00px;font-size:12px;line-height:12px;color:#1010f4;transform:scaleX(0.9056);transform-origin:0 0;">L+R SUB</div>
<div class="t " style="left:25.78px;top:392.00px;font-size:12px;line-height:12px;color:#1b1b1b;transform:scaleX(1.0639);transform-origin:0 0;">3</div>
<div class="t " style="left:131.88px;top:395.00px;font-size:12px;line-height:12px;color:#1010f4;transform:scaleX(0.9056);transform-origin:0 0;">L+R SUB</div>
<div class="t " style="left:25.78px;top:423.00px;font-size:12px;line-height:12px;color:#1b1b1b;transform:scaleX(1.0639);transform-origin:0 0;">4</div>
<div class="t " style="left:131.88px;top:426.00px;font-size:12px;line-height:12px;color:#1b1b1b;transform:scaleX(0.9122);transform-origin:0 0;">L SUB 88cross</div>
<div class="t " style="left:25.78px;top:454.00px;font-size:12px;line-height:12px;color:#1b1b1b;transform:scaleX(1.0639);transform-origin:0 0;">5</div>
<div class="t " style="left:131.88px;top:457.00px;font-size:12px;line-height:12px;color:#1b1b1b;transform:scaleX(0.8973);transform-origin:0 0;">R SUB 88cross</div>
<div class="t " style="left:25.78px;top:485.00px;font-size:12px;line-height:12px;color:#1b1b1b;transform:scaleX(1.0639);transform-origin:0 0;">6</div>
<div class="t " style="left:131.88px;top:488.00px;font-size:12px;line-height:12px;color:#1010f4;transform:scaleX(0.9191);transform-origin:0 0;">L+R SUB 88cross +9,42R</div>
<div class="t " style="left:25.78px;top:516.00px;font-size:12px;line-height:12px;color:#1b1b1b;transform:scaleX(1.0639);transform-origin:0 0;">7</div>
<div class="t " style="left:131.88px;top:519.00px;font-size:12px;line-height:12px;color:#1010f4;transform:scaleX(0.9550);transform-origin:0 0;">L speaker</div>
<div class="t " style="left:25.78px;top:547.00px;font-size:12px;line-height:12px;color:#1b1b1b;transform:scaleX(1.0639);transform-origin:0 0;">8</div>
<div class="t " style="left:131.88px;top:550.00px;font-size:12px;line-height:12px;color:#1b1b1b;transform:scaleX(0.9307);transform-origin:0 0;">R speaker</div>
<div class="t " style="left:25.78px;top:578.00px;font-size:12px;line-height:12px;color:#1b1b1b;transform:scaleX(1.0639);transform-origin:0 0;">9</div>
<div class="t " style="left:131.88px;top:581.00px;font-size:12px;line-height:12px;color:#1010f4;transform:scaleX(0.9492);transform-origin:0 0;">L+R speaker</div>
<div class="t " style="left:25.78px;top:609.00px;font-size:12px;line-height:12px;color:#1b1b1b;transform:scaleX(1.0114);transform-origin:0 0;">10</div>
<div class="t " style="left:131.88px;top:612.00px;font-size:12px;line-height:12px;color:#1b1b1b;transform:scaleX(0.9321);transform-origin:0 0;">L+R speakers 88cross</div>
<div class="t " style="left:25.78px;top:640.00px;font-size:12px;line-height:12px;color:#1b1b1b;transform:scaleX(1.0837);transform-origin:0 0;">11</div>
<div class="t " style="left:131.88px;top:643.00px;font-size:12px;line-height:12px;color:#1b1b1b;transform:scaleX(0.9385);transform-origin:0 0;">L speaker 88cross</div>
<div class="t " style="left:25.78px;top:671.00px;font-size:12px;line-height:12px;color:#1b1b1b;transform:scaleX(1.0114);transform-origin:0 0;">12</div>
<div class="t " style="left:131.88px;top:674.00px;font-size:12px;line-height:12px;color:#1b1b1b;transform:scaleX(0.9256);transform-origin:0 0;">R speaker 88cross</div>
<div class="t " style="left:25.78px;top:702.00px;font-size:12px;line-height:12px;color:#1b1b1b;transform:scaleX(1.0114);transform-origin:0 0;">13</div>
<div class="t " style="left:131.88px;top:705.00px;font-size:12px;line-height:12px;color:#1b1b1b;transform:scaleX(0.9524);transform-origin:0 0;">L+R ALL 88cross +2delSpeak</div>
<div class="t " style="left:25.78px;top:733.00px;font-size:12px;line-height:12px;color:#1b1b1b;transform:scaleX(1.0114);transform-origin:0 0;">14</div>
<div class="t " style="left:131.88px;top:737.00px;font-size:12px;line-height:12px;color:#1b1b1b;transform:scaleX(0.9524);transform-origin:0 0;">L+R ALL 88cross +2delSpeak</div>
<div class="t " style="left:25.78px;top:764.00px;font-size:12px;line-height:12px;color:#1b1b1b;transform:scaleX(1.0114);transform-origin:0 0;">15</div>
<div class="t " style="left:131.88px;top:768.00px;font-size:12px;line-height:12px;color:#1b1b1b;transform:scaleX(0.9524);transform-origin:0 0;">L+R ALL 88cross +2delSpeak</div>
<div class="t " style="left:25.78px;top:795.00px;font-size:12px;line-height:12px;color:#1b1b1b;transform:scaleX(1.0114);transform-origin:0 0;">16</div>
<div class="t " style="left:131.88px;top:799.00px;font-size:12px;line-height:12px;color:#1b1b1b;transform:scaleX(0.9590);transform-origin:0 0;">L+R ALL 88cross No Dirac</div>
<div class="t " style="left:25.78px;top:826.00px;font-size:12px;line-height:12px;color:#1b1b1b;transform:scaleX(1.0114);transform-origin:0 0;">17</div>
<div class="t " style="left:131.88px;top:830.00px;font-size:12px;line-height:12px;color:#1b1b1b;transform:scaleX(0.9533);transform-origin:0 0;">L+R ALL 88cross Full Dirac</div>
<div class="t " style="left:25.78px;top:858.00px;font-size:12px;line-height:12px;color:#1b1b1b;transform:scaleX(1.0114);transform-origin:0 0;">18</div>
<div class="t " style="left:131.88px;top:861.00px;font-size:12px;line-height:12px;color:#1010f4;transform:scaleX(0.9946);transform-origin:0 0;">L+R ALL with dirac</div>
<div class="t " style="left:25.78px;top:889.00px;font-size:12px;line-height:12px;color:#1b1b1b;transform:scaleX(1.0114);transform-origin:0 0;">19</div>
<div class="t " style="left:131.88px;top:892.00px;font-size:12px;line-height:12px;color:#1b1b1b;transform:scaleX(0.9590);transform-origin:0 0;">L+R ALL 88cross No Dirac</div>
<div class="t " style="left:25.78px;top:920.00px;font-size:12px;line-height:12px;color:#1b1b1b;transform:scaleX(1.0114);transform-origin:0 0;">20</div>
<div class="t " style="left:131.88px;top:923.00px;font-size:12px;line-height:12px;color:#1b1b1b;transform:scaleX(0.9458);transform-origin:0 0;">EQ L+R ALL 88cross No Dira</div>
<div class="t " style="left:25.78px;top:951.00px;font-size:12px;line-height:12px;color:#1b1b1b;transform:scaleX(1.0114);transform-origin:0 0;">21</div>
<div class="t " style="left:131.88px;top:954.00px;font-size:12px;line-height:12px;color:#1b1b1b;transform:scaleX(0.9675);transform-origin:0 0;">L+R ALL 88cross with Dirac</div>
<div class="t " style="left:25.78px;top:982.00px;font-size:12px;line-height:12px;color:#1b1b1b;transform:scaleX(1.0114);transform-origin:0 0;">22</div>
<div class="t " style="left:131.88px;top:985.00px;font-size:12px;line-height:12px;color:#1b1b1b;transform:scaleX(0.9675);transform-origin:0 0;">L+R ALL 88cross with Dirac</div>
<div class="t " style="left:130.78px;top:197.00px;font-size:12px;line-height:12px;color:#1b1b1b;transform:scaleX(1.0284);transform-origin:0 0;">8-3.mdat</div>
<div class="t " style="left:130.78px;top:213.00px;font-size:12px;line-height:12px;color:#1b1b1b;transform:scaleX(0.9491);transform-origin:0 0;">8 Μαρ 2025 1:34:31 μμ</div>
<div class="t " style="left:130.78px;top:229.00px;font-size:12px;line-height:12px;color:#1b1b1b;transform:scaleX(0.9790);transform-origin:0 0;">Mic/Meter: 7144403_90deg.txt</div>
<div class="t " style="left:130.78px;top:245.00px;font-size:12px;line-height:12px;color:#1b1b1b;">Soundcard: No cal file</div>
<div class="t " style="left:27.78px;top:271.00px;font-size:12px;line-height:12px;color:#1b1b1b;transform:scaleX(0.9649);transform-origin:0 0;">Delay -6,0053 ms (-2,060 m, -(6 ft 9,1 in))</div>
<div class="t " style="left:27.78px;top:287.00px;font-size:12px;line-height:12px;color:#1b1b1b;transform:scaleX(0.9913);transform-origin:0 0;">using IR start time relative to Acoustic reference</div>
<div class="t " style="left:27.78px;top:303.00px;font-size:12px;line-height:12px;color:#1b1b1b;transform:scaleX(1.0322);transform-origin:0 0;">played from  L with no timing offset</div>
<div class="t " style="left:27.78px;top:319.00px;font-size:12px;line-height:12px;color:#1b1b1b;transform:scaleX(1.0043);transform-origin:0 0;">Clock adjustment: -14,2 ppm</div>
<div class="t " style="left:35.88px;top:354.00px;font-size:12px;line-height:12px;color:#1b1b1b;transform:scaleX(0.9581);transform-origin:0 0;">Change Cal...</div>
<svg class="b" style="left:0px;top:0px;" width="2489" height="175" viewBox="0 0 2489 175"><defs>
    <linearGradient id="ibg" x1="0" y1="0" x2="0" y2="1"><stop offset="0" stop-color="#e6e6e6"/><stop offset="0.5" stop-color="#ffffff"/><stop offset="0.62" stop-color="#f2f2f2"/><stop offset="1" stop-color="#cfcfcf"/></linearGradient>
    <linearGradient id="lvl" x1="0" y1="0" x2="0" y2="1"><stop offset="0.15" stop-color="#ff0000"/><stop offset="0.85" stop-color="#00b400"/></linearGradient>
    <linearGradient id="fold1" x1="0" y1="0" x2="0" y2="1"><stop offset="0" stop-color="#6f9fe0"/><stop offset="1" stop-color="#4f84d0"/></linearGradient>
    <linearGradient id="fold2" x1="0" y1="0" x2="0" y2="1"><stop offset="0" stop-color="#4a8ee6"/><stop offset="0.5" stop-color="#86b6f4"/><stop offset="1" stop-color="#aed2fb"/></linearGradient>
    <radialGradient id="infog" cx="0.5" cy="0.3" r="0.8"><stop offset="0" stop-color="#3c9cf0"/><stop offset="0.6" stop-color="#0a6ad8"/><stop offset="1" stop-color="#0050c0"/></radialGradient>
    <linearGradient id="flop" x1="0" y1="0" x2="1" y2="1"><stop offset="0" stop-color="#555"/><stop offset="1" stop-color="#111"/></linearGradient>
    <linearGradient id="camg" x1="0" y1="0" x2="0" y2="1"><stop offset="0" stop-color="#fafafa"/><stop offset="0.6" stop-color="#d8d8d8"/><stop offset="1" stop-color="#bcbcbc"/></linearGradient>
    <radialGradient id="lens" cx="0.45" cy="0.45" r="0.6"><stop offset="0" stop-color="#111"/><stop offset="0.3" stop-color="#555"/><stop offset="0.6" stop-color="#b0b0b0"/><stop offset="1" stop-color="#707070"/></radialGradient>
    <linearGradient id="wr" x1="0" y1="0" x2="1" y2="0"><stop offset="0" stop-color="#2a2a2a"/><stop offset="0.5" stop-color="#9a9a9a"/><stop offset="1" stop-color="#3a3a3a"/></linearGradient>
    <radialGradient id="gearg" cx="0.5" cy="0.4" r="0.7"><stop offset="0" stop-color="#e0e0e0"/><stop offset="0.7" stop-color="#a8a8a8"/><stop offset="1" stop-color="#8a8a8a"/></radialGradient>
    </defs><g transform="translate(19,32.2)"><path d="M0.5 31.300V4.300H17.500L20.500 0.500H31.500V31.300Z" fill="#fdfdfd" stroke="#7e7e7e" stroke-width="1"/><rect x="2.2" y="6.200" width="14.6" height="11.2" fill="#fff" stroke="#b4b4b4" stroke-width="0.7"/><path d="M3 12C4.500 6.500 6 6.500 7.500 12S10.500 17.300 12 12" fill="none" stroke="#d01818" stroke-width="1.1"/><rect x="2.600" y="19.4" width="27" height="9.800" fill="#fff" stroke="#b4b4b4" stroke-width="0.7"/><path d="M4.500 21.500h3M8.500 21.500h2M4.500 24.500h4M9.500 24.500h3M4.500 27.300h2.500M8 27.300h5M14 27.300h3" stroke="#444" stroke-width="0.8"/><circle cx="28.1" cy="2.800" r="1.5" fill="#fff" stroke="#e04040" stroke-width="0.7"/><rect x="27" y="6.200" width="2.800" height="2.800" fill="#e8c000" stroke="#333" stroke-width="0.5"/><path d="M27.300 12.300h2.700" stroke="#d01818" stroke-width="1"/><path d="M18.500 16.300h4M27.300 15h2.500M27.300 17.600h2" stroke="#444" stroke-width="0.8"/><path d="M16.3 0.300L17.800 3.600L20.400 1.100L20.200 4.700L23.600 3.500L21.900 6.700L25.400 7.300L22.300 9L25 11.300L21.400 11.200L22.600 14.600L19.600 12.700L19 16.200L16.900 13.300L14.900 16.200L14.300 12.700L11.100 14.500L12.300 11.200L8.800 11.200L11.400 9L8.300 7.300L11.800 6.700L10.100 3.500L13.500 4.700L13.300 1.100L15.800 3.600Z" fill="#ffee00" stroke="#f8c800" stroke-width="0.6" transform="translate(-0.3,-0.6)"/></g><path d="M78.6 38.3Q78.600 36.900 80 36.900H83.500Q84.500 36.900 85 38L85.600 39.200H104.600Q106 39.200 106 40.600V50H78.600Z" fill="url(#fold1)"/><path d="M76.4 47.600Q76.200 46.900 77.100 46.900H107.100Q108 46.900 107.800 47.700L106.500 60.900Q106.400 62 105.300 62H78.800Q77.800 62 77.700 60.900Z" fill="url(#fold2)" stroke="#4a86dc" stroke-width="0.5"/><g transform="translate(129.1,32.2)"><path d="M0.5 32V4.500H17L20.5 0.500H31.500V32" fill="#d8d8d8" stroke="#7e7e7e" stroke-width="1"/><rect x="2" y="6.5" width="14" height="10.5" fill="#d0d0d0" stroke="#b0b0b0" stroke-width="0.6"/><path d="M3 11C4.500 6 6 6 7.500 11S10.500 16 12 11" fill="none" stroke="#d01818" stroke-width="1.1"/><path d="M0.5 18H31.500" stroke="#7e7e7e" stroke-width="1"/><rect x="0.5" y="18.5" width="31" height="13.5" fill="#f4f4f4"/><rect x="2" y="20" width="14" height="11" fill="#fff" stroke="#b0b0b0" stroke-width="0.6"/><path d="M3 25.500C4.500 20.5 6 20.5 7.500 25.500S10.500 30.5 12 25.500" fill="none" stroke="#18a018" stroke-width="1.1"/><circle cx="28" cy="3" r="1.5" fill="#fff" stroke="#e04040" stroke-width="0.7"/><circle cx="28" cy="17" r="1.5" fill="#fff" stroke="#e04040" stroke-width="0.7"/><rect x="27" y="6.5" width="2.6" height="2.6" fill="#e8c000" stroke="#333" stroke-width="0.5"/><rect x="27" y="20.5" width="2.6" height="2.6" fill="#e8c000" stroke="#333" stroke-width="0.5"/><path d="M18 8.500h4M18 12.5h3M27 12h2.500M18 26h3M27 26h2.500M18 30h3M27 29.500h2.500" stroke="#444" stroke-width="0.8"/><path d="M0.5 32V4.500H17L20.5 0.500H31.500V32M0.500 18.500V32M31.500 18.500V32" fill="none" stroke="#7e7e7e" stroke-width="1"/></g><g transform="translate(139.2,42.3)"><path d="M0.5 0.500H17.500L19 2V19.500H0.500Z" fill="url(#flop)" stroke="#111" stroke-width="0.6"/><rect x="2.800" y="0.800" width="13.4" height="9.400" fill="#e6eef8"/><path d="M4.500 3.200h10M4.500 5.400h10M4.500 7.600h10" stroke="#9ab4d6" stroke-width="0.8"/><rect x="4" y="12.600" width="10.500" height="6.900" fill="#c8c8c8"/><rect x="5.500" y="13.800" width="2.600" height="4.600" fill="#222"/></g><g transform="translate(196,32.2)"><path d="M0.5 32V4.500H17L20.5 0.500H31.500V32" fill="#d8d8d8" stroke="#7e7e7e" stroke-width="1"/><rect x="2" y="6.5" width="14" height="10.5" fill="#d0d0d0" stroke="#b0b0b0" stroke-width="0.6"/><path d="M3 11C4.500 6 6 6 7.500 11S10.500 16 12 11" fill="none" stroke="#d01818" stroke-width="1.1"/><path d="M0.5 18H31.500" stroke="#7e7e7e" stroke-width="1"/><rect x="0.5" y="18.5" width="31" height="13.5" fill="#f4f4f4"/><rect x="2" y="20" width="14" height="11" fill="#fff" stroke="#b0b0b0" stroke-width="0.6"/><path d="M3 25.500C4.500 20.5 6 20.5 7.500 25.500S10.500 30.5 12 25.500" fill="none" stroke="#18a018" stroke-width="1.1"/><circle cx="28" cy="3" r="1.5" fill="#fff" stroke="#e04040" stroke-width="0.7"/><circle cx="28" cy="17" r="1.5" fill="#fff" stroke="#e04040" stroke-width="0.7"/><rect x="27" y="6.5" width="2.6" height="2.6" fill="#e8c000" stroke="#333" stroke-width="0.5"/><rect x="27" y="20.5" width="2.6" height="2.6" fill="#e8c000" stroke="#333" stroke-width="0.5"/><path d="M18 8.500h4M18 12.5h3M27 12h2.500M18 26h3M27 26h2.500M18 30h3M27 29.500h2.500" stroke="#444" stroke-width="0.8"/><path d="M0.5 32V4.500H17L20.5 0.500H31.500V32M0.500 18.500V32M31.500 18.500V32" fill="none" stroke="#7e7e7e" stroke-width="1"/></g><path d="M208.3 43.800L224.200 59.500M223.600 43.800L207.900 59.500" stroke="#a30000" stroke-width="3.4" stroke-linecap="round" fill="none"/><circle cx="267" cy="47.9" r="13.9" fill="url(#infog)"/><ellipse cx="267" cy="41" rx="10.5" ry="6.500" fill="#fff" opacity="0.13"/><circle cx="267.1" cy="40.3" r="2.200" fill="#fff"/><path d="M263.8 45.300H268.900V55H271V57.300H263.300V55H265.400V47.600H263.800Z" fill="#fff"/><g transform="translate(345,129)"><rect x="4" y="0.300" width="6" height="2.500" rx="0.8" fill="#d8d8d8" stroke="#b0b0b0" stroke-width="0.5"/><rect x="0.5" y="2.300" width="29" height="18.2" rx="1.2" fill="url(#camg)" stroke="#9c9c9c" stroke-width="0.8"/><path d="M4.500 3V20M6.500 3V20" stroke="#f6f6f6" stroke-width="1.2" opacity="0.8"/><circle cx="19.7" cy="11.3" r="7.200" fill="url(#lens)" stroke="#8a8a8a" stroke-width="0.6"/><circle cx="19.5" cy="11.200" r="2.300" fill="#14142a"/><circle cx="18.8" cy="10.500" r="0.7" fill="#88a"/></g><rect x="1103.5" y="32.5" width="31" height="31" rx="4" fill="url(#ibg)" stroke="#c2c2c2" stroke-width="1"/><g transform="translate(1103,32)" fill="none" stroke-linejoin="round"><path d="M3 20L4.800 19.600L5 4Q17.500 4.500 29.100 20" stroke="#1818c8" stroke-width="1.3"/><path d="M3 20L7 19.600L9.500 8.500L12.500 27.600L16 12.500L20 22.600L23 17.600L28 19.900" stroke="#d01010" stroke-width="1.2"/></g><rect x="1169.5" y="32.5" width="31" height="31" rx="4" fill="url(#ibg)" stroke="#c2c2c2" stroke-width="1"/><rect x="1240.7" y="32.5" width="31" height="31" rx="4" fill="url(#ibg)" stroke="#c2c2c2" stroke-width="1"/><g transform="translate(1240.2,32)"><path d="M3.300 15.800C6 24 8 29.100 9.800 29.100S13.500 24 15.900 16Z" fill="#b4b0e8"/><path d="M15.900 16C18.300 8 20.100 2.500 21.900 2.500S25.500 8 28.100 15.800Z" fill="#d2d0f2"/><path d="M3.300 15.600C6 24 8 29.100 9.800 29.100S13.500 24 15.900 16S20.100 2.500 21.900 2.500S25.500 8 28.100 15.600" fill="none" stroke="#0808b8" stroke-width="1.8" stroke-linecap="round"/></g><rect x="1300.5" y="32.5" width="31" height="31" rx="4" fill="url(#ibg)" stroke="#c2c2c2" stroke-width="1"/><g transform="translate(1300,32)"><rect x="2.2" y="2.200" width="27.6" height="27.6" rx="4.500" fill="#1e1e1e"/><path d="M16 4.500V27.500M3.500 16.500H28.500" stroke="#8c8c8c" stroke-width="0.8"/><path d="M3.500 15C6.500 6 8.500 6 10 6S14 10 16 16.500S20 26 22 26S26 22 28.500 16" fill="none" stroke="#c0c0c0" stroke-width="1"/></g><rect x="1350.5" y="32.5" width="31" height="31" rx="4" fill="url(#ibg)" stroke="#c2c2c2" stroke-width="1"/><g transform="translate(1350,32)"><rect x="4.900" y="2.500" width="6" height="27" fill="url(#lvl)" stroke="#3a3ae0" stroke-width="0.6"/><rect x="20.9" y="2.500" width="6" height="27" fill="url(#lvl)" stroke="#3a3ae0" stroke-width="0.6"/></g><rect x="1406.5" y="32.5" width="31" height="31" rx="4" fill="url(#ibg)" stroke="#c2c2c2" stroke-width="1"/><g transform="translate(1406,32)" fill="none" stroke-width="1.2"><path d="M2.800 9C4.500 3 6.500 1.500 8.500 4S13 13.500 16 12.300S21 7.500 24 7.500S27 8.500 28.800 9.500" stroke="#c81818"/><path d="M2.800 17C4.500 11 6.500 9.500 8.500 12S13 21.500 16 20.300S21 15.500 24 15.500S27 16.500 28.800 17.500" stroke="#1818c8"/><path d="M2.800 25C4.500 19 6.500 17.500 8.500 20S13 29.500 16 28.300S21 23.500 24 23.500S27 24.500 28.800 25.500" stroke="#18901c"/></g><rect x="1463.5" y="32.5" width="31" height="31" rx="4" fill="url(#ibg)" stroke="#c2c2c2" stroke-width="1"/><g transform="translate(1463,32)" fill="#0a0ab4"><rect x="5.7" y="11.7" width="2.100" height="15.1"/><rect x="8.9" y="5.7" width="2.100" height="21.1"/><rect x="12" y="4.7" width="2.100" height="22.1"/><rect x="15" y="8.9" width="2.100" height="17.9"/><rect x="18.1" y="14.8" width="2.100" height="12.0"/><rect x="21" y="18.8" width="2.100" height="8.0"/><rect x="24" y="17.7" width="2.100" height="9.1"/></g><rect x="1513.7" y="32.5" width="31" height="31" rx="4" fill="url(#ibg)" stroke="#c2c2c2" stroke-width="1"/><g transform="translate(1513.2,32)"><circle cx="21.3" cy="15.800" r="6.400" fill="#00b4b4" stroke="#0000b0" stroke-width="3"/><path d="M24.800 20.800L28 23.800" stroke="#00b4b4" stroke-width="3"/></g><rect x="1566.5" y="32.5" width="31" height="31" rx="4" fill="url(#ibg)" stroke="#c2c2c2" stroke-width="1"/><g transform="translate(1566,32)"><rect x="4.9" y="6.8" width="1.900" height="18.5" fill="#b40000"/><rect x="8" y="12.8" width="1.900" height="12.5" fill="#c818c8"/><rect x="10.9" y="8.9" width="1.900" height="16.4" fill="#008a00"/><rect x="13" y="13" width="1.900" height="12.3" fill="#c89600"/><rect x="17" y="11" width="1.900" height="14.3" fill="#1010c0"/><rect x="20" y="6.8" width="1.900" height="18.5" fill="#b40000"/><rect x="23" y="13" width="1.900" height="12.3" fill="#c89600"/><rect x="25" y="13" width="1.900" height="12.3" fill="#c818c8"/><path d="M4.800 25.500H27.200" stroke="#222" stroke-width="0.8"/></g><g transform="translate(2429.5,31.5)"><path d="M3.500 29.500L20 12.500" stroke="#303030" stroke-width="4.600" stroke-linecap="round"/><path d="M4.500 28.500L19.500 13" stroke="#8a8a8a" stroke-width="1.500" stroke-linecap="round"/><circle cx="3.800" cy="29" r="1.1" fill="#f0f0f0"/><path d="M19 13.500Q16.500 9 19.500 5Q22.500 1.200 27 2.200L23.200 6L24 9L27 9.800L30.500 6Q31.800 10 28.600 13.200Q24.500 16.500 19 13.500Z" fill="#c8c8c8" stroke="#7a7a7a" stroke-width="0.8"/></g><path d="M2471.0 139.2L2471.0 140.8L2468.5 141.6L2468.2 142.9L2469.9 144.8L2469.1 146.2L2466.6 145.7L2465.7 146.6L2466.2 149.1L2464.8 149.9L2462.9 148.2L2461.6 148.5L2460.8 151.0L2459.2 151.0L2458.4 148.5L2457.1 148.2L2455.2 149.9L2453.8 149.1L2454.3 146.6L2453.4 145.7L2450.9 146.2L2450.1 144.8L2451.8 142.9L2451.5 141.6L2449.0 140.8L2449.0 139.2L2451.5 138.4L2451.8 137.1L2450.1 135.2L2450.9 133.8L2453.4 134.3L2454.3 133.4L2453.8 130.9L2455.2 130.1L2457.1 131.8L2458.4 131.5L2459.2 129.0L2460.8 129.0L2461.6 131.5L2462.9 131.8L2464.8 130.1L2466.2 130.9L2465.7 133.4L2466.6 134.3L2469.1 133.8L2469.9 135.2L2468.2 137.1L2468.5 138.4Z" fill="url(#gearg)" stroke="#8c8c8c" stroke-width="0.6"/><circle cx="2460" cy="140" r="5.600" fill="#c4c4c4" stroke="#9a9a9a" stroke-width="0.8"/><circle cx="2460" cy="140" r="3" fill="#f4f4f4" stroke="#a0a0a0" stroke-width="1"/></svg>
<div class="t " style="left:1169.72px;top:37.00px;font-size:8px;line-height:8px;color:#333;transform:scaleX(1.0985);transform-origin:0 0;font-family:'DejaVu Sans',sans-serif;">dB SPL</div>
<div class="t " style="left:1175.34px;top:47.00px;font-size:16px;line-height:16px;color:#000;font-weight:bold;transform:scaleX(1.0957);transform-origin:0 0;">83</div>
<div class="t " style="left:1363.76px;top:36.00px;font-size:7px;line-height:7px;color:#444;transform:scaleX(1.1622);transform-origin:0 0;">0</div>
<div class="t " style="left:1363.76px;top:42.00px;font-size:7px;line-height:7px;color:#444;transform:scaleX(1.1622);transform-origin:0 0;">3</div>
<div class="t " style="left:1363.76px;top:48.00px;font-size:7px;line-height:7px;color:#444;transform:scaleX(1.1622);transform-origin:0 0;">6</div>
<div class="t " style="left:1363.76px;top:54.00px;font-size:7px;line-height:7px;color:#444;transform:scaleX(1.1622);transform-origin:0 0;">9</div>
<svg class="b" style="left:1513px;top:32px" width="32" height="32" viewBox="0 0 32 32"><text x="2.800" y="23.8" font-family="Liberation Sans, sans-serif" font-weight="bold" font-size="22.5" fill="#0000b0" stroke="#0000b0" stroke-width="1.4" textLength="10" lengthAdjust="spacingAndGlyphs">E</text></svg>
<div class="b" style="left:0.00px;top:1013.00px;width:2489.00px;height:1.00px;background:#d4d4d4;"></div>
<div class="b" style="left:0.00px;top:1014.00px;width:2489.00px;height:22.00px;background:#f4f4f4;"></div>
<div class="b" style="left:82.10px;top:1014.00px;width:1.00px;height:22.00px;background:#d2d2d2;"></div>
<div class="b" style="left:126.50px;top:1014.00px;width:1.00px;height:22.00px;background:#d2d2d2;"></div>
<div class="b" style="left:238.70px;top:1014.00px;width:1.00px;height:22.00px;background:#d2d2d2;"></div>
<div class="b" style="left:507.80px;top:1014.00px;width:1.00px;height:22.00px;background:#d2d2d2;"></div>
<div class="b" style="left:517.80px;top:1014.00px;width:1.00px;height:22.00px;background:#d2d2d2;"></div>
<div class="b" style="left:804.50px;top:1014.00px;width:1.00px;height:22.00px;background:#d2d2d2;"></div>
<div class="b" style="left:2283.50px;top:1014.00px;width:1.00px;height:22.00px;background:#d2d2d2;"></div>
<div class="t " style="left:2.88px;top:1021.00px;font-size:12px;line-height:12px;color:#1b1b1b;transform:scaleX(0.9645);transform-origin:0 0;">309/622MB</div>
<div class="t " style="left:86.88px;top:1021.00px;font-size:12px;line-height:12px;color:#1b1b1b;transform:scaleX(0.9532);transform-origin:0 0;">48 kHz</div>
<div class="t " style="left:132.18px;top:1021.00px;font-size:12px;line-height:12px;color:#1b1b1b;transform:scaleX(1.0282);transform-origin:0 0;">16-bit in, 16-bit out</div>
<div class="t " style="left:244.58px;top:1021.00px;font-size:12px;line-height:12px;color:#4f7fd6;transform:scaleX(1.0313);transform-origin:0 0;">0000 0000</div>
<div class="t " style="left:310.18px;top:1021.00px;font-size:12px;line-height:12px;color:#4f7fd6;transform:scaleX(1.0313);transform-origin:0 0;">0000 0000</div>
<div class="t " style="left:376.08px;top:1021.00px;font-size:12px;line-height:12px;color:#4f7fd6;transform:scaleX(1.0331);transform-origin:0 0;">0000 0000</div>
<div class="t " style="left:442.08px;top:1021.00px;font-size:12px;line-height:12px;color:#4f7fd6;transform:scaleX(1.0331);transform-origin:0 0;">0000 0000</div>
<div class="t " style="left:522.78px;top:1021.00px;font-size:12px;line-height:12px;color:#1b1b1b;transform:scaleX(0.9811);transform-origin:0 0;">Peak input before clipping 120 dB SPL (uncalibrated)</div>
<svg class="b" style="left:0px;top:1028px;" width="8" height="8" viewBox="0 0 8 8"><path d="M0 3Q0.500 7.500 5 8H0Z" fill="#111"/></svg>
<div class="b" style="left:0.00px;top:0.00px;width:2489.00px;height:25.00px;background:#dde8f6;"></div>
<div class="b" style="left:0.00px;top:25.00px;width:2489.00px;height:1.00px;background:#c3cfdf;"></div>
<div class="t " style="left:15.58px;top:5.00px;font-size:12px;line-height:12px;color:#1a1a1a;transform:scaleX(0.9775);transform-origin:0 0;">File</div>
<div class="t " style="left:50.18px;top:5.00px;font-size:12px;line-height:12px;color:#1a1a1a;transform:scaleX(1.0102);transform-origin:0 0;">Tools</div>
<div class="t " style="left:93.88px;top:5.00px;font-size:12px;line-height:12px;color:#1a1a1a;transform:scaleX(0.9521);transform-origin:0 0;">Preferences</div>
<div class="t " style="left:170.88px;top:5.00px;font-size:12px;line-height:12px;color:#1a1a1a;transform:scaleX(0.9655);transform-origin:0 0;">Graph</div>
<div class="t " style="left:218.88px;top:5.00px;font-size:12px;line-height:12px;color:#1a1a1a;transform:scaleX(1.0373);transform-origin:0 0;">Help</div>
<div class="t " style="left:259.78px;top:5.00px;font-size:12px;line-height:12px;color:#1a1a1a;transform:scaleX(1.0053);transform-origin:0 0;">Donate</div>
<div class="t " style="left:313.78px;top:5.00px;font-size:12px;line-height:12px;color:#1a1a1a;transform:scaleX(0.9711);transform-origin:0 0;">Pro Upgrades</div>
<div class="t " style="left:1211.58px;top:5.00px;font-size:12px;line-height:12px;color:#4a4a4a;transform:scaleX(0.8927);transform-origin:0 0;">REW V5.31.3</div>
<svg class="b" style="left:2360px;top:0px;" width="129" height="25" viewBox="0 0 129 25">
      <path d="M14.5 9.5H24.5" stroke="#1a1a1a" stroke-width="1" fill="none"/>
      <rect x="58.5" y="5.500" width="9" height="9" rx="1.5" fill="none" stroke="#1a1a1a" stroke-width="1.1"/>
      <path d="M102 5L112 15M112 5L102 15" stroke="#1a1a1a" stroke-width="1.1" fill="none"/></svg>
<div class="t " style="left:12.88px;top:70.00px;font-size:12px;line-height:12px;color:#1b1b1b;transform:scaleX(0.9831);transform-origin:0 0;">Measure</div>
<div class="t " style="left:77.88px;top:70.00px;font-size:12px;line-height:12px;color:#1b1b1b;transform:scaleX(1.0083);transform-origin:0 0;">Open</div>
<div class="t " style="left:125.58px;top:70.00px;font-size:12px;line-height:12px;color:#1b1b1b;transform:scaleX(0.9346);transform-origin:0 0;">Save all</div>
<div class="t " style="left:182.88px;top:70.00px;font-size:12px;line-height:12px;color:#1b1b1b;transform:scaleX(0.9713);transform-origin:0 0;">Remove all</div>
<div class="t " style="left:256.58px;top:70.00px;font-size:12px;line-height:12px;color:#1b1b1b;transform:scaleX(1.0792);transform-origin:0 0;">Info</div>
<div class="t " style="left:1088.68px;top:70.00px;font-size:12px;line-height:12px;color:#1b1b1b;transform:scaleX(0.9893);transform-origin:0 0;">IR windows</div>
<div class="t " style="left:1158.68px;top:70.00px;font-size:12px;line-height:12px;color:#1b1b1b;transform:scaleX(0.9601);transform-origin:0 0;">SPL meter</div>
<div class="t " style="left:1229.98px;top:70.00px;font-size:12px;line-height:12px;color:#1b1b1b;transform:scaleX(0.9717);transform-origin:0 0;">Generator</div>
<div class="t " style="left:1299.58px;top:70.00px;font-size:12px;line-height:12px;color:#1b1b1b;transform:scaleX(0.9699);transform-origin:0 0;">Scope</div>
<div class="t " style="left:1349.88px;top:70.00px;font-size:12px;line-height:12px;color:#1b1b1b;transform:scaleX(0.9398);transform-origin:0 0;">Levels</div>
<div class="t " style="left:1399.98px;top:70.00px;font-size:12px;line-height:12px;color:#1b1b1b;transform:scaleX(0.9611);transform-origin:0 0;">Overlays</div>
<div class="t " style="left:1468.88px;top:70.00px;font-size:12px;line-height:12px;color:#1b1b1b;transform:scaleX(0.9304);transform-origin:0 0;">RTA</div>
<div class="t " style="left:1521.78px;top:70.00px;font-size:12px;line-height:12px;color:#1b1b1b;transform:scaleX(0.9055);transform-origin:0 0;">EQ</div>
<div class="t " style="left:1554.78px;top:70.00px;font-size:12px;line-height:12px;color:#1b1b1b;transform:scaleX(1.0110);transform-origin:0 0;">Room sim</div>
<div class="t " style="left:2414.78px;top:70.00px;font-size:12px;line-height:12px;color:#1b1b1b;transform:scaleX(0.9536);transform-origin:0 0;">Preferences</div>
<div class="t " style="left:733.00px;top:98.00px;font-size:19px;line-height:19px;color:#1b1b1b;transform:scaleX(0.9393);transform-origin:0 0;">REW is free software, but if you can afford to please </div>
<div class="t " style="left:1148.63px;top:98.00px;font-size:19px;line-height:19px;color:#6a8fe8;transform:scaleX(0.9199);transform-origin:0 0;text-decoration:underline;text-decoration-thickness:1px;text-underline-offset:2px;">click here</div>
<div class="t " style="left:1221.70px;top:98.00px;font-size:19px;line-height:19px;color:#1b1b1b;transform:scaleX(0.9681);transform-origin:0 0;"> to make a donation to help support its continuing development</div>
<svg class="b" style="left:2470px;top:98px;" width="16" height="16" viewBox="0 0 16 16"><path d="M3 3L13 13M13 3L3 13" stroke="#3a3a3a" stroke-width="3.2" fill="none"/></svg>
<div class="t " style="left:338.88px;top:157.00px;font-size:12px;line-height:12px;color:#1b1b1b;transform:scaleX(1.0096);transform-origin:0 0;">Capture</div>
<div class="b" style="left:873.20px;top:138.20px;width:786.70px;height:23.70px;border:1px solid #b9b9b9;border-radius:4px;background:linear-gradient(#f4f4f4,#e9e9e9 55%,#dedede);box-shadow:0 1px 1px rgba(0,0,0,.12);"></div>
<div class="t " style="left:880.58px;top:145.00px;font-size:12px;line-height:12px;color:#1b1b1b;transform:scaleX(0.9431);transform-origin:0 0;">SPL &amp; Phase</div>
<div class="b" style="left:955.50px;top:139.20px;width:1.00px;height:21.70px;background:#bdbdbd;"></div>
<div class="t " style="left:962.88px;top:145.00px;font-size:12px;line-height:12px;color:#1b1b1b;transform:scaleX(0.9199);transform-origin:0 0;">All SPL</div>
<div class="b" style="left:1007.50px;top:139.20px;width:1.00px;height:21.70px;background:#bdbdbd;"></div>
<div class="t " style="left:1014.88px;top:145.00px;font-size:12px;line-height:12px;color:#1b1b1b;transform:scaleX(1.0358);transform-origin:0 0;">Distortion</div>
<div class="b" style="left:1075.60px;top:139.20px;width:1.00px;height:21.70px;background:#bdbdbd;"></div>
<div class="t " style="left:1082.88px;top:145.00px;font-size:12px;line-height:12px;color:#1b1b1b;transform:scaleX(1.0186);transform-origin:0 0;">Impulse</div>
<div class="b" style="left:1133.20px;top:139.20px;width:1.00px;height:21.70px;background:#bdbdbd;"></div>
<div class="t " style="left:1140.78px;top:145.00px;font-size:12px;line-height:12px;color:#1b1b1b;transform:scaleX(0.9558);transform-origin:0 0;">Filtered IR</div>
<div class="b" style="left:1201.70px;top:139.20px;width:1.00px;height:21.70px;background:#bdbdbd;"></div>
<div class="t " style="left:1208.78px;top:145.00px;font-size:12px;line-height:12px;color:#1b1b1b;transform:scaleX(0.9222);transform-origin:0 0;">GD</div>
<div class="b" style="left:1233.60px;top:139.20px;width:1.00px;height:21.70px;background:#bdbdbd;"></div>
<div class="t " style="left:1240.78px;top:145.00px;font-size:12px;line-height:12px;color:#1b1b1b;transform:scaleX(0.8892);transform-origin:0 0;">RT60</div>
<div class="b" style="left:1274.40px;top:139.20px;width:1.00px;height:21.70px;background:#bdbdbd;"></div>
<div class="t " style="left:1281.78px;top:145.00px;font-size:12px;line-height:12px;color:#1b1b1b;transform:scaleX(0.9161);transform-origin:0 0;">RT60 Decay</div>
<div class="b" style="left:1350.50px;top:139.20px;width:1.00px;height:21.70px;background:#bdbdbd;"></div>
<div class="t " style="left:1357.78px;top:145.00px;font-size:12px;line-height:12px;color:#1b1b1b;transform:scaleX(1.0235);transform-origin:0 0;">Clarity</div>
<div class="b" style="left:1400.20px;top:139.20px;width:1.00px;height:21.70px;background:#bdbdbd;"></div>
<div class="t " style="left:1408.08px;top:145.00px;font-size:12px;line-height:12px;color:#1b1b1b;transform:scaleX(0.9555);transform-origin:0 0;">Decay</div>
<div class="b" style="left:1448.60px;top:139.20px;width:1.00px;height:21.70px;background:#bdbdbd;"></div>
<div class="t " style="left:1456.08px;top:145.00px;font-size:12px;line-height:12px;color:#1b1b1b;transform:scaleX(1.0064);transform-origin:0 0;">Waterfall</div>
<div class="b" style="left:1512.10px;top:138.20px;width:83.60px;height:23.70px;border:1px solid #8e8e8e;background:linear-gradient(#dcdcdc,#e9e9e9 60%,#f2f2f2);box-shadow:inset 0 1px 2px rgba(0,0,0,.25);"></div>
<div class="t " style="left:1518.98px;top:145.00px;font-size:12px;line-height:12px;color:#1b1b1b;transform:scaleX(0.9928);transform-origin:0 0;">Spectrogram</div>
<div class="b" style="left:1594.70px;top:139.20px;width:1.00px;height:21.70px;background:#bdbdbd;"></div>
<div class="t " style="left:1602.98px;top:145.00px;font-size:12px;line-height:12px;color:#1b1b1b;">Captured</div>
<div class="b" style="left:2242.20px;top:128.10px;width:28.70px;height:16.40px;border:1px solid #a9a9a9;background:#fff;"></div>
<div class="b" style="left:2294.20px;top:128.10px;width:35.50px;height:23.50px;border:1px solid #a9a9a9;background:#fff;"></div>
<div class="b" style="left:2306.90px;top:129.00px;width:1.00px;height:22.00px;background:#b4b4b4;"></div>
<div class="b" style="left:2315.00px;top:129.00px;width:1.00px;height:22.00px;background:#b4b4b4;"></div>
<div class="b" style="left:2321.20px;top:129.00px;width:1.00px;height:22.00px;background:#b4b4b4;"></div>
<div class="b" style="left:2325.40px;top:129.00px;width:1.00px;height:22.00px;background:#b4b4b4;"></div>
<div class="b" style="left:2346.10px;top:128.10px;width:35.70px;height:23.50px;border:1px solid #a9a9a9;background:#fff;"></div>
<svg class="b" style="left:2346px;top:128px;" width="36" height="24" viewBox="0 0 36 24"><g stroke="#000" stroke-width="2" fill="none" stroke-linecap="round" stroke-linejoin="round">
      <path d="M3.5 12H9.5M6.500 9L3.500 12L6.500 15"/><path d="M32.5 12H26.500M29.500 9L32.5 12L29.500 15"/>
      <path d="M18 3.500V8.500M15 6.500L18 3.500L21 6.500"/><path d="M18 20.5V15.5M15 17.5L18 20.5L21 17.5"/></g></svg>
<div class="t " style="left:2227.58px;top:159.00px;font-size:12px;line-height:12px;color:#1b1b1b;transform:scaleX(0.9728);transform-origin:0 0;">Scrollbars</div>
<div class="t " style="left:2286.88px;top:159.00px;font-size:12px;line-height:12px;color:#1b1b1b;transform:scaleX(0.9653);transform-origin:0 0;">Freq. Axis</div>
<div class="t " style="left:2347.88px;top:159.00px;font-size:12px;line-height:12px;color:#1b1b1b;transform:scaleX(1.0403);transform-origin:0 0;">Limits</div>
<div class="t " style="left:2437.88px;top:159.00px;font-size:12px;line-height:12px;color:#1b1b1b;transform:scaleX(1.0205);transform-origin:0 0;">Controls</div>
</body></html>
